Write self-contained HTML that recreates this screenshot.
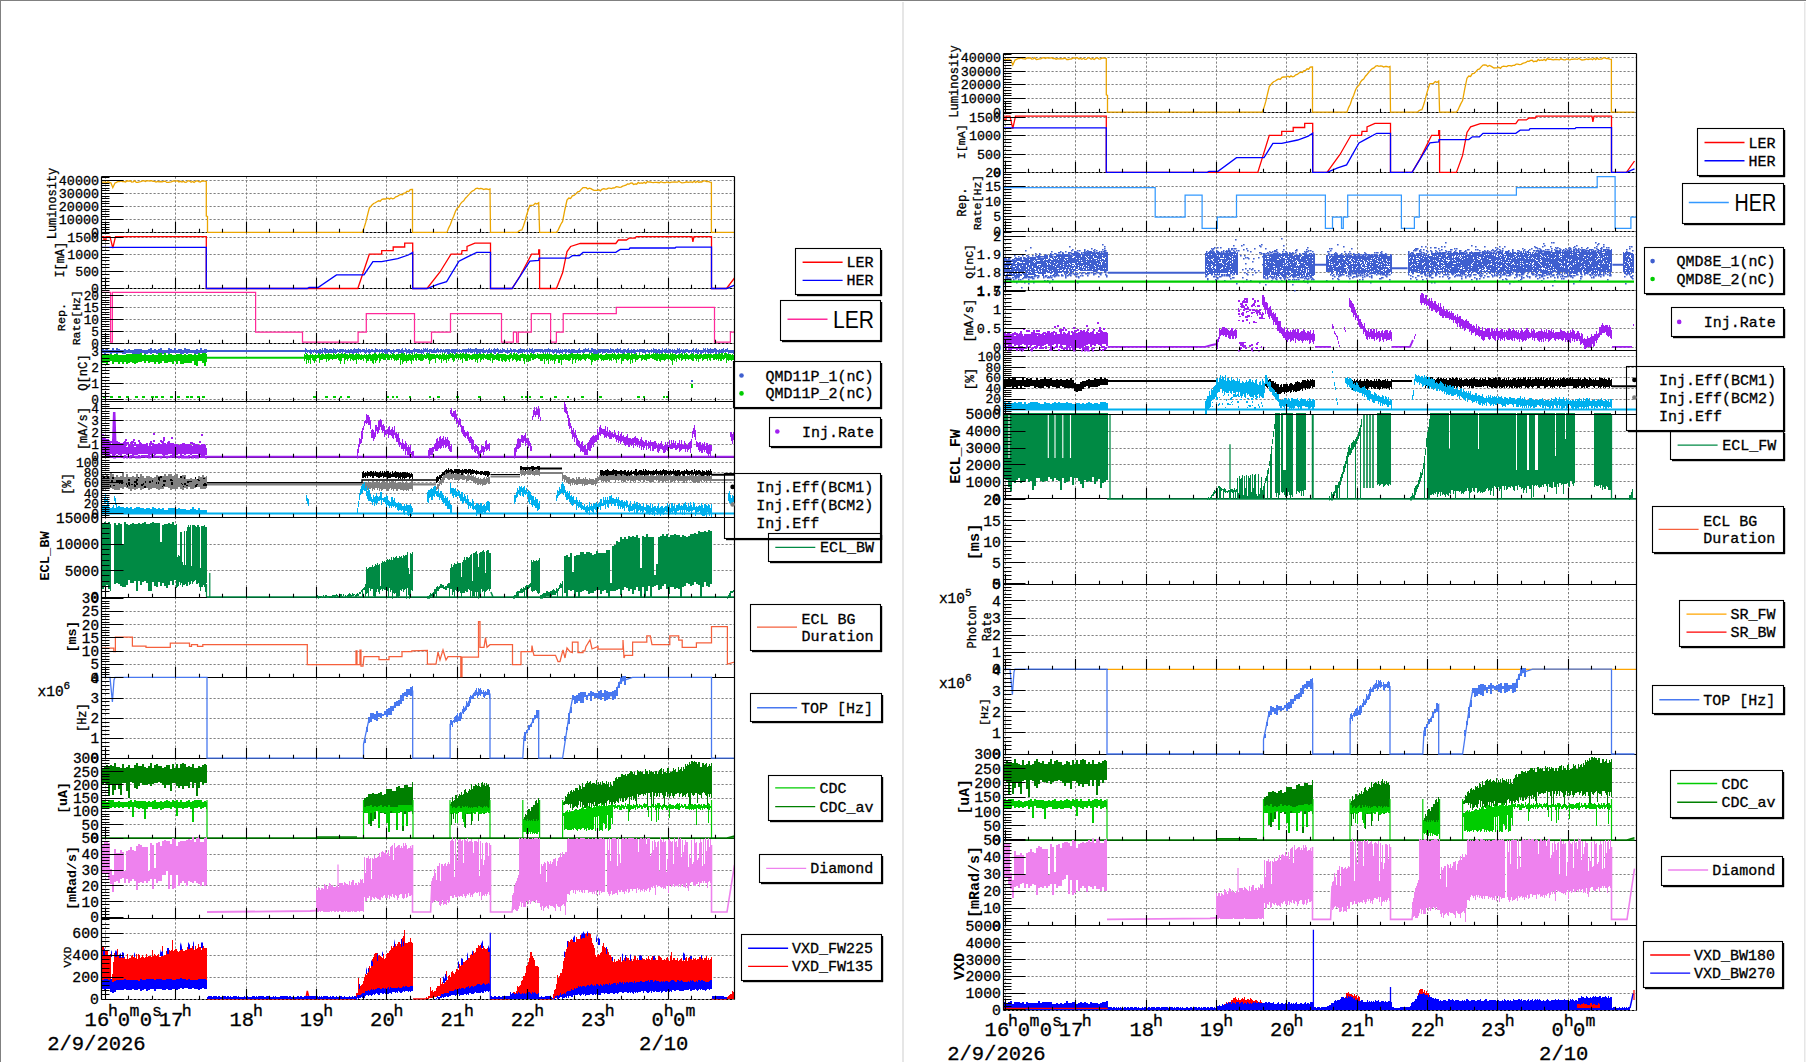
<!DOCTYPE html>
<html><head><meta charset="utf-8"><style>html,body{margin:0;padding:0;background:#fff;width:1806px;height:1062px;overflow:hidden}svg{display:block}</style></head><body>
<svg width="1806" height="1062" viewBox="0 0 1806 1062">
<rect x="0" y="0" width="1806" height="1062" fill="#fff"/>
<defs>
<clipPath id="cL_lumi"><rect x="101.5" y="175" width="633" height="58.9"/></clipPath>
<clipPath id="cL_I"><rect x="101.5" y="230.9" width="633" height="59.4"/></clipPath>
<clipPath id="cL_rep"><rect x="101.5" y="287.3" width="633" height="58.1"/></clipPath>
<clipPath id="cL_Q"><rect x="101.5" y="342.4" width="633" height="60.6"/></clipPath>
<clipPath id="cL_inj"><rect x="101.5" y="400" width="633" height="58.5"/></clipPath>
<clipPath id="cL_eff"><rect x="101.5" y="455.5" width="633" height="63"/></clipPath>
<clipPath id="cL_ecl"><rect x="101.5" y="515.5" width="633" height="83.2"/></clipPath>
<clipPath id="cL_ms"><rect x="101.5" y="595.7" width="633" height="83.3"/></clipPath>
<clipPath id="cL_top"><rect x="101.5" y="676" width="633" height="83.7"/></clipPath>
<clipPath id="cL_cdc"><rect x="101.5" y="756.7" width="633" height="82.9"/></clipPath>
<clipPath id="cL_dia"><rect x="101.5" y="836.6" width="633" height="83.2"/></clipPath>
<clipPath id="cL_vxd"><rect x="101.5" y="916.8" width="633" height="83.9"/></clipPath>
<clipPath id="cR_lumi"><rect x="1003.5" y="52" width="633" height="61.7"/></clipPath>
<clipPath id="cR_I"><rect x="1003.5" y="110.7" width="633" height="63.2"/></clipPath>
<clipPath id="cR_rep"><rect x="1003.5" y="170.9" width="633" height="61.8"/></clipPath>
<clipPath id="cR_Q"><rect x="1003.5" y="229.7" width="633" height="62.6"/></clipPath>
<clipPath id="cR_inj"><rect x="1003.5" y="289.3" width="633" height="62.2"/></clipPath>
<clipPath id="cR_eff"><rect x="1003.5" y="348.5" width="633" height="67.2"/></clipPath>
<clipPath id="cR_ecl"><rect x="1003.5" y="412.7" width="633" height="87.7"/></clipPath>
<clipPath id="cR_ms"><rect x="1003.5" y="497.4" width="633" height="88.1"/></clipPath>
<clipPath id="cR_pho"><rect x="1003.5" y="582.5" width="633" height="88.4"/></clipPath>
<clipPath id="cR_top"><rect x="1003.5" y="667.9" width="633" height="87.6"/></clipPath>
<clipPath id="cR_cdc"><rect x="1003.5" y="752.5" width="633" height="89.1"/></clipPath>
<clipPath id="cR_dia"><rect x="1003.5" y="838.6" width="633" height="88.6"/></clipPath>
<clipPath id="cR_vxd"><rect x="1003.5" y="924.2" width="633" height="87.3"/></clipPath>
</defs>
<g>
<path fill="none" stroke="#808080" stroke-width="1" stroke-dasharray="2.2 1.8" d="M105.5 176.5V232.4M175.5 176.5V232.4M246.5 176.5V232.4M316.5 176.5V232.4M386.5 176.5V232.4M457.5 176.5V232.4M527.5 176.5V232.4M597.5 176.5V232.4M668.5 176.5V232.4M101.5 219.5H734.5M101.5 206.5H734.5M101.5 193.5H734.5M101.5 180.5H734.5M105.5 232.4V288.8M175.5 232.4V288.8M246.5 232.4V288.8M316.5 232.4V288.8M386.5 232.4V288.8M457.5 232.4V288.8M527.5 232.4V288.8M597.5 232.4V288.8M668.5 232.4V288.8M101.5 271.5H734.5M101.5 254.5H734.5M101.5 237.5H734.5M105.5 288.8V343.9M175.5 288.8V343.9M246.5 288.8V343.9M316.5 288.8V343.9M386.5 288.8V343.9M457.5 288.8V343.9M527.5 288.8V343.9M597.5 288.8V343.9M668.5 288.8V343.9M101.5 331.5H734.5M101.5 319.5H734.5M101.5 307.5H734.5M101.5 295.5H734.5M105.5 343.9V401.5M175.5 343.9V401.5M246.5 343.9V401.5M316.5 343.9V401.5M386.5 343.9V401.5M457.5 343.9V401.5M527.5 343.9V401.5M597.5 343.9V401.5M668.5 343.9V401.5M101.5 399.5H734.5M101.5 383.5H734.5M101.5 367.5H734.5M101.5 351.5H734.5M105.5 401.5V457M175.5 401.5V457M246.5 401.5V457M316.5 401.5V457M386.5 401.5V457M457.5 401.5V457M527.5 401.5V457M597.5 401.5V457M668.5 401.5V457M101.5 444.5H734.5M101.5 432.5H734.5M101.5 420.5H734.5M101.5 408.5H734.5M105.5 457V517M175.5 457V517M246.5 457V517M316.5 457V517M386.5 457V517M457.5 457V517M527.5 457V517M597.5 457V517M668.5 457V517M101.5 513.5H734.5M101.5 503.5H734.5M101.5 493.5H734.5M101.5 482.5H734.5M101.5 472.5H734.5M101.5 462.5H734.5M105.5 517V597.2M175.5 517V597.2M246.5 517V597.2M316.5 517V597.2M386.5 517V597.2M457.5 517V597.2M527.5 517V597.2M597.5 517V597.2M668.5 517V597.2M101.5 570.5H734.5M101.5 544.5H734.5M105.5 597.2V677.5M175.5 597.2V677.5M246.5 597.2V677.5M316.5 597.2V677.5M386.5 597.2V677.5M457.5 597.2V677.5M527.5 597.2V677.5M597.5 597.2V677.5M668.5 597.2V677.5M101.5 664.5H734.5M101.5 651.5H734.5M101.5 637.5H734.5M101.5 624.5H734.5M101.5 611.5H734.5M105.5 677.5V758.2M175.5 677.5V758.2M246.5 677.5V758.2M316.5 677.5V758.2M386.5 677.5V758.2M457.5 677.5V758.2M527.5 677.5V758.2M597.5 677.5V758.2M668.5 677.5V758.2M101.5 738.5H734.5M101.5 718.5H734.5M101.5 698.5H734.5M105.5 758.2V838.1M175.5 758.2V838.1M246.5 758.2V838.1M316.5 758.2V838.1M386.5 758.2V838.1M457.5 758.2V838.1M527.5 758.2V838.1M597.5 758.2V838.1M668.5 758.2V838.1M101.5 824.5H734.5M101.5 811.5H734.5M101.5 798.5H734.5M101.5 784.5H734.5M101.5 771.5H734.5M105.5 838.1V918.3M175.5 838.1V918.3M246.5 838.1V918.3M316.5 838.1V918.3M386.5 838.1V918.3M457.5 838.1V918.3M527.5 838.1V918.3M597.5 838.1V918.3M668.5 838.1V918.3M101.5 901.5H734.5M101.5 885.5H734.5M101.5 870.5H734.5M101.5 854.5H734.5M105.5 918.3V999.2M175.5 918.3V999.2M246.5 918.3V999.2M316.5 918.3V999.2M386.5 918.3V999.2M457.5 918.3V999.2M527.5 918.3V999.2M597.5 918.3V999.2M668.5 918.3V999.2M101.5 977.5H734.5M101.5 955.5H734.5M101.5 933.5H734.5"/>
<path stroke="#000" stroke-width="1.1" stroke-dasharray="3 1" d="M101.5 232.5H734.5"/>
<path stroke="#000" stroke-width="1.1" stroke-dasharray="3 1" d="M101.5 288.5H734.5"/>
<path stroke="#000" stroke-width="1.1" stroke-dasharray="3 1" d="M101.5 343.5H734.5"/>
<path stroke="#000" stroke-width="1.1" d="M101.5 401.5H734.5"/>
<path stroke="#000" stroke-width="1.1" d="M101.5 457.5H734.5"/>
<path stroke="#000" stroke-width="1.1" d="M101.5 517.5H734.5"/>
<path stroke="#000" stroke-width="1.1" d="M101.5 597.5H734.5"/>
<path stroke="#000" stroke-width="1.1" d="M101.5 677.5H734.5"/>
<path stroke="#000" stroke-width="1.1" d="M101.5 758.5H734.5"/>
<path stroke="#000" stroke-width="1.1" d="M101.5 838.5H734.5"/>
<path stroke="#000" stroke-width="1.1" d="M101.5 918.5H734.5"/>
<path stroke="#000" stroke-width="1.1" stroke-dasharray="3 1" d="M101.5 999.5H734.5"/>
<g clip-path="url(#cL_lumi)">
<path fill="none" stroke="#eba500" stroke-width="1.3" d="M101.5 182.4L103.1 182.2H104.8L106.4 182.7L108 181.8L109.5 182.3L111 183L112.8 187.7L115 183L116.5 182.3L118 181.5L119.5 181.7L121 180.9L122.6 181.5L124.1 181.7L125.6 182L127.1 180.8L128.7 181.1L130.2 180.8L131.7 182.1L133.2 181.8L134.7 180.7L136.3 182.4L137.8 182.3L139.3 181.8L140.8 181.7L142.4 180.9L143.9 180.6L145.4 181.6L146.9 180.7L148.4 180.9L150 181L151.5 180.7L153 181.4H154.5L156.1 182.1L157.6 181.5L159.1 181.8L160.6 181.5L162.2 181.8L163.7 181.4L165.2 181.1L166.7 182.4H168.2L169.8 182.1L171.3 181.9L172.8 181.2L174.3 181L175.9 181.1L177.4 180.7L178.9 182L180.4 181.3L181.9 182.1L183.5 181.3L185 182.3L186.5 182.1L188 180.6L189.6 181L191.1 182.2L192.6 181.4L194.1 182.4L195.6 181.3L197.2 180.7L198.7 181.7L200.2 182L201.7 181.1L203.3 180.8L204.8 181.2L206.3 181.5V216L207.5 216.5V232.4H362.2L364 228L365.8 222.2L367.5 215.1L369.3 208L372 205L373.6 203.5L375.3 202.8L376.9 201.7L378.6 200.8L380.2 201.2L381.9 199.3L383.5 199H385L386.5 198.8L388 198.2L389.5 199.1L391 198L392.5 198.8L394 198.5L395.7 196.9L397.3 196.5L399 195.2L400.7 194.4L402.3 194.8L404 193L405.6 192.8L407.1 191.2L408.7 191.6L410.2 189.7L411.8 189.5H412.5V232.4H446.9L448.6 228.1L450.3 224.8L452 220L453.7 216.3L455.5 211.3L457.2 208.1L458.8 207.1L460.5 203.8L462.1 201.9L463.7 200.9L465.4 198.2L467 196.6L468.8 194.6L470.5 192.6L472.3 191.1L474 190.3L475.8 188.6L477.4 188.2L479 188.9L480.5 188.5L482.1 188.7L483.7 189.6L485.3 188.8L486.8 189L488.4 189.6L490 189L490.5 232.4H517.4L518.9 231L520.4 230.2L521.9 230L523.5 225.8L525.1 220.7L526.7 214.8L528.3 209.8L529.9 205.4L531.7 205.3L533.4 205.2L535.2 203.3L536.9 204.1L538.7 202.8L539.6 232.4H556.4L558 230.3L559.5 227.1L561 224L562.6 221.4L564.8 210L567 200.1L568.8 198L570.6 198.5L572.3 195.9L574.1 195.5L575.9 193.9L577.7 191.9L579.5 191.4L581.2 189.4L583 187.7L584.6 187.6L586.2 187.7L587.7 189L589.3 188.1L590.9 188.7L592.5 189.6L594 190.4L595.6 190.3L597.2 190.4L598.8 189.8L600.4 190.8L601.9 189.3L603.5 188.7L605.1 189L606.7 189.1L608.2 188.2H609.8L611.4 188.6L613 188L614.6 187.9L616.2 186.7L617.8 186.8L619.4 187.3L621.1 187.1L622.7 186.1L624.3 185.7L625.9 185.2L627.5 184L629.1 184.2L630.6 183.2L632.1 183L633.6 184.5L635.2 183.9L636.7 184.2L638.2 182.4L639.7 183.3L641.2 182.9L642.7 183.2L644.2 182.3L645.8 183.4L647.3 181.5L648.8 182.2L650.3 182L651.8 182.4L653.3 182.7L654.8 182.4H656.3L657.9 182.5L659.4 182.7L660.9 181.7L662.4 182.3L663.9 182.7H665.4L666.9 181.9L668.4 182.5L670 182.7L671.5 182.1L673 182.2L674.5 181.8L676 182.1L677.5 182.2L679 181.2L680.5 182.3L682 182.9L683.6 182.7L685.1 182.4L686.6 181.8L688.1 182.4L689.6 182.1L691.1 181.9L692.6 182.6L694.1 181.3L695.7 182.5L697.2 181.2L698.7 182.2L700.2 182H701.7L703.4 180.9L705 180.8L706.6 181.5H708.2L709.8 182.1L711.4 182.3V232.4H734.5"/>
</g>
<g clip-path="url(#cL_I)">
<path fill="none" stroke="#ff0000" stroke-width="1.3" d="M101.5 236.6H104V240H106V236.6H110L112.8 248L115.5 236.6H206.3V288.5H357.8L369.3 254.2H381.7V250.6H393.2V247H404.7V243.2H412.7V288.5H427L440 272L451 254.2H461.6L462 250.6H467V246.5L474.9 243.2H490.5V288.5H512L520 276L531.6 254.2H538.7V250H539.6V288.5H556.4L562.6 272.8L567 251.5L570.6 246.5L580.3 243.5H615.8L618.4 240H626.4L629 238.2H635.3L636.2 236.6H692L692.9 241.8L694 236.6H711.5V288.5H726.5L734.5 278"/>
<path fill="none" stroke="#0000ff" stroke-width="1.3" d="M101.5 247.4H206.3V288.5H307.3L309 287.5H318L336.5 274.9H364L372.9 261.6H381.7L397.7 258.6L408.3 255L412.7 252.4V288.5H427L437.7 284.3L446.6 281.6L459 261.2L466 257.7L476.7 252.4H490.5V288.5H512.1L529.9 261.2L538.7 260.4L539 258.2H568.8L572.4 255.6H579.5L583 252.4H615.8L620.2 249.4H629L630 248H675.1L676 247.1H711.5V288.5H726.5L734.5 285.2"/>
</g>
<g clip-path="url(#cL_rep)">
<path fill="none" stroke="#ff2a9a" stroke-width="1.25" d="M101.5 292.3H110.6V342.2H112.4V292.3H255.6V332.1H302.5V342.2H358.1V332.1H366.3V313.5H414.5V342.2H431.5V332.1H450.5V313.5H501.5V342.2H513.4V332.1H516.6V342.2H518.3V332.1H531.3V313.5H550.6V342.2H556.4V332.1H563.2V313.5H616.3V307.3H714.5V342.2H730.4V332.1H734.5"/>
</g>
<g clip-path="url(#cL_Q)">
<path fill="#3f5fcf" d="M102 349H104V350H106V349V348H108V349V350H110V349V350H112V348H114V349V350H116V349V348H118V349H120V350H122H124V349H126V348V350H128V349H130V350H132V348V350H134V349H136H138H140H142V348V350H144H146V349V350H148V349H150V350V348H152V350H154V349H156V348V350H158V349H160V348H162V350H164V349V350H166V349V350H168V348H170V349H172V350H174V348H176V350H178V349H180H182V350H184V348H186V349H188H190V350H192V349V350H194V349V350H196V349H198V348V350H200V349V348H202V350H204V349H206H207V348V353H206H204H202V354V353H200V354V353H198V354H196H194V353H192V354V353H190H188V354H186V353H184V354H182V353V354H180V353H178H176V354V353H174H172V354V353H170V354H168V353H166H164V354H162V353H160V354H158V353V354H156V353H154H152V354H150V353H148V354H146H144V353H142V354V353H140V354H138V353V354H136H134V353V354H132V353H130H128V354V353H126V354H124H122V353H120H118V354H116V353H114H112V354H110V353H108H106V354H104V353H102V354Z"/>
<path fill="none" stroke="#3f5fcf" stroke-width="2" d="M207 350.9H304"/>
<path fill="#3f5fcf" d="M304 350H305V348H306V349H307V350H308H309H310V349H311V350H312H313H314V349H315V350H316H317H318H319V349H320H321V350H322V348H323V350H324V348H325H326V349H327H328V350H329V349H330H331H332V350H333V348H334V349H335H336V350H337V349H338V350H339V349H340H341H342H343H344V350H345V349H346V350H347H348V349H349V350H350V349H351H352V350H353V349H354V348H355V349H356H357H358V348H359V349H360H361V350H362V349H363H364H365V350H366V348H367V350H368V349H369H370V350H371V349H372H373V350H374H375V348H376V349H377H378V350H379V349H380V350H381V349H382H383V350H384V349H385H386V350H387V349H388H389H390V350H391H392H393V349H394V350H395H396V349H397H398H399H400V350H401V349H402V348H403V350H404H405V348H406V349H407V350H408V349H409H410V350H411H412H413V349H414V348H415V349H416H417H418H419H420V350H421V349H422V350H423V348H424V349H425V348H426V349H427V348H428V350H429V349H430H431H432V350H433V349H434V348H435V350H436V349H437V348H438V349H439V350H440V349H441H442V350H443V349H444V350H445V349H446H447H448H449H450V350H451V349H452H453H454H455H456H457H458V350H459V349H460V350H461H462V349H463H464H465H466H467H468V348H469V349H470V348H471V349H472H473H474H475V348H476H477V349H478H479H480H481H482H483V348H484V350H485H486V349H487V350H488V349H489V348H490V350H491V349H492V350H493V349H494V348H495V349H496H497V348H498V349H499V350H500V349H501V350H502V348H503V349H504H505V350H506H507V348H508V350H509H510V348H511V349H512V350H513V349H514H515H516V350H517H518V349H519H520V348H521V349H522H523H524H525V350H526V349H527H528V350H529V348H530V349H531H532V348H533V350H534V349H535H536H537H538H539H540H541H542H543V350H544V349H545H546H547H548V348H549V349H550H551V350H552V349H553V350H554V349H555H556H557V350H558V348H559V350H560V349H561V350H562V349H563V350H564V349H565H566H567V350H568V349H569H570V350H571V349H572H573H574H575V350H576H577H578V349H579V348H580V350H581H582H583V349H584H585V348H586V349H587H588V348H589V350H590H591V348H592H593V349H594H595H596V350H597H598V349H599H600H601H602H603H604H605H606H607H608H609V350H610V348H611V349H612H613H614V350H615V349H616H617V348H618V349H619H620V348H621V350H622H623V349H624H625H626V350H627V349H628V348H629V350H630H631V349H632V350H633V349H634H635V350H636H637V349H638V350H639V349H640H641H642H643H644H645V350H646H647V349H648V350H649H650H651V349H652V350H653V348H654V349H655H656H657V350H658V349H659H660V350H661H662V348H663V350H664V349H665H666V348H667V350H668V349H669H670H671V350H672V349H673V350H674V349H675V350H676H677V348H678V349H679V348H680V350H681V349H682V350H683V349H684V350H685V349H686H687H688V350H689H690H691H692V349H693V348H694V350H695V349H696V348H697V350H698V349H699V350H700H701H702H703V348H704V349H705V348H706V350H707V348H708V349H709H710V348H711V349H712H713H714V348H715H716V349H717V350H718H719V349H720V350H721V349H722H723V348H724V350H725V349H726H727V348H728V350H729H730H731H732H733H734V349V353V354H733V353H732H731H730H729V354H728V352H727H726V353H725V352H724V353H723H722H721H720H719V354H718V352H717V354H716H715V352H714V353H713H712H711V354H710V353H709V354H708V353H707V352H706V354H705V352H704V353H703H702V354H701H700V352H699V354H698H697V353H696H695V352H694V354H693V352H692V354H691V352H690V353H689H688V352H687H686V353H685H684H683V354H682V352H681V353H680V354H679V353H678H677V354H676H675V353H674H673V354H672V352H671V354H670V353H669H668H667H666H665H664V352H663V353H662V354H661V353H660V354H659V353H658V354H657H656H655V353H654H653V352H652V353H651V352H650V353H649H648V352H647H646V354H645V353H644H643H642V352H641H640V353H639V352H638H637H636V354H635H634V353H633H632H631H630H629H628H627H626V352H625V354H624V353H623V354H622V353H621H620V352H619V353H618H617H616V352H615V353H614H613V352H612V353H611H610H609H608H607V352H606V353H605H604H603V354H602V352H601V353H600H599H598V354H597H596H595H594H593V352H592V354H591V353H590V354H589V352H588H587H586H585V353H584V354H583V353H582V352H581V353H580H579H578H577H576H575H574H573V354H572V353H571V354H570V353H569H568V352H567V353H566V354H565V352H564H563V354H562V353H561H560V354H559V353H558H557V354H556V352H555V353H554V354H553V353H552V352H551H550V354H549V352H548V354H547V352H546V354H545V352H544V353H543H542V352H541V353H540V352H539H538H537H536H535V353H534V354H533V353H532V354H531V352H530V353H529V352H528V354H527V352H526H525V353H524V352H523V353H522H521H520H519V354H518V353H517V352H516H515V353H514V352H513H512V354H511V352H510V353H509H508V354H507V353H506H505V352H504H503V353H502H501H500H499V354H498V352H497H496V354H495H494V353H493V352H492V353H491H490H489H488V354H487V352H486V353H485H484V354H483V353H482V352H481V354H480V353H479H478V354H477H476V352H475V354H474V352H473V353H472H471H470V352H469V353H468V352H467V354H466H465V352H464V353H463V352H462V353H461V352H460V353H459V352H458H457H456V354H455H454V353H453H452H451V352H450V354H449H448H447V352H446V353H445V354H444V352H443V353H442V352H441V353H440V352H439V353H438V352H437V353H436H435H434H433H432H431V352H430V354H429V352H428V354H427V352H426H425H424V354H423V353H422V354H421V353H420H419H418H417V352H416H415V354H414V352H413V353H412V354H411V353H410V354H409V353H408H407V354H406V352H405H404V354H403H402H401V353H400H399V354H398V352H397H396H395V353H394V354H393V352H392V354H391V353H390V352H389H388V354H387V353H386V354H385V353H384V352H383V354H382V352H381H380V354H379V352H378H377H376V353H375H374V352H373H372H371V353H370V354H369V353H368V352H367V353H366V354H365V353H364V352H363H362H361V353H360V352H359V354H358V353H357H356H355H354V354H353H352V353H351H350H349H348H347H346V354H345V352H344H343V354H342V352H341V353H340H339V352H338H337V353H336V354H335V353H334V354H333V353H332H331H330H329H328H327H326V354H325V353H324V352H323V354H322V353H321V354H320H319V353H318H317V354H316V353H315V352H314V353H313V352H312V354H311H310V353H309V352H308V353H307V352H306V354H305V352H304Z"/>
<path fill="#00cc00" d="M102 355V354H104V355V354H106V355H108H110V354H112V355H114V354H116V355V354H118V355H120H122V354V355H124H126V354H128H130H132V355V354H134V355V354H136H138H140V353H142V354V355H144V354H146V355H148H150V354V355H152V354H154V353V355H156V353V355H158V354V353H160V354V353H162V355H164V353H166V355H168V354H170H172V355H174V353V355H176V354H178H180H182V355H184V354H186V355H188V353V354H190H192V355H194V354H196V355H198V353H200V354H202V355V353H204H206V354H207V361V362H206V363V366H204V364V363H202V361H200V364V361H198V366H196V365H194V362V361H192V364V363H190V361V363H188V365V363H186V364V363H184V361V364H182V362V364H180V365V361H178V363V364H176V363V361H174V362V364H172V362H170H168V366V363H166H164V365V361H162V366V363H160V361V364H158V362H156V363V364H154V361V362H152V364V362H150V363H148V361H146V363H144V361H142V364V362H140H138V365V363H136V365V364H134V362V363H132V364V362H130V363H128V361V364H126V362H124V363V364H122V365V362H120V364H118V365V362H116H114V363V364H112V363V361H110V363V362H108V364V365H106V363H104V364V363H102V365Z"/>
<path fill="none" stroke="#00cc00" stroke-width="2" d="M207 357.7H304"/>
<path fill="#00cc00" d="M304 354H305V355H306V353H307V354H308V355H309H310V354H311V355H312V354H313V355H314H315V354H316V355H317H318V353H319V354H320V355H321V354H322H323H324V355H325V354H326H327H328V353H329V354H330H331H332V355H333V353H334V354H335V355H336V354H337H338V353H339V354H340H341V353H342V354H343H344V353H345V354H346H347H348V355H349V353H350V354H351H352H353H354V355H355V354H356V353H357V354H358H359H360V355H361V354H362V355H363H364V354H365V355H366V354H367V355H368V354H369H370H371V355H372V354H373H374V353H375H376V354H377V355H378V354H379V353H380V354H381V353H382V354H383V353H384V354H385H386H387H388H389V355H390V354H391V355H392V353H393V354H394H395V355H396V354H397H398H399H400H401V353H402H403V354H404V353H405V355H406V354H407V355H408V354H409H410H411V355H412V353H413V355H414V354H415H416V353H417V354H418H419H420H421H422H423V355H424V354H425V355H426V353H427V354H428V353H429V354H430H431H432H433H434H435V355H436V354H437H438V355H439V354H440H441V355H442V353H443V354H444V353H445V355H446V354H447V355H448V354H449H450V353H451V354H452V353H453V354H454V355H455V354H456V353H457V354H458H459H460V353H461V354H462V353H463H464V354H465H466V353H467V354H468H469H470V355H471H472V354H473H474H475H476H477H478H479V353H480V354H481H482H483V353H484V354H485V355H486V354H487H488H489H490V353H491H492V354H493H494V355H495H496V354H497V353H498V354H499H500H501H502H503H504H505H506V355H507H508H509V354H510V353H511V354H512V355H513V353H514H515V354H516V353H517V354H518V355H519H520V354H521H522V353H523V354H524H525H526V355H527V354H528H529V355H530V353H531H532V354H533H534H535H536V355H537V353H538V354H539H540H541H542H543V353H544V354H545H546H547V353H548V354H549H550H551H552V355H553H554V354H555H556H557V355H558H559H560V354H561H562V355H563V354H564H565H566H567V355H568V354H569H570H571V353H572H573V354H574H575H576H577V353H578V354H579H580H581V355H582V354H583V353H584V354H585H586H587H588H589V353H590V355H591V353H592H593V354H594H595H596H597H598V353H599V355H600V354H601H602V355H603H604H605V354H606V353H607V354H608H609H610H611H612V353H613V354H614V353H615V354H616V355H617V354H618V353H619V354H620H621H622H623V353H624V354H625H626H627V353H628H629H630V355H631V353H632V354H633H634H635H636V353H637V355H638H639V353H640V355H641H642V354H643V355H644H645V354H646H647H648H649V353H650V355H651V354H652H653V353H654V354H655V353H656V354H657V353H658V354H659H660H661H662V353H663V354H664H665V353H666V354H667H668H669V355H670V353H671V354H672V353H673V354H674H675H676V355H677H678V354H679H680H681V353H682V354H683V355H684V353H685V354H686V353H687V354H688V355H689H690V354H691H692V353H693V354H694V355H695V354H696H697H698V355H699V354H700H701H702V355H703V354H704H705H706H707H708H709H710H711H712V355H713V354H714H715H716H717H718H719V353H720V354H721V353H722H723V355H724V353H725H726H727V354H728H729H730H731V355H732V354H733V355H734V354V362V359V360H733H732V361H731V360H730H729V361H728V360H727V363H726V358H725V359H724V360H723V359H722V361H721H720V359H719V361H718V359H717V360H716V359H715V360H714H713V358H712H711V361H710V360H709V358H708V361H707V359H706H705H704V360H703V361H702V358H701V359H700H699V362H698V359H697V361H696V359H695V358H694V361H693H692V360H691V359H690H689V360H688V359H687H686V361H685V359H684H683V360H682V361H681V358H680V360H679V359H678V358H677V362H676V359H675V361H674V360H673V365H672V361H671V360H670V359H669V360H668V359H667H666V360H665V361H664V360H663H662H661V362H660V361H659V359H658V361H657H656V360H655H654V359H653H652V358H651H650V359H649H648H647V361H646V360H645H644V359H643V360H642V361H641V358H640H639V359H638V360H637H636V362H635V359H634H633V363H632V360H631V364H630V359H629V360H628V361H627V360H626V359H625H624V361H623H622V364H621V358H620V359H619V360H618V359H617V363H616V360H615V359H614V360H613V358H612V361H611V360H610V361H609V359H608V360H607H606H605H604V361H603V360H602V361H601V359H600V358H599V360H598H597H596V361H595H594V360H593V362H592V365H591V360H590V359H589H588V358H587V359H586V361H585V360H584V359H583H582V360H581V361H580V360H579V361H578V359H577V360H576V363H575V359H574V360H573V364H572V358H571V360H570V361H569H568V360H567H566H565V359H564V360H563H562V365H561V360H560V363H559H558V359H557H556V361H555V364H554V360H553V361H552V360H551V361H550V359H549V364H548V360H547V361H546V359H545V364H544V359H543V361H542H541H540V359H539H538V358H537H536V359H535H534V360H533H532V358H531V361H530H529V362H528V360H527V362H526V359H525V364H524V361H523V358H522H521V361H520H519V360H518V361H517V362H516V360H515V359H514V360H513V361H512V358H511V359H510V362H509V360H508V359H507V361H506V362H505V361H504V360H503V362H502V361H501V358H500V361H499H498V360H497H496V359H495V360H494H493V363H492V358H491V361H490V360H489H488H487V359H486H485V358H484V360H483V359H482V360H481V362H480V358H479V359H478V363H477V360H476V362H475V359H474H473V360H472H471V359H470V360H469V358H468V361H467H466H465V359H464V358H463V363H462V359H461V360H460V358H459V360H458V358H457V359H456V358H455V361H454V362H453V360H452V358H451H450V359H449V361H448V359H447V363H446V360H445H444V361H443V359H442V363H441V359H440V360H439V359H438V358H437H436V363H435V359H434H433H432V360H431V361H430V364H429V360H428V358H427V359H426H425V358H424V360H423V361H422H421H420V360H419H418V358H417V361H416V360H415V358H414V361H413V360H412V364H411V361H410V360H409V361H408H407V363H406V361H405H404V362H403V364H402V360H401V365H400V358H399V360H398H397V361H396V360H395V361H394V359H393V358H392V360H391V358H390V360H389H388H387V358H386V360H385H384H383V359H382H381V361H380V363H379V358H378V360H377V361H376V363H375V360H374V364H373V363H372V361H371H370V359H369V361H368H367V363H366V359H365V358H364V361H363V359H362V360H361H360V359H359V360H358V359H357V364H356V360H355H354V361H353V360H352V359H351V361H350V358H349V359H348V361H347V359H346V360H345V364H344V358H343H342V361H341V364H340V361H339V360H338V358H337V359H336H335H334H333V360H332V359H331H330V360H329V361H328V359H327V362H326V359H325H324H323V360H322H321H320V363H319V358H318H317V359H316V361H315V363H314V361H313V360H312V358H311V364H310V360H309V363H308V360H307V364H306V359H305V361H304Z"/>
<path fill="#00cc00" d="M103 396H106V398H103Z"/>
<path fill="#00cc00" d="M110 396H113V398H110Z"/>
<path fill="#00cc00" d="M118 396H121V398H118Z"/>
<path fill="#00cc00" d="M126 396H129V398H126Z"/>
<path fill="#00cc00" d="M135 396H138V398H135Z"/>
<path fill="#00cc00" d="M142 396H145V398H142Z"/>
<path fill="#00cc00" d="M151 396H154V398H151Z"/>
<path fill="#00cc00" d="M155 396H158V398H155Z"/>
<path fill="#00cc00" d="M161 396H164V398H161Z"/>
<path fill="#00cc00" d="M170 396H173V398H170Z"/>
<path fill="#00cc00" d="M177 396H180V398H177Z"/>
<path fill="#00cc00" d="M186 396H189V398H186Z"/>
<path fill="#00cc00" d="M190 396H193V398H190Z"/>
<path fill="#00cc00" d="M197 396H200V398H197Z"/>
<path fill="#00cc00" d="M202 396H205V398H202Z"/>
<path fill="#00cc00" d="M313 396H316V398H313Z"/>
<path fill="#00cc00" d="M325 396H328V398H325Z"/>
<path fill="#00cc00" d="M333 396H336V398H333Z"/>
<path fill="#00cc00" d="M340 396H342V398H340Z"/>
<path fill="#00cc00" d="M347 396H350V398H347Z"/>
<path fill="#00cc00" d="M387 396H389V398H387Z"/>
<path fill="#00cc00" d="M392 396H394V398H392Z"/>
<path fill="#00cc00" d="M396 396H398V398H396Z"/>
<path fill="#00cc00" d="M409 396H411V398H409Z"/>
<path fill="#00cc00" d="M429 396H431V398H429Z"/>
<path fill="#00cc00" d="M437 396H440V398H437Z"/>
<path fill="#00cc00" d="M456 396H459V398H456Z"/>
<path fill="#00cc00" d="M478 396H481V398H478Z"/>
<path fill="#00cc00" d="M503 396H505V398H503Z"/>
<path fill="#00cc00" d="M521 396H523V398H521Z"/>
<path fill="#00cc00" d="M525 396H528V398H525Z"/>
<path fill="#00cc00" d="M529 396H531V398H529Z"/>
<path fill="#00cc00" d="M540 396H543V398H540Z"/>
<path fill="#00cc00" d="M554 396H557V398H554Z"/>
<path fill="#00cc00" d="M567 396H569V398H567Z"/>
<path fill="#00cc00" d="M581 396H584V398H581Z"/>
<path fill="#00cc00" d="M599 396H602V398H599Z"/>
<path fill="#00cc00" d="M637 396H640V398H637Z"/>
<path fill="#00cc00" d="M643 396H645V398H643Z"/>
<path fill="#00cc00" d="M663 396H665V398H663Z"/>
<path fill="#00cc00" d="M666 396H669V398H666Z"/>
<path fill="#3f5fcf" d="M691 380H693V382H691Z"/>
<path fill="#00cc00" d="M691 384H693V388H691Z"/>
</g>
<g clip-path="url(#cL_inj)">
<path fill="#a020f0" d="M102 435V437H104V436V438H106V441H108H110V444H112V442H114V444H116V445V443H118V445V442H120V446V443H122V445H124V443V444H126V445V447H128V444H130V445H132V444V445H134V443V447H136V445H138H140V443H142V444V446H144V445V444H146V446V443H148V444V446H150H152V445H154V444H156H158V447V444H160V446V447H162V446V445H164V444H166V447V446H168V444H170V445H172V447V445H174V447V444H176V447V445H178V447H180V445H182V444H184V446H186V445V444H188V445V444H190V446V445H192V446V447H194V446H196V445H198V446V447H200V448V446H202V447V446H204V445H206V447V448H207V445V454V455H206V454V455H204H202V454V455H200V454V455H198V454H196V455V454H194V455V454H192V455H190V454H188H186V455H184V454H182V455H180V454H178V455H176V454V455H174H172V454H170H168V455H166H164V454V455H162V454H160V455V454H158H156V455H154V454H152V455H150V454V455H148V454H146V455V454H144V455V454H142V455V454H140V455V454H138V455H136V454V455H134V454V455H132V454H130V455V454H128V455H126V454H124H122V455H120H118V454H116V455H114V454V455H112V454H110V455H108V454H106V455H104V454V455H102V454Z"/>
<path fill="#a020f0" d="M133 439h2v2h-2zM138 440h2v2h-2zM107 455h2v2h-2zM122 444h2v2h-2zM167 456h2v2h-2zM121 443h2v2h-2zM116 455h2v2h-2zM149 456h2v2h-2zM128 456h2v2h-2zM191 442h2v2h-2zM201 444h2v2h-2zM186 456h2v2h-2zM159 456h2v2h-2zM108 441h2v2h-2zM114 458h2v2h-2zM139 445h2v2h-2zM120 455h2v2h-2zM139 457h2v2h-2zM150 443h2v2h-2zM119 456h2v2h-2zM153 455h2v2h-2zM157 445h2v2h-2zM122 461h2v2h-2zM139 442h2v2h-2zM124 455h2v2h-2zM102 437h2v2h-2zM182 455h2v2h-2zM136 456h2v2h-2zM170 455h2v2h-2zM185 456h2v2h-2zM152 455h2v2h-2zM172 443h2v2h-2zM196 444h2v2h-2zM122 445h2v2h-2zM172 444h2v2h-2zM150 456h2v2h-2zM153 445h2v2h-2zM202 446h2v2h-2zM138 457h2v2h-2zM198 445h2v2h-2zM145 455h2v2h-2zM110 441h2v2h-2zM140 443h2v2h-2zM181 455h2v2h-2zM146 443h2v2h-2zM120 459h2v2h-2zM198 446h2v2h-2zM144 455h2v2h-2zM153 444h2v2h-2zM146 455h2v2h-2zM173 455h2v2h-2zM130 455h2v2h-2zM190 445h2v2h-2zM160 457h2v2h-2zM142 455h2v2h-2zM137 444h2v2h-2zM143 444h2v2h-2zM184 446h2v2h-2zM139 442h2v2h-2zM131 455h2v2h-2zM105 455h2v2h-2zM136 444h2v2h-2zM184 444h2v2h-2zM151 455h2v2h-2zM138 455h2v2h-2zM154 444h2v2h-2zM171 437h2v2h-2zM189 459h2v2h-2zM122 443h2v2h-2zM184 457h2v2h-2zM162 443h2v2h-2zM201 446h2v2h-2zM134 444h2v2h-2zM203 456h2v2h-2zM152 444h2v2h-2zM163 439h2v2h-2zM165 445h2v2h-2zM188 458h2v2h-2zM163 437h2v2h-2zM159 444h2v2h-2zM203 444h2v2h-2zM160 440h2v2h-2zM124 455h2v2h-2zM185 457h2v2h-2zM123 443h2v2h-2zM107 439h2v2h-2zM105 455h2v2h-2zM183 461h2v2h-2zM116 456h2v2h-2zM138 455h2v2h-2zM185 456h2v2h-2zM125 442h2v2h-2zM132 441h2v2h-2zM181 458h2v2h-2zM131 441h2v2h-2zM112 439h2v2h-2zM141 444h2v2h-2zM131 441h2v2h-2zM188 455h2v2h-2zM108 455h2v2h-2zM169 443h2v2h-2zM197 445h2v2h-2zM178 457h2v2h-2zM192 443h2v2h-2zM137 444h2v2h-2zM198 455h2v2h-2zM184 444h2v2h-2zM150 441h2v2h-2zM173 444h2v2h-2zM167 442h2v2h-2zM145 455h2v2h-2zM148 455h2v2h-2zM109 455h2v2h-2zM123 442h2v2h-2zM109 442h2v2h-2zM149 457h2v2h-2zM138 456h2v2h-2zM123 457h2v2h-2zM166 457h2v2h-2zM162 442h2v2h-2zM126 457h2v2h-2zM145 456h2v2h-2zM123 442h2v2h-2zM188 446h2v2h-2zM170 444h2v2h-2zM178 445h2v2h-2zM158 445h2v2h-2zM162 444h2v2h-2zM194 444h2v2h-2zM199 463h2v2h-2zM176 459h2v2h-2zM166 444h2v2h-2zM123 463h2v2h-2zM136 458h2v2h-2zM191 446h2v2h-2zM199 456h2v2h-2zM127 442h2v2h-2zM195 459h2v2h-2zM153 445h2v2h-2zM131 442h2v2h-2zM149 443h2v2h-2zM188 445h2v2h-2zM129 457h2v2h-2zM130 442h2v2h-2zM116 444h2v2h-2zM153 440h2v2h-2zM200 446h2v2h-2zM177 445h2v2h-2zM109 463h2v2h-2zM195 457h2v2h-2zM153 433h2v2h-2zM104 456h2v2h-2zM165 444h2v2h-2zM170 461h2v2h-2zM153 459h2v2h-2zM141 455h2v2h-2zM106 456h2v2h-2zM109 441h2v2h-2zM164 443h2v2h-2zM203 456h2v2h-2zM186 458h2v2h-2zM194 455h2v2h-2zM109 455h2v2h-2zM146 444h2v2h-2zM205 457h2v2h-2zM124 441h2v2h-2zM176 444h2v2h-2zM181 457h2v2h-2zM190 442h2v2h-2zM201 444h2v2h-2zM168 441h2v2h-2zM151 455h2v2h-2zM105 439h2v2h-2zM102 434h2v2h-2zM172 445h2v2h-2zM131 455h2v2h-2zM183 456h2v2h-2zM201 455h2v2h-2zM169 443h2v2h-2zM180 444h2v2h-2zM149 445h2v2h-2zM201 434h2v2h-2zM158 443h2v2h-2zM113 455h2v2h-2zM170 456h2v2h-2zM174 455h2v2h-2zM139 443h2v2h-2zM148 457h2v2h-2zM199 441h2v2h-2zM163 455h2v2h-2zM182 443h2v2h-2zM138 455h2v2h-2zM155 444h2v2h-2zM136 458h2v2h-2zM180 455h2v2h-2zM176 445h2v2h-2zM122 444h2v2h-2zM184 444h2v2h-2zM120 455h2v2h-2zM201 456h2v2h-2zM159 456h2v2h-2zM178 462h2v2h-2zM132 455h2v2h-2zM200 445h2v2h-2zM179 446h2v2h-2zM156 445h2v2h-2zM116 441h2v2h-2zM125 444h2v2h-2zM113 457h2v2h-2zM150 456h2v2h-2zM192 457h2v2h-2zM161 444h2v2h-2zM196 455h2v2h-2zM187 457h2v2h-2zM196 444h2v2h-2zM161 441h2v2h-2zM158 445h2v2h-2zM156 444h2v2h-2zM160 445h2v2h-2zM145 455h2v2h-2zM134 442h2v2h-2zM193 443h2v2h-2zM185 459h2v2h-2zM139 444h2v2h-2zM182 457h2v2h-2zM171 446h2v2h-2zM148 455h2v2h-2zM135 457h2v2h-2zM185 460h2v2h-2zM143 455h2v2h-2zM199 456h2v2h-2zM197 457h2v2h-2zM171 443h2v2h-2zM137 456h2v2h-2zM183 443h2v2h-2zM152 443h2v2h-2zM162 441h2v2h-2zM200 445h2v2h-2zM114 458h2v2h-2zM125 439h2v2h-2zM203 455h2v2h-2zM152 443h2v2h-2zM162 444h2v2h-2zM142 445h2v2h-2zM131 443h2v2h-2zM130 458h2v2h-2zM166 456h2v2h-2zM163 444h2v2h-2zM162 444h2v2h-2zM118 456h2v2h-2zM133 444h2v2h-2zM186 446h2v2h-2zM117 463h2v2h-2zM191 458h2v2h-2zM112 455h2v2h-2zM157 444h2v2h-2zM193 445h2v2h-2zM171 455h2v2h-2zM203 456h2v2h-2zM172 443h2v2h-2zM105 455h2v2h-2zM182 443h2v2h-2zM192 455h2v2h-2z"/>
<path fill="none" stroke="#a020f0" stroke-width="2.5" d="M113 450L114.2 412L115.5 450"/>
<path fill="#a020f0" d="M357 449H358V444H359V445V438H360V439H361V431H362V428H363V426H364V421H365V420H366V414H367V413V415H368H369V417H370V420H371V427V430H372V429H373V430H374V432H375V427V425H376H377V427H378V421H379V419V420H380V419H381V420H382V425H383V422V424H384V426H385V430H386H387V426V429H388V427H389V426H390V430H391V428V429H392V427H393V430H394V426H395V432V433H396V432H397V434H398V433H399V438H400V442H401V443H402V439H403V444V443H404V444H405V441H406V443H407V445V447H408V445H409V447H410V445H411V446V452H412V451H413H414V461V458H413V456H412V455H411V458V453H410V456H409V455H408H407V450V451H406V455H405V449H404V451H403V448V449H402H401V445H400V447H399V443V445H398V442H397H396V438H395V437V435H394V439H393V438H392V436H391V435H390H389V438H388V434H387V439V434H386V435H385V437H384V431H383V434V433H382V430H381V427H380V430H379V429V433H378V434H377V431H376V437H375V438V439H374V441H373V438H372H371V432V429H370V425H369H368V423H367V417V424H366V423H365V426H364V430H363V435V439H362V443H361V444H360V447H359V452V453H358V460H357Z"/>
<path fill="#a020f0" d="M428 450H429V448H430V449V448H431H432V447H433H434V442V444H435V443H436V439H437V438H438V442V441H439V437H440V436H441V439H442V435V438H443V436H444V440H445V437H446V438V439H447V437H448V440H449V441H450V443V446H451V444H452V445V458V452H451H450V453V451H449V449H448V446H447V447H446V448H445V445H444V448H443V446H442V444V448H441V449H440V448H439V449H438V446V451H437H436H435V449H434V450V452H433V455H432H431H430V458V460H429V457H428Z"/>
<path fill="#a020f0" d="M450 410H451V408H452V412V413H453V411H454H455V410H456V415V414H457V418H458V420H459V418H460V423V419H461V425H462V426H463H464V430H465V432H466H467V431H468V432H469V437H470V436H471V437H472V440V439H473V440H474V446H475V444H476V447V445H477V446H478V447H479V451H480V449V450H481V445H482V446H483H484V444V447H485V441H486V440H487V444H488V439V444H489V443H490V437V449V451H489V449H488V450H487V451H486V449H485V452H484V451V455H483V452H482V453H481V455H480V456H479V459H478V454H477V451H476V455V453H475V452H474V449H473V450H472V448V449H471V443H470H469V441H468V440V439H467V436H466V438H465V437H464V435V436H463V434H462V432H461V427H460V425H459V427H458V422H457V424H456V422V419H455V420H454V417H453H452V419V416H451V414H450Z"/>
<path fill="#a020f0" d="M514 448H515V447H516V444H517V439H518V438H519V439H520V437V439H521V435H522H523V436H524V435H525V433H526V438H527V439H528V435V438H529V441H530V443H531V446H532V450V453V458V455V451H531H530V446H529V448H528V447V445H527V443H526V446H525V441H524V443H523H522V442H521V447H520V444V448H519V449H518H517V452H516V456H515V460H514Z"/>
<path fill="#a020f0" d="M532 416H533V410H534V407H535V411H536V407H537V409H538V406H539V411V409H540V417H541V419V429V421H540V417H539V416V419H538V415H537H536V417H535V415H534V417H533V420H532V425Z"/>
<path fill="#a020f0" d="M564 402H565V404H566V407H567V411H568V414V415H569V418H570V423H571V426H572V424V430H573V428H574V433H575V430H576V435H577V438H578V440H579V441H580V444H581V442H582V441H583V446H584V445H585H586V449H587V443H588V445V442H589V440H590V438H591V437H592V439V436H593V435H594V436H595V435H596V431V435H597V429H598V432H599V427H600V425H601V428H602V429H603H604V427V429H605V426H606V431H607V427H608V431V432H609V430H610V431H611V433H612V432H613V434H614V430H615V433H616V435H617H618V431H619V436H620V434H621V432H622V436H623V435H624V434V437H625H626V436H627V434H628V437V438H629H630H631V439H632V438H633H634V437H635V436H636V440V438H637H638V439H639V441H640V439H641V437H642V440H643V441H644V440V442H645V440H646H647V443H648V438V441H649V442H650V440H651V442H652V439V442H653H654V441H655H656V445V443H657V445H658V443H659V444H660V442V443H661V441H662V444H663V446H664V442V445H665V442H666V445H667V442H668V445H669V440H670V445H671V440H672V443H673V440H674V443H675V441H676V442V445H677V443H678H679V440H680V442V444H681V440H682V444H683V445H684V442V441H685V443H686V445H687H688V441V443H689V442H690V441H691V439H692V435V431H693V428H694V425H695V430H696V437V441H697V442H698V443H699V442H700V444V442H701V445H702V443H703V444H704V446V442H705V446H706V443H707H708V445H709V444H710V445H711H712V446V447V455V454V451H711V456H710V454H709V456H708V453V454H707V453H706V450H705V452H704V450H703V453H702H701V451H700V452H699V450H698V447H697H696V445V440H695V437H694V434H693V438H692V442V448H691V453H690V449H689V450H688V452H687V449H686V452H685V449H684H683H682V450H681V451H680V450V452H679V448H678V449H677V450H676V453V450H675V448H674H673V449H672V451V449H671H670V448H669V449H668V452V451H667V450H666V452H665V453H664V449V453H663V450H662V449H661H660V452V451H659V453H658V452H657V448H656V452V449H655H654V451H653H652V446H651V451H650V448H649V449H648V451V446H647V450H646V446H645V448H644V446V450H643V447H642V450H641V446H640V445V448H639V445H638V447H637V445H636V444V446H635V443H634V448H633V445H632V443V446H631V444H630V447H629H628V445H627H626V446H625V445H624V443H623V441H622V442H621V444H620V442V441H619V443H618V440H617V442H616V439H615V437H614V438H613V437H612V440V439H611H610H609V437H608V436H607V438H606V437H605V438H604V435H603V434H602H601V436H600V437V435H599V440H598H597V442H596V439V442H595V443H594V447H593V445H592V446V448H591V451H590H589V450H588V452V455H587H586H585H584V456V452H583H582V451H581V452H580V446V448H579V447H578V446H577V445H576V441V438H575V442H574V437H573V439H572V434H571V428H570V429H569V426H568V424V418H567V414H566V413H565V412H564Z"/>
<path fill="#a020f0" d="M730 432H731H732V431V434H733V432H734V434V438V442V445V440H733V444H732V440V441H731V437H730Z"/>
<path fill="none" stroke="#a020f0" stroke-width="1.9" d="M101.5 456.8H734.5"/>
</g>
<g clip-path="url(#cL_eff)">
<path fill="none" stroke="#808080" stroke-width="2.2" d="M207 484.4H436"/>
<path fill="none" stroke="#000" stroke-width="1.4" d="M207 482.6H362V480H436"/>
<path fill="#808080" d="M102 474H104V477H106V475H108V477H110V473H112V475V474H114V475V477H116V474V475H118V477H120V476H122V478V473H124V475V477H126V474H128V475V477H130V478V477H132V476H134V477H136V474H138V476V477H140V474H142V476H144V478H146V476H148V477V476H150V474V477H152V476V478H154V477H156V474V475H158V478V476H160H162V477V476H164V475V474H166V478V476H168V477V474H170V478V474H172V476H174V475H176V478V474H178V476V478H180V477V478H182V477V475H184V477V475H186V476V479H188V476V479H190V477V478H192V477V479H194V476V479H196V475V479H198V478V476H200V478V477H202V475H204V476V477H206V476H207V478V486V488H206V487V489H204V487V489H202V486V489H200V487H198H196V488H194V489H192V488V489H190V488V487H188V489H186V487V488H184V489V490H182V489H180V487H178V489H176H174H172V488V490H170V489V488H168V487H166H164V489H162H160V488V490H158V489H156V488H154V489V488H152V489H150V490H148V487V488H146V487V488H144V489H142V488V490H140V489V488H138V489H136V488V490H134V489H132V491H130V490V489H128V487V488H126V489V487H124V488V489H122V488H120V490H118H116H114V489H112V490V488H110V490V489H108V488V489H106V490V489H104V490H102V489Z"/>
<path fill="#000" d="M113 485H115V486H113Z"/>
<path fill="#000" d="M129 484H130V486H129Z"/>
<path fill="#000" d="M183 486H184V487H183Z"/>
<path fill="#000" d="M186 485H188V486H186Z"/>
<path fill="#000" d="M203 484H205V486H203Z"/>
<path fill="#000" d="M136 479H138V481H136Z"/>
<path fill="#000" d="M116 480H118V482H116Z"/>
<path fill="#000" d="M121 483H123V484H121Z"/>
<path fill="#000" d="M111 480H113V482H111Z"/>
<path fill="#000" d="M184 483H186V485H184Z"/>
<path fill="#000" d="M103 477H105V478H103Z"/>
<path fill="#000" d="M138 477H139V478H138Z"/>
<path fill="#000" d="M160 476H162V478H160Z"/>
<path fill="#000" d="M163 484H165V486H163Z"/>
<path fill="#000" d="M189 481H191V482H189Z"/>
<path fill="#000" d="M182 484H183V485H182Z"/>
<path fill="#000" d="M158 477H160V478H158Z"/>
<path fill="#000" d="M156 482H157V484H156Z"/>
<path fill="#000" d="M181 483H182V484H181Z"/>
<path fill="#000" d="M203 478H205V479H203Z"/>
<path fill="#000" d="M107 477H109V478H107Z"/>
<path fill="#000" d="M120 482H122V483H120Z"/>
<path fill="#000" d="M198 480H200V481H198Z"/>
<path fill="#000" d="M143 483H144V485H143Z"/>
<path fill="#000" d="M195 477H196V479H195Z"/>
<path fill="#000" d="M197 479H199V480H197Z"/>
<path fill="#000" d="M158 482H159V484H158Z"/>
<path fill="#000" d="M171 482H173V483H171Z"/>
<path fill="#000" d="M134 485H136V487H134Z"/>
<path fill="#000" d="M171 483H173V485H171Z"/>
<path fill="#000" d="M119 483H120V484H119Z"/>
<path fill="#000" d="M134 481H136V483H134Z"/>
<path fill="#000" d="M128 479H130V481H128Z"/>
<path fill="#000" d="M145 481H146V483H145Z"/>
<path fill="#000" d="M187 481H189V483H187Z"/>
<path fill="#000" d="M144 486H146V488H144Z"/>
<path fill="#000" d="M165 480H166V482H165Z"/>
<path fill="#000" d="M195 485H197V487H195Z"/>
<path fill="#000" d="M159 480H160V481H159Z"/>
<path fill="#000" d="M135 481H137V483H135Z"/>
<path fill="#000" d="M158 478H160V480H158Z"/>
<path fill="#000" d="M163 480H165V482H163Z"/>
<path fill="#000" d="M152 480H153V482H152Z"/>
<path fill="#000" d="M172 480H173V481H172Z"/>
<path fill="#000" d="M134 486H136V487H134Z"/>
<path fill="#000" d="M121 480H123V482H121Z"/>
<path fill="#000" d="M118 480H120V482H118Z"/>
<path fill="#000" d="M196 484H198V485H196Z"/>
<path fill="#000" d="M141 484H143V486H141Z"/>
<path fill="#000" d="M162 486H163V487H162Z"/>
<path fill="#000" d="M120 480H122V482H120Z"/>
<path fill="#000" d="M180 476H182V478H180Z"/>
<path fill="#000" d="M136 483H138V485H136Z"/>
<path fill="#000" d="M204 483H206V485H204Z"/>
<path fill="#000" d="M128 483H130V485H128Z"/>
<path fill="#000" d="M134 484H135V485H134Z"/>
<path fill="#000" d="M190 481H192V482H190Z"/>
<path fill="#000" d="M128 482H130V483H128Z"/>
<path fill="#000" d="M126 483H127V485H126Z"/>
<path fill="#000" d="M203 484H204V485H203Z"/>
<path fill="#000" d="M110 485H111V487H110Z"/>
<path fill="#000" d="M144 486H145V487H144Z"/>
<path fill="#000" d="M127 485H128V487H127Z"/>
<path fill="#000" d="M205 484H207V486H205Z"/>
<path fill="#000" d="M186 485H187V486H186Z"/>
<path fill="#000" d="M184 477H185V479H184Z"/>
<path fill="#000" d="M131 484H133V485H131Z"/>
<path fill="#000" d="M112 477H114V479H112Z"/>
<path fill="#000" d="M170 479H172V481H170Z"/>
<path fill="#000" d="M149 481H151V483H149Z"/>
<path fill="#000" d="M362 472H363V471H364V473H365V472H366V473H367V471H368V472H369H370V471H371H372V472H373V471H374V473H375V471H376V472H377H378V473H379V472H380V471H381V473H382V471H383V473H384V471H385V472H386V471H387H388H389V473H390V472H391V474H392V471H393V473H394V472H395V471H396V472H397H398H399V473H400V472H401V473H402V472H403H404H405H406V473H407V472H408V473H409H410V474H411V473H412V474H413V473V477V479H412V477H411V478H410V479H409V477H408H407V478H406H405V479H404V478H403V479H402V477H401V479H400V478H399V479H398V477H397V478H396H395V477H394H393H392H391V478H390H389H388V479H387V477H386H385H384V478H383V476H382V477H381H380V478H379H378V477H377H376V476H375H374V478H373H372V476H371V477H370V476H369H368V478H367V476H366V478H365V477H364V478H363H362Z"/>
<path fill="#808080" d="M362 483H363V482H364V483H365V482H366H367V483H368V481H369V482H370H371V483H372V481H373H374V482H375H376V481H377H378V483H379V481H380V483H381V482H382V481H383H384H385V482H386V483H387V481H388V483H389V481H390V483H391V481H392H393H394V482H395V481H396V483H397H398V482H399H400H401V483H402V481H403V482H404V483H405V482H406V481H407V483H408H409H410H411V481H412H413V482V489V491H412V489H411H410H409V491H408V490H407V491H406V490H405H404V491H403V490H402H401H400V489H399H398V491H397H396V489H395H394V491H393V489H392V490H391V488H390V489H389V491H388H387V489H386H385H384H383V490H382V491H381V489H380V491H379V488H378V490H377V488H376H375V490H374V489H373V491H372V488H371V489H370H369V491H368V490H367H366V489H365H364H363V488H362Z"/>
<path fill="#000" d="M436 477H437V476H438V477H439V475H440H441V474H442V472H443H444V471H445V470H446V469H447V470H448V468H449V470H450V469H451H452V470H453V471H454V469H455H456H457H458H459H460V470H461H462V469H463V470H464V469H465H466H467V470H468V469H469H470H471V470H472V469H473V470H474H475V471H476V470H477V471H478H479V472H480V471H481H482H483V472H484V471H485H486H487H488H489V472H490V473V475V476V475H489V476H488V477H487V475H486V476H485V475H484H483V474H482V475H481H480V474H479H478H477V475H476V474H475V473H474V474H473H472V475H471H470V473H469V474H468V473H467V474H466H465V473H464V474H463V475H462H461V473H460V474H459H458H457H456V475H455V473H454V474H453V473H452V474H451V475H450H449V473H448V475H447V474H446V473H445V475H444V476H443H442V478H441V480H440V479H439V481H438V482H437V483H436Z"/>
<path fill="#808080" d="M436 487H437V484H438H439V481H440V480H441V479H442V477H443V475H444H445V472H446V474H447V473H448H449V472H450H451V474H452V473H453V474H454H455V473H456H457V474H458H459V473H460V474H461V475H462H463V473H464V475H465V476H466H467V474H468H469V475H470V476H471V474H472V476H473V475H474V477H475V476H476V478H477H478V477H479V479H480V478H481V479H482H483V478H484V477H485V479H486V477H487V478H488V476H489V477H490V476V477V481V483V484H489H488V482H487V484H486V485H485H484H483V486H482V484H481V485H480V484H479V485H478H477V483H476V484H475V482H474V483H473V481H472H471V480H470H469V481H468H467V482H466V479H465V480H464H463H462V479H461H460V480H459V481H458V480H457H456H455H454V478H453V480H452V479H451H450V480H449H448V479H447V478H446H445V480H444V483H443H442V485H441V484H440V486H439V489H438H437V490H436Z"/>
<path fill="none" stroke="#808080" stroke-width="2" d="M490.5 476.4H520"/>
<path fill="none" stroke="#000" stroke-width="1.2" d="M490.5 474.5H520"/>
<path fill="#000" d="M520 466H521H522V467H523H524H525H526H527H528H529H530H531V466H532H533H534V467H535H536H537V466H538H539H540V470V471H539H538V470H537V471H536V470H535H534V471H533H532H531H530H529H528H527V470H526V471H525V470H524V471H523V470H522V471H521H520Z"/>
<path fill="#808080" d="M520 470H521H522V469H523V470H524V471H525H526H527V470H528V469H529V470H530V469H531H532V471H533V470H534V471H535V469H536H537H538V470H539H540V475V476H539V475H538H537H536H535V476H534V475H533H532V474H531V475H530H529H528H527V474H526V475H525V476H524V475H523H522V476H521V474H520Z"/>
<path fill="none" stroke="#000" stroke-width="2" d="M540 468.5H562"/>
<path fill="none" stroke="#808080" stroke-width="2" d="M540 473H562"/>
<path fill="#808080" d="M562 472H563V475H564H565H566V476H567V477H568H569H570V479H571H572V478H573H574V479H575V480H576V477H577V479H578V477H579H580V479H581H582H583V478H584V479H585V477H586V479H587H588V480H589V478H590V479H591H592H593H594V480H595V478H596H597V476H598V477H599V475H600V474H601V475H602V474H603V475H604V473H605V475H606V473H607H608V475H609V474H610H611V475H612H613H614V474H615H616V475H617V473H618H619H620H621H622V474H623H624V473H625V475H626V474H627V475H628V473H629H630V474H631V473H632V475H633V476H634V475H635H636H637H638V473H639V474H640V473H641V474H642V475H643V476H644V474H645H646H647H648V475H649V476H650V473H651V474H652H653H654V476H655H656V474H657V475H658H659V473H660V475H661V474H662H663V476H664V475H665V473H666V475H667H668H669H670V473H671V476H672H673V473H674V474H675V475H676V476H677V474H678V475H679H680V474H681V476H682V475H683V476H684V474H685V476H686H687V473H688V476H689V474H690V475H691V474H692H693V475H694V476H695V475H696H697V476H698V474H699H700H701H702H703V475H704V474H705V476H706V474H707H708H709V475H710V476H711V475H712V481H711V482H710V481H709H708H707V482H706V481H705V482H704V481H703V480H702V482H701V481H700V483H699V482H698V483H697V482H696V483H695V482H694V483H693V482H692V481H691V480H690V481H689V480H688V481H687V483H686V481H685V483H684H683V481H682H681H680H679V483H678V481H677V480H676V481H675V482H674V481H673V482H672H671V483H670V480H669V482H668V481H667H666V482H665V481H664V482H663H662V481H661H660V482H659H658V480H657V481H656V480H655H654V482H653H652H651H650H649V481H648H647H646V480H645V482H644H643V480H642H641V482H640V481H639H638V480H637H636V482H635V481H634V482H633V481H632H631V482H630V480H629V481H628H627V480H626V482H625H624H623V481H622V482H621V480H620H619V481H618V480H617H616V482H615V480H614H613H612H611H610V482H609H608V481H607V482H606H605V481H604V482H603V481H602V482H601V480H600H599V481H598V483H597V484H596V486H595V484H594V485H593H592H591V484H590H589H588V485H587H586H585V486H584V484H583V486H582V484H581H580H579H578V485H577H576V484H575V485H574V483H573V485H572V483H571V486H570V484H569H568V483H567V482H566V480H565V482H564V479H563V481H562Z"/>
<path fill="#000" d="M600 470H601H602H603V471H604H605V470H606H607V469H608V470H609V471H610H611H612V470H613V469H614V470H615H616H617V471H618H619H620V470H621H622V471H623H624V470H625H626V472H627V471H628V470H629V472H630V471H631V470H632V472H633V471H634H635V469H636H637V472H638V471H639V470H640H641H642V471H643V469H644V471H645V469H646V470H647V471H648V470H649V471H650H651H652H653V470H654V471H655V470H656V469H657V471H658H659H660V470H661V471H662V470H663V469H664V470H665H666H667V471H668H669H670V470H671V471H672H673V469H674V471H675V470H676V471H677V470H678H679H680V472H681V471H682H683H684V470H685V471H686V469H687V470H688V471H689H690H691V470H692H693V472H694V469H695V471H696V470H697V471H698V470H699H700V471H701V472H702V470H703V471H704H705V472H706V470H707V471H708V470H709V471H710V469H711V471H712V472V475H711H710V476H709V475H708V476H707V475H706H705H704V476H703H702H701V475H700V474H699H698V475H697H696V476H695V474H694V475H693V474H692V475H691V474H690V475H689H688H687V474H686H685V476H684H683V475H682V474H681V475H680V476H679V475H678V476H677H676H675V475H674V474H673H672V475H671V474H670V475H669H668V474H667V475H666H665V476H664V474H663V475H662H661H660V474H659V475H658V474H657V475H656V474H655V475H654H653H652V474H651V475H650V474H649V475H648H647H646H645V476H644V475H643H642H641H640V474H639V475H638H637V476H636V475H635H634V474H633H632V475H631H630V476H629V475H628V476H627H626V475H625H624V474H623H622V476H621V475H620V474H619H618H617V476H616H615V474H614V475H613H612H611H610H609H608V476H607H606V475H605H604V476H603V475H602V476H601V475H600Z"/>
<path fill="none" stroke="#000" stroke-width="2" d="M712 474.7H734.5"/>
<path fill="none" stroke="#808080" stroke-width="2" d="M712 480H734.5"/>
<path fill="#00b0ee" d="M102 503V505H104V504V505H106H108V508V507H110V508H112V507H114V508H116V507H118V506H120V508V507H122H124V508H126V507H128V508H130V509V507H132V509H134V508H136V509V507H138V509V507H140V508H142V507V508H144V509H146V508H148H150V509H152V507H154V508H156V509H158V507V508H160V509H162V508H164V509V510H166V508V510H168V508H170V510V508H172V507V508H174V509V508H176V509H178V508H180V507V509H182H184V508V509H186V510H188V509V510H190V509H192V510V507H194V508V509H196V510H198V509V508H200V509V510H202V508V510H204V509V510H206V509V510H207V509V514V513H206V514H204V513H202V514H200H198H196V513V514H194V513H192H190V514H188V513H186V514V513H184V514V513H182V514H180H178H176V513V514H174V513V514H172H170H168V513H166V514H164H162V513V514H160H158H156V513V514H154V513H152V514H150V513H148H146H144V514V513H142H140V514H138V513V514H136H134H132V513V514H130H128V513H126V514H124V513V514H122V513H120V514H118V513H116H114V514H112V513H110V514H108H106V513V514H104V513H102V514Z"/>
<path fill="#00b0ee" d="M102 509H103V506H104V501V497H105V494H106V499H107V498H108V501V502H109V503V509H108V508V505H107V502H106V503H105V504H104V508V510H103V513H102Z"/>
<path fill="#00b0ee" d="M112 508H113V505H114V497V496H115V498H116V503H117V504V507V510V511V508H116V505H115V501H114V504V508H113V513H112Z"/>
<path fill="#00b0ee" d="M306 495H307V498H308V499H309V503V507V508V506H308V504H307V501H306Z"/>
<path fill="#00b0ee" d="M357 508H358V501H359V499V493H360V489H361V486H362V484H363H364V482H365V488H366V486H367V491H368V488H369V490H370V494H371V495V497H372V499H373V495H374V497H375V496H376V493H377V496H378V497H379V492V496H380V492H381H382V498H383V496V498H384V497H385H386V495H387V497V496H388V500H389V501H390V502H391V499V497H392H393V500H394V498H395V502H396V503H397H398V502H399V500V503H400H401V504H402V506H403V505V506H404V504H405V506H406V504H407V505H408H409H410V504H411V505V506H412V508H413V509V515V512H412V516H411V515H410H409V516H408V515H407V513V511H406H405V515H404V514H403V512V510H402V511H401V510H400H399V511H398V510H397V507H396V508H395V511V506H394V507H393V506H392V508H391V510V506H390V508H389V506H388V505H387V507H386V504H385V502H384H383V500H382V505H381V500H380V501H379H378V503H377V505H376V503H375V504V506H374V502H373V505H372V502H371V503V501H370H369H368V499H367V498V496H366V491H365H364V490H363V495V493H362V494H361V495H360V500H359V502V507H358V513H357Z"/>
<path fill="#00b0ee" d="M427 492H428V490H429V494V490H430V489H431V488H432V489H433V491V487H434V486H435H436V491H437V492V491H438V489H439V493H440V491H441V492V491H442V493H443V495H444V498H445V494V496H446V498H447V497H448V501H449V503V500H450V504H451V505H452V508V517V512V513H451H450V509H449V512V509H448H447V506H446H445V504V503H444V504H443V502H442V500H441V498H440V500H439V497H438H437V500V496H436V494H435V497H434V496H433V497V500H432H431V497H430V498H429V503H428V502H427Z"/>
<path fill="#00b0ee" d="M450 483H451V488H452V486V488H453H454V489H455V488H456V490V491H457V492H458V490H459V491H460V494H461V492H462H463V497H464V493V494H465V496H466V499H467V495H468V496V499H469V502H470H471V503H472V501V499H473V501H474V506H475V505H476V506V503H477H478V504H479V505H480V506V503H481H482V506H483V505H484V502V504H485V506H486V502H487V501H488V505V501H489V502H490V504V509V512H489V511H488V512V510H487V511H486V513H485H484V514V512H483V514H482V513H481V515H480V514H479H478H477V516H476V510H475V509H474V510H473V509H472V512V506H471V508H470V506H469V509H468V507V505H467V503H466H465V501H464V505V503H463V504H462V501H461H460V498H459V496H458H457V497H456V495V497H455V495H454V498H453V496H452V493H451V494H450Z"/>
<path fill="#00b0ee" d="M514 495H515H516V494V492H517V488H518V490H519V486H520V487H521V486H522V488H523V487H524V490V486H525V490H526V488H527V492H528V489V490H529V491H530V492H531V495H532V496H533H534V500H535V497H536V499H537H538V503H539V501H540V503V512V510V509H539V510H538V511H537V508H536V507V508H535V506H534V505H533V507H532V506V505H531V500H530V504H529V502H528V500V497H527V494H526V495H525V494H524V498V497H523V496H522V492H521V496H520V493V495H519V494H518V497H517V498H516V501V502H515V504H514Z"/>
<path fill="#00b0ee" d="M556 495H557V490H558V489V491H559V487H560V489H561V484H562V481V482H563V484H564V486H565V490H566V486V492H567V491H568V493H569V491H570V497V496H571V495H572V497H573V496H574V498V500H575H576V497H577V500H578V501V502H579V500H580V502H581H582V504V505H583V506H584V504H585V507H586V503V506H587V505H588V507H589V502H590V505V506H591V504H592V506H593V503H594V504H595V503H596V502H597V504H598V503H599V502H600V499H601H602V503H603V497H604V500H605V497H606V500H607V497H608V500H609V496H610V498V496H611V495H612V498H613H614V499H615H616V497H617V499H618V498V497H619V500H620V501H621V500H622V501V500H623V502H624V501H625V502H626V501V500H627V501H628V505H629V504H630V505V501H631V506H632V504H633H634V501H635V504H636V502H637H638V503V505H639V503H640V504H641V506H642V504V506H643V503H644V507H645H646V504H647V505H648H649V506H650V503H651V508H652V504H653V507H654V504V506H655H656V508H657V506H658V507V503H659V508H660V507H661V506H662V508V506H663V508H664V507H665V506H666V505V506H667V503H668V508H669V504H670V506V508H671V503H672H673V506H674V504H675V508H676V505H677H678V503V504H679V503H680V506H681V505H682V503V506H683V504H684V503H685V502H686V503V505H687V507H688V503H689V506H690V507V502H691V505H692V507H693V502H694V507V503H695V507H696V506H697V507H698V505V506H699V505H700V506H701V503H702V507V505H703V508H704V504H705H706V506V505H707V506H708V504H709V505H710V504V508H711V504H712V509V517V514V517H711V513H710V515V516H709V513H708V512H707V517H706V515H705V516H704H703H702V511V515H701V513H700V511H699V512H698V515V512H697V513H696V516H695V510H694V514V510H693V511H692V513H691V511H690V510V512H689H688V511H687V512H686V514V510H685V515H684V510H683V515H682V513V510H681V513H680V510H679V511H678V510V511H677V514H676V515H675V514H674V515V511H673V514H672V512H671V514H670V512V515H669H668V512H667H666V513V511H665V512H664V515H663V513H662V515V514H661V516H660V513H659H658V515H657V512H656V511H655V516H654V514H653V515H652V512H651V513H650V511V515H649V514H648V513H647V514H646V512V511H645V510H644V512H643V514H642V512V511H641V512H640V510H639V511H638V512V514H637V513H636V509H635V513H634V514V510H633V511H632H631H630V509V512H629V511H628V507H627V508H626V506H625V511H624V508H623V509H622V505V507H621V509H620V506H619V509H618V506H617V503H616V506H615H614V504H613H612V506H611V503H610V504H609V508H608V507H607V504H606V509H605V505H604V506H603H602V510V506H601V510H600V507H599V509H598V512H597H596V510H595V509H594V511V513H593V512H592V511H591V510H590V513V515H589V511H588V513H587H586V514V512H585V510H584H583V509H582V510H581V508H580V507H579V508H578V507V506H577V510H576V504H575V503H574V504V505H573V506H572V505H571V503H570V500V502H569V499H568V500H567H566V499V497H565V493H564V495H563V493H562V492V493H561V494H560V495H559V496H558V500V498H557V501H556Z"/>
<path fill="#00b0ee" d="M728 493H729V491H730V495H731V498H732V495H733V496H734V500V499V505V502H733V506H732V505H731V504H730V503H729V501H728Z"/>
<path fill="none" stroke="#00b0ee" stroke-width="2.0" d="M101.5 513.6H734.5"/>
</g>
<g clip-path="url(#cL_ecl)">
<path fill="#008a44" d="M102 523H104V524V522H106V524H108V522H110V523V524H111V523V586V591H110V585V589H108V581V585H106V589V587H104V583V589H102V582Z"/>
<path fill="#008a44" d="M114 523H116V525H118V523H120V522V524H122V548V544H124V522H126V523V524H128V522V525H130V523V524H132V523H134V524H136V522V524H138V525V523H140V522V524H142V523H144V522H146V525V524H148V522V524H150V523H152V524V522H154V523H156V525V523H158V545V523H160V542H162V525H164V524H166V525V524H168V523H170V525V524H172V523V522H174V523V525H176V524H177V525V584V588H176V590V580H174V579V585H172V580V581H170V585H168V582V588H166V583V586H164V579V583H162V586H160V588V582H158V592V587H156V581V586H154V581V582H152V583V591H150V584V591H148V587V583H146V587V581H144V587V582H142V585H140V587V581H138V586V591H136V585V581H134V587V583H132V580V583H130V585V580H128V583V585H126V587H124V588V587H122V586H120V583V584H118V587V583H116V586V584H114Z"/>
<path fill="#008a44" d="M177 557H178V555H179V556H180V532H181H182V562H183V565H184V531H185V565H186V531H187V532V583V586H186V584H185V585H184H183V587H182V583H181V585H180V582H179V586H178V587H177Z"/>
<path fill="#008a44" d="M187 527H188V525H189V527H190V525H191V566H192V525H193H194H195V526H196V527H197V525H198H199V527H200V568H201V526H202H203H204V525H205V527H206H207V525V589V583H206V592H205V587H204V585H203V587H202H201V591H200V587H199V583H198V584H197H196V580H195V581H194V582H193V584H192V581H191V584H190V585H189V582H188V586H187Z"/>
<path fill="none" stroke="#008a44" stroke-width="1.2" d="M206.5 584V597"/>
<path fill="none" stroke="#008a44" stroke-width="1.2" d="M209.8 573V597"/>
<path fill="none" stroke="#008a44" stroke-width="1.5" d="M207 597H734.5"/>
<path fill="#008a44" d="M316 595H317H318V596H319H320H321H322V597H323V595H324V597H325V595H326H327V596H328H329H330H331H332V595H333H334H335H336V594H337V595H338V596H339V595H340V594H341H342V596H343V594H344V596H345V595H346V596H347V595H348V594H349V593H350V594H351V595H352V593H353V594H354H355V595H356V594H357V593H358V594H359V592H360H361V590H362V589H363V588H364V587H365V584H366V583V587V597H365V590H364H363V597H362V592H361V594H360H359V596H358H357V597H356H355V595H354V596H353H352V597H351H350H349H348H347V598H346V597H345V596H344H343V597H342H341H340H339H338H337V596H336V597H335H334V598H333V597H332H331H330H329V598H328H327H326V597H325H324V598H323V597H322V598H321V597H320H319V599H318V597H317V598H316Z"/>
<path fill="#008a44" d="M366 567H367V569H368V568H369V567H370H371H372V565H373V567H374V566H375V564H376V565H377V563H378V565H379V564H380V586H381V563H382V561H383V562H384V561H385V562H386V560H387V559H388V560H389V559H390V560H391V557H392V560H393V557H394V558H395V557H396V556H397V558H398H399V556H400V557H401V556H402V558H403V555H404V556H405V555H406H407V552H408V568H409V574H410V553H411V554H412V552H413V554V589V591H412V590H411V597H410V600H409V595H408V588H407V600H406V589H405V590H404V592H403V589H402V591H401V590H400V596H399V597H398V598H397V597H396V593H395V594H394V593H393V599H392V590H391V592H390V588H389V597H388V591H387H386V590H385H384V589H383V591H382V589H381V590H380V594H379V592H378V589H377V592H376V597H375H374V596H373V589H372H371V591H370V588H369V597H368V593H367V594H366Z"/>
<path fill="#008a44" d="M427 596H428H429V595H430V593H431V594H432V593H433V592H434V589H435H436V587H437V586H438V587H439V586H440V584H441H442V585H443H444V587H445V586H446H447V584H448V583H449H450V584V588V597H449V588H448H447V590H446H445V589H444H443V588H442H441H440V589H439V591H438H437V597H436V594H435V597H434V594H433V597H432V596H431V597H430V600H429H428H427Z"/>
<path fill="#008a44" d="M450 568H451V564H452V567H453V565H454V563H455V564H456H457V562H458V563H459H460H461V577H462V562H463V560H464V557H465V560H466V557H467H468V558H469V557H470V555H471V554H472V581H473V553H474H475V552H476V551H477V554H478V567H479V553H480V552H481H482V551H483V550H484V552H485V573H486V551H487V550H488H489V553H490H491V551V592V589H490V591H489V589H488V590H487V591H486V592H485V597H484V591H483V592H482V589H481V597H480H479V599H478V592H477V597H476V592H475V597H474V596H473V597H472V591H471V597H470V590H469V589H468V592H467H466V591H465V593H464H463H462V597H461V593H460V591H459V592H458V593H457V591H456V590H455V597H454V592H453V595H452V589H451H450Z"/>
<path fill="none" stroke="#008a44" stroke-width="1.5" d="M490.9 592L493 597"/>
<path fill="#008a44" d="M513 596H514V595H515H516V592H517V591H518H519H520V589H521V588H522V589H523V587H524V588H525V586H526V585H527H528H529V584H530V583H531V582V587H530V588H529V589H528V590H527V597H526V590H525V597H524V592H523V593H522H521H520H519V597H518H517H516V598H515V600H514H513Z"/>
<path fill="#008a44" d="M531 560H532V562H533V560H534V561H535H536V560H537V561H538V560H539V558H540V559V591V593H539V594H538V593H537V591H536V590H535V591H534H533V592H532V591H531Z"/>
<path fill="#008a44" d="M540 595H541H542V594H543V593H544H545H546V591H547H548V592H549H550V591H551H552V590H553V589H554V590H555V591H556V588H557V589H558V588H559V585H560V583H561V584H562V581H563V579V581V584V585V597H562V588H561H560V589H559V591H558V597H557V593H556V595H555H554H553H552V597H551V594H550V597H549V596H548H547H546V597H545H544V598H543V599H542H541H540Z"/>
<path fill="#008a44" d="M564 556H566V554V555H568V557H570V553H572V555V572H574V554V556H576V553V555H578V554V555H580V554V552H582V554V552H584V554H586V555V552H588V553V552H590V555V553H592V552V555H594V552V554H596V555V551H598V553H600V582V553H602H604V551V553H606V550H608H610V583H612V546H614V544V545H616V571V541H618V542H620V538V537H622V538V539H624V537H626V540V539H628V540V536H630V538V537H632V536H634V538V537H636V535H638V538H640V535V568H642V535V536H644V537H646V534H648V537H650H652H654V534V575H656V536V564H658V536V537H660V535V536H662V535V534H664V535V536H666V534H668V537H670V535H672V537V535H674V537V534H676V535H678V537V535H680V537H682V535H684V536H686V534V537H688V534V536H690V537V534H692H694V535V533H696V534H698V533V531H700V532H702V531V532H704V531H706V529V532H708V530H710V533V531H712V533V585V584H710V586V587H708V582V586H706V583V582H704V596V587H702V586V597H700V584V585H698V597V584H696V588V582H694V584V585H692V587V586H690V594V584H688V583H686V597V586H684V587H682V597H680V589H678V598V588H676V589H674V588V587H672V589V587H670V594H668V590V589H666V584H664V587V586H662V589H660V587V590H658V585H656V597V586H654V587H652V589V598H650V590V586H648V591H646V585V597H644V589V587H642V597H640V595V591H638V587H636V590H634V595V594H632V592V589H630V588V591H628V588H626V587H624V591V590H622V598V595H620V590V589H618V588V590H616V588V591H614V590V591H612V588V591H610V588V597H608V590V593H606V590H604V597V591H602V593V594H600V591V590H598V593V590H596V592V591H594V597V593H592V597V593H590V591V594H588V591H586V590H584V597V591H582V593V592H580V593V597H578V592H576V597H574V589V590H572V591H570V592V590H568V589V597H566V593H564V590Z"/>
<path fill="#008a44" d="M727 598H728V595H729V593H730V591H731H732H733V590H734V588V587V591V590V592H733V593H732H731V597H730H729H728V599H727Z"/>
</g>
<g clip-path="url(#cL_ms)">
<path fill="none" stroke="#f5603c" stroke-width="1.25" d="M101.5 648.2H113.8V651.7H115.4V637.2H132.4V646.1H146V647.3H170.3V643.2H189.5V646.4H191.5V644.5H197.5V646.4H202.8V644.7H307.3V664.5H356V650.9H357V664.5H360V650H361V666H363L364 656.7H379V659.7H389V656.7H402V651.7H411.8V650.9L427.4 650.5V664.1H436L438 652L440 660L443 650L446 660L448 656.7H460.8V676.5H462V657H478.5V621.6H480V647.3H484L485.5 637.6L487 647.3L490 644.7H512.5V664.5H521V651.7H531.6L532 645.5L533 651.7L534 655.3H555.5L558 661.5H560L563 650L565 658L567 648L570 651.7L572.4 652.6V642H578V652.6H583V650.9H584.8L586 646.4L590 640L592 649L598 646.4V649.1H622.9L623 640L624 658L625 655.3H632.6V642H646.8V635.8H650.3L652 644.7H669.8V635.8H678.7V640.2H682.2V647.3H696.4V642.9H711.5V626.6H727.4V664.1L734.5 662"/>
</g>
<g clip-path="url(#cL_top)">
<path fill="none" stroke="#4878f0" stroke-width="1.3" d="M101.5 677.4H110L112.4 701.9L114 680L115 677.4H207V758.2H363.5V744.4L369.3 717.8L383.5 715L397.7 702.9L408.3 690.5L412.7 691V758.2H450.1V724.2L460 716L471.4 697.6L474.9 692.3L490 694V758.2H522.8L524 736.6L535.2 717.1L538.7 711.8V758.2H562.6L568.8 717.1L572.4 699.3L590 695L614 695.8L620.2 681.6L632.6 677.4H711.5V758.2H734.5"/>
<path fill="#4878f0" d="M364 743V739H366V734V727H368V720V717H370V715V713H372H374V712V714H376V711H378V714V713H380V712V713H382V712V714H384V710V711H386V709H388V708H390V707V706H392V705V706H394V702H396V700V701H398V702V700H400V699V695H402V696V693H404V692H406V689H408V690V689H410V687H412V685V686H413V692V696H412V693V696H410V695H408V697H406V696H404V701H402V703V704H400V703V706H398V705V706H396V708H394V712V711H392V715H390V713V715H388V713V717H386V716V715H384V720V716H382V718H380V719V717H378V721H376V720H374V723V719H372V722H370V721V723H368V727V732H366V736V743H364V748Z"/>
<path fill="#4878f0" d="M450 720H451H452V721H453V720H454V717H455V716H456V715H457V713H458V717H459V713H460V712H461V713H462V709H463V706H464V708H465V707H466V701H467V704H468V701H469V697H470V695H471V696H472V695H473V693H474H475V690H476V688H477V692H478V688H479V689H480V688H481V690H482V692H483V690H484V692H485V691H486V692H487V689H488H489V690H490V692V695V699H489V695H488H487H486V696H485V698H484V697H483V694H482H481V696H480V695H479V696H478V698H477V695H476V696H475H474V699H473H472H471V703H470V706H469V707H468H467V710H466V711H465V712H464V714H463V713H462V719H461V721H460H459H458V722H457H456H455V723H454V722H453V727H452V725H451V730H450Z"/>
<path fill="#4878f0" d="M524 733V732H526V733V730H528V725H530V724H532V719V718H534V719V715H536V710H538V713V710H539V711V714V715H538V717V718H536V719H534V722V723H532V726V727H530V731V730H528V736V733H526V738V741H524V743Z"/>
<path fill="#4878f0" d="M564 741V736H566V731V727H568V721V713H570V712V707H572V698V695H574V697V696H576V695H578V694V693H580V695V692H582V695V692H584V693V692H586V695H588V693H590V690V691H592V693V692H594V694V693H596V690V693H598V691H600V694V690H602V695V693H604V690H606V691H608V693V692H610V693V692H612V695V691H614V690H616V688V687H618V684V682H620V677H622V678V675H624V676H626V677V675V680V685H624V681H622V684H620V688H618V693V696H616V699H614V702V700H612V696H610V701V699H608V698V700H606V698V701H604V700V697H602V700H600V699H598V700V698H596V700V698H594V699V696H592V701H590V698V696H588V698V700H586V702V697H584V698V703H582V702V703H580V700V701H578V703H576V701V704H574V700H572V706V713H570V716V724H568V726V730H566V739V741H564V750Z"/>
</g>
<g clip-path="url(#cL_cdc)">
<path fill="#008000" d="M102 766V769H104V764V767H106V763V765H108V767V766H110V767V765H112V766H114V763H116V767H118V768V767H120V763V768H122V764H124V767V768H126V767H128V768V765H130V768H132H134V767V765H136V767V763H138V764V766H140V767V766H142V765V764H144V765V767H146V765V768H148V769V766H150V764V763H152V767V768H154V764V765H156V768V764H158V767V766H160H162V769V768H164V764V767H166V769V765H168H170V768V769H172V768V764H174V769V768H176V764H178V767V768H180V769V764H182V768V763H184V769V764H186V767H188V765V766H190V768V767H192V765V764H194V768H196H198V766H200V768V767H202V765H204V769V764H206V768V765H207V766V787V783H206V793V783H204V785H202V782H200V795V788H198V787V796H196V785V783H194V789V788H192V786V782H190V788H188V787V786H186V784V786H184V787V789H182V782V786H180V795V788H178V786H176V797V783H174V787V783H172V785V791H170V788V785H168V783V785H166V789V788H164V794V785H162V784V783H160V786V782H158V786V783H156H154V786V784H152V786H150V784H148V782V785H146V786V785H144V798V785H142V786V783H140V784V786H138V784V789H136V787V788H134V785V783H132V785V782H130V795V798H128V783V791H126V793V783H124V787V783H122V787V795H120V784V789H118V784V785H116V786V790H114V785V795H112V793V784H110V786V796H108V784V785H106V796V783H104V785H102V783Z"/>
<path fill="#008000" d="M364 795V798H366V797H368V798V794H370V796V794H372V796V793H374V795V794H376V795V794H378V796V793H380V794V792H382V795H384V794H386V790V789H388H390V788V789H392V788V791H394H396V786V787H398V790V786H400V790V788H402V785V788H404V784V785H406V784V785H408V787H410V782V787H412V784V782H413V785V814H412V812V809H410V813V812H408V811V815H406V810V814H404V811V831H402V813V812H400V813V812H398V820V813H396V810V812H394V813V810H392V813H390V822V810H388V823V811H386V813V814H384V816V812H382V813H380V814H378V813V811H376V812V819H374V813V811H372V813V826H370V811V813H368V811V812H366V809V811H364V827Z"/>
<path fill="#008000" d="M450 804H451V802H452V797H453V801H454V800H455V795H456H457V798H458V796H459V794H460V795H461V792H462V795H463V794H464V790H465V789H466V792H467V793H468V791H469V789H470V790H471V784H472V789H473V786H474H475V784H476V785H477V786H478V783H479V786H480V787H481V783H482V782H483V785H484V783H485V786H486V783H487V785H488V784H489V787H490V823V813H489V810H488V811H487V812H486V813H485V814H484V810H483V809H482V811H481V814H480V809H479V821H478V812H477V811H476H475V812H474V810H473V812H472V825H471V811H470V812H469V813H468V814H467V810H466V828H465V811H464H463V814H462V810H461V812H460H459V813H458V811H457H456V810H455V809H454V819H453V811H452V825H451V811H450Z"/>
<path fill="#008000" d="M523 820H524V817H525V814H526V815H527V810H528V809H529H530V811H531V807H532H533V805H534H535V801H536V800H537V803H538V798H539V801H540V824V825H539V826H538V828H537V826H536H535V825H534V826H533V827H532V825H531V826H530V827H529H528V828H527V824H526V827H525V825H524V828H523Z"/>
<path fill="#008000" d="M563 802H564V801H565V796H566V797H567V794H568V792H569V794H570V791H571V790H572V792H573V790H574V791H575V788H576H577H578V790H579V785H580V786H581V789H582V783H583V787H584H585V784H586V783H587V781H588V783H589V782H590V781H591V784H592V783H593H594H595V784H596V780H597V785H598V782H599V784H600V782H601V785H602V781H603V783H604H605V784H606V781H607V784H608V782H609V787H610V782H611V785H612V786H613V781H614H615V778H616V777H617V779H618V777H619H620H621V774H622H623V775H624H625V774H626V776H627V774H628H629V773H630V771H631H632V772H633V774H634V772H635V775H636H637V770H638V771H639V772H640V771H641V772H642H643V774H644H645V769H646V771H647H648V774H649V770H650V772H651V771H652V772H653H654V774H655V771H656H657V774H658V772H659V770H660V769H661V768H662V774H663V769H664V772H665H666V773H667V768H668H669V773H670V772H671H672V771H673V768H674V770H675V769H676V772H677H678V767H679V770H680V769H681V767H682V771H683V767H684V769H685V764H686V766H687V764H688V765H689V762H690V764H691V761H692H693V762H694V761H695V762H696H697V764H698V762H699H700V767H701H702V763H703H704V765H705V764H706V763H707V767H708V766H709V764H710V766H711V763H712V764V796V798H711V794H710V797H709V794H708V809H707V796H706V795H705V793H704V792H703V793H702V798H701V795H700H699V794H698V803H697V793H696H695V795H694V796H693V795H692V793H691V809H690V808H689V797H688V793H687V794H686V797H685V795H684V796H683V797H682V793H681V794H680V797H679V793H678H677V794H676H675V796H674V798H673V796H672V793H671V796H670V798H669V794H668V797H667V792H666V796H665V806H664V798H663V795H662V793H661H660V797H659V793H658V796H657V797H656V793H655V796H654V807H653V792H652V807H651V797H650V793H649H648V810H647V793H646V795H645V794H644V796H643V794H642H641V795H640H639V797H638V794H637V806H636V801H635V798H634V800H633V796H632V800H631V797H630V812H629V797H628V798H627V800H626V801H625V798H624V802H623H622V798H621V801H620V798H619V803H618V802H617V801H616V803H615V804H614V802H613V804H612V805H611V802H610V804H609V800H608V801H607V805H606V803H605V806H604V807H603V805H602V807H601V803H600V804H599H598V806H597H596H595V802H594V806H593V804H592V808H591V803H590V811H589V803H588V807H587V808H586H585H584V805H583V808H582V802H581V807H580V801H579V805H578V808H577V807H576V806H575V807H574V808H573V810H572V804H571V808H570V804H569V805H568V804H567H566H565V805H564H563Z"/>
<path fill="#00cc00" d="M102 802V801H104V800H106V801V802H108V800H110V802V800H112H114V802H116H118V800V801H120V802H122V801V802H124H126V800V802H128V801H130V803V800H132V802H134V800H136V801H138H140H142V800V801H144V802V801H146V800V802H148V801H150V800V802H152V800V801H154V802V800H156V802H158V801V802H160V801H162V802H164V800V801H166V802V800H168V801H170V802H172V800H174V801H176V802V800H178V802H180V800H182V802H184V801V802H186V801H188V800H190V802H192V800V801H194V802V800H196H198V802V800H200V801V800H202V802H204V801H206V802H207V801V808V809H206V807H204V809V808H202V810V809H200V807H198V808H196V810V808H194V822H192V807V809H190V807H188V808H186V810V808H184V810V809H182V808H180V809V808H178V809V816H176V807V808H174V807H172V809H170V815V808H168H166V809V808H164V809H162V807V810H160V808H158V809H156V808V809H154V807V809H152V807H150H148V808V809H146V807V819H144V808V809H142V817V808H140V824V809H138V808H136V807H134V808V817H132V807H130V808V809H128V808V807H126V819V807H124V808H122V809V807H120V808H118V810V807H116V808H114V809V807H112V810V808H110V809V808H108V809H106V808V809H104V807V808H102V807Z"/>
<path fill="#00cc00" d="M364 806V807H366V805V806H368H370V805H372V806V807H374V806H376V805V807H378V806H380V805H382V806V807H384V806H386V805V807H388V806V805H390V806V807H392H394V805V807H396H398V806V805H400H402V806V805H404V807V805H406V806V805H408V806V805H410V807V805H412V807H413V805V813V811H412V813V811H410V832V811H408V812V826H406V812V811H404V813V826H402V812V811H400V812V813H398V812V830H396V812V813H394H392V812V811H390V812V832H388V813V823H386V812V813H384V812V813H382V825V812H380V828H378V823V811H376V827V812H374V830V821H372V813H370V812V824H368V812V813H366V811V813H364V812Z"/>
<path fill="#00cc00" d="M450 806H451H452V808H453V807H454H455V808H456H457V807H458V806H459H460V808H461H462V806H463V807H464H465V806H466V807H467V806H468V808H469V807H470V808H471V807H472V808H473V807H474H475H476H477V808H478V806H479H480V807H481H482V808H483V807H484V806H485V807H486V806H487V807H488V808H489V807H490V808V827V812H489V813H488V812H487V813H486H485H484V814H483V813H482V814H481H480H479H478V812H477H476V814H475H474V813H473V821H472V812H471V814H470H469H468V813H467V814H466H465V827H464V822H463V819H462V812H461H460H459H458V823H457V814H456V823H455V813H454H453V814H452V813H451V814H450Z"/>
<path fill="#00cc00" d="M523 819H524V820H525H526V821H527V819H528V821H529V820H530V821H531V820H532V821H533V819H534V821H535H536V819H537V821H538V820H539V821H540V819V832V834H539V832H538V834H537H536V833H535V834H534V833H533V834H532V832H531V834H530V832H529V834H528V832H527V834H526V832H525H524H523Z"/>
<path fill="#00cc00" d="M563 813H564H565V812H566V811H567V810H568V812H569V810H570V812H571V811H572H573H574V810H575V809H576H577V810H578H579V809H580H581V808H582V807H583H584V809H585H586V807H587V806H588H589V808H590V807H591H592V808H593V807H594V805H595V807H596V806H597H598H599V805H600V806H601V803H602V806H603V804H604V806H605H606V805H607V806H608V805H609H610H611H612V804H613V805H614H615V804H616V806H617V805H618H619H620V806H621V804H622V805H623H624V806H625V803H626V806H627V804H628H629H630V805H631H632V806H633V804H634V805H635H636H637V804H638V806H639V804H640V805H641H642V806H643V804H644V803H645V804H646H647V805H648V806H649H650H651V804H652H653V806H654H655V804H656V805H657V803H658H659H660V805H661V806H662V805H663V804H664V806H665V805H666H667V806H668V805H669V804H670H671V805H672H673H674V806H675V805H676V804H677V803H678V804H679V803H680V806H681V804H682V805H683V806H684V804H685H686V806H687H688V804H689H690V805H691V804H692H693V805H694V804H695H696V805H697H698V804H699H700V805H701V804H702V806H703V804H704H705V805H706H707H708V803H709V804H710V806H711V805H712V809H711V808H710V810H709V823H708V807H707V808H706H705V809H704V808H703V810H702V808H701V810H700V809H699H698V808H697V825H696V809H695H694V810H693V809H692V810H691V809H690V810H689V809H688H687H686H685V807H684V808H683H682V807H681V808H680V810H679H678V809H677H676H675V808H674V809H673H672H671H670V818H669V808H668V810H667H666V808H665V807H664V808H663V810H662V809H661V807H660V809H659V820H658V808H657V822H656V810H655V807H654V808H653V807H652V821H651V808H650V807H649V817H648V807H647H646V808H645H644V807H643V809H642H641V807H640V808H639H638V809H637V807H636V810H635V808H634V809H633H632H631V810H630H629V821H628V809H627H626V807H625V809H624H623V808H622V810H621H620H619V807H618V809H617V808H616H615V809H614V807H613V824H612V818H611V829H610V830H609V831H608V815H607V828H606V829H605V824H604V823H603V831H602V830H601H600V831H599V816H598V830H597V817H596V831H595V817H594V829H593V830H592H591V829H590V830H589H588V828H587V831H586V829H585V830H584V828H583H582V829H581V830H580V829H579H578V831H577V830H576V829H575V828H574V830H573V829H572V830H571H570H569H568H567V829H566H565V830H564V816H563Z"/>
<path fill="none" stroke="#00cc00" stroke-width="1.2" d="M207 838V800"/>
<path fill="none" stroke="#00cc00" stroke-width="1.2" d="M363.5 838V800"/>
<path fill="none" stroke="#00cc00" stroke-width="1.2" d="M413 838V800"/>
<path fill="none" stroke="#00cc00" stroke-width="1.2" d="M450 838V800"/>
<path fill="none" stroke="#00cc00" stroke-width="1.2" d="M490 838V800"/>
<path fill="none" stroke="#00cc00" stroke-width="1.2" d="M522.8 838V800"/>
<path fill="none" stroke="#00cc00" stroke-width="1.2" d="M539.6 838V800"/>
<path fill="none" stroke="#00cc00" stroke-width="1.2" d="M562.6 838V800"/>
<path fill="none" stroke="#00cc00" stroke-width="1.2" d="M711.5 838V800"/>
<path fill="none" stroke="#008000" stroke-width="1.6" d="M101.5 838H734.5"/>
<path fill="none" stroke="#008000" stroke-width="1.6" d="M316 837H357"/>
<path fill="none" stroke="#008000" stroke-width="1.6" d="M727 838L734.5 836"/>
</g>
<g clip-path="url(#cL_dia)">
<path fill="#ee82ee" d="M102 842V844H104V841V842H106V846V842H108V844V843H110V842V844V880V879H108V876V874H106V876V873H104V875V873H102V870Z"/>
<path fill="#ee82ee" d="M110 869H112V874V875H114V870V866V885V887V892H112V889V884H110Z"/>
<path fill="#ee82ee" d="M114 849H116V852V853H118V868V853H120V849V850H122V848V852H124V847V871H126V849V851H128V847V850H130V849V847H132V845V850H134V846V851H136V847V846H138V849V844H140V847V845H142V870V847H144V844V847H146V844V847H148V844V871H150V852V843H152V848V845H154V868H156V844V843H158V847V842H160V845V846H162V844V841H164V840H166V841H168V839V841H170V847V844H172V843V838H174V843V839H176V842V846H178V842H180V837V841H182H184V848V841H186V836V840H188V839H190V840H192V866V837H194V836V842H196V841V838H198V836H200V838V842H202V836V842H204V837V838H206V840V837H207V881V885H206V881V886H204V883V882H202V883V886H200V881V884H198V889V883H196V884V881H194V882V883H192V882H190V886V881H188V889V886H186V883H184V881H182V883H180V887V886H178V883V875H176V884V888H174V872V889H172V874V875H170V872V889H168V872V871H166V872V875H164V876V875H162V881H160V882V881H158V883H156V884V879H154V884V889H152V882V879H150V881H148V879V883H146V884V881H144V883H142V882H140V883H138V890H136V880V881H134V887V879H132V881H130V883H128V879H126V881V883H124V880V878H122V880V879H120V889V883H118V882V881H116V882H114Z"/>
<path fill="none" stroke="#ee82ee" stroke-width="1.8" d="M207 912L310 911L316.2 910.6"/>
<path fill="#ee82ee" d="M316 888H317V890H318V887H319V888H320V890H321V888H322H323V889H324V884H325V885H326V886H327V889H328V886H329V883H330V884H331V886H332V885H333V887H334H335H336V886H337V885H338V887H339V883H340H341H342H343V885H344V882H345V883H346V884H347H348V885H349V881H350V885H351V882H352V880H353H354V885H355V883H356H357V885H358V882H359V883H360V879H361V880H362V879H363V883H364V884V912H363V911H362H361H360V912H359V911H358H357V912H356H355H354V911H353V912H352V911H351V912H350H349H348H347V911H346V912H345V911H344V912H343H342H341V911H340H339V912H338H337V911H336V912H335H334V911H333H332V912H331V911H330V912H329H328H327H326H325H324H323V911H322H321V912H320V911H319V912H318H317H316Z"/>
<path fill="none" stroke="#ee82ee" stroke-width="1.2" d="M338 864.5V885"/>
<path fill="#ee82ee" d="M364 857H365V873H366V858H367H368V856H369V859H370V858H371V879H372V858H373V859H374V855H375V858H376H377V857H378V856H379V853H380V857H381V852H382V851H383V852H384V853H385V850H386V854H387V853H388V850H389V856H390V847H391V846H392V845H393V860H394V843H395V848H396V847H397V846H398V845H399H400V848H401V846H402V848H403V843H404V846H405V843H406V845H407V849H408V848H409H410V846H411V848H412V846V845V898V894V895H411V896H410H409V893H408V897H407V898H406V894H405V898H404V899H403V898H402V894H401H400V895H399V898H398V900H397V896H396V895H395V898H394V897H393V894H392V897H391V896H390V899H389V895H388V898H387H386H385V895H384V896H383V898H382V897H381V900H380H379V899H378H377V898H376V897H375V899H374V898H373V897H372V900H371V901H370V896H369V898H368H367V901H366H365V897H364Z"/>
<path fill="none" stroke="#ee82ee" stroke-width="1.6" d="M412.5 845V912H430.6L432 881"/>
<path fill="#ee82ee" d="M432 878H433V876H434V869H435V873H436V880H437V866H438H439V863H440V881H441V864H442H443V866H444V864H445V863H446V866H447V864H448V862H449V864H450V903V902H449V903H448V900H447V905H446V904H445H444V905H443V900H442V904H441V906H440V905H439V901H438H437H436V900H435V901H434V902H433V903H432Z"/>
<path fill="#ee82ee" d="M450 841H451V840H452V837H453V841H454V877H455V838H456V854H457V861H458V840H459V839H460H461V841H462V840H463V863H464V839H465V840H466V841H467V838H468V842H469V841H470H471V839H472V842H473V853H474V841H475H476H477V842H478V839H479V876H480V841H481V859H482V843H483V865H484V860H485V843H486V842H487V843H488V856H489V843H490V842V843V890V889V895H489V892H488V894H487V896H486V894H485V896H484V895H483V896H482V900H481V892H480V896H479V892H478V893H477H476V892H475V893H474V894H473V897H472V895H471V897H470V893H469V895H468V894H467V896H466V898H465V896H464V894H463V897H462V896H461H460V897H459V896H458V898H457V897H456H455V895H454V898H453H452V896H451H450Z"/>
<path fill="none" stroke="#ee82ee" stroke-width="1.6" d="M490.5 845V912H512L514 895"/>
<path fill="#ee82ee" d="M512 895H513V893H514V886H515V883H516V881H517V878H518V875H519V871V909H518V911H517H516V910H515V909H514V910H513H512Z"/>
<path fill="#ee82ee" d="M519 838H520V839H521V838H522H523V839H524V838H525H526V839H527H528V838H529V839H530H531H532V838H533V839H534V838H535H536H537H538V839H539V838H540V839V901V903H539H538H537V900H536V903H535V901H534H533H532V902H531V904H530V900H529V904H528V901H527H526V907H525H524H523V903H522V907H521V902H520V906H519Z"/>
<path fill="#ee82ee" d="M540 874H541V864H542V866H543V864H544V862H545V863H546V882H547V861H548V862H549V864H550V861H551V864H552V862H553V859H554H555V858H556V866H557V861H558V858H559V857H560V853H561V857H562V852H563V855H564V854H565V852H566H567V848V901V902H566V915H565V906H564V904H563V905H562V906H561V911H560V907H559H558V906H557V904H556V911H555V908H554V907H553V906H552H551H550V905H549V909H548V908H547V906H546V907H545V908H544V911H543V906H542V910H541V907H540Z"/>
<path fill="#ee82ee" d="M567 839H568V838H569V839H570H571H572H573H574H575H576V838H577H578V839H579H580V838H581H582H583H584H585V839H586H587H588V838H589V839H590H591H592V838H593V839H594H595V838H596H597V839H598H599V838H600H601H602V839H603V838H604V839H605V838V891V892H604H603H602V893H601V891H600V895H599V891H598V890H597V895H596V891H595V894H594V892H593V894H592V892H591H590H589V893H588V890H587H586H585V893H584V890H583V893H582V892H581V890H580V892H579V890H578V891H577V890H576V894H575V890H574V893H573V890H572H571V891H570V895H569V894H568H567Z"/>
<path fill="#ee82ee" d="M607 839H608V850H609V838H610V861H611V839H612V838H613H614H615H616V839H617V866H618V838H619V854H620V863H621V839H622V838H623H624V839H625V838H626H627V839H628V838H629H630H631H632H633H634V839H635H636V838H637V839H638V852H639V839H640V838H641H642V839H643V838H644H645H646V844H647V838H648H649H650V888V892H649V888H648V889H647V891H646V890H645V892H644V889H643V891H642V890H641V892H640V889H639V890H638V888H637V893H636V889H635H634H633V891H632V889H631H630V892H629V893H628V889H627V892H626V891H625V894H624V892H623H622V890H621V892H620H619V890H618V895H617V893H616H615V894H614H613V895H612V891H611V894H610V896H609V894H608V892H607Z"/>
<path fill="#ee82ee" d="M650 856H651V853H652V841H653V850H654V840H655V842H656V847H657V842H658V841H659V871H660V837H661V840H662V842H663V839H664V842H665V841H666V872H667V859H668V840H669V838H670V841H671V842H672V841H673V864H674V838H675V842H676V841H677V847H678V837H679V839H680V838H681V857H682V840H683V852H684V845H685V840H686V842H687H688V867H689V854H690V858H691V840H692V864H693V862H694V839H695V843H696V842H697V860H698V858H699V843H700V839H701V842H702V866H703V839H704V864H705V838H706V851H707V840H708V838H709V847H710V839H711V855H712V838V885H711V883H710V881H709V882H708V888H707V883H706H705V881H704V883H703V881H702V883H701H700V887H699V882H698V884H697H696V886H695H694V885H693V882H692H691V883H690V886H689V891H688V888H687V883H686V888H685V887H684H683V884H682V885H681V887H680V884H679V887H678V885H677V886H676H675V887H674V884H673V886H672V887H671V885H670V886H669V893H668V885H667V886H666V889H665V888H664V889H663V887H662V888H661V887H660V886H659H658V887H657V885H656V895H655V888H654V886H653V888H652V887H651V890H650Z"/>
<path fill="none" stroke="#ee82ee" stroke-width="1.6" d="M711.5 845V912H727L734.5 865"/>
</g>
<g clip-path="url(#cL_vxd)">
<path fill="#ff0000" d="M102 950V946H104V950V951H106V953V951H108V952V955H110V956V954H111V956V984H110H108H106H104H102Z"/>
<path fill="#ff0000" d="M112 974H113V962H114V953H115H116V956H117V949H118V956H119V957H120V955H121V957H122V955H123V956H124V957H125V959H126H127V954H128V959H129V958H130H131V956H132V955H133V957H134H135V958H136V954H137V959H138V954H139V955H140V958H141V957H142V955H143V957H144V958H145V957H146V954H147V957H148V956H149H150H151V957H152V950H153V956H154V954H155V955H156V956H157V955H158V954H159V957H160H161V953H162V946H163V956H164V955H165H166V951H167H168V953H169V950H170V951H171V950H172V940H173V951H174V950H175V949H176H177V951H178V952H179V951H180V948H181V949H182H183V951H184H185V950H186H187V947H188V948H189V947H190V948H191H192V946H193V947H194V950H195V946H196V949H197V948H198V944H199V947H200H201V950H202V947H203V946H204V948H205H206H207V947V984H206H205H204H203H202H201H200H199H198H197H196H195H194H193H192H191H190H189H188H187H186H185H184H183H182H181H180H179H178H177H176H175H174H173H172H171H170H169H168H167H166H165H164H163H162H161H160H159H158H157H156H155H154H153H152H151H150H149H148H147H146H145H144H143H142H141H140H139H138H137H136H135H134H133H132H131H130H129H128H127H126H125H124H123H122H121H120H119H118H117H116H115H114H113H112Z"/>
<path fill="#ff0000" d="M356 993H357H358V978H359V986H360H361V985H362V984H363V981H364V977H365V974H366V975H367V973H368V968H369V966H370V968H371V965H372V959H373V957H374V954H375V953H376H377H378V956H379V955H380V956H381V957H382V958H383V954H384V959H385V958H386V954H387V953H388H389V951H390V950H391V946H392V948H393V946H394V943H395V944H396V946H397V944H398V942H399H400V944H401V945H402V938H403V936H404V930H405V943H406H407H408V942H409H410V938H411V942H412V943H413V989H412H411H410H409H408V990H407V989H406H405H404V990H403H402H401H400H399H398H397H396H395H394H393H392V991H391H390H389H388H387H386H385H384H383H382H381H380H379V992H378H377H376H375H374H373H372H371H370H369V993H368H367V994H366H365H364V995H363H362H361V996H360H359H358V997H357H356Z"/>
<path fill="#ff0000" d="M426 997H427V998H428V996H429H430V987H431V991H432V990H433V992H434V991H435H436V988H437V986H438H439H440V978H441V984H442V982H443V984H444V983H445V982H446V971H447V980H448V976H449V975H450V977H451V972H452V971H453V973H454V974H455V972H456V969H457H458V970H459V964H460V966H461V963H462V962H463H464H465V961H466V960H467V957H468V958H469H470V955H471V954H472V955H473V951H474V953H475V952H476V948H477H478V945H479V946H480V945H481V947H482V949H483V946H484V948H485V949H486H487V948H488V949H489V950H490V953V950V987H489H488H487H486H485H484H483H482H481H480H479H478V988H477H476H475H474H473V989H472H471H470H469H468H467V990H466H465H464V991H463V990H462V991H461H460H459V992H458H457H456H455H454V993H453H452H451H450H449V994H448H447H446H445V995H444H443H442H441V996H440H439H438H437V997H436H435H434H433V998H432H431H430H429V999H428H427H426Z"/>
<path fill="#ff0000" d="M510 997H511V999H512V997H513V992H514H515V993H516V991H517V986H518V987H519V986H520V985H521V981H522V980H523V976H524H525V973H526V966H527V965H528V962H529V958H530V952H531H532V956H533V958H534V960H535V966H536H537H538V967H539V963V996H538H537H536H535H534H533H532H531H530H529H528H527H526H525H524H523H522H521H520H519H518H517H516H515H514H513V997H512V999H511V997H510Z"/>
<path fill="#ff0000" d="M552 998H553V994H554V990H555V989H556V984H557V975H558V978H559V976H560V973H561H562V969H563V961H564V958H565V952H566V949H567V943H568V941H569V942H570V940H571V939H572V940H573V942H574H575H576V937H577V939H578H579H580V935H581V937H582V938H583V935H584H585V934H586V933H587V936H588V933H589H590V934H591V938H592V943H593V945H594V948H595V955H596V957H597V955H598V954H599V955H600V953H601V952H602V946H603V943H604V947H605V948H606H607V949H608V952H609V955H610H611V957H612V961H613V962H614V959H615V962H616V961H617H618V959H619V960H620V957H621V962H622V959H623V960H624V958H625V959H626V957H627V958H628H629V960H630V957H631V959H632V961H633V959H634V956H635H636V960H637V958H638V960H639V959H640V955H641V956H642V958H643V959H644H645V960H646V958H647V959H648V956H649V959H650V960H651V958H652V956H653H654H655V958H656V960H657H658V956H659H660V957H661V958H662V960H663H664V959H665V960H666V958H667V957H668V960H669V961H670V956H671V952H672V960H673V958H674H675V960H676H677V958H678V961H679V960H680V959H681V958H682V961H683V958H684V961H685V958H686V957H687V961H688V958H689V957H690V958H691V959H692V960H693V958H694V959H695V958H696V960H697V959H698H699V957H700H701H702V958H703V960H704V958H705H706V956H707V960H708V958H709V960H710V959H711V957H712V960V983H711H710H709H708H707H706H705H704H703H702H701H700H699H698H697H696H695H694H693H692H691H690H689H688H687H686H685H684H683H682H681H680H679H678H677H676H675H674H673H672H671H670H669H668H667H666H665H664H663H662H661H660H659H658H657H656H655H654H653H652H651H650H649H648H647V984H646V983H645H644H643V984H642H641H640H639H638H637H636H635H634H633H632H631H630H629V985H628H627H626H625H624H623H622H621H620H619H618H617H616H615V986H614H613H612H611H610H609H608H607H606H605H604H603H602H601H600V987H599H598H597H596H595H594H593H592H591H590H589H588V988H587H586H585H584H583H582H581H580H579V989H578H577V990H576H575H574V991H573H572V992H571H570H569V993H568H567V994H566H565H564V995H563H562H561V996H560H559V997H558H557V998H556H555H554V999H553H552Z"/>
<path fill="#ff0000" d="M727 997H728V996H729V995H730V994H731H732V991H733V992H734V990V999H733H732H731H730H729H728H727Z"/>
<path fill="none" stroke="#ff0000" stroke-width="1.2" d="M207 998.8H356"/>
<path fill="none" stroke="#ff0000" stroke-width="1.2" d="M413 998.8H426"/>
<path fill="none" stroke="#ff0000" stroke-width="1.2" d="M490.5 998.8H510"/>
<path fill="none" stroke="#ff0000" stroke-width="1.2" d="M539 998.8H552"/>
<path fill="none" stroke="#ff0000" stroke-width="1.2" d="M711.5 998.8H727"/>
<path fill="none" stroke="#ff0000" stroke-width="1.5" d="M306 998L307.3 991L309 998"/>
<path fill="#0000ff" d="M102 979V980H104V979H106H108V980H110V979H112V982H114V981H116V980H118H120H122H124V979H126V980H128H130V979V980H132H134H136H138V979V981H140V979H142V980H144V979V980H146V981V979H148V981V979H150H152H154V980H156V979H158V980V979H160V980V979H162V980H164V979V980H166V979H168V980V979H170V980V979H172V980H174V979V980H176V979H178V980V979H180V978H182V980V979H184V978V979H186V980H188V979H190V980H192V979V980H194V978V980H196V979V980H198V979H200V980V979H202V980V979H204H206V978V980H207V978V988V989H206V990V989H204V988H202V989H200V990H198V988V989H196H194V990V988H192V990V989H190V990V989H188V988H186V989V988H184V989H182V988H180V989H178V990H176V989H174V990V989H172V990H170H168V989H166V990H164H162V991V989H160H158H156V990V991H154V990V989H152H150V990H148V989V991H146V989H144V990H142V989V991H140V990V989H138V990H136V991V990H134V991V989H132V990H130H128V989V990H126V989H124V991V990H122H120V991V990H118V989V990H116V991V992H114V993H112V992H110V990V989H108V990V989H106V991V990H104V988V989H102V988Z"/>
<path fill="#0000ff" d="M207 997H208V996H209H210H211H212V997H213V996H214H215H216H217V997H218V996H219H220V997H221H222H223V996H224H225H226V997H227V996H228H229V997H230V996H231V997H232H233V996H234H235H236H237V997H238V996H239V997H240H241H242H243H244V996H245V997H246H247V996H248V997H249H250H251H252V996H253H254H255V997H256V996H257V997H258V996H259H260H261H262H263H264V997H265H266V996H267H268H269H270V997H271H272H273V996H274V997H275V996H276V997H277H278H279H280V996H281H282H283H284H285H286H287H288V997H289V996H290H291V997H292H293H294H295H296H297V996H298H299V997H300V996H301H302V997H303H304V996H305H306H307H308H309H310H311H312H313H314H315H316V997H317V996H318V997H319V996H320V997H321V996H322V997H323V996H324H325H326H327H328V997H329H330V996H331V997H332V996H333H334V997H335H336V996H337V997H338H339V996H340H341H342V997H343H344V996H345V997H346H347H348H349V996H350V997H351H352V996H353V997H354V996H355H356V997V999H355H354H353H352H351H350H349H348H347H346H345H344H343H342H341H340H339H338H337H336H335H334H333H332H331H330H329H328H327H326H325H324H323H322H321H320H319H318H317H316H315H314H313H312H311H310H309H308H307H306H305H304H303H302H301H300H299H298H297H296H295H294H293H292H291H290H289H288H287H286H285H284H283H282H281H280H279H278H277H276H275H274H273H272H271H270H269H268H267H266H265H264H263H262H261H260H259H258H257H256H255H254H253H252H251H250H249H248H247H246H245H244H243H242H241H240H239H238H237H236H235H234H233H232H231H230H229H228H227H226H225H224H223H222H221H220H219H218H217H216H215H214H213H212H211H210H209H208H207Z"/>
<path fill="#0000ff" d="M356 997H357V995H358H359H360H361V994H362V993H363H364H365V991H366H367H368V990H369V991H370V990H371V989H372V990H373V989H374V990H375V989H376H377V988H378H379H380V989H381H382V988H383H384V989H385V988H386V989H387V988H388V987H389V989H390V987H391V988H392H393H394H395H396H397H398V987H399V988H400H401H402V987H403V986H404V987H405V986H406H407V987H408H409H410V986H411H412H413V985V990V991H412H411V992H410V991H409V992H408V991H407H406H405V992H404V991H403V992H402V993H401H400V992H399V991H398V993H397V992H396V993H395V992H394H393H392V994H391V993H390H389V994H388H387V993H386V994H385V993H384V994H383H382V993H381H380V995H379H378V994H377V993H376V994H375V995H374V994H373V995H372V996H371V995H370H369V996H368V995H367H366V996H365V998H364V996H363V998H362V997H361V998H360H359V999H358V998H357V1000H356Z"/>
<path fill="#0000ff" d="M490 996H492V997H494V996H496V997H498V996H500V997H502V996H504H506H508H510V997V996V999H508H506H504H502H500H498H496H494H492H490Z"/>
<path fill="#0000ff" d="M435 999H436V998H437V996H438V997H439H440V996H441V994H442H443H444V993H445H446H447H448H449V991H450H451H452H453H454V990H455V989H456V990H457V989H458H459V988H460V989H461V988H462H463H464V989H465V988H466V987H467H468V986H469V988H470V987H471V986H472H473V987H474V986H475H476V985H477V984H478H479H480V985H481H482V984H483V983H484V984H485V985H486V984H487H488V983H489V984H490V985V984V990V991H489V992H488V991H487H486V992H485V991H484V993H483H482V992H481V993H480H479H478H477H476V992H475V993H474V994H473H472H471V993H470H469V995H468V994H467V995H466V994H465H464V995H463H462H461H460V996H459V994H458V996H457V995H456V996H455V995H454H453H452H451V996H450H449V997H448H447V996H446V997H445H444V998H443V997H442V998H441H440V999H439H438V998H437V999H436V1000H435Z"/>
<path fill="#0000ff" d="M510 992H511V994H512V993H513H514V994H515H516V993H517V994H518V992H519V993H520V994H521H522V993H523V994H524V993H525V994H526V993H527H528V992H529H530V993H531V994H532V992H533V993H534V992H535V993H536V994H537H538V993H539V999H538H537H536H535H534H533H532H531H530H529H528H527H526H525H524H523H522H521H520H519H518H517H516H515H514H513H512H511H510Z"/>
<path fill="#0000ff" d="M539 997H540H541V996H542V997H543H544H545V996H546H547H548H549H550V997H551H552V996V999H551H550H549H548H547H546H545H544H543H542H541H540H539Z"/>
<path fill="#0000ff" d="M552 998H553V999H554V998H555V996H556H557V995H558V996H559V995H560V993H561V995H562V994H563H564V993H565V994H566V992H567V991H568H569H570H571V989H572V990H573H574V988H575V989H576V988H577H578V986H579V987H580V986H581V987H582V986H583H584H585V987H586V986H587V985H588H589V986H590V985H591V984H592V985H593V986H594V985H595V986H596V984H597H598V985H599V986H600V984H601V985H602V986H603V984H604V985H605V984H606H607H608V985H609V983H610V985H611V984H612H613V983H614H615H616V985H617V983H618V984H619V982H620H621V983H622V982H623V984H624V982H625V983H626V982H627H628V983H629V982H630H631H632H633V983H634V981H635V983H636V982H637H638H639H640V981H641H642V982H643H644H645V981H646H647H648V980H649V982H650V980H651H652H653V982H654V981H655V980H656V981H657H658H659V982H660H661V981H662V982H663V981H664V982H665V981H666H667H668V982H669H670V981H671V980H672H673H674V981H675V982H676H677V980H678H679V981H680H681V980H682V981H683V982H684H685H686H687H688V981H689V982H690V980H691V981H692V980H693V981H694V982H695H696V981H697V982H698V980H699H700V981H701V980H702H703V981H704H705V982H706H707H708H709V981H710V980H711H712V981V990V989H711H710V990H709V989H708H707V990H706V991H705V990H704H703H702V989H701V990H700V989H699V990H698V991H697V990H696V989H695V990H694H693H692V991H691H690V989H689V990H688H687H686H685H684V991H683H682H681H680H679V990H678H677H676V991H675H674V990H673H672V992H671V991H670V992H669H668V991H667V992H666H665V991H664H663V992H662V993H661V991H660V992H659H658H657H656V991H655V992H654H653V991H652V993H651V991H650V992H649V993H648H647V992H646V991H645H644V993H643V991H642H641V992H640H639H638V993H637V992H636V993H635V992H634V994H633V993H632V992H631V993H630V992H629V993H628H627V992H626H625H624V993H623H622V992H621H620H619V993H618V994H617V993H616H615V994H614H613V993H612H611H610V994H609H608H607V993H606H605V994H604V993H603H602H601V995H600H599H598V993H597V994H596V995H595V994H594V995H593H592V994H591H590V995H589H588H587H586V996H585V994H584V995H583V994H582V995H581V996H580V995H579V994H578V995H577H576H575V997H574V995H573V997H572H571V996H570H569V998H568V996H567V998H566V997H565V998H564H563V999H562V997H561H560V998H559V999H558H557V997H556V998H555V1000H554V999H553H552Z"/>
<path fill="#0000ff" d="M712 996H714V997V996H716V997V996H718H720H722H724V997H726H727V996V999H726H724H722H720H718H716H714H712Z"/>
<path fill="none" stroke="#0000ff" stroke-width="1.2" d="M490.3 999V932.8"/>
<path fill="#0000ff" d="M188 942L190 945V949H188Z"/>
<path fill="#0000ff" d="M134 952L135 954V957H134Z"/>
<path fill="#0000ff" d="M111 950L112 952V957H111Z"/>
<path fill="#0000ff" d="M180 942L181 945V950H180Z"/>
<path fill="#0000ff" d="M181 947L182 943V950H181Z"/>
<path fill="#0000ff" d="M116 950L117 952V957H116Z"/>
<path fill="#0000ff" d="M202 942L203 943V948H202Z"/>
<path fill="#0000ff" d="M115 954L116 950V957H115Z"/>
<path fill="#0000ff" d="M161 952L163 951V956H161Z"/>
<path fill="#0000ff" d="M167 948H169V954H167Z"/>
<path fill="#0000ff" d="M160 949L161 953V956H160Z"/>
<path fill="#0000ff" d="M193 943L194 941V949H193Z"/>
<path fill="#0000ff" d="M119 955L121 953V958H119Z"/>
<path fill="#0000ff" d="M122 952L124 953V958H122Z"/>
<path fill="#0000ff" d="M103 951L105 948V955H103Z"/>
<path fill="#0000ff" d="M201 942L203 944V948H201Z"/>
<path fill="#0000ff" d="M115 950L117 954V957H115Z"/>
<path fill="#0000ff" d="M371 960L373 962V966H371Z"/>
<path fill="#0000ff" d="M382 953L383 951V956H382Z"/>
<path fill="#0000ff" d="M401 939H402V947H401Z"/>
<path fill="#0000ff" d="M394 939L395 943V947H394Z"/>
<path fill="#0000ff" d="M366 970L367 967V974H366Z"/>
<path fill="#0000ff" d="M403 941L404 942V946H403Z"/>
<path fill="#0000ff" d="M377 953L378 955V961H377Z"/>
<path fill="#0000ff" d="M368 969L369 968V972H368Z"/>
<path fill="#0000ff" d="M359 984H360V989H359Z"/>
<path fill="#0000ff" d="M472 952L473 950V955H472Z"/>
<path fill="#0000ff" d="M445 974H446V981H445Z"/>
<path fill="#0000ff" d="M467 952L468 955V960H467Z"/>
<path fill="#0000ff" d="M481 944L483 940V948H481Z"/>
<path fill="#0000ff" d="M461 958L463 959V965H461Z"/>
<path fill="#0000ff" d="M443 976L445 979V983H443Z"/>
<path fill="#0000ff" d="M458 962L459 961V968H458Z"/>
<path fill="#0000ff" d="M446 976L447 977V980H446Z"/>
<path fill="#0000ff" d="M488 945L490 949V952H488Z"/>
<path fill="#0000ff" d="M596 934L597 939V942H596Z"/>
<path fill="#0000ff" d="M640 955L642 956V960H640Z"/>
<path fill="#0000ff" d="M690 956H692V959H690Z"/>
<path fill="#0000ff" d="M581 933L582 935V939H581Z"/>
<path fill="#0000ff" d="M598 938L600 939V945H598Z"/>
<path fill="#0000ff" d="M684 956H685V960H684Z"/>
<path fill="#0000ff" d="M564 951L565 952V957H564Z"/>
<path fill="#0000ff" d="M630 955L631 954V961H630Z"/>
<path fill="#0000ff" d="M612 957H613V961H612Z"/>
<path fill="#0000ff" d="M683 952L685 955V960H683Z"/>
<path fill="#0000ff" d="M567 941H568V947H567Z"/>
<path fill="#0000ff" d="M653 957L655 956V960H653Z"/>
<path fill="#0000ff" d="M587 931L588 932V936H587Z"/>
<path fill="#0000ff" d="M622 955L623 953V961H622Z"/>
<path fill="#0000ff" d="M573 938L575 935V942H573Z"/>
<path fill="#0000ff" d="M625 955H626V961H625Z"/>
<path fill="#0000ff" d="M584 934L585 933V938H584Z"/>
<path fill="#0000ff" d="M701 955H702V959H701Z"/>
<path fill="#0000ff" d="M582 934L584 931V938H582Z"/>
<path fill="#0000ff" d="M684 953L685 955V960H684Z"/>
<path fill="#0000ff" d="M584 933L585 934V938H584Z"/>
<path fill="#0000ff" d="M639 955L640 956V960H639Z"/>
<path fill="#0000ff" d="M598 939L599 937V944H598Z"/>
<path fill="#0000ff" d="M622 954H623V961H622Z"/>
<path fill="#0000ff" d="M606 947H607V954H606Z"/>
<path fill="#0000ff" d="M653 956H654V960H653Z"/>
</g>
<text x="99" y="237" font-family='"Liberation Mono", monospace' font-size="13.4" text-anchor="end" font-weight="normal" fill="#000" stroke="#000" stroke-width="0.3">0</text>
<text x="99" y="224" font-family='"Liberation Mono", monospace' font-size="13.4" text-anchor="end" font-weight="normal" fill="#000" stroke="#000" stroke-width="0.3">10000</text>
<text x="99" y="211" font-family='"Liberation Mono", monospace' font-size="13.4" text-anchor="end" font-weight="normal" fill="#000" stroke="#000" stroke-width="0.3">20000</text>
<text x="99" y="198.1" font-family='"Liberation Mono", monospace' font-size="13.4" text-anchor="end" font-weight="normal" fill="#000" stroke="#000" stroke-width="0.3">30000</text>
<text x="99" y="185" font-family='"Liberation Mono", monospace' font-size="13.4" text-anchor="end" font-weight="normal" fill="#000" stroke="#000" stroke-width="0.3">40000</text>
<text x="99" y="293" font-family='"Liberation Mono", monospace' font-size="13.2" text-anchor="end" font-weight="normal" fill="#000" stroke="#000" stroke-width="0.3">0</text>
<text x="99" y="275.8" font-family='"Liberation Mono", monospace' font-size="13.2" text-anchor="end" font-weight="normal" fill="#000" stroke="#000" stroke-width="0.3">500</text>
<text x="99" y="258.9" font-family='"Liberation Mono", monospace' font-size="13.2" text-anchor="end" font-weight="normal" fill="#000" stroke="#000" stroke-width="0.3">1000</text>
<text x="99" y="242" font-family='"Liberation Mono", monospace' font-size="13.2" text-anchor="end" font-weight="normal" fill="#000" stroke="#000" stroke-width="0.3">1500</text>
<text x="99" y="348.1" font-family='"Liberation Mono", monospace' font-size="12.8" text-anchor="end" font-weight="normal" fill="#000" stroke="#000" stroke-width="0.3">0</text>
<text x="99" y="336" font-family='"Liberation Mono", monospace' font-size="12.8" text-anchor="end" font-weight="normal" fill="#000" stroke="#000" stroke-width="0.3">5</text>
<text x="99" y="323.9" font-family='"Liberation Mono", monospace' font-size="12.8" text-anchor="end" font-weight="normal" fill="#000" stroke="#000" stroke-width="0.3">10</text>
<text x="99" y="311.8" font-family='"Liberation Mono", monospace' font-size="12.8" text-anchor="end" font-weight="normal" fill="#000" stroke="#000" stroke-width="0.3">15</text>
<text x="99" y="299.7" font-family='"Liberation Mono", monospace' font-size="12.8" text-anchor="end" font-weight="normal" fill="#000" stroke="#000" stroke-width="0.3">20</text>
<text x="99" y="403.8" font-family='"Liberation Mono", monospace' font-size="12.8" text-anchor="end" font-weight="normal" fill="#000" stroke="#000" stroke-width="0.3">0</text>
<text x="99" y="387.9" font-family='"Liberation Mono", monospace' font-size="12.8" text-anchor="end" font-weight="normal" fill="#000" stroke="#000" stroke-width="0.3">1</text>
<text x="99" y="371.9" font-family='"Liberation Mono", monospace' font-size="12.8" text-anchor="end" font-weight="normal" fill="#000" stroke="#000" stroke-width="0.3">2</text>
<text x="99" y="356" font-family='"Liberation Mono", monospace' font-size="12.8" text-anchor="end" font-weight="normal" fill="#000" stroke="#000" stroke-width="0.3">3</text>
<text x="99" y="461.2" font-family='"Liberation Mono", monospace' font-size="12.8" text-anchor="end" font-weight="normal" fill="#000" stroke="#000" stroke-width="0.3">0</text>
<text x="99" y="449.2" font-family='"Liberation Mono", monospace' font-size="12.8" text-anchor="end" font-weight="normal" fill="#000" stroke="#000" stroke-width="0.3">1</text>
<text x="99" y="437.2" font-family='"Liberation Mono", monospace' font-size="12.8" text-anchor="end" font-weight="normal" fill="#000" stroke="#000" stroke-width="0.3">2</text>
<text x="99" y="425.2" font-family='"Liberation Mono", monospace' font-size="12.8" text-anchor="end" font-weight="normal" fill="#000" stroke="#000" stroke-width="0.3">3</text>
<text x="99" y="413.2" font-family='"Liberation Mono", monospace' font-size="12.8" text-anchor="end" font-weight="normal" fill="#000" stroke="#000" stroke-width="0.3">4</text>
<text x="99" y="518" font-family='"Liberation Mono", monospace' font-size="12.8" text-anchor="end" font-weight="normal" fill="#000" stroke="#000" stroke-width="0.3">0</text>
<text x="99" y="507.7" font-family='"Liberation Mono", monospace' font-size="12.8" text-anchor="end" font-weight="normal" fill="#000" stroke="#000" stroke-width="0.3">20</text>
<text x="99" y="497.5" font-family='"Liberation Mono", monospace' font-size="12.8" text-anchor="end" font-weight="normal" fill="#000" stroke="#000" stroke-width="0.3">40</text>
<text x="99" y="487.2" font-family='"Liberation Mono", monospace' font-size="12.8" text-anchor="end" font-weight="normal" fill="#000" stroke="#000" stroke-width="0.3">60</text>
<text x="99" y="476.9" font-family='"Liberation Mono", monospace' font-size="12.8" text-anchor="end" font-weight="normal" fill="#000" stroke="#000" stroke-width="0.3">80</text>
<text x="99" y="466.7" font-family='"Liberation Mono", monospace' font-size="12.8" text-anchor="end" font-weight="normal" fill="#000" stroke="#000" stroke-width="0.3">100</text>
<text x="99" y="601.9" font-family='"Liberation Mono", monospace' font-size="14.3" text-anchor="end" font-weight="normal" fill="#000" stroke="#000" stroke-width="0.3">0</text>
<text x="99" y="575.5" font-family='"Liberation Mono", monospace' font-size="14.3" text-anchor="end" font-weight="normal" fill="#000" stroke="#000" stroke-width="0.3">5000</text>
<text x="99" y="549.1" font-family='"Liberation Mono", monospace' font-size="14.3" text-anchor="end" font-weight="normal" fill="#000" stroke="#000" stroke-width="0.3">10000</text>
<text x="99" y="522.7" font-family='"Liberation Mono", monospace' font-size="14.3" text-anchor="end" font-weight="normal" fill="#000" stroke="#000" stroke-width="0.3">15000</text>
<text x="99" y="682.5" font-family='"Liberation Mono", monospace' font-size="14.3" text-anchor="end" font-weight="normal" fill="#000" stroke="#000" stroke-width="0.3">0</text>
<text x="99" y="669.3" font-family='"Liberation Mono", monospace' font-size="14.3" text-anchor="end" font-weight="normal" fill="#000" stroke="#000" stroke-width="0.3">5</text>
<text x="99" y="656" font-family='"Liberation Mono", monospace' font-size="14.3" text-anchor="end" font-weight="normal" fill="#000" stroke="#000" stroke-width="0.3">10</text>
<text x="99" y="642.7" font-family='"Liberation Mono", monospace' font-size="14.3" text-anchor="end" font-weight="normal" fill="#000" stroke="#000" stroke-width="0.3">15</text>
<text x="99" y="629.5" font-family='"Liberation Mono", monospace' font-size="14.3" text-anchor="end" font-weight="normal" fill="#000" stroke="#000" stroke-width="0.3">20</text>
<text x="99" y="616.2" font-family='"Liberation Mono", monospace' font-size="14.3" text-anchor="end" font-weight="normal" fill="#000" stroke="#000" stroke-width="0.3">25</text>
<text x="99" y="602.9" font-family='"Liberation Mono", monospace' font-size="14.3" text-anchor="end" font-weight="normal" fill="#000" stroke="#000" stroke-width="0.3">30</text>
<text x="99" y="763.1" font-family='"Liberation Mono", monospace' font-size="14.3" text-anchor="end" font-weight="normal" fill="#000" stroke="#000" stroke-width="0.3">0</text>
<text x="99" y="743" font-family='"Liberation Mono", monospace' font-size="14.3" text-anchor="end" font-weight="normal" fill="#000" stroke="#000" stroke-width="0.3">1</text>
<text x="99" y="723" font-family='"Liberation Mono", monospace' font-size="14.3" text-anchor="end" font-weight="normal" fill="#000" stroke="#000" stroke-width="0.3">2</text>
<text x="99" y="702.9" font-family='"Liberation Mono", monospace' font-size="14.3" text-anchor="end" font-weight="normal" fill="#000" stroke="#000" stroke-width="0.3">3</text>
<text x="99" y="682.8" font-family='"Liberation Mono", monospace' font-size="14.3" text-anchor="end" font-weight="normal" fill="#000" stroke="#000" stroke-width="0.3">4</text>
<text x="99" y="843" font-family='"Liberation Mono", monospace' font-size="14.5" text-anchor="end" font-weight="normal" fill="#000" stroke="#000" stroke-width="0.3">0</text>
<text x="99" y="829.7" font-family='"Liberation Mono", monospace' font-size="14.5" text-anchor="end" font-weight="normal" fill="#000" stroke="#000" stroke-width="0.3">50</text>
<text x="99" y="816.4" font-family='"Liberation Mono", monospace' font-size="14.5" text-anchor="end" font-weight="normal" fill="#000" stroke="#000" stroke-width="0.3">100</text>
<text x="99" y="803.1" font-family='"Liberation Mono", monospace' font-size="14.5" text-anchor="end" font-weight="normal" fill="#000" stroke="#000" stroke-width="0.3">150</text>
<text x="99" y="789.8" font-family='"Liberation Mono", monospace' font-size="14.5" text-anchor="end" font-weight="normal" fill="#000" stroke="#000" stroke-width="0.3">200</text>
<text x="99" y="776.5" font-family='"Liberation Mono", monospace' font-size="14.5" text-anchor="end" font-weight="normal" fill="#000" stroke="#000" stroke-width="0.3">250</text>
<text x="99" y="763.2" font-family='"Liberation Mono", monospace' font-size="14.5" text-anchor="end" font-weight="normal" fill="#000" stroke="#000" stroke-width="0.3">300</text>
<text x="99" y="922.4" font-family='"Liberation Mono", monospace' font-size="14.5" text-anchor="end" font-weight="normal" fill="#000" stroke="#000" stroke-width="0.3">0</text>
<text x="99" y="906.6" font-family='"Liberation Mono", monospace' font-size="14.5" text-anchor="end" font-weight="normal" fill="#000" stroke="#000" stroke-width="0.3">10</text>
<text x="99" y="890.8" font-family='"Liberation Mono", monospace' font-size="14.5" text-anchor="end" font-weight="normal" fill="#000" stroke="#000" stroke-width="0.3">20</text>
<text x="99" y="875" font-family='"Liberation Mono", monospace' font-size="14.5" text-anchor="end" font-weight="normal" fill="#000" stroke="#000" stroke-width="0.3">30</text>
<text x="99" y="859.2" font-family='"Liberation Mono", monospace' font-size="14.5" text-anchor="end" font-weight="normal" fill="#000" stroke="#000" stroke-width="0.3">40</text>
<text x="99" y="843.4" font-family='"Liberation Mono", monospace' font-size="14.5" text-anchor="end" font-weight="normal" fill="#000" stroke="#000" stroke-width="0.3">50</text>
<text x="99" y="1004.2" font-family='"Liberation Mono", monospace' font-size="14.8" text-anchor="end" font-weight="normal" fill="#000" stroke="#000" stroke-width="0.3">0</text>
<text x="99" y="982.1" font-family='"Liberation Mono", monospace' font-size="14.8" text-anchor="end" font-weight="normal" fill="#000" stroke="#000" stroke-width="0.3">200</text>
<text x="99" y="960.1" font-family='"Liberation Mono", monospace' font-size="14.8" text-anchor="end" font-weight="normal" fill="#000" stroke="#000" stroke-width="0.3">400</text>
<text x="99" y="938" font-family='"Liberation Mono", monospace' font-size="14.8" text-anchor="end" font-weight="normal" fill="#000" stroke="#000" stroke-width="0.3">600</text>
<path fill="none" stroke="#000" stroke-width="1.1" d="M105.5 232.5v-10.5M128.5 232.5v-3.8M152.5 232.5v-3.8M175.5 232.5v-10.5M199.5 232.5v-3.8M222.5 232.5v-3.8M246.5 232.5v-10.5M269.5 232.5v-3.8M293.5 232.5v-3.8M316.5 232.5v-10.5M339.5 232.5v-3.8M363.5 232.5v-3.8M386.5 232.5v-10.5M410.5 232.5v-3.8M433.5 232.5v-3.8M457.5 232.5v-10.5M480.5 232.5v-3.8M504.5 232.5v-3.8M527.5 232.5v-10.5M550.5 232.5v-3.8M574.5 232.5v-3.8M597.5 232.5v-10.5M621.5 232.5v-3.8M644.5 232.5v-3.8M668.5 232.5v-10.5M691.5 232.5v-3.8M715.5 232.5v-3.8M101.5 232.5h22M101.5 219.5h22M101.5 206.5h22M101.5 193.5h22M101.5 180.5h22M105.5 288.5v-10.5M128.5 288.5v-3.8M152.5 288.5v-3.8M175.5 288.5v-10.5M199.5 288.5v-3.8M222.5 288.5v-3.8M246.5 288.5v-10.5M269.5 288.5v-3.8M293.5 288.5v-3.8M316.5 288.5v-10.5M339.5 288.5v-3.8M363.5 288.5v-3.8M386.5 288.5v-10.5M410.5 288.5v-3.8M433.5 288.5v-3.8M457.5 288.5v-10.5M480.5 288.5v-3.8M504.5 288.5v-3.8M527.5 288.5v-10.5M550.5 288.5v-3.8M574.5 288.5v-3.8M597.5 288.5v-10.5M621.5 288.5v-3.8M644.5 288.5v-3.8M668.5 288.5v-10.5M691.5 288.5v-3.8M715.5 288.5v-3.8M101.5 288.5h22M101.5 271.5h22M101.5 254.5h22M101.5 237.5h22M105.5 343.5v-10.5M128.5 343.5v-3.8M152.5 343.5v-3.8M175.5 343.5v-10.5M199.5 343.5v-3.8M222.5 343.5v-3.8M246.5 343.5v-10.5M269.5 343.5v-3.8M293.5 343.5v-3.8M316.5 343.5v-10.5M339.5 343.5v-3.8M363.5 343.5v-3.8M386.5 343.5v-10.5M410.5 343.5v-3.8M433.5 343.5v-3.8M457.5 343.5v-10.5M480.5 343.5v-3.8M504.5 343.5v-3.8M527.5 343.5v-10.5M550.5 343.5v-3.8M574.5 343.5v-3.8M597.5 343.5v-10.5M621.5 343.5v-3.8M644.5 343.5v-3.8M668.5 343.5v-10.5M691.5 343.5v-3.8M715.5 343.5v-3.8M101.5 343.5h22M101.5 331.5h22M101.5 319.5h22M101.5 307.5h22M101.5 295.5h22M105.5 401.5v-10.5M128.5 401.5v-3.8M152.5 401.5v-3.8M175.5 401.5v-10.5M199.5 401.5v-3.8M222.5 401.5v-3.8M246.5 401.5v-10.5M269.5 401.5v-3.8M293.5 401.5v-3.8M316.5 401.5v-10.5M339.5 401.5v-3.8M363.5 401.5v-3.8M386.5 401.5v-10.5M410.5 401.5v-3.8M433.5 401.5v-3.8M457.5 401.5v-10.5M480.5 401.5v-3.8M504.5 401.5v-3.8M527.5 401.5v-10.5M550.5 401.5v-3.8M574.5 401.5v-3.8M597.5 401.5v-10.5M621.5 401.5v-3.8M644.5 401.5v-3.8M668.5 401.5v-10.5M691.5 401.5v-3.8M715.5 401.5v-3.8M101.5 399.5h22M101.5 383.5h22M101.5 367.5h22M101.5 351.5h22M105.5 457.5v-10.5M128.5 457.5v-3.8M152.5 457.5v-3.8M175.5 457.5v-10.5M199.5 457.5v-3.8M222.5 457.5v-3.8M246.5 457.5v-10.5M269.5 457.5v-3.8M293.5 457.5v-3.8M316.5 457.5v-10.5M339.5 457.5v-3.8M363.5 457.5v-3.8M386.5 457.5v-10.5M410.5 457.5v-3.8M433.5 457.5v-3.8M457.5 457.5v-10.5M480.5 457.5v-3.8M504.5 457.5v-3.8M527.5 457.5v-10.5M550.5 457.5v-3.8M574.5 457.5v-3.8M597.5 457.5v-10.5M621.5 457.5v-3.8M644.5 457.5v-3.8M668.5 457.5v-10.5M691.5 457.5v-3.8M715.5 457.5v-3.8M101.5 456.5h22M101.5 444.5h22M101.5 432.5h22M101.5 420.5h22M101.5 408.5h22M105.5 517.5v-10.5M128.5 517.5v-3.8M152.5 517.5v-3.8M175.5 517.5v-10.5M199.5 517.5v-3.8M222.5 517.5v-3.8M246.5 517.5v-10.5M269.5 517.5v-3.8M293.5 517.5v-3.8M316.5 517.5v-10.5M339.5 517.5v-3.8M363.5 517.5v-3.8M386.5 517.5v-10.5M410.5 517.5v-3.8M433.5 517.5v-3.8M457.5 517.5v-10.5M480.5 517.5v-3.8M504.5 517.5v-3.8M527.5 517.5v-10.5M550.5 517.5v-3.8M574.5 517.5v-3.8M597.5 517.5v-10.5M621.5 517.5v-3.8M644.5 517.5v-3.8M668.5 517.5v-10.5M691.5 517.5v-3.8M715.5 517.5v-3.8M101.5 513.5h22M101.5 503.5h22M101.5 493.5h22M101.5 482.5h22M101.5 472.5h22M101.5 462.5h22M105.5 597.5v-10.5M128.5 597.5v-3.8M152.5 597.5v-3.8M175.5 597.5v-10.5M199.5 597.5v-3.8M222.5 597.5v-3.8M246.5 597.5v-10.5M269.5 597.5v-3.8M293.5 597.5v-3.8M316.5 597.5v-10.5M339.5 597.5v-3.8M363.5 597.5v-3.8M386.5 597.5v-10.5M410.5 597.5v-3.8M433.5 597.5v-3.8M457.5 597.5v-10.5M480.5 597.5v-3.8M504.5 597.5v-3.8M527.5 597.5v-10.5M550.5 597.5v-3.8M574.5 597.5v-3.8M597.5 597.5v-10.5M621.5 597.5v-3.8M644.5 597.5v-3.8M668.5 597.5v-10.5M691.5 597.5v-3.8M715.5 597.5v-3.8M101.5 597.5h22M101.5 570.5h22M101.5 544.5h22M101.5 517.5h22M105.5 677.5v-10.5M128.5 677.5v-3.8M152.5 677.5v-3.8M175.5 677.5v-10.5M199.5 677.5v-3.8M222.5 677.5v-3.8M246.5 677.5v-10.5M269.5 677.5v-3.8M293.5 677.5v-3.8M316.5 677.5v-10.5M339.5 677.5v-3.8M363.5 677.5v-3.8M386.5 677.5v-10.5M410.5 677.5v-3.8M433.5 677.5v-3.8M457.5 677.5v-10.5M480.5 677.5v-3.8M504.5 677.5v-3.8M527.5 677.5v-10.5M550.5 677.5v-3.8M574.5 677.5v-3.8M597.5 677.5v-10.5M621.5 677.5v-3.8M644.5 677.5v-3.8M668.5 677.5v-10.5M691.5 677.5v-3.8M715.5 677.5v-3.8M101.5 677.5h22M101.5 664.5h22M101.5 651.5h22M101.5 637.5h22M101.5 624.5h22M101.5 611.5h22M101.5 598.5h22M105.5 758.5v-10.5M128.5 758.5v-3.8M152.5 758.5v-3.8M175.5 758.5v-10.5M199.5 758.5v-3.8M222.5 758.5v-3.8M246.5 758.5v-10.5M269.5 758.5v-3.8M293.5 758.5v-3.8M316.5 758.5v-10.5M339.5 758.5v-3.8M363.5 758.5v-3.8M386.5 758.5v-10.5M410.5 758.5v-3.8M433.5 758.5v-3.8M457.5 758.5v-10.5M480.5 758.5v-3.8M504.5 758.5v-3.8M527.5 758.5v-10.5M550.5 758.5v-3.8M574.5 758.5v-3.8M597.5 758.5v-10.5M621.5 758.5v-3.8M644.5 758.5v-3.8M668.5 758.5v-10.5M691.5 758.5v-3.8M715.5 758.5v-3.8M101.5 758.5h22M101.5 738.5h22M101.5 718.5h22M101.5 698.5h22M101.5 677.5h22M105.5 838.5v-10.5M128.5 838.5v-3.8M152.5 838.5v-3.8M175.5 838.5v-10.5M199.5 838.5v-3.8M222.5 838.5v-3.8M246.5 838.5v-10.5M269.5 838.5v-3.8M293.5 838.5v-3.8M316.5 838.5v-10.5M339.5 838.5v-3.8M363.5 838.5v-3.8M386.5 838.5v-10.5M410.5 838.5v-3.8M433.5 838.5v-3.8M457.5 838.5v-10.5M480.5 838.5v-3.8M504.5 838.5v-3.8M527.5 838.5v-10.5M550.5 838.5v-3.8M574.5 838.5v-3.8M597.5 838.5v-10.5M621.5 838.5v-3.8M644.5 838.5v-3.8M668.5 838.5v-10.5M691.5 838.5v-3.8M715.5 838.5v-3.8M101.5 838.5h22M101.5 824.5h22M101.5 811.5h22M101.5 798.5h22M101.5 784.5h22M101.5 771.5h22M101.5 758.5h22M105.5 918.5v-10.5M128.5 918.5v-3.8M152.5 918.5v-3.8M175.5 918.5v-10.5M199.5 918.5v-3.8M222.5 918.5v-3.8M246.5 918.5v-10.5M269.5 918.5v-3.8M293.5 918.5v-3.8M316.5 918.5v-10.5M339.5 918.5v-3.8M363.5 918.5v-3.8M386.5 918.5v-10.5M410.5 918.5v-3.8M433.5 918.5v-3.8M457.5 918.5v-10.5M480.5 918.5v-3.8M504.5 918.5v-3.8M527.5 918.5v-10.5M550.5 918.5v-3.8M574.5 918.5v-3.8M597.5 918.5v-10.5M621.5 918.5v-3.8M644.5 918.5v-3.8M668.5 918.5v-10.5M691.5 918.5v-3.8M715.5 918.5v-3.8M101.5 917.5h22M101.5 901.5h22M101.5 885.5h22M101.5 870.5h22M101.5 854.5h22M101.5 838.5h22M105.5 999.5v-10.5M128.5 999.5v-3.8M152.5 999.5v-3.8M175.5 999.5v-10.5M199.5 999.5v-3.8M222.5 999.5v-3.8M246.5 999.5v-10.5M269.5 999.5v-3.8M293.5 999.5v-3.8M316.5 999.5v-10.5M339.5 999.5v-3.8M363.5 999.5v-3.8M386.5 999.5v-10.5M410.5 999.5v-3.8M433.5 999.5v-3.8M457.5 999.5v-10.5M480.5 999.5v-3.8M504.5 999.5v-3.8M527.5 999.5v-10.5M550.5 999.5v-3.8M574.5 999.5v-3.8M597.5 999.5v-10.5M621.5 999.5v-3.8M644.5 999.5v-3.8M668.5 999.5v-10.5M691.5 999.5v-3.8M715.5 999.5v-3.8M101.5 999.5h22M101.5 977.5h22M101.5 955.5h22M101.5 933.5h22"/>
<path fill="none" stroke="#000" stroke-width="1" d="M101.5 229.5h8M101.5 227.5h8M101.5 224.5h8M101.5 222.5h8M101.5 216.5h8M101.5 214.5h8M101.5 211.5h8M101.5 209.5h8M101.5 203.5h8M101.5 201.5h8M101.5 198.5h8M101.5 196.5h8M101.5 190.5h8M101.5 188.5h8M101.5 185.5h8M101.5 183.5h8M101.5 177.5h8M101.5 285.5h8M101.5 281.5h8M101.5 278.5h8M101.5 274.5h8M101.5 267.5h8M101.5 264.5h8M101.5 260.5h8M101.5 257.5h8M101.5 250.5h8M101.5 247.5h8M101.5 243.5h8M101.5 240.5h8M101.5 233.5h8M101.5 341.5h8M101.5 338.5h8M101.5 336.5h8M101.5 334.5h8M101.5 329.5h8M101.5 326.5h8M101.5 324.5h8M101.5 321.5h8M101.5 317.5h8M101.5 314.5h8M101.5 312.5h8M101.5 309.5h8M101.5 304.5h8M101.5 302.5h8M101.5 300.5h8M101.5 297.5h8M101.5 292.5h8M101.5 290.5h8M101.5 396.5h8M101.5 393.5h8M101.5 389.5h8M101.5 386.5h8M101.5 380.5h8M101.5 377.5h8M101.5 373.5h8M101.5 370.5h8M101.5 364.5h8M101.5 361.5h8M101.5 358.5h8M101.5 354.5h8M101.5 348.5h8M101.5 345.5h8M101.5 454.5h8M101.5 452.5h8M101.5 449.5h8M101.5 447.5h8M101.5 442.5h8M101.5 440.5h8M101.5 437.5h8M101.5 435.5h8M101.5 430.5h8M101.5 428.5h8M101.5 425.5h8M101.5 423.5h8M101.5 418.5h8M101.5 416.5h8M101.5 413.5h8M101.5 411.5h8M101.5 406.5h8M101.5 404.5h8M101.5 401.5h8M101.5 511.5h8M101.5 509.5h8M101.5 507.5h8M101.5 505.5h8M101.5 501.5h8M101.5 499.5h8M101.5 497.5h8M101.5 495.5h8M101.5 490.5h8M101.5 488.5h8M101.5 486.5h8M101.5 484.5h8M101.5 480.5h8M101.5 478.5h8M101.5 476.5h8M101.5 474.5h8M101.5 470.5h8M101.5 468.5h8M101.5 466.5h8M101.5 464.5h8M101.5 460.5h8M101.5 457.5h8M101.5 515.5h8M101.5 591.5h8M101.5 586.5h8M101.5 581.5h8M101.5 575.5h8M101.5 565.5h8M101.5 560.5h8M101.5 554.5h8M101.5 549.5h8M101.5 538.5h8M101.5 533.5h8M101.5 528.5h8M101.5 523.5h8M101.5 674.5h8M101.5 672.5h8M101.5 669.5h8M101.5 667.5h8M101.5 661.5h8M101.5 659.5h8M101.5 656.5h8M101.5 653.5h8M101.5 648.5h8M101.5 645.5h8M101.5 643.5h8M101.5 640.5h8M101.5 635.5h8M101.5 632.5h8M101.5 630.5h8M101.5 627.5h8M101.5 622.5h8M101.5 619.5h8M101.5 616.5h8M101.5 614.5h8M101.5 608.5h8M101.5 606.5h8M101.5 603.5h8M101.5 601.5h8M101.5 754.5h8M101.5 750.5h8M101.5 746.5h8M101.5 742.5h8M101.5 734.5h8M101.5 730.5h8M101.5 726.5h8M101.5 722.5h8M101.5 713.5h8M101.5 709.5h8M101.5 705.5h8M101.5 701.5h8M101.5 693.5h8M101.5 689.5h8M101.5 685.5h8M101.5 681.5h8M101.5 835.5h8M101.5 832.5h8M101.5 830.5h8M101.5 827.5h8M101.5 822.5h8M101.5 819.5h8M101.5 816.5h8M101.5 814.5h8M101.5 808.5h8M101.5 806.5h8M101.5 803.5h8M101.5 800.5h8M101.5 795.5h8M101.5 792.5h8M101.5 790.5h8M101.5 787.5h8M101.5 782.5h8M101.5 779.5h8M101.5 776.5h8M101.5 774.5h8M101.5 768.5h8M101.5 766.5h8M101.5 763.5h8M101.5 760.5h8M101.5 914.5h8M101.5 911.5h8M101.5 908.5h8M101.5 904.5h8M101.5 898.5h8M101.5 895.5h8M101.5 892.5h8M101.5 889.5h8M101.5 882.5h8M101.5 879.5h8M101.5 876.5h8M101.5 873.5h8M101.5 866.5h8M101.5 863.5h8M101.5 860.5h8M101.5 857.5h8M101.5 851.5h8M101.5 847.5h8M101.5 844.5h8M101.5 841.5h8M101.5 994.5h8M101.5 990.5h8M101.5 985.5h8M101.5 981.5h8M101.5 972.5h8M101.5 968.5h8M101.5 963.5h8M101.5 959.5h8M101.5 950.5h8M101.5 946.5h8M101.5 941.5h8M101.5 937.5h8M101.5 928.5h8M101.5 924.5h8M101.5 919.5h8"/>
<path fill="none" stroke="#000" stroke-width="1.2" d="M101.5 176.5V999.5M734.5 176.5V999.5M101.5 176.5H734.5M101.5 517.5H734.5"/>
<path fill="none" stroke="#808080" stroke-width="1" stroke-dasharray="2.2 1.8" d="M1005.5 53.5V112.2M1075.5 53.5V112.2M1146.5 53.5V112.2M1216.5 53.5V112.2M1286.5 53.5V112.2M1357.5 53.5V112.2M1427.5 53.5V112.2M1497.5 53.5V112.2M1568.5 53.5V112.2M1003.5 98.5H1636.5M1003.5 84.5H1636.5M1003.5 71.5H1636.5M1003.5 57.5H1636.5M1005.5 112.2V172.4M1075.5 112.2V172.4M1146.5 112.2V172.4M1216.5 112.2V172.4M1286.5 112.2V172.4M1357.5 112.2V172.4M1427.5 112.2V172.4M1497.5 112.2V172.4M1568.5 112.2V172.4M1003.5 154.5H1636.5M1003.5 135.5H1636.5M1003.5 117.5H1636.5M1005.5 172.4V231.2M1075.5 172.4V231.2M1146.5 172.4V231.2M1216.5 172.4V231.2M1286.5 172.4V231.2M1357.5 172.4V231.2M1427.5 172.4V231.2M1497.5 172.4V231.2M1568.5 172.4V231.2M1003.5 216.5H1636.5M1003.5 201.5H1636.5M1003.5 186.5H1636.5M1005.5 231.2V290.8M1075.5 231.2V290.8M1146.5 231.2V290.8M1216.5 231.2V290.8M1286.5 231.2V290.8M1357.5 231.2V290.8M1427.5 231.2V290.8M1497.5 231.2V290.8M1568.5 231.2V290.8M1003.5 272.5H1636.5M1003.5 254.5H1636.5M1003.5 236.5H1636.5M1005.5 290.8V350M1075.5 290.8V350M1146.5 290.8V350M1216.5 290.8V350M1286.5 290.8V350M1357.5 290.8V350M1427.5 290.8V350M1497.5 290.8V350M1568.5 290.8V350M1003.5 347.5H1636.5M1003.5 328.5H1636.5M1003.5 309.5H1636.5M1005.5 350V414.2M1075.5 350V414.2M1146.5 350V414.2M1216.5 350V414.2M1286.5 350V414.2M1357.5 350V414.2M1427.5 350V414.2M1497.5 350V414.2M1568.5 350V414.2M1003.5 409.5H1636.5M1003.5 399.5H1636.5M1003.5 388.5H1636.5M1003.5 377.5H1636.5M1003.5 367.5H1636.5M1003.5 356.5H1636.5M1005.5 414.2V498.9M1075.5 414.2V498.9M1146.5 414.2V498.9M1216.5 414.2V498.9M1286.5 414.2V498.9M1357.5 414.2V498.9M1427.5 414.2V498.9M1497.5 414.2V498.9M1568.5 414.2V498.9M1003.5 481.5H1636.5M1003.5 464.5H1636.5M1003.5 448.5H1636.5M1003.5 431.5H1636.5M1005.5 498.9V584M1075.5 498.9V584M1146.5 498.9V584M1216.5 498.9V584M1286.5 498.9V584M1357.5 498.9V584M1427.5 498.9V584M1497.5 498.9V584M1568.5 498.9V584M1003.5 562.5H1636.5M1003.5 541.5H1636.5M1003.5 520.5H1636.5M1005.5 584V669.4M1075.5 584V669.4M1146.5 584V669.4M1216.5 584V669.4M1286.5 584V669.4M1357.5 584V669.4M1427.5 584V669.4M1497.5 584V669.4M1568.5 584V669.4M1003.5 652.5H1636.5M1003.5 635.5H1636.5M1003.5 618.5H1636.5M1003.5 600.5H1636.5M1005.5 669.4V754M1075.5 669.4V754M1146.5 669.4V754M1216.5 669.4V754M1286.5 669.4V754M1357.5 669.4V754M1427.5 669.4V754M1497.5 669.4V754M1568.5 669.4V754M1003.5 732.5H1636.5M1003.5 711.5H1636.5M1003.5 690.5H1636.5M1005.5 754V840.1M1075.5 754V840.1M1146.5 754V840.1M1216.5 754V840.1M1286.5 754V840.1M1357.5 754V840.1M1427.5 754V840.1M1497.5 754V840.1M1568.5 754V840.1M1003.5 825.5H1636.5M1003.5 811.5H1636.5M1003.5 797.5H1636.5M1003.5 782.5H1636.5M1003.5 768.5H1636.5M1005.5 840.1V925.7M1075.5 840.1V925.7M1146.5 840.1V925.7M1216.5 840.1V925.7M1286.5 840.1V925.7M1357.5 840.1V925.7M1427.5 840.1V925.7M1497.5 840.1V925.7M1568.5 840.1V925.7M1003.5 908.5H1636.5M1003.5 891.5H1636.5M1003.5 874.5H1636.5M1003.5 857.5H1636.5M1005.5 925.7V1010M1075.5 925.7V1010M1146.5 925.7V1010M1216.5 925.7V1010M1286.5 925.7V1010M1357.5 925.7V1010M1427.5 925.7V1010M1497.5 925.7V1010M1568.5 925.7V1010M1003.5 993.5H1636.5M1003.5 976.5H1636.5M1003.5 959.5H1636.5M1003.5 942.5H1636.5"/>
<path stroke="#000" stroke-width="1.1" stroke-dasharray="3 1" d="M1003.5 112.5H1636.5"/>
<path stroke="#000" stroke-width="1.1" stroke-dasharray="3 1" d="M1003.5 172.5H1636.5"/>
<path stroke="#000" stroke-width="1.1" stroke-dasharray="3 1" d="M1003.5 231.5H1636.5"/>
<path stroke="#000" stroke-width="1.1" stroke-dasharray="3 1" d="M1003.5 290.5H1636.5"/>
<path stroke="#000" stroke-width="1.1" d="M1003.5 350.5H1636.5"/>
<path stroke="#000" stroke-width="1.1" d="M1003.5 414.5H1636.5"/>
<path stroke="#000" stroke-width="1.1" d="M1003.5 498.5H1636.5"/>
<path stroke="#000" stroke-width="1.1" d="M1003.5 584.5H1636.5"/>
<path stroke="#000" stroke-width="1.1" d="M1003.5 669.5H1636.5"/>
<path stroke="#000" stroke-width="1.1" d="M1003.5 754.5H1636.5"/>
<path stroke="#000" stroke-width="1.1" d="M1003.5 840.5H1636.5"/>
<path stroke="#000" stroke-width="1.1" d="M1003.5 925.5H1636.5"/>
<path stroke="#000" stroke-width="1.1" stroke-dasharray="3 1" d="M1003.5 1010.5H1636.5"/>
<g clip-path="url(#cR_lumi)">
<path fill="none" stroke="#eba500" stroke-width="1.3" d="M1001.5 59.5L1003.1 59.3H1004.8L1006.4 59.8L1008 58.9L1009.5 59.4L1011 60.1L1012.8 65.1L1015 60.1L1016.5 59.4L1018 58.6L1019.5 58.7L1021 58L1022.6 58.6L1024.1 58.8L1025.6 59.1L1027.1 57.8L1028.7 58.2L1030.2 57.8L1031.7 59.1L1033.2 58.9L1034.7 57.7L1036.3 59.5L1037.8 59.4L1039.3 58.9L1040.8 58.8L1042.4 57.9L1043.9 57.6L1045.4 58.6L1046.9 57.7L1048.4 58L1050 58.1L1051.5 57.7L1053 58.5L1054.5 58.4L1056.1 59.2L1057.6 58.6L1059.1 58.8L1060.6 58.6L1062.2 58.9L1063.7 58.5L1065.2 58.1L1066.7 59.5H1068.2L1069.8 59.2L1071.3 59L1072.8 58.2L1074.3 58L1075.9 58.2L1077.4 57.7L1078.9 59.1L1080.4 58.4L1081.9 59.2L1083.5 58.3L1085 59.4L1086.5 59.2L1088 57.6L1089.6 58L1091.1 59.3L1092.6 58.5L1094.1 59.5L1095.6 58.4L1097.2 57.7L1098.7 58.8L1100.2 59.1L1101.7 58.1L1103.3 57.8L1104.8 58.2L1106.3 58.6V94.9L1107.5 95.4V112.2H1262.2L1264 107.6L1265.8 101.4L1267.5 94L1269.3 86.5L1272 83.3L1273.6 81.7L1275.3 81L1276.9 79.9L1278.6 78.9L1280.2 79.4L1281.9 77.3L1283.5 77H1285L1286.5 76.8L1288 76.2L1289.5 77.1L1291 75.9L1292.5 76.8L1294 76.5L1295.7 74.8L1297.3 74.4L1299 73L1300.7 72.2L1302.3 72.5L1304 70.7L1305.6 70.5L1307.1 68.8L1308.7 69.2L1310.2 67.2L1311.8 67H1312.5V112.2H1346.9L1348.6 107.6L1350.3 104.2L1352 99.1L1353.7 95.2L1355.5 90L1357.2 86.6L1358.8 85.5L1360.5 82L1362.1 80.1L1363.7 79L1365.4 76.2L1367 74.5L1368.8 72.4L1370.5 70.3L1372.3 68.6L1374 67.9L1375.8 66L1377.4 65.6L1379 66.3L1380.5 65.9L1382.1 66.1L1383.7 67.1L1385.3 66.3L1386.8 66.5L1388.4 67.1L1390 66.5L1390.5 112.2H1417.4L1418.9 110.8L1420.4 109.9L1421.9 109.7L1423.5 105.3L1425.1 99.9L1426.7 93.6L1428.3 88.3L1429.9 83.7H1431.7L1433.4 83.5L1435.2 81.5L1436.9 82.4L1438.7 81L1439.6 112.2H1456.4L1458 110L1459.5 106.6L1461 103.4L1462.6 100.6L1464.8 88.6L1467 78.2L1468.8 76L1470.6 76.4L1472.3 73.7L1474.1 73.3L1475.9 71.6L1477.7 69.5L1479.5 69L1481.2 66.9L1483 65.1L1484.6 65L1486.2 65.1L1487.7 66.5L1489.3 65.5L1490.9 66.2L1492.5 67.1L1494 68L1495.6 67.8L1497.2 67.9L1498.8 67.3L1500.4 68.3L1501.9 66.7L1503.5 66.2L1505.1 66.4L1506.7 66.6L1508.2 65.6H1509.8L1511.4 66L1513 65.4L1514.6 65.3L1516.2 64.1H1517.8L1519.4 64.7L1521.1 64.4L1522.7 63.4L1524.3 63L1525.9 62.4L1527.5 61.1L1529.1 61.4L1530.6 60.4L1532.1 60.2L1533.6 61.7L1535.2 61.1L1536.7 61.5L1538.2 59.5L1539.7 60.5L1541.2 60L1542.7 60.4L1544.2 59.4L1545.8 60.5L1547.3 58.6L1548.8 59.3L1550.3 59.1L1551.8 59.5L1553.3 59.8L1554.8 59.5H1556.3L1557.9 59.6L1559.4 59.9L1560.9 58.8L1562.4 59.4L1563.9 59.8H1565.4L1566.9 58.9L1568.4 59.6L1570 59.8L1571.5 59.2L1573 59.3L1574.5 58.9L1576 59.2L1577.5 59.3L1579 58.3L1580.5 59.4L1582 60L1583.6 59.8L1585.1 59.5L1586.6 58.9L1588.1 59.5L1589.6 59.2L1591.1 59L1592.6 59.7L1594.1 58.3L1595.7 59.6L1597.2 58.2L1598.7 59.3L1600.2 59.1H1601.7L1603.3 57.9L1605 57.8L1606.6 58.6H1608.2L1609.8 59.2L1611.4 59.4V112.2H1634.5"/>
</g>
<g clip-path="url(#cR_I)">
<path fill="none" stroke="#ff0000" stroke-width="1.3" d="M1001.5 116.2H1004V119.9H1006V116.2H1010L1012.8 128.6L1015.5 116.2H1106.3V172.4H1257.8L1269.3 135.3H1281.7V131.4H1293.2V127.5H1304.7V123.4H1312.7V172.4H1327L1340 154.5L1351 135.3H1361.6L1362 131.4H1367V126.9L1374.9 123.4H1390.5V172.4H1412L1420 158.9L1431.6 135.3H1438.7V130.7H1439.6V172.4H1456.4L1462.6 155.4L1467 132.4L1470.6 126.9L1480.3 123.7H1515.8L1518.4 119.9H1526.4L1529 118H1535.3L1536.2 116.2H1592L1592.9 121.9L1594 116.2H1611.5V172.4H1626.5L1634.5 161"/>
<path fill="none" stroke="#0000ff" stroke-width="1.3" d="M1001.5 127.9H1106.3V172.4H1207.3L1209 171.3H1218L1236.5 157.7H1264L1272.9 143.3H1281.7L1297.7 140L1308.3 136.1L1312.7 133.3V172.4H1327L1337.7 167.9L1346.6 164.9L1359 142.9L1366 139.1L1376.7 133.3H1390.5V172.4H1412.1L1429.9 142.9L1438.7 142L1439 139.6H1468.8L1472.4 136.8H1479.5L1483 133.3H1515.8L1520.2 130.1H1529L1530 128.6H1575.1L1576 127.6H1611.5V172.4H1626.5L1634.5 168.8"/>
</g>
<g clip-path="url(#cR_rep)">
<path fill="none" stroke="#3399ff" stroke-width="1.25" d="M1003.5 187.6H1155.2V217.2H1185.1V195.2H1202.1V228.3H1217.3V217.2H1236.5V195.2H1325.4V228.3H1332.5V217.2H1341.5V228.3H1343.3V217.2H1347.7V195.2H1401.4V228.3H1414.4V217.2H1419.3V195.2H1516.4V187.6H1597.2V176.5H1615.1V228.3H1630.9V217.2H1636.5"/>
</g>
<g clip-path="url(#cR_Q)">
<path fill="#3f5fcf" d="M1004 259V258H1006V261V260H1008H1010H1012V259H1014V258V260H1016V258H1018V259H1020V257H1022V259V260H1024V258H1026V257V259H1028V258H1030V257H1032V258H1034V257H1036V259H1038V258V255H1040V257V258H1042H1044V256V255H1046V258V255H1048V258H1050V255H1052V257H1054V256H1056V255V254H1058V255H1060V254V255H1062V256V253H1064V256V254H1066V255V254H1068V253V255H1070V253V255H1072V254V253H1074V252H1076V254V252H1078V253H1080V254H1082H1084V253H1086H1088V251H1090V253V251H1092V253V252H1094V251V253H1096V252H1098V251V252H1100V253H1102V251V253H1104V251V252H1106H1108V251V252V271H1106V269V271H1104V269V271H1102H1100V270H1098V271H1096V269V272H1094V271H1092V270V271H1090V273V271H1088H1086V270V271H1084V272V271H1082V273V271H1080V270H1078V271H1076V273V271H1074V272H1072V271V273H1070V272H1068V274H1066V273H1064V272H1062V274V273H1060H1058V274V275H1056V274H1054V273H1052V274H1050V273H1048V275V273H1046V274H1044V275V276H1042V274H1040H1038V275V273H1036V276H1034V274V275H1032H1030H1028V277H1026V275V277H1024V276V275H1022V277V276H1020V275V277H1018V276V277H1016V276V277H1014V275V276H1012H1010V277V276H1008V278H1006V277V276H1004Z"/>
<path fill="#fff" d="M1054 258h1v1h-1zM1038 260h1v1h-1zM1069 263h1v1h-1zM1024 262h1v1h-1zM1077 269h1v1h-1zM1037 258h1v1h-1zM1039 266h1v1h-1zM1086 259h1v1h-1zM1078 267h1v1h-1zM1078 268h1v1h-1zM1065 270h1v1h-1zM1024 262h1v1h-1zM1095 268h1v1h-1zM1016 263h1v1h-1zM1097 263h1v1h-1zM1035 261h1v1h-1zM1050 261h1v1h-1zM1041 271h1v1h-1zM1042 267h1v1h-1zM1070 264h1v1h-1zM1051 259h1v1h-1zM1011 272h1v1h-1zM1073 256h1v1h-1zM1039 264h1v1h-1zM1028 268h1v1h-1zM1065 260h1v1h-1zM1072 263h1v1h-1zM1023 272h1v1h-1zM1063 262h1v1h-1zM1012 272h1v1h-1zM1027 273h1v1h-1zM1066 267h1v1h-1zM1020 262h1v1h-1zM1056 264h1v1h-1zM1086 268h1v1h-1zM1005 273h1v1h-1zM1009 267h1v1h-1zM1029 263h1v1h-1zM1005 262h1v1h-1zM1079 258h1v1h-1zM1075 265h1v1h-1zM1104 259h1v1h-1zM1010 265h1v1h-1zM1005 274h1v1h-1zM1040 264h1v1h-1zM1014 271h1v1h-1zM1104 258h1v1h-1zM1082 267h1v1h-1zM1068 269h1v1h-1zM1091 254h1v1h-1zM1100 259h1v1h-1zM1074 268h1v1h-1zM1047 259h1v1h-1zM1090 263h1v1h-1zM1020 273h1v1h-1zM1010 261h1v1h-1zM1008 273h1v1h-1zM1073 263h1v1h-1zM1029 259h1v1h-1zM1054 262h1v1h-1zM1076 258h1v1h-1zM1010 265h1v1h-1zM1096 254h1v1h-1zM1021 273h1v1h-1zM1088 268h1v1h-1zM1081 260h1v1h-1zM1013 266h1v1h-1zM1099 264h1v1h-1zM1038 264h1v1h-1zM1088 266h1v1h-1zM1060 257h1v1h-1zM1012 262h1v1h-1zM1074 264h1v1h-1zM1020 268h1v1h-1zM1078 265h1v1h-1zM1055 266h1v1h-1zM1096 260h1v1h-1zM1092 269h1v1h-1zM1100 261h1v1h-1zM1056 258h1v1h-1zM1034 262h1v1h-1zM1019 261h1v1h-1zM1047 263h1v1h-1zM1095 266h1v1h-1zM1087 258h1v1h-1zM1074 267h1v1h-1zM1016 265h1v1h-1zM1006 267h1v1h-1zM1058 259h1v1h-1zM1015 268h1v1h-1zM1071 268h1v1h-1zM1037 264h1v1h-1zM1096 258h1v1h-1zM1084 267h1v1h-1zM1017 271h1v1h-1zM1102 257h1v1h-1zM1086 261h1v1h-1zM1039 260h1v1h-1zM1026 265h1v1h-1zM1022 274h1v1h-1zM1093 257h1v1h-1zM1037 260h1v1h-1zM1088 256h1v1h-1zM1028 267h1v1h-1zM1086 257h1v1h-1zM1047 269h1v1h-1zM1105 268h1v1h-1zM1044 259h1v1h-1zM1081 255h1v1h-1zM1043 260h1v1h-1zM1098 267h1v1h-1zM1083 265h1v1h-1zM1067 257h1v1h-1zM1010 269h1v1h-1zM1072 255h1v1h-1zM1050 258h1v1h-1zM1037 265h1v1h-1zM1046 259h1v1h-1zM1033 261h1v1h-1zM1032 266h1v1h-1zM1085 256h1v1h-1zM1036 271h1v1h-1zM1053 272h1v1h-1zM1020 273h1v1h-1zM1047 264h1v1h-1zM1005 273h1v1h-1zM1023 262h1v1h-1zM1035 271h1v1h-1zM1073 265h1v1h-1zM1102 255h1v1h-1zM1026 266h1v1h-1zM1102 258h1v1h-1zM1044 268h1v1h-1zM1101 264h1v1h-1zM1064 270h1v1h-1zM1077 262h1v1h-1zM1032 267h1v1h-1zM1047 267h1v1h-1zM1030 269h1v1h-1zM1029 264h1v1h-1zM1024 271h1v1h-1zM1053 257h1v1h-1zM1081 256h1v1h-1zM1012 262h1v1h-1zM1060 270h1v1h-1zM1103 258h1v1h-1zM1086 265h1v1h-1zM1058 268h1v1h-1zM1029 263h1v1h-1zM1101 262h1v1h-1zM1046 262h1v1h-1zM1046 272h1v1h-1zM1038 270h1v1h-1zM1098 259h1v1h-1zM1005 273h1v1h-1zM1048 258h1v1h-1zM1067 259h1v1h-1zM1021 262h1v1h-1zM1073 268h1v1h-1zM1091 259h1v1h-1zM1072 265h1v1h-1zM1034 268h1v1h-1zM1028 271h1v1h-1zM1015 263h1v1h-1zM1030 271h1v1h-1zM1019 262h1v1h-1zM1063 264h1v1h-1zM1038 269h1v1h-1zM1072 270h1v1h-1zM1018 261h1v1h-1zM1057 263h1v1h-1zM1069 271h1v1h-1zM1076 269h1v1h-1zM1016 262h1v1h-1zM1017 273h1v1h-1zM1093 256h1v1h-1zM1034 260h1v1h-1zM1041 268h1v1h-1zM1073 257h1v1h-1zM1047 267h1v1h-1zM1052 259h1v1h-1zM1048 270h1v1h-1zM1094 265h1v1h-1zM1082 266h1v1h-1zM1034 268h1v1h-1zM1039 271h1v1h-1zM1063 266h1v1h-1zM1019 266h1v1h-1zM1103 268h1v1h-1zM1065 270h1v1h-1zM1068 270h1v1h-1zM1069 267h1v1h-1zM1050 271h1v1h-1zM1026 269h1v1h-1zM1083 269h1v1h-1zM1061 270h1v1h-1zM1082 262h1v1h-1zM1005 268h1v1h-1zM1102 261h1v1h-1zM1072 257h1v1h-1zM1086 265h1v1h-1zM1031 272h1v1h-1zM1014 271h1v1h-1zM1094 258h1v1h-1zM1053 265h1v1h-1zM1009 264h1v1h-1zM1041 270h1v1h-1zM1062 269h1v1h-1zM1052 270h1v1h-1zM1012 272h1v1h-1zM1079 260h1v1h-1zM1058 270h1v1h-1zM1050 264h1v1h-1zM1015 272h1v1h-1zM1053 265h1v1h-1zM1095 258h1v1h-1zM1101 263h1v1h-1zM1065 257h1v1h-1zM1022 265h1v1h-1zM1035 269h1v1h-1zM1105 262h1v1h-1zM1081 262h1v1h-1zM1017 261h1v1h-1zM1011 272h1v1h-1zM1008 268h1v1h-1zM1080 266h1v1h-1zM1064 259h1v1h-1zM1057 257h1v1h-1zM1030 269h1v1h-1zM1072 265h1v1h-1zM1019 267h1v1h-1zM1065 269h1v1h-1zM1074 263h1v1h-1zM1066 257h1v1h-1zM1097 255h1v1h-1zM1011 262h1v1h-1zM1035 273h1v1h-1zM1074 256h1v1h-1zM1074 268h1v1h-1zM1025 272h1v1h-1zM1102 255h1v1h-1zM1035 268h1v1h-1zM1057 268h1v1h-1zM1016 265h1v1h-1zM1021 262h1v1h-1zM1086 259h1v1h-1zM1008 268h1v1h-1zM1015 274h1v1h-1zM1086 269h1v1h-1zM1012 273h1v1h-1zM1060 265h1v1h-1zM1051 258h1v1h-1zM1009 266h1v1h-1zM1067 264h1v1h-1zM1014 266h1v1h-1zM1006 273h1v1h-1zM1074 263h1v1h-1zM1088 259h1v1h-1zM1049 263h1v1h-1zM1105 257h1v1h-1z"/>
<path fill="#3f5fcf" d="M1062 275h1.6v1.6h-1.6zM1024 282h1.6v1.6h-1.6zM1010 280h1.6v1.6h-1.6zM1049 256h1.6v1.6h-1.6zM1062 275h1.6v1.6h-1.6zM1091 272h1.6v1.6h-1.6zM1043 277h1.6v1.6h-1.6zM1087 252h1.6v1.6h-1.6zM1093 273h1.6v1.6h-1.6zM1087 273h1.6v1.6h-1.6zM1082 275h1.6v1.6h-1.6zM1018 256h1.6v1.6h-1.6zM1083 252h1.6v1.6h-1.6zM1071 253h1.6v1.6h-1.6zM1077 252h1.6v1.6h-1.6zM1005 279h1.6v1.6h-1.6zM1029 276h1.6v1.6h-1.6zM1068 252h1.6v1.6h-1.6zM1039 257h1.6v1.6h-1.6zM1035 275h1.6v1.6h-1.6zM1012 259h1.6v1.6h-1.6zM1049 277h1.6v1.6h-1.6zM1026 258h1.6v1.6h-1.6zM1033 282h1.6v1.6h-1.6zM1074 251h1.6v1.6h-1.6zM1094 251h1.6v1.6h-1.6zM1014 258h1.6v1.6h-1.6zM1042 256h1.6v1.6h-1.6zM1030 247h1.6v1.6h-1.6zM1028 277h1.6v1.6h-1.6zM1039 254h1.6v1.6h-1.6zM1016 276h1.6v1.6h-1.6zM1066 254h1.6v1.6h-1.6zM1053 274h1.6v1.6h-1.6zM1064 273h1.6v1.6h-1.6zM1050 276h1.6v1.6h-1.6zM1088 252h1.6v1.6h-1.6zM1010 278h1.6v1.6h-1.6zM1070 273h1.6v1.6h-1.6zM1033 278h1.6v1.6h-1.6zM1096 250h1.6v1.6h-1.6zM1101 252h1.6v1.6h-1.6zM1036 275h1.6v1.6h-1.6zM1083 252h1.6v1.6h-1.6zM1017 276h1.6v1.6h-1.6zM1091 272h1.6v1.6h-1.6zM1026 258h1.6v1.6h-1.6zM1106 275h1.6v1.6h-1.6zM1073 273h1.6v1.6h-1.6zM1085 252h1.6v1.6h-1.6zM1082 272h1.6v1.6h-1.6zM1017 276h1.6v1.6h-1.6zM1104 250h1.6v1.6h-1.6zM1018 258h1.6v1.6h-1.6zM1095 273h1.6v1.6h-1.6zM1006 277h1.6v1.6h-1.6zM1041 256h1.6v1.6h-1.6zM1016 282h1.6v1.6h-1.6zM1057 274h1.6v1.6h-1.6zM1016 277h1.6v1.6h-1.6zM1091 248h1.6v1.6h-1.6zM1079 272h1.6v1.6h-1.6zM1105 250h1.6v1.6h-1.6zM1005 260h1.6v1.6h-1.6zM1068 274h1.6v1.6h-1.6zM1100 273h1.6v1.6h-1.6zM1069 274h1.6v1.6h-1.6zM1055 253h1.6v1.6h-1.6zM1100 273h1.6v1.6h-1.6zM1026 255h1.6v1.6h-1.6zM1104 271h1.6v1.6h-1.6zM1067 275h1.6v1.6h-1.6zM1102 249h1.6v1.6h-1.6zM1045 256h1.6v1.6h-1.6zM1081 252h1.6v1.6h-1.6zM1076 252h1.6v1.6h-1.6zM1060 255h1.6v1.6h-1.6zM1093 271h1.6v1.6h-1.6zM1060 254h1.6v1.6h-1.6zM1028 283h1.6v1.6h-1.6zM1014 255h1.6v1.6h-1.6zM1065 276h1.6v1.6h-1.6zM1089 251h1.6v1.6h-1.6zM1087 250h1.6v1.6h-1.6zM1045 276h1.6v1.6h-1.6zM1052 256h1.6v1.6h-1.6zM1007 260h1.6v1.6h-1.6zM1070 275h1.6v1.6h-1.6zM1021 287h1.6v1.6h-1.6zM1088 252h1.6v1.6h-1.6zM1045 254h1.6v1.6h-1.6zM1103 251h1.6v1.6h-1.6zM1015 277h1.6v1.6h-1.6zM1031 277h1.6v1.6h-1.6zM1025 250h1.6v1.6h-1.6zM1049 255h1.6v1.6h-1.6zM1031 276h1.6v1.6h-1.6zM1026 276h1.6v1.6h-1.6zM1072 249h1.6v1.6h-1.6zM1004 283h1.6v1.6h-1.6zM1032 255h1.6v1.6h-1.6zM1078 277h1.6v1.6h-1.6zM1014 281h1.6v1.6h-1.6zM1065 275h1.6v1.6h-1.6zM1044 255h1.6v1.6h-1.6zM1087 252h1.6v1.6h-1.6zM1008 259h1.6v1.6h-1.6zM1088 252h1.6v1.6h-1.6zM1051 277h1.6v1.6h-1.6zM1080 275h1.6v1.6h-1.6zM1046 275h1.6v1.6h-1.6zM1075 272h1.6v1.6h-1.6zM1037 256h1.6v1.6h-1.6zM1031 277h1.6v1.6h-1.6zM1028 277h1.6v1.6h-1.6zM1009 279h1.6v1.6h-1.6zM1078 276h1.6v1.6h-1.6zM1038 276h1.6v1.6h-1.6zM1050 253h1.6v1.6h-1.6zM1079 250h1.6v1.6h-1.6zM1005 277h1.6v1.6h-1.6zM1005 277h1.6v1.6h-1.6zM1025 250h1.6v1.6h-1.6zM1065 277h1.6v1.6h-1.6zM1035 253h1.6v1.6h-1.6zM1015 278h1.6v1.6h-1.6zM1035 275h1.6v1.6h-1.6zM1071 250h1.6v1.6h-1.6zM1105 272h1.6v1.6h-1.6zM1056 275h1.6v1.6h-1.6zM1069 246h1.6v1.6h-1.6zM1050 254h1.6v1.6h-1.6zM1052 275h1.6v1.6h-1.6zM1062 254h1.6v1.6h-1.6zM1054 276h1.6v1.6h-1.6zM1084 251h1.6v1.6h-1.6zM1026 277h1.6v1.6h-1.6zM1100 274h1.6v1.6h-1.6zM1038 275h1.6v1.6h-1.6zM1068 253h1.6v1.6h-1.6zM1007 279h1.6v1.6h-1.6zM1093 274h1.6v1.6h-1.6zM1058 275h1.6v1.6h-1.6zM1044 256h1.6v1.6h-1.6zM1097 272h1.6v1.6h-1.6zM1064 254h1.6v1.6h-1.6zM1093 273h1.6v1.6h-1.6zM1065 251h1.6v1.6h-1.6zM1066 254h1.6v1.6h-1.6zM1032 278h1.6v1.6h-1.6zM1093 250h1.6v1.6h-1.6zM1105 274h1.6v1.6h-1.6zM1060 254h1.6v1.6h-1.6zM1021 281h1.6v1.6h-1.6zM1028 276h1.6v1.6h-1.6zM1034 276h1.6v1.6h-1.6zM1102 244h1.6v1.6h-1.6zM1018 277h1.6v1.6h-1.6zM1013 277h1.6v1.6h-1.6zM1029 277h1.6v1.6h-1.6zM1057 274h1.6v1.6h-1.6zM1026 277h1.6v1.6h-1.6zM1060 254h1.6v1.6h-1.6zM1098 272h1.6v1.6h-1.6zM1098 276h1.6v1.6h-1.6zM1069 252h1.6v1.6h-1.6zM1027 257h1.6v1.6h-1.6zM1041 256h1.6v1.6h-1.6zM1024 277h1.6v1.6h-1.6zM1050 275h1.6v1.6h-1.6zM1013 279h1.6v1.6h-1.6zM1094 252h1.6v1.6h-1.6zM1045 275h1.6v1.6h-1.6zM1037 275h1.6v1.6h-1.6zM1028 257h1.6v1.6h-1.6zM1026 277h1.6v1.6h-1.6zM1087 253h1.6v1.6h-1.6zM1056 274h1.6v1.6h-1.6zM1050 254h1.6v1.6h-1.6zM1028 257h1.6v1.6h-1.6zM1059 252h1.6v1.6h-1.6zM1032 257h1.6v1.6h-1.6zM1030 277h1.6v1.6h-1.6zM1028 279h1.6v1.6h-1.6zM1005 278h1.6v1.6h-1.6zM1026 276h1.6v1.6h-1.6zM1075 274h1.6v1.6h-1.6zM1105 271h1.6v1.6h-1.6zM1073 253h1.6v1.6h-1.6zM1077 273h1.6v1.6h-1.6zM1040 256h1.6v1.6h-1.6zM1065 274h1.6v1.6h-1.6zM1084 252h1.6v1.6h-1.6zM1075 273h1.6v1.6h-1.6zM1035 255h1.6v1.6h-1.6zM1096 271h1.6v1.6h-1.6zM1028 256h1.6v1.6h-1.6zM1016 281h1.6v1.6h-1.6zM1076 276h1.6v1.6h-1.6zM1047 280h1.6v1.6h-1.6zM1024 257h1.6v1.6h-1.6zM1069 273h1.6v1.6h-1.6zM1074 274h1.6v1.6h-1.6zM1023 258h1.6v1.6h-1.6zM1069 254h1.6v1.6h-1.6zM1022 278h1.6v1.6h-1.6zM1106 276h1.6v1.6h-1.6zM1037 277h1.6v1.6h-1.6zM1052 279h1.6v1.6h-1.6zM1086 251h1.6v1.6h-1.6zM1024 277h1.6v1.6h-1.6zM1009 258h1.6v1.6h-1.6zM1047 277h1.6v1.6h-1.6zM1020 279h1.6v1.6h-1.6zM1012 277h1.6v1.6h-1.6zM1059 254h1.6v1.6h-1.6zM1089 251h1.6v1.6h-1.6zM1086 273h1.6v1.6h-1.6zM1104 246h1.6v1.6h-1.6zM1071 273h1.6v1.6h-1.6zM1005 258h1.6v1.6h-1.6zM1058 252h1.6v1.6h-1.6zM1008 278h1.6v1.6h-1.6zM1069 273h1.6v1.6h-1.6zM1104 248h1.6v1.6h-1.6zM1084 250h1.6v1.6h-1.6zM1008 278h1.6v1.6h-1.6zM1060 251h1.6v1.6h-1.6zM1007 278h1.6v1.6h-1.6zM1008 258h1.6v1.6h-1.6zM1077 282h1.6v1.6h-1.6zM1104 251h1.6v1.6h-1.6zM1020 259h1.6v1.6h-1.6zM1012 259h1.6v1.6h-1.6zM1069 274h1.6v1.6h-1.6zM1085 252h1.6v1.6h-1.6zM1051 254h1.6v1.6h-1.6zM1040 256h1.6v1.6h-1.6zM1094 273h1.6v1.6h-1.6zM1088 273h1.6v1.6h-1.6zM1061 274h1.6v1.6h-1.6zM1076 274h1.6v1.6h-1.6zM1077 250h1.6v1.6h-1.6zM1094 249h1.6v1.6h-1.6zM1062 252h1.6v1.6h-1.6zM1061 275h1.6v1.6h-1.6zM1049 282h1.6v1.6h-1.6zM1072 254h1.6v1.6h-1.6zM1044 280h1.6v1.6h-1.6zM1009 257h1.6v1.6h-1.6zM1027 255h1.6v1.6h-1.6zM1055 275h1.6v1.6h-1.6zM1032 277h1.6v1.6h-1.6zM1037 257h1.6v1.6h-1.6zM1062 255h1.6v1.6h-1.6zM1105 250h1.6v1.6h-1.6zM1033 257h1.6v1.6h-1.6zM1043 256h1.6v1.6h-1.6zM1043 276h1.6v1.6h-1.6zM1081 253h1.6v1.6h-1.6zM1057 274h1.6v1.6h-1.6zM1006 259h1.6v1.6h-1.6zM1087 275h1.6v1.6h-1.6zM1023 277h1.6v1.6h-1.6zM1101 251h1.6v1.6h-1.6zM1015 258h1.6v1.6h-1.6zM1053 275h1.6v1.6h-1.6zM1089 272h1.6v1.6h-1.6zM1013 259h1.6v1.6h-1.6zM1027 257h1.6v1.6h-1.6zM1022 255h1.6v1.6h-1.6zM1023 277h1.6v1.6h-1.6zM1072 253h1.6v1.6h-1.6zM1083 272h1.6v1.6h-1.6zM1054 274h1.6v1.6h-1.6zM1019 258h1.6v1.6h-1.6zM1006 260h1.6v1.6h-1.6zM1099 273h1.6v1.6h-1.6zM1032 276h1.6v1.6h-1.6zM1039 253h1.6v1.6h-1.6zM1007 277h1.6v1.6h-1.6zM1063 254h1.6v1.6h-1.6zM1038 256h1.6v1.6h-1.6zM1087 272h1.6v1.6h-1.6zM1009 277h1.6v1.6h-1.6zM1046 256h1.6v1.6h-1.6zM1084 249h1.6v1.6h-1.6zM1086 251h1.6v1.6h-1.6zM1081 273h1.6v1.6h-1.6zM1015 257h1.6v1.6h-1.6zM1064 255h1.6v1.6h-1.6zM1051 251h1.6v1.6h-1.6zM1008 259h1.6v1.6h-1.6zM1070 252h1.6v1.6h-1.6zM1050 256h1.6v1.6h-1.6zM1052 254h1.6v1.6h-1.6zM1050 255h1.6v1.6h-1.6zM1054 253h1.6v1.6h-1.6zM1018 279h1.6v1.6h-1.6zM1036 256h1.6v1.6h-1.6zM1023 257h1.6v1.6h-1.6zM1085 273h1.6v1.6h-1.6zM1075 251h1.6v1.6h-1.6zM1048 277h1.6v1.6h-1.6zM1004 281h1.6v1.6h-1.6zM1048 276h1.6v1.6h-1.6zM1058 254h1.6v1.6h-1.6zM1099 251h1.6v1.6h-1.6zM1101 272h1.6v1.6h-1.6zM1039 256h1.6v1.6h-1.6zM1050 276h1.6v1.6h-1.6zM1025 277h1.6v1.6h-1.6z"/>
<path fill="none" stroke="#3f5fcf" stroke-width="2" d="M1107.7 272.7H1204.8"/>
<path fill="#3f5fcf" d="M1205 253H1206V252H1207V253H1208V252H1209V251H1210H1211V252H1212H1213V251H1214V252H1215V253H1216V251H1217V252H1218V251H1219V253H1220H1221V251H1222V253H1223V251H1224V253H1225H1226V252H1227V251H1228V253H1229V252H1230V251H1231V252H1232H1233H1234H1235H1236V253H1237V252H1238V251V275H1237H1236V273H1235V275H1234V274H1233V273H1232V274H1231H1230V273H1229H1228V275H1227V273H1226H1225H1224H1223H1222H1221H1220V275H1219V273H1218V275H1217V273H1216H1215V275H1214V273H1213V275H1212H1211V274H1210H1209V275H1208H1207V273H1206V274H1205Z"/>
<path fill="#fff" d="M1231 269h1v1h-1zM1226 265h1v1h-1zM1215 266h1v1h-1zM1230 257h1v1h-1zM1233 271h1v1h-1zM1212 260h1v1h-1zM1225 258h1v1h-1zM1213 261h1v1h-1zM1223 264h1v1h-1zM1211 266h1v1h-1zM1229 270h1v1h-1zM1220 269h1v1h-1zM1232 259h1v1h-1zM1230 263h1v1h-1zM1230 266h1v1h-1zM1211 254h1v1h-1zM1206 256h1v1h-1zM1209 260h1v1h-1zM1221 262h1v1h-1zM1208 259h1v1h-1zM1223 255h1v1h-1zM1217 255h1v1h-1zM1212 266h1v1h-1zM1222 263h1v1h-1zM1229 272h1v1h-1zM1206 269h1v1h-1zM1232 256h1v1h-1zM1211 259h1v1h-1zM1226 265h1v1h-1zM1219 255h1v1h-1zM1232 262h1v1h-1zM1232 261h1v1h-1zM1223 258h1v1h-1zM1220 269h1v1h-1zM1206 266h1v1h-1zM1222 268h1v1h-1zM1228 272h1v1h-1zM1208 272h1v1h-1zM1227 261h1v1h-1zM1213 258h1v1h-1zM1218 260h1v1h-1zM1220 258h1v1h-1zM1207 264h1v1h-1zM1216 253h1v1h-1zM1222 267h1v1h-1zM1230 260h1v1h-1zM1222 258h1v1h-1zM1221 261h1v1h-1zM1212 268h1v1h-1zM1215 263h1v1h-1zM1230 266h1v1h-1zM1225 267h1v1h-1zM1215 267h1v1h-1zM1208 267h1v1h-1zM1232 258h1v1h-1zM1221 260h1v1h-1zM1213 270h1v1h-1zM1221 258h1v1h-1zM1219 262h1v1h-1zM1212 265h1v1h-1zM1221 262h1v1h-1zM1221 268h1v1h-1zM1234 258h1v1h-1zM1215 268h1v1h-1zM1214 267h1v1h-1zM1220 262h1v1h-1zM1219 256h1v1h-1zM1208 254h1v1h-1zM1212 259h1v1h-1zM1235 254h1v1h-1zM1211 264h1v1h-1zM1233 254h1v1h-1zM1220 262h1v1h-1zM1208 259h1v1h-1zM1220 258h1v1h-1zM1226 262h1v1h-1zM1207 270h1v1h-1zM1228 260h1v1h-1zM1211 267h1v1h-1zM1229 256h1v1h-1zM1222 267h1v1h-1zM1223 256h1v1h-1z"/>
<path fill="#3f5fcf" d="M1234 251h1.6v1.6h-1.6zM1227 275h1.6v1.6h-1.6zM1212 249h1.6v1.6h-1.6zM1218 274h1.6v1.6h-1.6zM1211 251h1.6v1.6h-1.6zM1214 274h1.6v1.6h-1.6zM1228 251h1.6v1.6h-1.6zM1231 248h1.6v1.6h-1.6zM1229 251h1.6v1.6h-1.6zM1213 248h1.6v1.6h-1.6zM1229 276h1.6v1.6h-1.6zM1217 251h1.6v1.6h-1.6zM1212 281h1.6v1.6h-1.6zM1221 251h1.6v1.6h-1.6zM1206 251h1.6v1.6h-1.6zM1221 252h1.6v1.6h-1.6zM1210 252h1.6v1.6h-1.6zM1232 274h1.6v1.6h-1.6zM1211 252h1.6v1.6h-1.6zM1232 248h1.6v1.6h-1.6zM1214 276h1.6v1.6h-1.6zM1228 250h1.6v1.6h-1.6zM1210 251h1.6v1.6h-1.6zM1228 248h1.6v1.6h-1.6zM1217 251h1.6v1.6h-1.6zM1233 252h1.6v1.6h-1.6zM1207 278h1.6v1.6h-1.6zM1236 283h1.6v1.6h-1.6zM1209 251h1.6v1.6h-1.6zM1231 252h1.6v1.6h-1.6zM1229 275h1.6v1.6h-1.6zM1232 277h1.6v1.6h-1.6zM1219 252h1.6v1.6h-1.6zM1227 251h1.6v1.6h-1.6zM1228 274h1.6v1.6h-1.6zM1216 250h1.6v1.6h-1.6zM1226 274h1.6v1.6h-1.6zM1221 275h1.6v1.6h-1.6zM1228 275h1.6v1.6h-1.6zM1235 239h1.6v1.6h-1.6zM1222 275h1.6v1.6h-1.6zM1223 250h1.6v1.6h-1.6zM1205 274h1.6v1.6h-1.6zM1216 274h1.6v1.6h-1.6zM1229 274h1.6v1.6h-1.6zM1213 251h1.6v1.6h-1.6zM1229 275h1.6v1.6h-1.6zM1229 275h1.6v1.6h-1.6zM1233 277h1.6v1.6h-1.6zM1217 277h1.6v1.6h-1.6zM1226 251h1.6v1.6h-1.6zM1216 277h1.6v1.6h-1.6zM1230 278h1.6v1.6h-1.6zM1214 247h1.6v1.6h-1.6zM1233 245h1.6v1.6h-1.6zM1217 278h1.6v1.6h-1.6zM1210 250h1.6v1.6h-1.6zM1222 274h1.6v1.6h-1.6zM1233 250h1.6v1.6h-1.6zM1220 276h1.6v1.6h-1.6zM1215 274h1.6v1.6h-1.6zM1223 252h1.6v1.6h-1.6zM1211 274h1.6v1.6h-1.6zM1226 275h1.6v1.6h-1.6zM1235 248h1.6v1.6h-1.6zM1208 252h1.6v1.6h-1.6zM1236 250h1.6v1.6h-1.6zM1206 274h1.6v1.6h-1.6zM1231 249h1.6v1.6h-1.6zM1221 252h1.6v1.6h-1.6zM1224 280h1.6v1.6h-1.6zM1218 252h1.6v1.6h-1.6zM1225 251h1.6v1.6h-1.6zM1207 279h1.6v1.6h-1.6zM1234 248h1.6v1.6h-1.6zM1213 252h1.6v1.6h-1.6zM1206 275h1.6v1.6h-1.6zM1221 274h1.6v1.6h-1.6zM1220 247h1.6v1.6h-1.6zM1205 276h1.6v1.6h-1.6zM1227 275h1.6v1.6h-1.6zM1213 252h1.6v1.6h-1.6zM1216 252h1.6v1.6h-1.6zM1219 276h1.6v1.6h-1.6zM1213 251h1.6v1.6h-1.6zM1221 252h1.6v1.6h-1.6zM1216 250h1.6v1.6h-1.6zM1217 247h1.6v1.6h-1.6zM1215 274h1.6v1.6h-1.6zM1229 250h1.6v1.6h-1.6zM1215 279h1.6v1.6h-1.6zM1228 249h1.6v1.6h-1.6zM1224 274h1.6v1.6h-1.6zM1224 275h1.6v1.6h-1.6zM1226 250h1.6v1.6h-1.6zM1211 248h1.6v1.6h-1.6zM1213 276h1.6v1.6h-1.6zM1228 275h1.6v1.6h-1.6zM1212 250h1.6v1.6h-1.6z"/>
<path fill="#3f5fcf" d="M1263 253H1264V254H1265V255H1266H1267H1268V254H1269V255H1270V254H1271H1272H1273V255H1274V253H1275H1276H1277V254H1278H1279V253H1280V255H1281V254H1282V253H1283H1284H1285H1286H1287H1288V255H1289V253H1290V254H1291H1292V255H1293H1294H1295H1296V254H1297V255H1298H1299V253H1300V254H1301V255H1302H1303V253H1304V254H1305H1306V253H1307V255H1308V254H1309V253H1310V255H1311V253H1312V254H1313V255H1314V254H1315V253V277V275H1314V276H1313H1312V277H1311H1310V276H1309V275H1308V277H1307H1306V275H1305V277H1304V275H1303V276H1302V277H1301V275H1300V277H1299V276H1298H1297H1296V277H1295H1294H1293H1292V276H1291V277H1290V275H1289V276H1288V275H1287H1286V277H1285H1284H1283H1282V276H1281V275H1280V276H1279V277H1278V276H1277V277H1276V275H1275V276H1274V275H1273H1272H1271V277H1270V275H1269H1268V277H1267V276H1266H1265V275H1264V277H1263Z"/>
<path fill="#fff" d="M1274 263h1v1h-1zM1303 255h1v1h-1zM1283 273h1v1h-1zM1265 262h1v1h-1zM1278 259h1v1h-1zM1283 263h1v1h-1zM1281 271h1v1h-1zM1300 258h1v1h-1zM1268 261h1v1h-1zM1306 266h1v1h-1zM1294 268h1v1h-1zM1265 261h1v1h-1zM1270 257h1v1h-1zM1312 260h1v1h-1zM1277 259h1v1h-1zM1306 266h1v1h-1zM1308 268h1v1h-1zM1305 273h1v1h-1zM1298 264h1v1h-1zM1300 257h1v1h-1zM1306 266h1v1h-1zM1283 265h1v1h-1zM1267 258h1v1h-1zM1296 265h1v1h-1zM1308 270h1v1h-1zM1274 266h1v1h-1zM1301 268h1v1h-1zM1267 256h1v1h-1zM1297 262h1v1h-1zM1303 270h1v1h-1zM1270 273h1v1h-1zM1305 274h1v1h-1zM1293 255h1v1h-1zM1306 266h1v1h-1zM1297 268h1v1h-1zM1283 257h1v1h-1zM1290 264h1v1h-1zM1306 272h1v1h-1zM1302 273h1v1h-1zM1285 258h1v1h-1zM1285 262h1v1h-1zM1298 265h1v1h-1zM1282 268h1v1h-1zM1282 270h1v1h-1zM1308 271h1v1h-1zM1287 260h1v1h-1zM1279 274h1v1h-1zM1265 264h1v1h-1zM1284 256h1v1h-1zM1296 273h1v1h-1zM1287 265h1v1h-1zM1268 267h1v1h-1zM1295 257h1v1h-1zM1306 271h1v1h-1zM1298 262h1v1h-1zM1270 262h1v1h-1zM1302 262h1v1h-1zM1303 268h1v1h-1zM1290 258h1v1h-1zM1295 268h1v1h-1zM1301 269h1v1h-1zM1266 265h1v1h-1zM1280 267h1v1h-1zM1297 264h1v1h-1zM1297 261h1v1h-1zM1294 268h1v1h-1zM1276 269h1v1h-1zM1312 257h1v1h-1zM1268 256h1v1h-1zM1302 255h1v1h-1zM1309 257h1v1h-1zM1276 271h1v1h-1zM1304 263h1v1h-1zM1265 258h1v1h-1zM1306 259h1v1h-1zM1286 264h1v1h-1zM1286 271h1v1h-1zM1280 258h1v1h-1zM1285 261h1v1h-1zM1280 271h1v1h-1zM1308 268h1v1h-1zM1265 266h1v1h-1zM1281 270h1v1h-1zM1288 256h1v1h-1zM1293 262h1v1h-1zM1307 261h1v1h-1zM1312 260h1v1h-1zM1270 272h1v1h-1zM1274 270h1v1h-1zM1273 262h1v1h-1zM1279 257h1v1h-1zM1306 269h1v1h-1zM1268 258h1v1h-1zM1297 270h1v1h-1zM1284 257h1v1h-1zM1281 256h1v1h-1zM1300 271h1v1h-1zM1290 271h1v1h-1zM1291 267h1v1h-1zM1285 265h1v1h-1zM1285 260h1v1h-1zM1287 263h1v1h-1zM1305 265h1v1h-1zM1307 266h1v1h-1zM1297 263h1v1h-1zM1292 273h1v1h-1zM1285 262h1v1h-1zM1290 272h1v1h-1zM1289 262h1v1h-1zM1300 258h1v1h-1zM1274 271h1v1h-1zM1295 261h1v1h-1zM1274 268h1v1h-1zM1301 256h1v1h-1zM1301 262h1v1h-1zM1291 273h1v1h-1zM1306 270h1v1h-1zM1296 260h1v1h-1zM1292 259h1v1h-1zM1270 274h1v1h-1zM1290 274h1v1h-1zM1289 271h1v1h-1zM1312 263h1v1h-1zM1286 258h1v1h-1zM1273 266h1v1h-1zM1276 268h1v1h-1zM1310 274h1v1h-1zM1299 264h1v1h-1zM1272 270h1v1h-1z"/>
<path fill="#3f5fcf" d="M1312 251h1.6v1.6h-1.6zM1293 277h1.6v1.6h-1.6zM1311 277h1.6v1.6h-1.6zM1289 252h1.6v1.6h-1.6zM1268 281h1.6v1.6h-1.6zM1273 254h1.6v1.6h-1.6zM1296 250h1.6v1.6h-1.6zM1289 276h1.6v1.6h-1.6zM1264 254h1.6v1.6h-1.6zM1267 278h1.6v1.6h-1.6zM1294 279h1.6v1.6h-1.6zM1287 277h1.6v1.6h-1.6zM1272 251h1.6v1.6h-1.6zM1266 253h1.6v1.6h-1.6zM1283 245h1.6v1.6h-1.6zM1298 279h1.6v1.6h-1.6zM1297 277h1.6v1.6h-1.6zM1305 277h1.6v1.6h-1.6zM1293 281h1.6v1.6h-1.6zM1302 253h1.6v1.6h-1.6zM1306 278h1.6v1.6h-1.6zM1277 253h1.6v1.6h-1.6zM1275 253h1.6v1.6h-1.6zM1264 276h1.6v1.6h-1.6zM1275 251h1.6v1.6h-1.6zM1304 251h1.6v1.6h-1.6zM1271 280h1.6v1.6h-1.6zM1275 251h1.6v1.6h-1.6zM1307 282h1.6v1.6h-1.6zM1279 253h1.6v1.6h-1.6zM1286 252h1.6v1.6h-1.6zM1283 277h1.6v1.6h-1.6zM1293 253h1.6v1.6h-1.6zM1285 254h1.6v1.6h-1.6zM1289 254h1.6v1.6h-1.6zM1284 276h1.6v1.6h-1.6zM1280 254h1.6v1.6h-1.6zM1301 276h1.6v1.6h-1.6zM1273 277h1.6v1.6h-1.6zM1304 278h1.6v1.6h-1.6zM1293 253h1.6v1.6h-1.6zM1283 277h1.6v1.6h-1.6zM1263 277h1.6v1.6h-1.6zM1286 253h1.6v1.6h-1.6zM1280 278h1.6v1.6h-1.6zM1308 250h1.6v1.6h-1.6zM1310 253h1.6v1.6h-1.6zM1294 290h1.6v1.6h-1.6zM1292 252h1.6v1.6h-1.6zM1303 280h1.6v1.6h-1.6zM1305 276h1.6v1.6h-1.6zM1295 276h1.6v1.6h-1.6zM1264 276h1.6v1.6h-1.6zM1296 249h1.6v1.6h-1.6zM1307 279h1.6v1.6h-1.6zM1265 278h1.6v1.6h-1.6zM1310 250h1.6v1.6h-1.6zM1267 277h1.6v1.6h-1.6zM1284 278h1.6v1.6h-1.6zM1271 277h1.6v1.6h-1.6zM1284 253h1.6v1.6h-1.6zM1283 249h1.6v1.6h-1.6zM1292 253h1.6v1.6h-1.6zM1274 253h1.6v1.6h-1.6zM1276 251h1.6v1.6h-1.6zM1299 253h1.6v1.6h-1.6zM1268 253h1.6v1.6h-1.6zM1304 281h1.6v1.6h-1.6zM1274 276h1.6v1.6h-1.6zM1276 279h1.6v1.6h-1.6zM1292 276h1.6v1.6h-1.6zM1263 281h1.6v1.6h-1.6zM1306 251h1.6v1.6h-1.6zM1269 276h1.6v1.6h-1.6zM1271 277h1.6v1.6h-1.6zM1310 277h1.6v1.6h-1.6zM1295 252h1.6v1.6h-1.6zM1288 279h1.6v1.6h-1.6zM1269 251h1.6v1.6h-1.6zM1274 253h1.6v1.6h-1.6zM1275 278h1.6v1.6h-1.6zM1307 279h1.6v1.6h-1.6zM1303 276h1.6v1.6h-1.6zM1306 254h1.6v1.6h-1.6zM1296 279h1.6v1.6h-1.6zM1279 277h1.6v1.6h-1.6zM1272 276h1.6v1.6h-1.6zM1286 253h1.6v1.6h-1.6zM1273 253h1.6v1.6h-1.6zM1274 253h1.6v1.6h-1.6zM1276 277h1.6v1.6h-1.6zM1283 276h1.6v1.6h-1.6zM1307 247h1.6v1.6h-1.6zM1275 250h1.6v1.6h-1.6zM1311 279h1.6v1.6h-1.6zM1270 252h1.6v1.6h-1.6zM1308 276h1.6v1.6h-1.6zM1276 279h1.6v1.6h-1.6zM1307 251h1.6v1.6h-1.6zM1312 278h1.6v1.6h-1.6zM1313 253h1.6v1.6h-1.6zM1280 277h1.6v1.6h-1.6zM1289 253h1.6v1.6h-1.6zM1299 253h1.6v1.6h-1.6zM1274 250h1.6v1.6h-1.6zM1305 277h1.6v1.6h-1.6zM1284 279h1.6v1.6h-1.6zM1298 277h1.6v1.6h-1.6zM1264 253h1.6v1.6h-1.6zM1304 253h1.6v1.6h-1.6zM1313 279h1.6v1.6h-1.6zM1276 249h1.6v1.6h-1.6zM1271 252h1.6v1.6h-1.6zM1302 277h1.6v1.6h-1.6zM1275 254h1.6v1.6h-1.6zM1281 238h1.6v1.6h-1.6zM1282 251h1.6v1.6h-1.6zM1295 250h1.6v1.6h-1.6zM1285 251h1.6v1.6h-1.6zM1291 253h1.6v1.6h-1.6zM1271 276h1.6v1.6h-1.6zM1311 254h1.6v1.6h-1.6zM1289 279h1.6v1.6h-1.6zM1300 277h1.6v1.6h-1.6zM1289 276h1.6v1.6h-1.6zM1292 284h1.6v1.6h-1.6zM1305 281h1.6v1.6h-1.6zM1265 248h1.6v1.6h-1.6zM1290 254h1.6v1.6h-1.6zM1280 254h1.6v1.6h-1.6zM1282 251h1.6v1.6h-1.6zM1289 253h1.6v1.6h-1.6zM1305 276h1.6v1.6h-1.6zM1267 252h1.6v1.6h-1.6zM1281 280h1.6v1.6h-1.6zM1275 253h1.6v1.6h-1.6zM1292 279h1.6v1.6h-1.6zM1264 277h1.6v1.6h-1.6zM1290 253h1.6v1.6h-1.6zM1305 252h1.6v1.6h-1.6zM1312 254h1.6v1.6h-1.6zM1278 281h1.6v1.6h-1.6zM1265 278h1.6v1.6h-1.6zM1285 277h1.6v1.6h-1.6zM1301 277h1.6v1.6h-1.6zM1294 279h1.6v1.6h-1.6zM1289 253h1.6v1.6h-1.6zM1306 249h1.6v1.6h-1.6zM1277 252h1.6v1.6h-1.6zM1272 278h1.6v1.6h-1.6zM1285 251h1.6v1.6h-1.6zM1274 251h1.6v1.6h-1.6zM1265 284h1.6v1.6h-1.6zM1308 278h1.6v1.6h-1.6zM1289 253h1.6v1.6h-1.6z"/>
<path fill="none" stroke="#3f5fcf" stroke-width="2" d="M1314.8 264.7H1326.3"/>
<path fill="#3f5fcf" d="M1326 255H1327H1328H1329V256H1330H1331V254H1332V256H1333H1334V254H1335H1336H1337H1338V256H1339V255H1340V254H1341V255H1342H1343H1344V256H1345V255H1346V256H1347H1348H1349H1350V255H1351H1352V256H1353H1354V254H1355V255H1356V256H1357H1358V255H1359V256H1360H1361H1362H1363V255H1364V256H1365V254H1366V256H1367H1368V254H1369V256H1370V255H1371V254H1372V255H1373V256H1374V254H1375V255H1376H1377H1378V256H1379H1380V254H1381V255H1382H1383V254H1384H1385V255H1386H1387V256H1388H1389H1390H1391V255H1392V254V274H1391V272H1390V273H1389H1388H1387V274H1386V273H1385V274H1384H1383H1382H1381H1380V272H1379V274H1378H1377V273H1376V274H1375H1374H1373H1372H1371H1370V272H1369V273H1368H1367V272H1366V273H1365V274H1364V273H1363H1362V274H1361V273H1360H1359V274H1358V273H1357V274H1356V273H1355V274H1354V272H1353V274H1352V273H1351V274H1350H1349V273H1348V272H1347V274H1346H1345V272H1344V273H1343V274H1342V273H1341V274H1340H1339V272H1338V274H1337V273H1336V272H1335H1334H1333V274H1332H1331V272H1330H1329H1328H1327H1326Z"/>
<path fill="#fff" d="M1334 271h1v1h-1zM1343 258h1v1h-1zM1360 262h1v1h-1zM1366 262h1v1h-1zM1348 269h1v1h-1zM1373 258h1v1h-1zM1328 267h1v1h-1zM1363 267h1v1h-1zM1361 259h1v1h-1zM1360 269h1v1h-1zM1385 269h1v1h-1zM1360 263h1v1h-1zM1385 270h1v1h-1zM1386 266h1v1h-1zM1329 263h1v1h-1zM1371 260h1v1h-1zM1389 261h1v1h-1zM1386 259h1v1h-1zM1365 267h1v1h-1zM1333 270h1v1h-1zM1362 264h1v1h-1zM1389 264h1v1h-1zM1355 269h1v1h-1zM1375 259h1v1h-1zM1378 265h1v1h-1zM1348 270h1v1h-1zM1347 262h1v1h-1zM1351 261h1v1h-1zM1386 263h1v1h-1zM1334 263h1v1h-1zM1366 256h1v1h-1zM1380 261h1v1h-1zM1377 268h1v1h-1zM1370 271h1v1h-1zM1340 265h1v1h-1zM1351 258h1v1h-1zM1366 265h1v1h-1zM1382 270h1v1h-1zM1361 266h1v1h-1zM1364 262h1v1h-1zM1387 261h1v1h-1zM1328 257h1v1h-1zM1356 263h1v1h-1zM1338 265h1v1h-1zM1337 260h1v1h-1zM1387 266h1v1h-1zM1361 262h1v1h-1zM1384 266h1v1h-1zM1338 258h1v1h-1zM1359 261h1v1h-1zM1366 267h1v1h-1zM1331 264h1v1h-1zM1370 262h1v1h-1zM1335 271h1v1h-1zM1346 265h1v1h-1zM1371 258h1v1h-1zM1336 266h1v1h-1zM1383 271h1v1h-1zM1378 269h1v1h-1zM1386 260h1v1h-1zM1352 262h1v1h-1zM1378 261h1v1h-1zM1370 260h1v1h-1zM1333 270h1v1h-1zM1331 262h1v1h-1zM1380 257h1v1h-1zM1376 263h1v1h-1zM1372 266h1v1h-1zM1350 260h1v1h-1zM1384 263h1v1h-1zM1332 264h1v1h-1zM1364 263h1v1h-1zM1373 258h1v1h-1zM1346 270h1v1h-1zM1368 269h1v1h-1zM1332 266h1v1h-1zM1372 262h1v1h-1zM1353 259h1v1h-1zM1333 268h1v1h-1zM1329 264h1v1h-1zM1374 270h1v1h-1zM1382 259h1v1h-1zM1383 262h1v1h-1zM1369 266h1v1h-1zM1377 263h1v1h-1zM1345 267h1v1h-1zM1346 261h1v1h-1zM1329 259h1v1h-1zM1377 260h1v1h-1zM1339 263h1v1h-1zM1328 256h1v1h-1zM1358 259h1v1h-1zM1388 267h1v1h-1zM1389 266h1v1h-1zM1372 271h1v1h-1zM1381 266h1v1h-1zM1349 260h1v1h-1zM1346 266h1v1h-1zM1330 258h1v1h-1zM1379 264h1v1h-1zM1371 260h1v1h-1zM1337 266h1v1h-1zM1350 259h1v1h-1zM1366 263h1v1h-1zM1352 269h1v1h-1zM1357 266h1v1h-1zM1346 267h1v1h-1zM1362 267h1v1h-1zM1352 268h1v1h-1zM1366 269h1v1h-1zM1370 268h1v1h-1zM1348 258h1v1h-1zM1384 263h1v1h-1zM1382 260h1v1h-1zM1364 261h1v1h-1zM1344 258h1v1h-1zM1347 266h1v1h-1zM1386 269h1v1h-1zM1387 264h1v1h-1zM1389 268h1v1h-1zM1352 266h1v1h-1zM1370 264h1v1h-1zM1360 263h1v1h-1zM1365 265h1v1h-1zM1381 270h1v1h-1zM1378 256h1v1h-1zM1374 257h1v1h-1zM1347 268h1v1h-1zM1367 260h1v1h-1zM1381 264h1v1h-1zM1329 261h1v1h-1zM1342 262h1v1h-1zM1383 269h1v1h-1zM1352 263h1v1h-1zM1354 260h1v1h-1zM1351 263h1v1h-1zM1388 266h1v1h-1zM1348 258h1v1h-1zM1363 260h1v1h-1zM1388 266h1v1h-1zM1331 257h1v1h-1zM1345 257h1v1h-1zM1377 258h1v1h-1zM1337 266h1v1h-1zM1373 258h1v1h-1zM1345 264h1v1h-1zM1344 259h1v1h-1zM1346 269h1v1h-1zM1345 267h1v1h-1zM1339 258h1v1h-1zM1349 264h1v1h-1zM1356 267h1v1h-1zM1328 258h1v1h-1zM1361 265h1v1h-1zM1354 263h1v1h-1zM1368 261h1v1h-1zM1340 270h1v1h-1zM1347 271h1v1h-1zM1344 267h1v1h-1zM1365 264h1v1h-1zM1364 268h1v1h-1zM1339 264h1v1h-1zM1357 261h1v1h-1z"/>
<path fill="#3f5fcf" d="M1336 274h1.6v1.6h-1.6zM1333 274h1.6v1.6h-1.6zM1358 275h1.6v1.6h-1.6zM1356 275h1.6v1.6h-1.6zM1383 254h1.6v1.6h-1.6zM1346 254h1.6v1.6h-1.6zM1336 274h1.6v1.6h-1.6zM1337 278h1.6v1.6h-1.6zM1334 253h1.6v1.6h-1.6zM1379 273h1.6v1.6h-1.6zM1380 274h1.6v1.6h-1.6zM1355 254h1.6v1.6h-1.6zM1348 281h1.6v1.6h-1.6zM1330 250h1.6v1.6h-1.6zM1381 253h1.6v1.6h-1.6zM1379 278h1.6v1.6h-1.6zM1341 253h1.6v1.6h-1.6zM1342 274h1.6v1.6h-1.6zM1349 273h1.6v1.6h-1.6zM1367 274h1.6v1.6h-1.6zM1387 273h1.6v1.6h-1.6zM1332 275h1.6v1.6h-1.6zM1348 274h1.6v1.6h-1.6zM1364 252h1.6v1.6h-1.6zM1353 254h1.6v1.6h-1.6zM1360 275h1.6v1.6h-1.6zM1355 254h1.6v1.6h-1.6zM1330 274h1.6v1.6h-1.6zM1371 275h1.6v1.6h-1.6zM1345 253h1.6v1.6h-1.6zM1370 282h1.6v1.6h-1.6zM1381 251h1.6v1.6h-1.6zM1379 255h1.6v1.6h-1.6zM1338 276h1.6v1.6h-1.6zM1366 254h1.6v1.6h-1.6zM1380 254h1.6v1.6h-1.6zM1376 254h1.6v1.6h-1.6zM1329 248h1.6v1.6h-1.6zM1369 254h1.6v1.6h-1.6zM1348 276h1.6v1.6h-1.6zM1366 254h1.6v1.6h-1.6zM1374 273h1.6v1.6h-1.6zM1374 252h1.6v1.6h-1.6zM1340 254h1.6v1.6h-1.6zM1375 254h1.6v1.6h-1.6zM1377 252h1.6v1.6h-1.6zM1369 273h1.6v1.6h-1.6zM1335 255h1.6v1.6h-1.6zM1357 254h1.6v1.6h-1.6zM1356 276h1.6v1.6h-1.6zM1382 254h1.6v1.6h-1.6zM1341 274h1.6v1.6h-1.6zM1327 251h1.6v1.6h-1.6zM1390 255h1.6v1.6h-1.6zM1377 252h1.6v1.6h-1.6zM1358 253h1.6v1.6h-1.6zM1380 278h1.6v1.6h-1.6zM1366 273h1.6v1.6h-1.6zM1348 253h1.6v1.6h-1.6zM1348 274h1.6v1.6h-1.6zM1386 274h1.6v1.6h-1.6zM1364 274h1.6v1.6h-1.6zM1341 274h1.6v1.6h-1.6zM1359 254h1.6v1.6h-1.6zM1335 254h1.6v1.6h-1.6zM1387 274h1.6v1.6h-1.6zM1355 273h1.6v1.6h-1.6zM1359 255h1.6v1.6h-1.6zM1382 277h1.6v1.6h-1.6zM1349 274h1.6v1.6h-1.6zM1362 279h1.6v1.6h-1.6zM1344 251h1.6v1.6h-1.6zM1349 278h1.6v1.6h-1.6zM1352 273h1.6v1.6h-1.6zM1365 253h1.6v1.6h-1.6zM1353 273h1.6v1.6h-1.6zM1383 274h1.6v1.6h-1.6zM1356 254h1.6v1.6h-1.6zM1332 278h1.6v1.6h-1.6zM1358 273h1.6v1.6h-1.6zM1386 274h1.6v1.6h-1.6zM1328 253h1.6v1.6h-1.6zM1336 273h1.6v1.6h-1.6zM1341 255h1.6v1.6h-1.6zM1362 255h1.6v1.6h-1.6zM1359 254h1.6v1.6h-1.6zM1342 274h1.6v1.6h-1.6zM1366 275h1.6v1.6h-1.6zM1331 248h1.6v1.6h-1.6zM1389 279h1.6v1.6h-1.6zM1336 253h1.6v1.6h-1.6zM1382 274h1.6v1.6h-1.6zM1384 274h1.6v1.6h-1.6zM1384 274h1.6v1.6h-1.6zM1386 254h1.6v1.6h-1.6zM1359 273h1.6v1.6h-1.6zM1371 276h1.6v1.6h-1.6zM1371 277h1.6v1.6h-1.6zM1341 255h1.6v1.6h-1.6zM1385 275h1.6v1.6h-1.6zM1359 279h1.6v1.6h-1.6zM1350 253h1.6v1.6h-1.6zM1342 274h1.6v1.6h-1.6zM1370 273h1.6v1.6h-1.6zM1364 254h1.6v1.6h-1.6zM1340 275h1.6v1.6h-1.6zM1345 255h1.6v1.6h-1.6zM1343 274h1.6v1.6h-1.6zM1338 279h1.6v1.6h-1.6zM1350 275h1.6v1.6h-1.6zM1390 254h1.6v1.6h-1.6zM1349 255h1.6v1.6h-1.6zM1385 254h1.6v1.6h-1.6zM1360 274h1.6v1.6h-1.6zM1386 276h1.6v1.6h-1.6zM1379 254h1.6v1.6h-1.6zM1334 253h1.6v1.6h-1.6zM1348 273h1.6v1.6h-1.6zM1332 254h1.6v1.6h-1.6zM1356 274h1.6v1.6h-1.6zM1365 254h1.6v1.6h-1.6zM1352 277h1.6v1.6h-1.6zM1372 254h1.6v1.6h-1.6zM1348 273h1.6v1.6h-1.6zM1376 252h1.6v1.6h-1.6zM1343 246h1.6v1.6h-1.6zM1376 274h1.6v1.6h-1.6zM1351 248h1.6v1.6h-1.6zM1367 275h1.6v1.6h-1.6zM1362 277h1.6v1.6h-1.6zM1330 274h1.6v1.6h-1.6zM1328 251h1.6v1.6h-1.6zM1348 254h1.6v1.6h-1.6zM1332 254h1.6v1.6h-1.6zM1347 255h1.6v1.6h-1.6zM1338 255h1.6v1.6h-1.6zM1337 244h1.6v1.6h-1.6zM1353 273h1.6v1.6h-1.6zM1353 253h1.6v1.6h-1.6zM1353 276h1.6v1.6h-1.6zM1379 255h1.6v1.6h-1.6zM1372 254h1.6v1.6h-1.6zM1332 275h1.6v1.6h-1.6zM1349 251h1.6v1.6h-1.6zM1362 273h1.6v1.6h-1.6zM1381 254h1.6v1.6h-1.6zM1372 254h1.6v1.6h-1.6zM1387 274h1.6v1.6h-1.6zM1353 254h1.6v1.6h-1.6zM1354 276h1.6v1.6h-1.6zM1367 254h1.6v1.6h-1.6zM1364 276h1.6v1.6h-1.6zM1340 274h1.6v1.6h-1.6zM1369 276h1.6v1.6h-1.6zM1338 274h1.6v1.6h-1.6zM1350 274h1.6v1.6h-1.6zM1358 253h1.6v1.6h-1.6zM1353 253h1.6v1.6h-1.6zM1358 273h1.6v1.6h-1.6zM1350 273h1.6v1.6h-1.6zM1380 252h1.6v1.6h-1.6zM1335 252h1.6v1.6h-1.6zM1346 275h1.6v1.6h-1.6zM1337 255h1.6v1.6h-1.6zM1377 255h1.6v1.6h-1.6zM1369 255h1.6v1.6h-1.6zM1335 252h1.6v1.6h-1.6zM1384 254h1.6v1.6h-1.6zM1381 277h1.6v1.6h-1.6zM1372 255h1.6v1.6h-1.6zM1381 254h1.6v1.6h-1.6zM1383 254h1.6v1.6h-1.6zM1329 254h1.6v1.6h-1.6zM1350 255h1.6v1.6h-1.6zM1334 276h1.6v1.6h-1.6zM1330 274h1.6v1.6h-1.6zM1378 273h1.6v1.6h-1.6zM1348 276h1.6v1.6h-1.6zM1349 255h1.6v1.6h-1.6zM1362 275h1.6v1.6h-1.6zM1339 275h1.6v1.6h-1.6zM1361 254h1.6v1.6h-1.6zM1326 280h1.6v1.6h-1.6zM1386 273h1.6v1.6h-1.6zM1377 255h1.6v1.6h-1.6zM1362 275h1.6v1.6h-1.6zM1374 255h1.6v1.6h-1.6zM1389 274h1.6v1.6h-1.6zM1363 254h1.6v1.6h-1.6zM1385 253h1.6v1.6h-1.6zM1382 255h1.6v1.6h-1.6zM1365 255h1.6v1.6h-1.6zM1371 255h1.6v1.6h-1.6zM1369 255h1.6v1.6h-1.6zM1341 254h1.6v1.6h-1.6z"/>
<path fill="none" stroke="#3f5fcf" stroke-width="2" d="M1391.5 268.2H1407.6"/>
<path fill="#3f5fcf" d="M1408 254H1409H1410V255H1411H1412V253H1413H1414V254H1415V255H1416H1417V253H1418H1419H1420V255H1421V254H1422H1423H1424H1425V255H1426V253H1427V255H1428V254H1429H1430V255H1431V253H1432V254H1433V253H1434V254H1435V252H1436V254H1437H1438V253H1439H1440H1441H1442H1443V252H1444H1445V255H1446V254H1447H1448V252H1449V253H1450H1451V254H1452H1453V252H1454H1455V253H1456H1457V252H1458V253H1459V254H1460V252H1461H1462V253H1463V252H1464V253H1465H1466H1467V254H1468H1469V252H1470H1471V251H1472V253H1473H1474V252H1475H1476H1477H1478V253H1479H1480V254H1481H1482V251H1483V252H1484V253H1485H1486V252H1487V253H1488V252H1489V253H1490V252H1491V253H1492H1493H1494H1495H1496V252H1497V254H1498V251H1499H1500H1501V253H1502V251H1503V254H1504V253H1505V251H1506H1507H1508H1509V253H1510V252H1511V253H1512V252H1513V253H1514V252H1515H1516V253H1517V252H1518H1519V253H1520V252H1521V251H1522V253H1523V251H1524V253H1525H1526H1527V252H1528V250H1529V252H1530H1531V253H1532V252H1533H1534V253H1535V252H1536V253H1537H1538V250H1539V251H1540V250H1541H1542V251H1543V253H1544V251H1545H1546H1547V252H1548H1549H1550H1551V250H1552V252H1553H1554H1555V251H1556H1557V250H1558V251H1559V250H1560H1561V252H1562V250H1563V252H1564H1565V250H1566V251H1567V250H1568V252H1569V249H1570V251H1571V250H1572V251H1573V250H1574H1575V252H1576V250H1577V252H1578V249H1579V251H1580V252H1581H1582V250H1583H1584V251H1585H1586V250H1587V252H1588V250H1589V249H1590V252H1591V250H1592V251H1593V250H1594V251H1595V250H1596V252H1597V251H1598V249H1599V252H1600V251H1601V249H1602V251H1603V249H1604V250H1605V249H1606V251H1607V249H1608V251H1609H1610H1611V249H1612V250V251V273V274V272H1611V274H1610V272H1609H1608V273H1607V272H1606V273H1605V272H1604V274H1603V272H1602H1601V274H1600V273H1599V272H1598V274H1597V273H1596V274H1595V273H1594V274H1593H1592H1591V272H1590H1589V273H1588V274H1587H1586H1585H1584V272H1583H1582V274H1581V273H1580V272H1579H1578V273H1577V274H1576H1575H1574H1573V273H1572V274H1571H1570H1569V272H1568V274H1567H1566V273H1565V272H1564H1563V274H1562V272H1561H1560V274H1559H1558H1557V272H1556H1555H1554H1553V273H1552V274H1551H1550V272H1549V274H1548V273H1547H1546V274H1545H1544H1543H1542V273H1541V272H1540H1539H1538V274H1537H1536V273H1535V272H1534H1533H1532V273H1531V272H1530H1529V273H1528V272H1527H1526H1525V273H1524V274H1523H1522H1521V273H1520V272H1519V273H1518H1517H1516V272H1515H1514H1513V273H1512H1511V274H1510H1509H1508H1507V273H1506V272H1505V274H1504H1503V272H1502V274H1501V272H1500V273H1499V274H1498V273H1497V272H1496H1495V274H1494V273H1493H1492V272H1491V274H1490H1489V272H1488H1487H1486V273H1485V272H1484H1483H1482V274H1481V272H1480V273H1479V274H1478H1477V273H1476V272H1475H1474H1473V273H1472V274H1471V272H1470V273H1469V274H1468V273H1467V272H1466H1465V274H1464H1463H1462H1461H1460V273H1459V272H1458V273H1457H1456V274H1455V273H1454H1453V274H1452H1451V273H1450H1449V272H1448V274H1447V272H1446V274H1445V272H1444H1443V274H1442V272H1441V273H1440V272H1439V274H1438V273H1437V274H1436V273H1435H1434V272H1433H1432V274H1431V273H1430V274H1429V272H1428H1427H1426V274H1425H1424V273H1423V274H1422V273H1421V272H1420V273H1419H1418H1417V272H1416H1415H1414V274H1413H1412V273H1411V272H1410V273H1409V274H1408Z"/>
<path fill="#fff" d="M1568 263h1v1h-1zM1536 260h1v1h-1zM1546 262h1v1h-1zM1522 261h1v1h-1zM1598 271h1v1h-1zM1428 258h1v1h-1zM1548 268h1v1h-1zM1441 262h1v1h-1zM1591 261h1v1h-1zM1497 254h1v1h-1zM1570 265h1v1h-1zM1499 268h1v1h-1zM1605 256h1v1h-1zM1411 265h1v1h-1zM1421 257h1v1h-1zM1597 253h1v1h-1zM1598 255h1v1h-1zM1590 256h1v1h-1zM1501 255h1v1h-1zM1489 259h1v1h-1zM1468 269h1v1h-1zM1480 258h1v1h-1zM1417 262h1v1h-1zM1501 259h1v1h-1zM1437 255h1v1h-1zM1423 258h1v1h-1zM1423 263h1v1h-1zM1506 257h1v1h-1zM1455 263h1v1h-1zM1413 258h1v1h-1zM1512 271h1v1h-1zM1606 270h1v1h-1zM1599 266h1v1h-1zM1598 265h1v1h-1zM1491 264h1v1h-1zM1541 265h1v1h-1zM1539 263h1v1h-1zM1468 266h1v1h-1zM1547 255h1v1h-1zM1486 254h1v1h-1zM1424 267h1v1h-1zM1461 267h1v1h-1zM1533 268h1v1h-1zM1520 263h1v1h-1zM1561 265h1v1h-1zM1598 258h1v1h-1zM1435 256h1v1h-1zM1527 253h1v1h-1zM1490 264h1v1h-1zM1417 264h1v1h-1zM1560 256h1v1h-1zM1447 260h1v1h-1zM1498 269h1v1h-1zM1493 265h1v1h-1zM1587 258h1v1h-1zM1501 261h1v1h-1zM1553 269h1v1h-1zM1446 255h1v1h-1zM1538 262h1v1h-1zM1530 262h1v1h-1zM1492 254h1v1h-1zM1458 255h1v1h-1zM1520 261h1v1h-1zM1481 260h1v1h-1zM1416 256h1v1h-1zM1599 263h1v1h-1zM1410 271h1v1h-1zM1472 265h1v1h-1zM1506 262h1v1h-1zM1496 270h1v1h-1zM1601 259h1v1h-1zM1441 255h1v1h-1zM1438 263h1v1h-1zM1455 256h1v1h-1zM1567 264h1v1h-1zM1422 255h1v1h-1zM1518 257h1v1h-1zM1412 261h1v1h-1zM1439 257h1v1h-1zM1597 259h1v1h-1zM1533 262h1v1h-1zM1482 270h1v1h-1zM1500 257h1v1h-1zM1591 255h1v1h-1zM1588 255h1v1h-1zM1438 262h1v1h-1zM1499 255h1v1h-1zM1603 261h1v1h-1zM1508 260h1v1h-1zM1533 253h1v1h-1zM1564 267h1v1h-1zM1455 255h1v1h-1zM1539 268h1v1h-1zM1443 265h1v1h-1zM1553 267h1v1h-1zM1542 268h1v1h-1zM1487 265h1v1h-1zM1441 265h1v1h-1zM1520 257h1v1h-1zM1436 266h1v1h-1zM1484 255h1v1h-1zM1494 255h1v1h-1zM1442 262h1v1h-1zM1555 257h1v1h-1zM1543 268h1v1h-1zM1506 256h1v1h-1zM1582 270h1v1h-1zM1417 260h1v1h-1zM1590 262h1v1h-1zM1409 261h1v1h-1zM1498 268h1v1h-1zM1472 263h1v1h-1zM1471 271h1v1h-1zM1479 270h1v1h-1zM1590 263h1v1h-1zM1496 266h1v1h-1zM1448 260h1v1h-1zM1603 252h1v1h-1zM1513 268h1v1h-1zM1429 268h1v1h-1zM1592 267h1v1h-1zM1602 263h1v1h-1zM1479 259h1v1h-1zM1473 258h1v1h-1zM1440 257h1v1h-1zM1464 269h1v1h-1zM1455 263h1v1h-1zM1471 265h1v1h-1zM1448 261h1v1h-1zM1415 268h1v1h-1zM1561 258h1v1h-1zM1561 256h1v1h-1zM1440 270h1v1h-1zM1551 258h1v1h-1zM1516 255h1v1h-1zM1558 261h1v1h-1zM1507 266h1v1h-1zM1603 262h1v1h-1zM1418 271h1v1h-1zM1460 256h1v1h-1zM1432 265h1v1h-1zM1494 254h1v1h-1zM1459 270h1v1h-1zM1466 254h1v1h-1zM1430 265h1v1h-1zM1441 270h1v1h-1zM1424 256h1v1h-1zM1418 269h1v1h-1zM1540 257h1v1h-1zM1602 252h1v1h-1zM1418 258h1v1h-1zM1599 256h1v1h-1zM1516 258h1v1h-1zM1594 270h1v1h-1zM1441 262h1v1h-1zM1501 265h1v1h-1zM1471 264h1v1h-1zM1498 265h1v1h-1zM1507 262h1v1h-1zM1487 258h1v1h-1zM1510 260h1v1h-1zM1501 266h1v1h-1zM1517 264h1v1h-1zM1578 260h1v1h-1zM1532 264h1v1h-1zM1559 255h1v1h-1zM1515 268h1v1h-1zM1572 254h1v1h-1zM1584 266h1v1h-1zM1447 255h1v1h-1zM1561 254h1v1h-1zM1556 270h1v1h-1zM1526 268h1v1h-1zM1549 264h1v1h-1zM1414 264h1v1h-1zM1515 256h1v1h-1zM1551 265h1v1h-1zM1542 269h1v1h-1zM1592 267h1v1h-1zM1429 264h1v1h-1zM1409 258h1v1h-1zM1462 259h1v1h-1zM1596 270h1v1h-1zM1536 257h1v1h-1zM1569 266h1v1h-1zM1578 256h1v1h-1zM1537 260h1v1h-1zM1582 261h1v1h-1zM1485 268h1v1h-1zM1568 259h1v1h-1zM1497 256h1v1h-1zM1458 267h1v1h-1zM1479 257h1v1h-1zM1429 259h1v1h-1zM1503 262h1v1h-1zM1531 253h1v1h-1zM1567 263h1v1h-1zM1490 259h1v1h-1zM1419 256h1v1h-1zM1545 266h1v1h-1zM1609 264h1v1h-1zM1453 266h1v1h-1zM1495 261h1v1h-1zM1568 260h1v1h-1zM1500 266h1v1h-1zM1496 264h1v1h-1zM1559 257h1v1h-1zM1599 258h1v1h-1zM1490 268h1v1h-1zM1410 271h1v1h-1zM1423 270h1v1h-1zM1431 255h1v1h-1zM1446 256h1v1h-1zM1489 270h1v1h-1zM1454 256h1v1h-1zM1532 263h1v1h-1zM1604 251h1v1h-1zM1596 260h1v1h-1zM1424 267h1v1h-1zM1434 270h1v1h-1zM1433 256h1v1h-1zM1542 256h1v1h-1zM1562 266h1v1h-1zM1564 266h1v1h-1zM1585 255h1v1h-1zM1603 257h1v1h-1zM1568 267h1v1h-1zM1438 267h1v1h-1zM1483 257h1v1h-1zM1457 262h1v1h-1zM1512 263h1v1h-1zM1499 268h1v1h-1zM1413 257h1v1h-1zM1477 258h1v1h-1zM1430 255h1v1h-1zM1424 262h1v1h-1zM1570 260h1v1h-1zM1446 260h1v1h-1zM1595 258h1v1h-1zM1542 267h1v1h-1zM1542 252h1v1h-1zM1564 261h1v1h-1zM1601 258h1v1h-1zM1584 264h1v1h-1zM1540 259h1v1h-1zM1561 263h1v1h-1zM1417 258h1v1h-1zM1610 262h1v1h-1zM1429 263h1v1h-1zM1529 253h1v1h-1zM1442 259h1v1h-1zM1443 260h1v1h-1zM1540 264h1v1h-1zM1535 266h1v1h-1zM1435 270h1v1h-1zM1570 254h1v1h-1zM1580 267h1v1h-1zM1573 263h1v1h-1zM1455 255h1v1h-1zM1539 271h1v1h-1zM1609 265h1v1h-1zM1460 258h1v1h-1zM1477 263h1v1h-1zM1481 261h1v1h-1zM1452 256h1v1h-1zM1473 257h1v1h-1zM1509 257h1v1h-1zM1485 268h1v1h-1zM1575 261h1v1h-1zM1598 266h1v1h-1zM1488 254h1v1h-1zM1488 264h1v1h-1zM1478 267h1v1h-1zM1474 260h1v1h-1zM1533 258h1v1h-1zM1441 267h1v1h-1zM1505 264h1v1h-1zM1572 252h1v1h-1zM1533 263h1v1h-1zM1573 264h1v1h-1zM1443 263h1v1h-1zM1554 258h1v1h-1zM1583 257h1v1h-1zM1604 263h1v1h-1zM1555 254h1v1h-1zM1584 266h1v1h-1zM1603 254h1v1h-1zM1578 260h1v1h-1zM1489 270h1v1h-1zM1498 261h1v1h-1zM1495 261h1v1h-1zM1426 256h1v1h-1zM1410 266h1v1h-1zM1450 268h1v1h-1zM1529 255h1v1h-1zM1559 262h1v1h-1zM1444 265h1v1h-1zM1464 255h1v1h-1zM1459 257h1v1h-1zM1424 268h1v1h-1zM1520 265h1v1h-1zM1430 268h1v1h-1zM1591 255h1v1h-1zM1582 271h1v1h-1zM1577 253h1v1h-1zM1583 257h1v1h-1zM1448 258h1v1h-1zM1509 267h1v1h-1zM1505 258h1v1h-1zM1484 255h1v1h-1zM1522 263h1v1h-1zM1422 264h1v1h-1zM1570 270h1v1h-1zM1513 263h1v1h-1zM1508 260h1v1h-1zM1467 271h1v1h-1zM1581 262h1v1h-1zM1524 257h1v1h-1zM1444 267h1v1h-1zM1443 270h1v1h-1zM1415 265h1v1h-1zM1566 258h1v1h-1zM1437 263h1v1h-1zM1462 255h1v1h-1zM1550 267h1v1h-1zM1429 270h1v1h-1zM1533 265h1v1h-1zM1607 256h1v1h-1zM1609 268h1v1h-1zM1419 259h1v1h-1zM1484 266h1v1h-1zM1485 270h1v1h-1zM1523 267h1v1h-1zM1532 257h1v1h-1zM1482 264h1v1h-1zM1429 255h1v1h-1zM1523 264h1v1h-1zM1548 270h1v1h-1zM1544 269h1v1h-1zM1429 270h1v1h-1zM1480 269h1v1h-1zM1412 268h1v1h-1zM1544 256h1v1h-1zM1449 260h1v1h-1zM1568 268h1v1h-1zM1491 263h1v1h-1zM1439 259h1v1h-1zM1541 261h1v1h-1zM1575 263h1v1h-1zM1483 270h1v1h-1zM1442 266h1v1h-1zM1434 269h1v1h-1zM1585 271h1v1h-1zM1585 259h1v1h-1zM1588 265h1v1h-1zM1416 258h1v1h-1zM1573 270h1v1h-1zM1488 270h1v1h-1zM1540 261h1v1h-1zM1443 269h1v1h-1zM1584 255h1v1h-1zM1467 257h1v1h-1zM1436 261h1v1h-1zM1506 269h1v1h-1zM1446 268h1v1h-1zM1559 254h1v1h-1zM1464 258h1v1h-1zM1604 252h1v1h-1zM1514 264h1v1h-1zM1491 261h1v1h-1zM1551 264h1v1h-1zM1455 260h1v1h-1zM1448 269h1v1h-1zM1430 262h1v1h-1zM1452 266h1v1h-1zM1473 262h1v1h-1zM1471 254h1v1h-1zM1504 254h1v1h-1zM1601 268h1v1h-1zM1560 266h1v1h-1zM1438 264h1v1h-1zM1433 260h1v1h-1zM1438 270h1v1h-1zM1509 262h1v1h-1zM1434 267h1v1h-1zM1460 255h1v1h-1zM1441 255h1v1h-1zM1484 269h1v1h-1zM1513 262h1v1h-1zM1532 266h1v1h-1zM1454 263h1v1h-1zM1535 259h1v1h-1zM1545 257h1v1h-1zM1485 269h1v1h-1zM1514 254h1v1h-1zM1480 257h1v1h-1zM1425 266h1v1h-1zM1485 267h1v1h-1zM1523 254h1v1h-1zM1555 269h1v1h-1zM1477 256h1v1h-1zM1519 254h1v1h-1zM1496 260h1v1h-1zM1449 270h1v1h-1zM1452 257h1v1h-1zM1540 254h1v1h-1zM1526 263h1v1h-1zM1454 257h1v1h-1zM1551 270h1v1h-1zM1582 261h1v1h-1zM1532 270h1v1h-1zM1541 260h1v1h-1zM1597 256h1v1h-1zM1463 269h1v1h-1zM1422 263h1v1h-1zM1528 256h1v1h-1zM1460 268h1v1h-1zM1504 271h1v1h-1zM1452 260h1v1h-1zM1567 263h1v1h-1zM1571 259h1v1h-1zM1500 254h1v1h-1zM1578 253h1v1h-1zM1443 260h1v1h-1zM1482 268h1v1h-1zM1511 264h1v1h-1zM1551 253h1v1h-1zM1486 269h1v1h-1zM1577 255h1v1h-1zM1540 257h1v1h-1zM1425 270h1v1h-1zM1563 254h1v1h-1zM1430 269h1v1h-1zM1548 257h1v1h-1zM1564 266h1v1h-1zM1527 263h1v1h-1zM1581 266h1v1h-1zM1606 260h1v1h-1zM1447 262h1v1h-1zM1479 269h1v1h-1zM1412 264h1v1h-1zM1598 254h1v1h-1zM1459 262h1v1h-1zM1528 258h1v1h-1zM1511 258h1v1h-1zM1466 254h1v1h-1zM1423 270h1v1h-1zM1505 268h1v1h-1zM1463 267h1v1h-1zM1439 268h1v1h-1zM1442 262h1v1h-1zM1496 256h1v1h-1zM1541 255h1v1h-1zM1583 269h1v1h-1zM1435 271h1v1h-1zM1485 267h1v1h-1zM1515 254h1v1h-1zM1542 268h1v1h-1zM1439 270h1v1h-1zM1537 270h1v1h-1zM1585 267h1v1h-1zM1541 268h1v1h-1zM1491 263h1v1h-1zM1578 261h1v1h-1zM1529 264h1v1h-1zM1560 262h1v1h-1zM1499 260h1v1h-1zM1531 258h1v1h-1zM1505 254h1v1h-1zM1509 269h1v1h-1zM1561 253h1v1h-1zM1533 268h1v1h-1zM1544 268h1v1h-1zM1461 257h1v1h-1zM1605 256h1v1h-1zM1444 258h1v1h-1zM1571 266h1v1h-1zM1609 267h1v1h-1zM1457 256h1v1h-1zM1435 260h1v1h-1zM1454 259h1v1h-1zM1591 271h1v1h-1zM1461 265h1v1h-1zM1599 263h1v1h-1zM1504 256h1v1h-1zM1478 259h1v1h-1zM1513 257h1v1h-1zM1548 262h1v1h-1zM1562 266h1v1h-1zM1416 260h1v1h-1zM1461 268h1v1h-1zM1420 270h1v1h-1zM1478 271h1v1h-1zM1564 262h1v1h-1zM1589 261h1v1h-1zM1410 257h1v1h-1zM1496 255h1v1h-1zM1418 262h1v1h-1zM1446 259h1v1h-1zM1412 260h1v1h-1zM1546 269h1v1h-1zM1439 268h1v1h-1zM1607 263h1v1h-1zM1506 265h1v1h-1zM1505 259h1v1h-1zM1437 255h1v1h-1zM1453 263h1v1h-1zM1525 258h1v1h-1zM1429 270h1v1h-1zM1595 267h1v1h-1zM1471 267h1v1h-1zM1549 270h1v1h-1z"/>
<path fill="#3f5fcf" d="M1499 246h1.6v1.6h-1.6zM1463 252h1.6v1.6h-1.6zM1527 276h1.6v1.6h-1.6zM1601 274h1.6v1.6h-1.6zM1448 274h1.6v1.6h-1.6zM1549 251h1.6v1.6h-1.6zM1535 276h1.6v1.6h-1.6zM1474 277h1.6v1.6h-1.6zM1465 250h1.6v1.6h-1.6zM1560 276h1.6v1.6h-1.6zM1577 250h1.6v1.6h-1.6zM1417 253h1.6v1.6h-1.6zM1457 275h1.6v1.6h-1.6zM1557 247h1.6v1.6h-1.6zM1430 247h1.6v1.6h-1.6zM1543 243h1.6v1.6h-1.6zM1601 247h1.6v1.6h-1.6zM1592 249h1.6v1.6h-1.6zM1516 276h1.6v1.6h-1.6zM1549 273h1.6v1.6h-1.6zM1412 252h1.6v1.6h-1.6zM1495 247h1.6v1.6h-1.6zM1594 274h1.6v1.6h-1.6zM1561 278h1.6v1.6h-1.6zM1525 252h1.6v1.6h-1.6zM1479 278h1.6v1.6h-1.6zM1435 247h1.6v1.6h-1.6zM1573 275h1.6v1.6h-1.6zM1463 252h1.6v1.6h-1.6zM1538 250h1.6v1.6h-1.6zM1592 273h1.6v1.6h-1.6zM1438 248h1.6v1.6h-1.6zM1600 276h1.6v1.6h-1.6zM1465 276h1.6v1.6h-1.6zM1418 253h1.6v1.6h-1.6zM1601 248h1.6v1.6h-1.6zM1516 275h1.6v1.6h-1.6zM1420 253h1.6v1.6h-1.6zM1481 275h1.6v1.6h-1.6zM1518 250h1.6v1.6h-1.6zM1508 251h1.6v1.6h-1.6zM1518 280h1.6v1.6h-1.6zM1452 253h1.6v1.6h-1.6zM1504 274h1.6v1.6h-1.6zM1424 253h1.6v1.6h-1.6zM1492 275h1.6v1.6h-1.6zM1499 274h1.6v1.6h-1.6zM1556 248h1.6v1.6h-1.6zM1408 274h1.6v1.6h-1.6zM1502 279h1.6v1.6h-1.6zM1515 274h1.6v1.6h-1.6zM1479 273h1.6v1.6h-1.6zM1491 252h1.6v1.6h-1.6zM1588 250h1.6v1.6h-1.6zM1608 249h1.6v1.6h-1.6zM1454 276h1.6v1.6h-1.6zM1471 252h1.6v1.6h-1.6zM1603 275h1.6v1.6h-1.6zM1599 250h1.6v1.6h-1.6zM1418 254h1.6v1.6h-1.6zM1478 252h1.6v1.6h-1.6zM1432 253h1.6v1.6h-1.6zM1584 274h1.6v1.6h-1.6zM1567 275h1.6v1.6h-1.6zM1460 250h1.6v1.6h-1.6zM1449 277h1.6v1.6h-1.6zM1599 250h1.6v1.6h-1.6zM1420 249h1.6v1.6h-1.6zM1574 246h1.6v1.6h-1.6zM1523 277h1.6v1.6h-1.6zM1542 251h1.6v1.6h-1.6zM1595 250h1.6v1.6h-1.6zM1600 274h1.6v1.6h-1.6zM1427 273h1.6v1.6h-1.6zM1471 245h1.6v1.6h-1.6zM1447 253h1.6v1.6h-1.6zM1529 276h1.6v1.6h-1.6zM1529 249h1.6v1.6h-1.6zM1564 273h1.6v1.6h-1.6zM1431 273h1.6v1.6h-1.6zM1548 273h1.6v1.6h-1.6zM1608 250h1.6v1.6h-1.6zM1484 252h1.6v1.6h-1.6zM1430 275h1.6v1.6h-1.6zM1482 273h1.6v1.6h-1.6zM1521 277h1.6v1.6h-1.6zM1488 276h1.6v1.6h-1.6zM1500 251h1.6v1.6h-1.6zM1527 273h1.6v1.6h-1.6zM1571 275h1.6v1.6h-1.6zM1434 282h1.6v1.6h-1.6zM1541 280h1.6v1.6h-1.6zM1454 248h1.6v1.6h-1.6zM1521 274h1.6v1.6h-1.6zM1421 273h1.6v1.6h-1.6zM1415 277h1.6v1.6h-1.6zM1580 249h1.6v1.6h-1.6zM1574 249h1.6v1.6h-1.6zM1608 247h1.6v1.6h-1.6zM1594 247h1.6v1.6h-1.6zM1523 273h1.6v1.6h-1.6zM1462 252h1.6v1.6h-1.6zM1533 274h1.6v1.6h-1.6zM1603 246h1.6v1.6h-1.6zM1432 273h1.6v1.6h-1.6zM1454 251h1.6v1.6h-1.6zM1550 276h1.6v1.6h-1.6zM1431 273h1.6v1.6h-1.6zM1417 248h1.6v1.6h-1.6zM1415 248h1.6v1.6h-1.6zM1516 273h1.6v1.6h-1.6zM1494 274h1.6v1.6h-1.6zM1538 251h1.6v1.6h-1.6zM1429 276h1.6v1.6h-1.6zM1551 274h1.6v1.6h-1.6zM1531 248h1.6v1.6h-1.6zM1509 283h1.6v1.6h-1.6zM1427 251h1.6v1.6h-1.6zM1512 273h1.6v1.6h-1.6zM1465 276h1.6v1.6h-1.6zM1450 252h1.6v1.6h-1.6zM1536 251h1.6v1.6h-1.6zM1484 246h1.6v1.6h-1.6zM1497 273h1.6v1.6h-1.6zM1547 249h1.6v1.6h-1.6zM1496 275h1.6v1.6h-1.6zM1560 249h1.6v1.6h-1.6zM1597 244h1.6v1.6h-1.6zM1535 247h1.6v1.6h-1.6zM1419 251h1.6v1.6h-1.6zM1499 249h1.6v1.6h-1.6zM1581 247h1.6v1.6h-1.6zM1606 247h1.6v1.6h-1.6zM1570 275h1.6v1.6h-1.6zM1500 250h1.6v1.6h-1.6zM1504 246h1.6v1.6h-1.6zM1512 250h1.6v1.6h-1.6zM1467 249h1.6v1.6h-1.6zM1476 278h1.6v1.6h-1.6zM1603 274h1.6v1.6h-1.6zM1496 273h1.6v1.6h-1.6zM1540 274h1.6v1.6h-1.6zM1536 250h1.6v1.6h-1.6zM1555 250h1.6v1.6h-1.6zM1584 249h1.6v1.6h-1.6zM1559 273h1.6v1.6h-1.6zM1539 251h1.6v1.6h-1.6zM1416 253h1.6v1.6h-1.6zM1590 275h1.6v1.6h-1.6zM1554 277h1.6v1.6h-1.6zM1506 275h1.6v1.6h-1.6zM1574 250h1.6v1.6h-1.6zM1435 253h1.6v1.6h-1.6zM1444 253h1.6v1.6h-1.6zM1548 249h1.6v1.6h-1.6zM1566 276h1.6v1.6h-1.6zM1445 250h1.6v1.6h-1.6zM1610 274h1.6v1.6h-1.6zM1539 275h1.6v1.6h-1.6zM1522 274h1.6v1.6h-1.6zM1573 247h1.6v1.6h-1.6zM1536 247h1.6v1.6h-1.6zM1533 250h1.6v1.6h-1.6zM1552 275h1.6v1.6h-1.6zM1430 250h1.6v1.6h-1.6zM1507 252h1.6v1.6h-1.6zM1473 274h1.6v1.6h-1.6zM1567 274h1.6v1.6h-1.6zM1472 252h1.6v1.6h-1.6zM1479 250h1.6v1.6h-1.6zM1500 273h1.6v1.6h-1.6zM1408 251h1.6v1.6h-1.6zM1569 275h1.6v1.6h-1.6zM1563 249h1.6v1.6h-1.6zM1459 252h1.6v1.6h-1.6zM1446 251h1.6v1.6h-1.6zM1512 249h1.6v1.6h-1.6zM1408 252h1.6v1.6h-1.6zM1416 248h1.6v1.6h-1.6zM1543 278h1.6v1.6h-1.6zM1480 274h1.6v1.6h-1.6zM1441 246h1.6v1.6h-1.6zM1449 281h1.6v1.6h-1.6zM1483 251h1.6v1.6h-1.6zM1561 274h1.6v1.6h-1.6zM1474 274h1.6v1.6h-1.6zM1556 274h1.6v1.6h-1.6zM1592 274h1.6v1.6h-1.6zM1468 274h1.6v1.6h-1.6zM1494 275h1.6v1.6h-1.6zM1609 273h1.6v1.6h-1.6zM1542 274h1.6v1.6h-1.6zM1574 275h1.6v1.6h-1.6zM1569 274h1.6v1.6h-1.6zM1461 278h1.6v1.6h-1.6zM1460 275h1.6v1.6h-1.6zM1486 273h1.6v1.6h-1.6zM1451 249h1.6v1.6h-1.6zM1556 250h1.6v1.6h-1.6zM1460 253h1.6v1.6h-1.6zM1416 254h1.6v1.6h-1.6zM1470 252h1.6v1.6h-1.6zM1456 274h1.6v1.6h-1.6zM1421 276h1.6v1.6h-1.6zM1610 275h1.6v1.6h-1.6zM1565 276h1.6v1.6h-1.6zM1470 274h1.6v1.6h-1.6zM1576 274h1.6v1.6h-1.6zM1489 251h1.6v1.6h-1.6zM1496 249h1.6v1.6h-1.6zM1557 250h1.6v1.6h-1.6zM1420 253h1.6v1.6h-1.6zM1478 273h1.6v1.6h-1.6zM1527 251h1.6v1.6h-1.6zM1499 251h1.6v1.6h-1.6zM1425 274h1.6v1.6h-1.6zM1516 275h1.6v1.6h-1.6zM1455 252h1.6v1.6h-1.6zM1540 274h1.6v1.6h-1.6zM1593 276h1.6v1.6h-1.6zM1541 276h1.6v1.6h-1.6zM1554 280h1.6v1.6h-1.6zM1443 274h1.6v1.6h-1.6zM1537 248h1.6v1.6h-1.6zM1500 251h1.6v1.6h-1.6zM1489 251h1.6v1.6h-1.6zM1475 274h1.6v1.6h-1.6zM1554 249h1.6v1.6h-1.6zM1500 276h1.6v1.6h-1.6zM1477 249h1.6v1.6h-1.6zM1439 276h1.6v1.6h-1.6zM1557 250h1.6v1.6h-1.6zM1529 277h1.6v1.6h-1.6zM1567 274h1.6v1.6h-1.6zM1456 248h1.6v1.6h-1.6zM1603 275h1.6v1.6h-1.6zM1591 249h1.6v1.6h-1.6zM1584 249h1.6v1.6h-1.6zM1609 250h1.6v1.6h-1.6zM1574 275h1.6v1.6h-1.6zM1508 250h1.6v1.6h-1.6zM1595 275h1.6v1.6h-1.6zM1475 274h1.6v1.6h-1.6zM1432 277h1.6v1.6h-1.6zM1465 251h1.6v1.6h-1.6zM1425 275h1.6v1.6h-1.6zM1489 251h1.6v1.6h-1.6zM1593 250h1.6v1.6h-1.6zM1599 274h1.6v1.6h-1.6zM1597 249h1.6v1.6h-1.6zM1431 277h1.6v1.6h-1.6zM1552 285h1.6v1.6h-1.6zM1416 254h1.6v1.6h-1.6zM1587 273h1.6v1.6h-1.6zM1533 273h1.6v1.6h-1.6zM1526 275h1.6v1.6h-1.6zM1562 276h1.6v1.6h-1.6zM1486 252h1.6v1.6h-1.6zM1435 274h1.6v1.6h-1.6zM1462 274h1.6v1.6h-1.6zM1429 275h1.6v1.6h-1.6zM1551 250h1.6v1.6h-1.6zM1557 276h1.6v1.6h-1.6zM1527 251h1.6v1.6h-1.6zM1596 246h1.6v1.6h-1.6zM1470 252h1.6v1.6h-1.6zM1416 279h1.6v1.6h-1.6zM1610 274h1.6v1.6h-1.6zM1446 274h1.6v1.6h-1.6zM1487 251h1.6v1.6h-1.6zM1522 248h1.6v1.6h-1.6zM1555 247h1.6v1.6h-1.6zM1442 252h1.6v1.6h-1.6zM1410 278h1.6v1.6h-1.6zM1410 253h1.6v1.6h-1.6zM1437 252h1.6v1.6h-1.6zM1445 252h1.6v1.6h-1.6zM1464 251h1.6v1.6h-1.6zM1461 276h1.6v1.6h-1.6zM1478 273h1.6v1.6h-1.6zM1445 250h1.6v1.6h-1.6zM1598 274h1.6v1.6h-1.6zM1551 248h1.6v1.6h-1.6zM1502 274h1.6v1.6h-1.6zM1445 250h1.6v1.6h-1.6zM1609 275h1.6v1.6h-1.6zM1548 273h1.6v1.6h-1.6zM1442 276h1.6v1.6h-1.6zM1570 249h1.6v1.6h-1.6zM1532 273h1.6v1.6h-1.6zM1439 273h1.6v1.6h-1.6zM1413 250h1.6v1.6h-1.6zM1460 253h1.6v1.6h-1.6zM1470 275h1.6v1.6h-1.6zM1581 274h1.6v1.6h-1.6zM1491 252h1.6v1.6h-1.6zM1568 248h1.6v1.6h-1.6zM1430 250h1.6v1.6h-1.6zM1430 274h1.6v1.6h-1.6zM1596 248h1.6v1.6h-1.6zM1435 253h1.6v1.6h-1.6zM1517 274h1.6v1.6h-1.6zM1447 253h1.6v1.6h-1.6zM1420 249h1.6v1.6h-1.6zM1567 275h1.6v1.6h-1.6zM1537 278h1.6v1.6h-1.6zM1440 252h1.6v1.6h-1.6zM1524 249h1.6v1.6h-1.6zM1422 279h1.6v1.6h-1.6zM1469 276h1.6v1.6h-1.6zM1556 274h1.6v1.6h-1.6zM1606 249h1.6v1.6h-1.6zM1604 249h1.6v1.6h-1.6zM1572 277h1.6v1.6h-1.6zM1519 274h1.6v1.6h-1.6zM1492 275h1.6v1.6h-1.6zM1431 253h1.6v1.6h-1.6zM1546 273h1.6v1.6h-1.6zM1431 252h1.6v1.6h-1.6zM1574 250h1.6v1.6h-1.6zM1585 250h1.6v1.6h-1.6zM1459 250h1.6v1.6h-1.6zM1454 251h1.6v1.6h-1.6zM1536 275h1.6v1.6h-1.6zM1488 252h1.6v1.6h-1.6zM1510 274h1.6v1.6h-1.6zM1436 251h1.6v1.6h-1.6zM1521 276h1.6v1.6h-1.6zM1599 273h1.6v1.6h-1.6zM1487 250h1.6v1.6h-1.6zM1553 242h1.6v1.6h-1.6zM1581 276h1.6v1.6h-1.6zM1509 274h1.6v1.6h-1.6zM1410 275h1.6v1.6h-1.6zM1534 250h1.6v1.6h-1.6zM1448 278h1.6v1.6h-1.6zM1435 275h1.6v1.6h-1.6zM1423 249h1.6v1.6h-1.6zM1453 273h1.6v1.6h-1.6zM1499 251h1.6v1.6h-1.6zM1535 274h1.6v1.6h-1.6zM1447 273h1.6v1.6h-1.6zM1468 274h1.6v1.6h-1.6zM1509 275h1.6v1.6h-1.6zM1587 247h1.6v1.6h-1.6zM1532 274h1.6v1.6h-1.6zM1456 252h1.6v1.6h-1.6zM1459 275h1.6v1.6h-1.6zM1493 250h1.6v1.6h-1.6zM1603 250h1.6v1.6h-1.6zM1576 249h1.6v1.6h-1.6zM1604 250h1.6v1.6h-1.6zM1455 250h1.6v1.6h-1.6zM1570 248h1.6v1.6h-1.6zM1439 250h1.6v1.6h-1.6zM1523 250h1.6v1.6h-1.6zM1563 278h1.6v1.6h-1.6zM1605 273h1.6v1.6h-1.6zM1573 249h1.6v1.6h-1.6zM1492 249h1.6v1.6h-1.6zM1539 274h1.6v1.6h-1.6zM1484 250h1.6v1.6h-1.6zM1419 250h1.6v1.6h-1.6zM1544 275h1.6v1.6h-1.6zM1499 277h1.6v1.6h-1.6zM1493 252h1.6v1.6h-1.6zM1519 275h1.6v1.6h-1.6zM1579 280h1.6v1.6h-1.6zM1505 278h1.6v1.6h-1.6zM1410 254h1.6v1.6h-1.6zM1607 279h1.6v1.6h-1.6zM1431 253h1.6v1.6h-1.6zM1467 275h1.6v1.6h-1.6zM1581 250h1.6v1.6h-1.6zM1487 276h1.6v1.6h-1.6zM1497 274h1.6v1.6h-1.6zM1464 274h1.6v1.6h-1.6zM1577 274h1.6v1.6h-1.6zM1485 251h1.6v1.6h-1.6zM1598 274h1.6v1.6h-1.6zM1494 251h1.6v1.6h-1.6zM1542 275h1.6v1.6h-1.6zM1500 252h1.6v1.6h-1.6zM1450 251h1.6v1.6h-1.6zM1460 273h1.6v1.6h-1.6zM1419 253h1.6v1.6h-1.6zM1508 275h1.6v1.6h-1.6zM1598 243h1.6v1.6h-1.6zM1426 250h1.6v1.6h-1.6zM1547 277h1.6v1.6h-1.6zM1496 273h1.6v1.6h-1.6zM1533 274h1.6v1.6h-1.6zM1542 276h1.6v1.6h-1.6zM1445 252h1.6v1.6h-1.6zM1427 275h1.6v1.6h-1.6zM1415 250h1.6v1.6h-1.6zM1500 275h1.6v1.6h-1.6zM1472 281h1.6v1.6h-1.6zM1450 253h1.6v1.6h-1.6zM1542 246h1.6v1.6h-1.6zM1534 246h1.6v1.6h-1.6zM1436 274h1.6v1.6h-1.6zM1465 274h1.6v1.6h-1.6zM1447 273h1.6v1.6h-1.6zM1565 248h1.6v1.6h-1.6zM1491 274h1.6v1.6h-1.6zM1543 273h1.6v1.6h-1.6zM1475 249h1.6v1.6h-1.6zM1437 253h1.6v1.6h-1.6zM1439 252h1.6v1.6h-1.6zM1610 250h1.6v1.6h-1.6zM1550 246h1.6v1.6h-1.6zM1429 274h1.6v1.6h-1.6zM1480 252h1.6v1.6h-1.6zM1576 249h1.6v1.6h-1.6zM1491 250h1.6v1.6h-1.6zM1600 248h1.6v1.6h-1.6zM1449 251h1.6v1.6h-1.6zM1519 251h1.6v1.6h-1.6zM1531 273h1.6v1.6h-1.6zM1413 250h1.6v1.6h-1.6zM1538 251h1.6v1.6h-1.6zM1603 274h1.6v1.6h-1.6zM1434 253h1.6v1.6h-1.6zM1568 250h1.6v1.6h-1.6zM1591 277h1.6v1.6h-1.6zM1484 275h1.6v1.6h-1.6zM1444 274h1.6v1.6h-1.6zM1444 246h1.6v1.6h-1.6zM1576 273h1.6v1.6h-1.6zM1541 275h1.6v1.6h-1.6zM1590 274h1.6v1.6h-1.6zM1424 274h1.6v1.6h-1.6zM1452 274h1.6v1.6h-1.6zM1450 252h1.6v1.6h-1.6zM1557 274h1.6v1.6h-1.6zM1471 279h1.6v1.6h-1.6zM1420 251h1.6v1.6h-1.6zM1431 282h1.6v1.6h-1.6zM1483 277h1.6v1.6h-1.6zM1421 252h1.6v1.6h-1.6zM1479 275h1.6v1.6h-1.6zM1539 277h1.6v1.6h-1.6zM1587 273h1.6v1.6h-1.6zM1596 248h1.6v1.6h-1.6zM1592 249h1.6v1.6h-1.6zM1514 277h1.6v1.6h-1.6zM1584 273h1.6v1.6h-1.6zM1468 249h1.6v1.6h-1.6zM1513 281h1.6v1.6h-1.6zM1458 274h1.6v1.6h-1.6zM1505 252h1.6v1.6h-1.6zM1578 249h1.6v1.6h-1.6zM1578 248h1.6v1.6h-1.6zM1485 251h1.6v1.6h-1.6zM1420 273h1.6v1.6h-1.6zM1600 250h1.6v1.6h-1.6zM1603 244h1.6v1.6h-1.6zM1536 273h1.6v1.6h-1.6zM1416 249h1.6v1.6h-1.6zM1519 275h1.6v1.6h-1.6zM1505 273h1.6v1.6h-1.6zM1597 249h1.6v1.6h-1.6zM1595 242h1.6v1.6h-1.6zM1562 275h1.6v1.6h-1.6zM1555 251h1.6v1.6h-1.6zM1412 276h1.6v1.6h-1.6zM1449 277h1.6v1.6h-1.6zM1559 248h1.6v1.6h-1.6zM1468 274h1.6v1.6h-1.6zM1435 274h1.6v1.6h-1.6zM1426 278h1.6v1.6h-1.6zM1463 253h1.6v1.6h-1.6zM1569 247h1.6v1.6h-1.6zM1525 251h1.6v1.6h-1.6zM1479 252h1.6v1.6h-1.6zM1590 249h1.6v1.6h-1.6zM1517 250h1.6v1.6h-1.6zM1408 253h1.6v1.6h-1.6zM1411 252h1.6v1.6h-1.6zM1580 276h1.6v1.6h-1.6zM1527 273h1.6v1.6h-1.6zM1523 250h1.6v1.6h-1.6zM1414 249h1.6v1.6h-1.6zM1535 276h1.6v1.6h-1.6zM1421 246h1.6v1.6h-1.6zM1545 249h1.6v1.6h-1.6zM1564 251h1.6v1.6h-1.6zM1435 273h1.6v1.6h-1.6zM1551 242h1.6v1.6h-1.6zM1583 249h1.6v1.6h-1.6zM1499 274h1.6v1.6h-1.6zM1527 251h1.6v1.6h-1.6zM1503 273h1.6v1.6h-1.6zM1544 245h1.6v1.6h-1.6zM1452 273h1.6v1.6h-1.6zM1439 253h1.6v1.6h-1.6zM1445 242h1.6v1.6h-1.6zM1580 278h1.6v1.6h-1.6zM1552 275h1.6v1.6h-1.6zM1431 251h1.6v1.6h-1.6zM1418 254h1.6v1.6h-1.6zM1445 274h1.6v1.6h-1.6zM1464 274h1.6v1.6h-1.6zM1543 250h1.6v1.6h-1.6zM1541 250h1.6v1.6h-1.6zM1441 249h1.6v1.6h-1.6zM1589 274h1.6v1.6h-1.6zM1506 279h1.6v1.6h-1.6zM1553 274h1.6v1.6h-1.6zM1605 249h1.6v1.6h-1.6zM1494 274h1.6v1.6h-1.6zM1516 274h1.6v1.6h-1.6zM1581 251h1.6v1.6h-1.6zM1598 275h1.6v1.6h-1.6zM1582 249h1.6v1.6h-1.6zM1555 247h1.6v1.6h-1.6zM1461 276h1.6v1.6h-1.6zM1408 252h1.6v1.6h-1.6zM1423 252h1.6v1.6h-1.6zM1547 274h1.6v1.6h-1.6zM1559 274h1.6v1.6h-1.6zM1460 250h1.6v1.6h-1.6zM1434 247h1.6v1.6h-1.6zM1600 248h1.6v1.6h-1.6zM1451 253h1.6v1.6h-1.6zM1538 274h1.6v1.6h-1.6zM1546 274h1.6v1.6h-1.6zM1492 276h1.6v1.6h-1.6zM1504 274h1.6v1.6h-1.6zM1586 248h1.6v1.6h-1.6zM1416 253h1.6v1.6h-1.6zM1589 249h1.6v1.6h-1.6zM1568 250h1.6v1.6h-1.6zM1476 279h1.6v1.6h-1.6zM1448 251h1.6v1.6h-1.6zM1573 283h1.6v1.6h-1.6zM1546 273h1.6v1.6h-1.6zM1487 252h1.6v1.6h-1.6zM1507 251h1.6v1.6h-1.6zM1465 277h1.6v1.6h-1.6zM1512 251h1.6v1.6h-1.6zM1603 273h1.6v1.6h-1.6zM1495 250h1.6v1.6h-1.6zM1553 275h1.6v1.6h-1.6zM1470 252h1.6v1.6h-1.6zM1450 249h1.6v1.6h-1.6zM1466 252h1.6v1.6h-1.6zM1564 276h1.6v1.6h-1.6zM1502 250h1.6v1.6h-1.6zM1533 250h1.6v1.6h-1.6zM1475 253h1.6v1.6h-1.6zM1408 253h1.6v1.6h-1.6zM1596 274h1.6v1.6h-1.6zM1460 274h1.6v1.6h-1.6zM1521 278h1.6v1.6h-1.6zM1520 279h1.6v1.6h-1.6zM1457 275h1.6v1.6h-1.6zM1607 274h1.6v1.6h-1.6zM1497 251h1.6v1.6h-1.6zM1500 252h1.6v1.6h-1.6zM1578 250h1.6v1.6h-1.6zM1513 252h1.6v1.6h-1.6zM1548 251h1.6v1.6h-1.6zM1549 274h1.6v1.6h-1.6zM1475 246h1.6v1.6h-1.6zM1583 250h1.6v1.6h-1.6zM1557 277h1.6v1.6h-1.6zM1566 249h1.6v1.6h-1.6zM1576 245h1.6v1.6h-1.6zM1503 274h1.6v1.6h-1.6zM1580 273h1.6v1.6h-1.6zM1497 248h1.6v1.6h-1.6zM1537 250h1.6v1.6h-1.6zM1531 273h1.6v1.6h-1.6zM1435 250h1.6v1.6h-1.6zM1454 253h1.6v1.6h-1.6zM1571 276h1.6v1.6h-1.6zM1521 274h1.6v1.6h-1.6zM1451 273h1.6v1.6h-1.6zM1417 275h1.6v1.6h-1.6zM1459 253h1.6v1.6h-1.6zM1436 253h1.6v1.6h-1.6zM1607 250h1.6v1.6h-1.6zM1563 249h1.6v1.6h-1.6zM1600 250h1.6v1.6h-1.6zM1469 274h1.6v1.6h-1.6zM1408 251h1.6v1.6h-1.6zM1587 250h1.6v1.6h-1.6zM1540 249h1.6v1.6h-1.6zM1425 246h1.6v1.6h-1.6zM1575 248h1.6v1.6h-1.6zM1540 251h1.6v1.6h-1.6zM1539 248h1.6v1.6h-1.6zM1447 276h1.6v1.6h-1.6zM1480 276h1.6v1.6h-1.6zM1593 277h1.6v1.6h-1.6zM1466 253h1.6v1.6h-1.6zM1570 276h1.6v1.6h-1.6zM1547 251h1.6v1.6h-1.6zM1494 251h1.6v1.6h-1.6zM1594 247h1.6v1.6h-1.6zM1500 275h1.6v1.6h-1.6zM1459 251h1.6v1.6h-1.6zM1412 273h1.6v1.6h-1.6zM1482 273h1.6v1.6h-1.6zM1451 281h1.6v1.6h-1.6zM1455 275h1.6v1.6h-1.6zM1501 252h1.6v1.6h-1.6zM1563 250h1.6v1.6h-1.6zM1502 248h1.6v1.6h-1.6zM1435 253h1.6v1.6h-1.6zM1418 275h1.6v1.6h-1.6zM1547 251h1.6v1.6h-1.6z"/>
<path fill="none" stroke="#3f5fcf" stroke-width="2" d="M1612.4 264.7H1623.2"/>
<path fill="#3f5fcf" d="M1623 252H1624V254H1625H1626V252H1627V253H1628V252H1629H1630V253H1631H1632H1633V254H1634V252V272V273H1633V272H1632V274H1631V272H1630V274H1629H1628V273H1627V272H1626V274H1625H1624V272H1623Z"/>
<path fill="#fff" d="M1626 266h1v1h-1zM1625 270h1v1h-1zM1628 260h1v1h-1zM1629 262h1v1h-1zM1630 256h1v1h-1zM1625 268h1v1h-1zM1630 255h1v1h-1zM1624 264h1v1h-1zM1626 268h1v1h-1zM1629 270h1v1h-1zM1628 259h1v1h-1zM1632 267h1v1h-1zM1628 263h1v1h-1zM1629 264h1v1h-1zM1625 261h1v1h-1zM1626 268h1v1h-1zM1626 256h1v1h-1zM1626 268h1v1h-1zM1627 262h1v1h-1zM1630 267h1v1h-1zM1629 265h1v1h-1zM1630 257h1v1h-1zM1631 261h1v1h-1zM1629 256h1v1h-1zM1631 258h1v1h-1zM1627 255h1v1h-1z"/>
<path fill="#3f5fcf" d="M1629 246h1.6v1.6h-1.6zM1629 274h1.6v1.6h-1.6zM1632 278h1.6v1.6h-1.6zM1624 253h1.6v1.6h-1.6zM1627 273h1.6v1.6h-1.6zM1626 274h1.6v1.6h-1.6zM1629 252h1.6v1.6h-1.6zM1626 249h1.6v1.6h-1.6zM1629 248h1.6v1.6h-1.6zM1628 252h1.6v1.6h-1.6zM1627 273h1.6v1.6h-1.6zM1629 274h1.6v1.6h-1.6zM1632 275h1.6v1.6h-1.6zM1629 273h1.6v1.6h-1.6zM1631 246h1.6v1.6h-1.6zM1630 276h1.6v1.6h-1.6zM1631 276h1.6v1.6h-1.6zM1631 253h1.6v1.6h-1.6zM1629 274h1.6v1.6h-1.6zM1629 252h1.6v1.6h-1.6zM1625 273h1.6v1.6h-1.6zM1629 274h1.6v1.6h-1.6zM1627 252h1.6v1.6h-1.6zM1625 252h1.6v1.6h-1.6zM1632 250h1.6v1.6h-1.6zM1629 252h1.6v1.6h-1.6zM1631 277h1.6v1.6h-1.6zM1625 283h1.6v1.6h-1.6zM1625 253h1.6v1.6h-1.6zM1626 251h1.6v1.6h-1.6zM1624 276h1.6v1.6h-1.6zM1625 273h1.6v1.6h-1.6z"/>
<path fill="#3f5fcf" d="M1251 269h1.6v1.6h-1.6zM1259 252h1.6v1.6h-1.6zM1242 269h1.6v1.6h-1.6zM1247 270h1.6v1.6h-1.6zM1259 245h1.6v1.6h-1.6zM1247 250h1.6v1.6h-1.6zM1246 279h1.6v1.6h-1.6zM1243 258h1.6v1.6h-1.6zM1243 249h1.6v1.6h-1.6zM1241 245h1.6v1.6h-1.6zM1258 270h1.6v1.6h-1.6zM1246 273h1.6v1.6h-1.6zM1261 253h1.6v1.6h-1.6zM1254 248h1.6v1.6h-1.6zM1245 257h1.6v1.6h-1.6zM1249 268h1.6v1.6h-1.6zM1247 257h1.6v1.6h-1.6zM1258 257h1.6v1.6h-1.6zM1255 272h1.6v1.6h-1.6zM1260 252h1.6v1.6h-1.6zM1244 272h1.6v1.6h-1.6zM1245 263h1.6v1.6h-1.6zM1246 279h1.6v1.6h-1.6zM1250 251h1.6v1.6h-1.6zM1261 244h1.6v1.6h-1.6zM1245 268h1.6v1.6h-1.6zM1247 274h1.6v1.6h-1.6zM1262 264h1.6v1.6h-1.6zM1250 280h1.6v1.6h-1.6zM1254 270h1.6v1.6h-1.6zM1252 274h1.6v1.6h-1.6zM1260 246h1.6v1.6h-1.6zM1243 244h1.6v1.6h-1.6zM1244 255h1.6v1.6h-1.6zM1248 258h1.6v1.6h-1.6zM1252 268h1.6v1.6h-1.6zM1238 250h1.6v1.6h-1.6zM1259 282h1.6v1.6h-1.6zM1240 255h1.6v1.6h-1.6zM1252 261h1.6v1.6h-1.6zM1242 277h1.6v1.6h-1.6zM1253 258h1.6v1.6h-1.6zM1246 248h1.6v1.6h-1.6zM1243 281h1.6v1.6h-1.6zM1262 256h1.6v1.6h-1.6z"/>
<path fill="none" stroke="#00cc00" stroke-width="2.2" d="M1003.5 281.7H1634"/>
</g>
<g clip-path="url(#cR_inj)">
<path fill="#a020f0" d="M1004 335V333H1006V335V336H1008V333H1010V335V336H1012V335V333H1014V335V336H1016V335V333H1018V336V335H1020V333H1022V334V336H1024V333V334H1026V335V336H1028V334H1030H1032V336V333H1034V336V335H1036V333V336H1038V335V334H1040V333V335H1042V333H1044V336V335H1046V334V336H1048V333H1050V334V333H1052V335V334H1054V335H1056V336V334H1058V336V334H1060V335V333H1062V336V334H1064V332V335H1066V332V336H1068V332H1070V334V335H1072V334V335H1074V334H1076V333V334H1078V332H1080V333V331H1082V332V333H1084V332V334H1086V333V334H1088V333H1090V332H1092V333V331H1094V332V334H1096V332H1098V334H1100V333H1102V331V335H1104V332H1106V331V333H1108V331V332V345V346H1106V344H1104V346V344H1102V347V346H1100V347V345H1098V344H1096V347V346H1094V345H1092V347H1090V345V344H1088V346V345H1086V346H1084H1082V347H1080V344V347H1078V346H1076V344V347H1074V344V346H1072V345V346H1070V345V347H1068V346V347H1066V344V345H1064H1062V346H1060V344H1058V347H1056V346V344H1054V346V345H1052V346H1050V347V346H1048V347V344H1046V345H1044V346H1042V344V346H1040H1038H1036V344V345H1034V347V345H1032V347V346H1030V345H1028V346V347H1026V346V345H1024V346V344H1022V345H1020V346H1018V345H1016V347V346H1014V344H1012V347V346H1010H1008V345H1006V346V347H1004V346Z"/>
<path fill="#a020f0" d="M1063 332h2v2h-2zM1007 332h2v2h-2zM1061 346h2v2h-2zM1041 347h2v2h-2zM1087 351h2v2h-2zM1018 346h2v2h-2zM1019 349h2v2h-2zM1068 346h2v2h-2zM1004 346h2v2h-2zM1036 346h2v2h-2zM1087 348h2v2h-2zM1072 347h2v2h-2zM1034 346h2v2h-2zM1021 346h2v2h-2zM1051 332h2v2h-2zM1045 333h2v2h-2zM1035 334h2v2h-2zM1067 333h2v2h-2zM1031 348h2v2h-2zM1104 348h2v2h-2zM1012 347h2v2h-2zM1025 347h2v2h-2zM1055 332h2v2h-2zM1103 332h2v2h-2zM1083 331h2v2h-2zM1073 327h2v2h-2zM1045 346h2v2h-2zM1059 330h2v2h-2zM1014 347h2v2h-2zM1060 331h2v2h-2zM1035 333h2v2h-2zM1010 346h2v2h-2zM1054 326h2v2h-2zM1080 346h2v2h-2zM1040 346h2v2h-2zM1038 333h2v2h-2zM1061 329h2v2h-2zM1022 347h2v2h-2zM1009 350h2v2h-2zM1089 333h2v2h-2zM1074 330h2v2h-2zM1069 347h2v2h-2zM1078 355h2v2h-2zM1084 348h2v2h-2zM1089 353h2v2h-2zM1059 329h2v2h-2zM1008 346h2v2h-2zM1083 330h2v2h-2zM1082 331h2v2h-2zM1076 346h2v2h-2zM1036 330h2v2h-2zM1029 334h2v2h-2zM1049 349h2v2h-2zM1081 350h2v2h-2zM1080 330h2v2h-2zM1039 347h2v2h-2zM1063 332h2v2h-2zM1084 350h2v2h-2zM1051 346h2v2h-2zM1021 346h2v2h-2zM1099 327h2v2h-2zM1009 346h2v2h-2zM1023 347h2v2h-2zM1047 331h2v2h-2zM1072 348h2v2h-2zM1082 348h2v2h-2zM1072 333h2v2h-2zM1018 346h2v2h-2zM1102 349h2v2h-2zM1033 332h2v2h-2zM1093 347h2v2h-2zM1078 346h2v2h-2zM1085 332h2v2h-2zM1032 347h2v2h-2zM1076 333h2v2h-2zM1077 329h2v2h-2zM1050 348h2v2h-2zM1008 334h2v2h-2zM1077 334h2v2h-2zM1071 346h2v2h-2zM1068 346h2v2h-2zM1005 346h2v2h-2zM1055 346h2v2h-2zM1102 333h2v2h-2zM1093 329h2v2h-2zM1009 346h2v2h-2zM1005 334h2v2h-2zM1063 333h2v2h-2zM1065 329h2v2h-2zM1008 346h2v2h-2zM1046 333h2v2h-2zM1076 333h2v2h-2zM1084 348h2v2h-2zM1052 347h2v2h-2zM1010 334h2v2h-2zM1063 327h2v2h-2zM1047 352h2v2h-2zM1066 347h2v2h-2zM1014 333h2v2h-2zM1088 350h2v2h-2zM1044 332h2v2h-2zM1006 346h2v2h-2zM1066 346h2v2h-2zM1103 328h2v2h-2zM1068 331h2v2h-2zM1036 333h2v2h-2zM1029 346h2v2h-2zM1075 330h2v2h-2zM1028 330h2v2h-2zM1085 346h2v2h-2zM1033 330h2v2h-2zM1058 334h2v2h-2zM1073 346h2v2h-2zM1010 348h2v2h-2zM1056 346h2v2h-2zM1007 346h2v2h-2zM1102 332h2v2h-2zM1084 333h2v2h-2zM1095 353h2v2h-2zM1061 334h2v2h-2zM1026 334h2v2h-2zM1087 329h2v2h-2zM1035 347h2v2h-2zM1020 334h2v2h-2zM1053 347h2v2h-2zM1074 349h2v2h-2zM1059 346h2v2h-2zM1020 331h2v2h-2zM1097 322h2v2h-2zM1069 348h2v2h-2zM1072 332h2v2h-2zM1086 325h2v2h-2zM1064 333h2v2h-2zM1101 331h2v2h-2zM1105 332h2v2h-2zM1026 330h2v2h-2zM1085 346h2v2h-2zM1037 330h2v2h-2zM1027 334h2v2h-2zM1053 331h2v2h-2zM1051 334h2v2h-2zM1008 348h2v2h-2zM1087 332h2v2h-2zM1102 346h2v2h-2zM1023 328h2v2h-2zM1033 334h2v2h-2zM1073 347h2v2h-2zM1031 334h2v2h-2zM1058 349h2v2h-2zM1066 346h2v2h-2zM1008 333h2v2h-2zM1068 331h2v2h-2zM1086 349h2v2h-2zM1018 347h2v2h-2zM1100 330h2v2h-2zM1066 346h2v2h-2zM1078 332h2v2h-2zM1073 350h2v2h-2zM1079 347h2v2h-2zM1048 334h2v2h-2zM1068 353h2v2h-2zM1049 334h2v2h-2zM1032 334h2v2h-2zM1022 353h2v2h-2zM1007 350h2v2h-2zM1092 350h2v2h-2zM1045 347h2v2h-2zM1086 331h2v2h-2zM1032 347h2v2h-2zM1062 329h2v2h-2zM1082 346h2v2h-2zM1101 346h2v2h-2zM1103 346h2v2h-2zM1031 332h2v2h-2zM1086 347h2v2h-2zM1099 349h2v2h-2zM1085 332h2v2h-2zM1083 333h2v2h-2zM1042 347h2v2h-2zM1020 348h2v2h-2zM1035 346h2v2h-2zM1091 348h2v2h-2zM1073 332h2v2h-2zM1016 348h2v2h-2zM1007 334h2v2h-2zM1047 334h2v2h-2zM1068 333h2v2h-2zM1087 346h2v2h-2zM1052 333h2v2h-2zM1007 332h2v2h-2zM1100 332h2v2h-2zM1065 347h2v2h-2zM1069 347h2v2h-2zM1076 353h2v2h-2zM1063 348h2v2h-2zM1019 333h2v2h-2zM1018 334h2v2h-2zM1005 349h2v2h-2zM1016 349h2v2h-2zM1051 333h2v2h-2zM1011 352h2v2h-2zM1072 334h2v2h-2zM1045 334h2v2h-2zM1043 332h2v2h-2zM1067 346h2v2h-2zM1021 334h2v2h-2zM1030 349h2v2h-2zM1011 355h2v2h-2zM1014 332h2v2h-2zM1087 350h2v2h-2zM1098 333h2v2h-2zM1067 333h2v2h-2zM1065 352h2v2h-2zM1050 346h2v2h-2zM1105 347h2v2h-2zM1019 333h2v2h-2zM1040 334h2v2h-2zM1021 351h2v2h-2zM1031 350h2v2h-2zM1104 348h2v2h-2zM1057 325h2v2h-2zM1004 334h2v2h-2zM1021 334h2v2h-2zM1087 332h2v2h-2zM1060 333h2v2h-2zM1051 332h2v2h-2zM1066 334h2v2h-2zM1016 334h2v2h-2zM1079 352h2v2h-2zM1049 333h2v2h-2zM1038 334h2v2h-2zM1063 334h2v2h-2zM1099 329h2v2h-2zM1026 346h2v2h-2zM1018 334h2v2h-2zM1048 331h2v2h-2zM1043 332h2v2h-2zM1103 332h2v2h-2zM1018 334h2v2h-2zM1051 333h2v2h-2zM1071 331h2v2h-2zM1061 347h2v2h-2zM1032 333h2v2h-2zM1005 348h2v2h-2zM1019 346h2v2h-2zM1103 346h2v2h-2zM1012 346h2v2h-2zM1032 333h2v2h-2zM1083 352h2v2h-2zM1066 348h2v2h-2zM1020 348h2v2h-2zM1074 333h2v2h-2zM1018 346h2v2h-2zM1085 332h2v2h-2zM1014 354h2v2h-2zM1055 334h2v2h-2zM1022 349h2v2h-2zM1051 349h2v2h-2zM1038 330h2v2h-2zM1098 330h2v2h-2z"/>
<path fill="none" stroke="#a020f0" stroke-width="1.9" d="M1107.7 346.9H1205L1212 345L1217 344"/>
<path fill="#a020f0" d="M1217 339H1218V337H1219V333V328H1220V330H1221V329H1222V327H1223H1224H1225V328H1226H1227V329H1228V330H1229V331H1230V330H1231V328H1232H1233V331H1234V330H1235V329H1236V330H1237V329V339V337V338H1236V339H1235V336H1234V339H1233H1232V336H1231V338V339H1230H1229V338H1228V335H1227V337H1226H1225V335H1224V336H1223V337V335H1222H1221V336H1220V339H1219V340V342H1218V349H1217Z"/>
<path fill="#a020f0" d="M1241 303H1243V305H1241Z"/>
<path fill="#a020f0" d="M1238 308H1239V310H1238Z"/>
<path fill="#a020f0" d="M1251 305H1253V307H1251Z"/>
<path fill="#a020f0" d="M1247 311H1249V312H1247Z"/>
<path fill="#a020f0" d="M1243 306H1245V308H1243Z"/>
<path fill="#a020f0" d="M1252 309H1254V311H1252Z"/>
<path fill="#a020f0" d="M1259 317H1261V319H1259Z"/>
<path fill="#a020f0" d="M1256 312H1258V314H1256Z"/>
<path fill="#a020f0" d="M1245 316H1247V318H1245Z"/>
<path fill="#a020f0" d="M1258 306H1259V307H1258Z"/>
<path fill="#a020f0" d="M1243 309H1245V311H1243Z"/>
<path fill="#a020f0" d="M1247 306H1248V308H1247Z"/>
<path fill="#a020f0" d="M1247 307H1249V309H1247Z"/>
<path fill="#a020f0" d="M1238 310H1240V312H1238Z"/>
<path fill="#a020f0" d="M1263 300H1265V302H1263Z"/>
<path fill="#a020f0" d="M1257 314H1258V316H1257Z"/>
<path fill="#a020f0" d="M1264 304H1266V306H1264Z"/>
<path fill="#a020f0" d="M1254 300H1256V302H1254Z"/>
<path fill="#a020f0" d="M1241 313H1243V315H1241Z"/>
<path fill="#a020f0" d="M1242 301H1244V303H1242Z"/>
<path fill="#a020f0" d="M1260 312H1261V314H1260Z"/>
<path fill="#a020f0" d="M1255 310H1257V312H1255Z"/>
<path fill="#a020f0" d="M1262 313H1263V315H1262Z"/>
<path fill="#a020f0" d="M1249 322H1250V324H1249Z"/>
<path fill="#a020f0" d="M1252 304H1254V306H1252Z"/>
<path fill="#a020f0" d="M1246 319H1248V321H1246Z"/>
<path fill="#a020f0" d="M1258 310H1260V312H1258Z"/>
<path fill="#a020f0" d="M1255 306H1256V307H1255Z"/>
<path fill="#a020f0" d="M1243 300H1245V301H1243Z"/>
<path fill="#a020f0" d="M1256 310H1258V312H1256Z"/>
<path fill="#a020f0" d="M1261 314H1263V316H1261Z"/>
<path fill="#a020f0" d="M1248 315H1250V317H1248Z"/>
<path fill="#a020f0" d="M1245 308H1247V310H1245Z"/>
<path fill="#a020f0" d="M1258 311H1260V313H1258Z"/>
<path fill="#a020f0" d="M1238 300H1240V302H1238Z"/>
<path fill="#a020f0" d="M1259 313H1261V315H1259Z"/>
<path fill="#a020f0" d="M1238 320H1240V321H1238Z"/>
<path fill="#a020f0" d="M1246 308H1248V310H1246Z"/>
<path fill="#a020f0" d="M1239 316H1241V317H1239Z"/>
<path fill="#a020f0" d="M1246 301H1248V303H1246Z"/>
<path fill="#a020f0" d="M1265 304H1267V306H1265Z"/>
<path fill="#a020f0" d="M1244 308H1245V309H1244Z"/>
<path fill="#a020f0" d="M1252 298H1254V300H1252Z"/>
<path fill="#a020f0" d="M1247 315H1249V317H1247Z"/>
<path fill="#a020f0" d="M1259 305H1260V307H1259Z"/>
<path fill="#a020f0" d="M1247 311H1249V312H1247Z"/>
<path fill="#a020f0" d="M1261 315H1263V317H1261Z"/>
<path fill="#a020f0" d="M1239 316H1240V317H1239Z"/>
<path fill="#a020f0" d="M1243 301H1245V302H1243Z"/>
<path fill="#a020f0" d="M1245 304H1247V306H1245Z"/>
<path fill="#a020f0" d="M1246 298H1248V300H1246Z"/>
<path fill="#a020f0" d="M1261 317H1263V319H1261Z"/>
<path fill="#a020f0" d="M1240 306H1242V307H1240Z"/>
<path fill="#a020f0" d="M1253 304H1254V306H1253Z"/>
<path fill="#a020f0" d="M1265 312H1266V314H1265Z"/>
<path fill="#a020f0" d="M1244 301H1246V303H1244Z"/>
<path fill="#a020f0" d="M1253 312H1255V313H1253Z"/>
<path fill="#a020f0" d="M1259 309H1261V311H1259Z"/>
<path fill="#a020f0" d="M1253 321H1255V323H1253Z"/>
<path fill="#a020f0" d="M1240 303H1242V305H1240Z"/>
<path fill="#a020f0" d="M1254 301H1256V303H1254Z"/>
<path fill="#a020f0" d="M1257 300H1259V302H1257Z"/>
<path fill="#a020f0" d="M1246 317H1248V318H1246Z"/>
<path fill="#a020f0" d="M1255 322H1257V323H1255Z"/>
<path fill="#a020f0" d="M1253 304H1255V306H1253Z"/>
<path fill="#a020f0" d="M1241 304H1243V306H1241Z"/>
<path fill="#a020f0" d="M1251 316H1252V317H1251Z"/>
<path fill="#a020f0" d="M1246 300H1248V301H1246Z"/>
<path fill="#a020f0" d="M1238 313H1240V315H1238Z"/>
<path fill="#a020f0" d="M1263 318H1265V319H1263Z"/>
<path fill="#a020f0" d="M1263 305H1265V307H1263Z"/>
<path fill="#a020f0" d="M1253 303H1255V305H1253Z"/>
<path fill="#a020f0" d="M1262 303H1263V305H1262Z"/>
<path fill="#a020f0" d="M1242 320H1244V322H1242Z"/>
<path fill="#a020f0" d="M1264 307H1265V309H1264Z"/>
<path fill="#a020f0" d="M1263 313H1264V315H1263Z"/>
<path fill="#a020f0" d="M1241 306H1243V308H1241Z"/>
<path fill="#a020f0" d="M1249 309H1251V311H1249Z"/>
<path fill="#a020f0" d="M1257 305H1259V307H1257Z"/>
<path fill="#a020f0" d="M1244 298H1246V300H1244Z"/>
<path fill="#a020f0" d="M1247 298H1248V300H1247Z"/>
<path fill="#a020f0" d="M1265 309H1266V310H1265Z"/>
<path fill="#a020f0" d="M1251 312H1253V314H1251Z"/>
<path fill="#a020f0" d="M1262 312H1263V314H1262Z"/>
<path fill="#a020f0" d="M1245 309H1247V310H1245Z"/>
<path fill="#a020f0" d="M1242 312H1244V314H1242Z"/>
<path fill="#a020f0" d="M1246 311H1247V313H1246Z"/>
<path fill="#a020f0" d="M1242 305H1244V307H1242Z"/>
<path fill="#a020f0" d="M1253 309H1255V311H1253Z"/>
<path fill="#a020f0" d="M1242 314H1244V316H1242Z"/>
<path fill="#a020f0" d="M1263 347H1265V348H1263Z"/>
<path fill="#a020f0" d="M1245 347H1247V349H1245Z"/>
<path fill="#a020f0" d="M1244 345H1246V347H1244Z"/>
<path fill="#a020f0" d="M1252 351H1254V352H1252Z"/>
<path fill="#a020f0" d="M1249 345H1251V347H1249Z"/>
<path fill="#a020f0" d="M1240 342H1242V344H1240Z"/>
<path fill="#a020f0" d="M1256 347H1258V349H1256Z"/>
<path fill="#a020f0" d="M1244 345H1246V347H1244Z"/>
<path fill="#a020f0" d="M1257 342H1259V343H1257Z"/>
<path fill="#a020f0" d="M1240 347H1242V349H1240Z"/>
<path fill="#a020f0" d="M1251 344H1253V346H1251Z"/>
<path fill="#a020f0" d="M1239 350H1240V351H1239Z"/>
<path fill="#a020f0" d="M1239 349H1241V350H1239Z"/>
<path fill="#a020f0" d="M1242 342H1244V344H1242Z"/>
<path fill="#a020f0" d="M1238 350H1240V352H1238Z"/>
<path fill="#a020f0" d="M1261 346H1262V348H1261Z"/>
<path fill="#a020f0" d="M1245 345H1246V346H1245Z"/>
<path fill="#a020f0" d="M1242 344H1244V346H1242Z"/>
<path fill="#a020f0" d="M1244 342H1246V343H1244Z"/>
<path fill="#a020f0" d="M1255 347H1256V348H1255Z"/>
<path fill="#a020f0" d="M1242 345H1244V347H1242Z"/>
<path fill="#a020f0" d="M1251 349H1253V351H1251Z"/>
<path fill="#a020f0" d="M1258 351H1260V353H1258Z"/>
<path fill="#a020f0" d="M1239 342H1241V344H1239Z"/>
<path fill="#a020f0" d="M1251 348H1253V349H1251Z"/>
<path fill="#a020f0" d="M1263 347H1265V348H1263Z"/>
<path fill="#a020f0" d="M1240 344H1242V346H1240Z"/>
<path fill="#a020f0" d="M1256 343H1258V345H1256Z"/>
<path fill="#a020f0" d="M1243 347H1244V348H1243Z"/>
<path fill="#a020f0" d="M1239 347H1241V348H1239Z"/>
<path fill="#a020f0" d="M1262 295H1263H1264V297H1265V302H1266H1267V303H1268V306V308H1269V307H1270V306H1271V310H1272V311V313H1273V312H1274V314H1275V313H1276V315V317H1277H1278V321H1279H1280V323V321H1281V327H1282V328H1283V329H1284V327H1285V332H1286V330H1287V328H1288V331H1289V332H1290V330H1291V332H1292V330H1293V329H1294V330H1295V329H1296V333V332H1297V329H1298H1299V333H1300V331V332H1301V331H1302H1303V329H1304V332V330H1305V332H1306V333H1307V331H1308H1309V332H1310V330H1311V334H1312V331V333H1313V330H1314V334H1315V333V334V342V343V341H1314V344H1313V342H1312V341V340H1311V343H1310V344H1309V340H1308V342V341H1307V340H1306V341H1305V340H1304V341H1303V343H1302V341H1301V340H1300V341H1299H1298V340H1297V339H1296V343H1295V338H1294V341H1293V340H1292V339V341H1291V342H1290V339H1289V340H1288V341V342H1287H1286V340H1285V338H1284V336V338H1283V336H1282V334H1281V333H1280V334V333H1279V331H1278H1277V325H1276V326V325H1275V322H1274V325H1273V320H1272V321V318H1271V316H1270V319H1269V317H1268V312V314H1267V310H1266V312H1265V307H1264V306H1263V304H1262Z"/>
<path fill="none" stroke="#a020f0" stroke-width="1.9" d="M1315 346.9H1331"/>
<path fill="#a020f0" d="M1332 324H1333V326H1334V328V331H1335V333H1336V335H1337V336H1338V340V341H1339V345H1340V347V349V347H1339V344H1338V342V340H1337V337H1336V335H1335V334H1334V330V329H1333V328H1332Z"/>
<path fill="#a020f0" d="M1344 327H1345V330H1346V332V333V337V335V332H1345V330H1344Z"/>
<path fill="#a020f0" d="M1349 300V298H1350V300H1351V301H1352V303H1353V306V304H1354V307H1355V310H1356V313H1357V311V316H1358V315H1359V319H1360H1361V322H1362V324H1363V326H1364V323H1365V325V328H1366V330H1367V331H1368V329H1369V331V332H1370V329H1371H1372V331H1373V329H1374H1375V333H1376V329H1377V330V332H1378V331H1379H1380V333H1381V329V331H1382V330H1383V333H1384V331H1385V330H1386H1387H1388V333H1389V331H1390V330H1391V332H1392V330V340V341H1391V339H1390V340H1389V342V340H1388H1387V341H1386V339H1385H1384V342H1383V340H1382V337H1381V340V341H1380V342H1379V338H1378V339H1377V340H1376V337H1375V341H1374V339H1373H1372H1371V337H1370V339H1369V340V337H1368V340H1367V339H1366V336H1365V335V332H1364V334H1363V329H1362H1361V328H1360V327H1359V325H1358V321H1357V320V318H1356V320H1355V315H1354V317H1353V313H1352V312H1351V308H1350V307H1349V305Z"/>
<path fill="none" stroke="#a020f0" stroke-width="1.9" d="M1391.5 346.9H1410L1413 340"/>
<path fill="#a020f0" d="M1414 336H1415V334H1416V330V328V332V334V336H1415V339H1414Z"/>
<path fill="#a020f0" d="M1420 295H1421V293H1422H1423V295V294H1424V298H1425V295H1426H1427V300V301H1428V299H1429V298H1430V301H1431V299V298H1432V301H1433V303H1434V301H1435V300V301H1436V304H1437V305H1438V303H1439V306V307H1440V303H1441V307H1442V309H1443V306H1444V310H1445V311H1446V309H1447V310H1448V312H1449V311H1450V313H1451V311H1452V313H1453H1454V316H1455V312V315H1456V317H1457V314H1458V317H1459V319V316H1460H1461V319H1462H1463V320H1464V321H1465V320H1466V319H1467V323V321H1468H1469V323H1470V324H1471V323V324H1472V326H1473V325H1474V326H1475V323V328H1476V324H1477V329H1478V326H1479V328V327H1480V330H1481H1482V327H1483V328V331H1484H1485V328H1486V329H1487V327V328H1488H1489H1490V332H1491V327V328H1492V329H1493V331H1494V329H1495V331H1496V328H1497H1498V331H1499V332V331H1500V330H1501V329H1502H1503V327V332H1504V330H1505V332H1506V330H1507V332V331H1508V329H1509V328H1510V329H1511V328V331H1512V330H1513V328H1514V330H1515V331H1516V330H1517V332H1518V330H1519V332V333H1520V331H1521V328H1522V330H1523V328V332H1524V331H1525V330H1526V328H1527V329V328H1528V330H1529V332H1530V333H1531V329H1532V331H1533V329H1534V330H1535V333H1536V332H1537H1538V331H1539V329V331H1540H1541V329H1542V331H1543V333V332H1544V330H1545V332H1546V329H1547V330V333H1548V330H1549H1550V331H1551V329H1552V332H1553V330H1554V333H1555V332H1556H1557H1558H1559V333V332H1560V329H1561V330H1562V331H1563H1564H1565V332H1566V333H1567V332V331H1568V333H1569H1570V330H1571V333V332H1572V329H1573V330H1574V331H1575V334H1576V333H1577V331H1578H1579V332V333H1580V336H1581V333H1582V334H1583V338V339H1584V338H1585V339H1586H1587V338V336H1588V338H1589H1590V337H1591V334H1592V336H1593H1594V334H1595V336V334H1596V331H1597V334H1598V333H1599V328V327H1600H1601V325H1602V323H1603V321V325H1604V326H1605V325H1606H1607V328V325H1608V327H1609V325H1610V327H1611V330H1612V336V339H1611V337V338H1610V336H1609V337H1608V336H1607V335H1606V332H1605V333H1604H1603V334V333H1602V335H1601H1600V337H1599V338H1598V340H1597V343H1596V341H1595V345V346H1594V347H1593V344H1592V348H1591V345V348H1590V347H1589H1588H1587V345V348H1586V349H1585H1584V345H1583V343H1582V344H1581V345H1580V341H1579V344V339H1578V341H1577H1576V339H1575V338V342H1574V339H1573V341H1572V338H1571V341V343H1570V342H1569H1568H1567V339V340H1566V342H1565V338H1564V340H1563V339V341H1562V340H1561V339H1560H1559V342V340H1558V339H1557H1556V341H1555V338V340H1554V338H1553H1552V339H1551V338V340H1550V341H1549V342H1548V339H1547V342V339H1546V341H1545V338H1544V342H1543V339H1542V342H1541V340H1540V342H1539V340V341H1538V340H1537V338H1536H1535V337V341H1534V338H1533V340H1532V337H1531V340V338H1530H1529V339H1528V338H1527V342V340H1526V341H1525V340H1524V341H1523V337V342H1522V340H1521V339H1520V342H1519V338V339H1518V340H1517V339H1516V338H1515V339V341H1514V338H1513V341H1512V340H1511V339H1510V340H1509H1508H1507V339H1506V337H1505V341H1504V338H1503V340H1502V339H1501V341H1500V338H1499V340H1498H1497V336H1496V341H1495V336V340H1494V339H1493V338H1492V336H1491V338V339H1490V340H1489V339H1488V337H1487V336V337H1486H1485V340H1484V341H1483V340H1482V339H1481V336H1480V337H1479V336H1478V335H1477H1476V336H1475V333V332H1474V333H1473H1472V335H1471V333V331H1470V332H1469V329H1468H1467V332V328H1466V330H1465V331H1464V328H1463V327V329H1462V326H1461V328H1460V327H1459V326V323H1458V327H1457V324H1456V323H1455V320H1454V323H1453V320H1452H1451V318V319H1450V320H1449V318H1448H1447V319V318H1446H1445V316H1444V318H1443V316V318H1442V316H1441H1440V315H1439V316V311H1438V312H1437V313H1436V312H1435V314V310H1434V309H1433V311H1432H1431V308H1430V309H1429V306H1428V305H1427V309V306H1426V304H1425V305H1424V303H1423V307V303H1422V305H1421V303H1420Z"/>
<path fill="none" stroke="#a020f0" stroke-width="1.9" d="M1612 346.9H1632"/>
<path fill="#a020f0" d="M1633 324H1634V341V346V348V343V326H1633Z"/>
</g>
<g clip-path="url(#cR_eff)">
<path fill="#000" d="M1004 380V379H1006V380H1008V379V378H1010V379H1012V377H1014V380V378H1016V377V380H1018V377V380H1020V379V380H1022V378H1024V380H1026V377V378H1028V377V379H1030V380V378H1032V380H1034V377V380H1036V377V378H1038V380H1040V379H1042V377V379H1044V378V377H1046V379H1048V380V379H1050V378H1052V380H1054H1056V379H1058V380H1060V379H1062V380H1064V379V380H1066V378V379H1068V380H1070V378H1072V379V380H1074V381V383H1076V382V384H1078V383V384H1080V381V382H1082V381H1084H1086V380H1088V381V379H1090V380H1092V381V380H1094V379V378H1096V380V379H1098V378V379H1100V378V377H1102V379H1104V380V378H1106V380V379H1108V387V386V385H1106V387V385H1104V388V385H1102V386V385H1100V386H1098V385V387H1096H1094V388V387H1092V388V387H1090V388H1088V386H1086V387H1084V386V389H1082V388V391H1080H1078V390V392H1076V391H1074V390V388H1072V387V388H1070H1068V387V388H1066V386V388H1064V387H1062V386H1060V388H1058V386V388H1056V387H1054H1052V386H1050V388H1048V387H1046V388V386H1044V388H1042V386V388H1040V386V388H1038V386V387H1036V388H1034V386H1032V387V386H1030V388V387H1028V388V387H1026H1024V386H1022V387V388H1020V387V386H1018V387V388H1016V387H1014V388H1012V386H1010V388V387H1008V386H1006V388H1004Z"/>
<path fill="none" stroke="#000" stroke-width="2" d="M1107.7 380.9H1217"/>
<path fill="none" stroke="#000" stroke-width="2" d="M1392 380.9H1412"/>
<path fill="#00b0ee" d="M1004 402H1006V404H1008V403V402H1010V403H1012H1014V404V402H1016V403H1018V402H1020V404V402H1022V404H1024V403V402H1026V403V404H1028V403H1030V402H1032H1034V404V402H1036V404V402H1038V403H1040V402V404H1042V403V404H1044V403V402H1046V403H1048H1050V402V404H1052V402V403H1054V402H1056V404V403H1058V402H1060V403H1062V404V403H1064H1066V402H1068V403H1070V402V403H1072V402V404H1074V403V404H1076V402V403H1078H1080V404H1082V402V403H1084V404H1086V403H1088V404V402H1090V403H1092V404H1094V402V403H1096H1098V404H1100V403V402H1102V404V402H1104V403V402H1106V403H1108V409V410H1106H1104H1102V409H1100V410H1098H1096H1094V409V410H1092V409V410H1090V409V410H1088V409H1086V410V409H1084V410H1082V409V410H1080H1078H1076V409V410H1074V409H1072H1070V410H1068V409H1066V410H1064V409H1062V410H1060V409H1058V410H1056H1054V409H1052V410H1050H1048V409V410H1046V409V410H1044H1042V409H1040V410V409H1038H1036V410V409H1034H1032V410H1030V409V410H1028V409H1026H1024V410V409H1022H1020V410V409H1018V410H1016V409H1014V410H1012V409V410H1010V409H1008H1006V410H1004V409Z"/>
<path fill="#00b0ee" d="M1205 401H1206V399H1207V397V398H1208V396H1209V391H1210V395H1211V389H1212V390H1213V387H1214V386H1215V387V385H1216V379H1217V378H1218V382H1219V378H1220V375H1221V379H1222V376H1223V375V377H1224V380H1225V375H1226V381H1227V376V378H1228H1229V380H1230V381H1231V377H1232V380H1233V379H1234V380H1235V381H1236H1237V378H1238V381H1239V382V379H1240V383H1241H1242V381H1243V384V382H1244V383H1245V382H1246V380H1247V382H1248V381H1249V379H1250H1251V384V382H1252V380H1253V382H1254V383H1255V379V380H1256V379H1257V384H1258V385H1259V381V382H1260V381H1261V385H1262V379H1263V380V381H1264V383H1265V382V381V393V397V393H1264V398H1263V397V398H1262V397H1261V394H1260V398H1259V397V394H1258V395H1257V399H1256V397H1255V394V393H1254V398H1253V395H1252H1251V397H1250V396H1249V394H1248V395H1247V398V393H1246V398H1245V397H1244V394H1243V398V396H1242V398H1241V395H1240V392H1239V393V397H1238V392H1237H1236V396H1235V392V393H1234H1233V391H1232V394H1231V393H1230V391H1229V393H1228H1227V391V393H1226V392H1225V395H1224V391H1223V389V393H1222V389H1221V388H1220V392H1219H1218V393H1217V398H1216V397H1215V398V399H1214H1213V400H1212V401H1211V403V407H1210V408H1209V410H1208V408H1207V409V414H1206V415H1205Z"/>
<path fill="#00b0ee" d="M1222 403H1223V405H1222Z"/>
<path fill="#00b0ee" d="M1207 407H1208V409H1207Z"/>
<path fill="#00b0ee" d="M1252 401H1253V403H1252Z"/>
<path fill="#00b0ee" d="M1258 404H1259V406H1258Z"/>
<path fill="#00b0ee" d="M1240 395H1242V396H1240Z"/>
<path fill="#00b0ee" d="M1231 397H1233V398H1231Z"/>
<path fill="#00b0ee" d="M1246 401H1248V403H1246Z"/>
<path fill="#00b0ee" d="M1239 396H1240V397H1239Z"/>
<path fill="#00b0ee" d="M1260 393H1262V395H1260Z"/>
<path fill="#00b0ee" d="M1258 392H1260V394H1258Z"/>
<path fill="#00b0ee" d="M1207 397H1209V399H1207Z"/>
<path fill="#00b0ee" d="M1216 398H1218V400H1216Z"/>
<path fill="#00b0ee" d="M1207 396H1208V398H1207Z"/>
<path fill="#00b0ee" d="M1207 400H1209V402H1207Z"/>
<path fill="#00b0ee" d="M1218 404H1219V406H1218Z"/>
<path fill="#00b0ee" d="M1233 396H1235V397H1233Z"/>
<path fill="#00b0ee" d="M1226 399H1227V401H1226Z"/>
<path fill="#00b0ee" d="M1233 395H1234V396H1233Z"/>
<path fill="#00b0ee" d="M1244 395H1246V397H1244Z"/>
<path fill="#00b0ee" d="M1233 394H1235V395H1233Z"/>
<path fill="#00b0ee" d="M1234 395H1235V396H1234Z"/>
<path fill="#00b0ee" d="M1261 402H1262V404H1261Z"/>
<path fill="#00b0ee" d="M1231 402H1232V403H1231Z"/>
<path fill="#00b0ee" d="M1251 398H1253V400H1251Z"/>
<path fill="#00b0ee" d="M1214 394H1215V396H1214Z"/>
<path fill="#00b0ee" d="M1237 394H1239V396H1237Z"/>
<path fill="#00b0ee" d="M1219 397H1220V398H1219Z"/>
<path fill="#00b0ee" d="M1232 404H1233V405H1232Z"/>
<path fill="#00b0ee" d="M1229 404H1231V405H1229Z"/>
<path fill="#00b0ee" d="M1223 395H1224V396H1223Z"/>
<path fill="#00b0ee" d="M1230 398H1232V400H1230Z"/>
<path fill="#00b0ee" d="M1228 394H1229V396H1228Z"/>
<path fill="#00b0ee" d="M1212 406H1213V407H1212Z"/>
<path fill="#00b0ee" d="M1240 399H1242V400H1240Z"/>
<path fill="#00b0ee" d="M1244 395H1246V397H1244Z"/>
<path fill="#00b0ee" d="M1251 395H1253V397H1251Z"/>
<path fill="#00b0ee" d="M1248 405H1250V406H1248Z"/>
<path fill="#00b0ee" d="M1238 406H1239V408H1238Z"/>
<path fill="#00b0ee" d="M1237 401H1239V403H1237Z"/>
<path fill="#00b0ee" d="M1227 403H1229V405H1227Z"/>
<path fill="#00b0ee" d="M1219 403H1220V405H1219Z"/>
<path fill="#00b0ee" d="M1225 407H1226V408H1225Z"/>
<path fill="#00b0ee" d="M1232 401H1233V402H1232Z"/>
<path fill="#00b0ee" d="M1247 398H1248V399H1247Z"/>
<path fill="#00b0ee" d="M1210 395H1212V397H1210Z"/>
<path fill="#00b0ee" d="M1254 393H1256V395H1254Z"/>
<path fill="#00b0ee" d="M1257 396H1258V398H1257Z"/>
<path fill="#00b0ee" d="M1216 397H1218V398H1216Z"/>
<path fill="#00b0ee" d="M1212 402H1213V403H1212Z"/>
<path fill="#00b0ee" d="M1235 395H1237V397H1235Z"/>
<path fill="#00b0ee" d="M1252 405H1253V406H1252Z"/>
<path fill="#00b0ee" d="M1255 398H1257V399H1255Z"/>
<path fill="#00b0ee" d="M1259 406H1260V408H1259Z"/>
<path fill="#00b0ee" d="M1260 395H1261V396H1260Z"/>
<path fill="#00b0ee" d="M1254 407H1256V409H1254Z"/>
<path fill="#00b0ee" d="M1247 407H1248V408H1247Z"/>
<path fill="#00b0ee" d="M1248 398H1249V399H1248Z"/>
<path fill="#00b0ee" d="M1262 405H1263V407H1262Z"/>
<path fill="#00b0ee" d="M1249 405H1251V407H1249Z"/>
<path fill="#00b0ee" d="M1209 402H1211V403H1209Z"/>
<path fill="#000" d="M1265 377H1266V379H1267V378V380H1268H1269V379H1270H1271V381H1272H1273H1274V383H1275V384V382H1276V384H1277H1278H1279V385V387H1280V385H1281V384H1282V387H1283V386V384H1284H1285H1286H1287V385V384H1288V386H1289V384H1290V383H1291V385V383H1292V384H1293V385H1294V384H1295V382H1296H1297V381H1298V382H1299V383V382H1300V383H1301V382H1302V380H1303V381V380H1304H1305H1306V381H1307V379H1308V380H1309V381H1310V379H1311V381V380H1312V379H1313V380H1314H1315V378V379V388V386V387H1314H1313V388H1312V386H1311V387V388H1310V389H1309V388H1308V389H1307V390V388H1306V390H1305V388H1304H1303V390V391H1302V389H1301V390H1300V391H1299V392V391H1298H1297V392H1296H1295V391H1294V392H1293V390H1292V392H1291V393H1290V391H1289V392H1288H1287V391V393H1286V392H1285V394H1284V392H1283V394V392H1282V393H1281V394H1280H1279H1278H1277V393H1276V392H1275V390V391H1274V389H1273V388H1272H1271H1270V389H1269V386H1268V388H1267V386V387H1266V386H1265Z"/>
<path fill="#00b0ee" d="M1265 375H1266H1267V376V378H1268V382H1269V381H1270V382H1271V385V387H1272V388H1273V389H1274V390H1275V389V393H1276V392H1277V394H1278H1279V398V399H1280V400H1281H1282V399H1283V400H1284V398H1285H1286V399H1287V397V400H1288V398H1289V399H1290V401H1291V399V398H1292H1293V399H1294H1295V400V399H1296H1297V398H1298V400H1299V401H1300V399H1301V398H1302V399H1303H1304H1305H1306V401H1307V400H1308V401H1309V398H1310V399H1311V400V401H1312V399H1313H1314V400H1315V399V401V409V410V407H1314V409H1313H1312V407H1311V408H1310V409H1309H1308V407H1307V409V407H1306H1305V406H1304H1303H1302V409H1301H1300V407H1299V406V409H1298V407H1297V406H1296H1295V407V408H1294V409H1293V408H1292V409H1291V407V408H1290V409H1289V407H1288H1287H1286V406H1285V409H1284V407H1283V408V406H1282V408H1281H1280V406H1279V402H1278V401H1277V400H1276V399H1275V397H1274V396H1273V395H1272V392H1271V393V392H1270V391H1269V387H1268V386H1267V388V384H1266H1265Z"/>
<path fill="#00b0ee" d="M1332 371H1333V377H1334V382H1335V387H1336V393V398H1337V402H1338V406V409V405H1337V401H1336V396V390H1335V386H1334V378H1333V373H1332Z"/>
<path fill="#000" d="M1352 380H1353V381H1354V379H1355V381H1356V380H1357V379H1358V381H1359V380H1360V379H1361V381H1362H1363H1364V379H1365V381H1366V379H1367H1368V380H1369V381H1370V380H1371H1372V381H1373H1374V379H1375V381H1376V379H1377V381H1378V379H1379H1380V380H1381V381H1382V380H1383H1384H1385V379H1386V381H1387V379H1388V381H1389H1390H1391V379H1392V380V389H1391V387H1390V390H1389V388H1388H1387V389H1386V388H1385H1384H1383V389H1382V387H1381V389H1380V390H1379V389H1378H1377V387H1376V389H1375H1374V388H1373V387H1372V389H1371V387H1370H1369V388H1368V390H1367V389H1366V388H1365H1364H1363V390H1362V388H1361V389H1360H1359H1358H1357H1356V390H1355V388H1354V390H1353H1352Z"/>
<path fill="#00b0ee" d="M1345 378H1346H1347V377H1348V379H1349V378H1350H1351V382V379H1352V381H1353V384H1354V383H1355V384V385H1356V382H1357V383H1358V385H1359V386V387H1360V388H1361H1362V387H1363V386V387H1364V386H1365V388H1366V390H1367V389V390H1368H1369H1370V391H1371V390V394H1372H1373V395H1374V392H1375V395V393H1376V394H1377V396H1378V395H1379V396H1380V397H1381H1382V395H1383V398V396H1384V399H1385V396H1386V397H1387V399H1388V397H1389V401H1390V399H1391V400H1392V402V408V409H1391V408V405H1390H1389V407H1388H1387V405H1386V404H1385V405H1384V404H1383V406H1382V403H1381V406H1380V402H1379V401V404H1378V401H1377H1376H1375V403H1374H1373V402H1372V399H1371V398V399H1370V401H1369V400H1368H1367V398V397H1366V395H1365V397H1364V394H1363V397V396H1362V393H1361H1360H1359V394V392H1358H1357V391H1356V392H1355V393V391H1354H1353V388H1352V390H1351V387V388H1350V387H1349V385H1348V387H1347V384H1346V383H1345Z"/>
<path fill="#000" d="M1425 377H1426H1427H1428H1429V378H1430V377H1431H1432H1433V380H1434V379H1435V380H1436V379H1437V378H1438V377H1439V379H1440V378H1441H1442V379H1443V378H1444V379H1445H1446V378H1447V380H1448H1449V378H1450H1451V379H1452V377H1453V378H1454V379H1455V378H1456V377H1457V378H1458V380H1459V378H1460V379H1461V378H1462V380H1463H1464V379H1465H1466V378H1467V379H1468V380H1469V379H1470H1471V378H1472V379H1473V378H1474V377H1475V379H1476H1477H1478V380H1479V379H1480V378H1481V380H1482V378H1483V379H1484H1485V377H1486V380H1487H1488V377H1489V378H1490H1491V379H1492H1493V378H1494H1495V377H1496V378H1497V380H1498V377H1499H1500V378H1501V380H1502V379H1503H1504V378H1505V380H1506V378H1507V380H1508V377H1509V380H1510V379H1511V380H1512V379H1513V378H1514H1515H1516V380H1517V379H1518V377H1519V379H1520V378H1521V379H1522H1523V377H1524V378H1525V377H1526V380H1527V379H1528V377H1529V379H1530V377H1531V380H1532V379H1533H1534H1535V377H1536V378H1537V379H1538V377H1539V379H1540V378H1541V377H1542V380H1543V377H1544V380H1545V379H1546V378H1547H1548V380H1549V378H1550V377H1551V380H1552V379H1553V377H1554V380H1555V379H1556V380H1557V379H1558V378H1559V380H1560V378H1561V379H1562V378H1563V377H1564V378H1565V379H1566V378H1567H1568V379H1569V378H1570V377H1571V379H1572V377H1573V379H1574H1575H1576H1577H1578V377H1579V379H1580V378H1581V380H1582V379H1583H1584V377H1585V378H1586V379H1587H1588V380H1589V377H1590V378H1591V379H1592V380H1593V379H1594V380H1595V378H1596V380H1597H1598H1599V377H1600V378H1601H1602H1603V379H1604V378H1605V379H1606H1607V380H1608V378H1609H1610V380H1611V379H1612V388V387H1611V386H1610V388H1609V387H1608H1607H1606V388H1605V387H1604V388H1603V386H1602V387H1601V388H1600V387H1599V388H1598V386H1597H1596H1595V388H1594V387H1593V386H1592H1591H1590V387H1589H1588V388H1587H1586V386H1585V388H1584V387H1583V388H1582H1581V386H1580H1579V388H1578V387H1577V388H1576H1575H1574H1573V386H1572H1571H1570H1569H1568H1567H1566V387H1565H1564H1563H1562V386H1561V387H1560V388H1559V386H1558V387H1557V386H1556H1555V388H1554V387H1553V388H1552V387H1551V388H1550V386H1549H1548V387H1547H1546V388H1545H1544V386H1543H1542H1541H1540V388H1539H1538H1537V386H1536H1535H1534V387H1533V388H1532V387H1531V386H1530V387H1529V388H1528H1527V387H1526V388H1525V386H1524H1523H1522V388H1521V387H1520V388H1519V387H1518V388H1517H1516V387H1515V388H1514V386H1513V388H1512H1511V387H1510V388H1509V386H1508V387H1507V388H1506V386H1505V388H1504V387H1503V388H1502H1501V387H1500V388H1499V386H1498V387H1497V388H1496H1495H1494V387H1493V388H1492H1491V387H1490H1489V386H1488V388H1487V386H1486H1485H1484V387H1483V386H1482V387H1481H1480H1479H1478H1477H1476H1475V386H1474V388H1473H1472H1471V386H1470V388H1469V386H1468V387H1467V386H1466H1465H1464V387H1463V386H1462V388H1461H1460V387H1459V386H1458V388H1457H1456V386H1455V388H1454V386H1453H1452V387H1451H1450H1449V388H1448V386H1447V387H1446H1445V388H1444H1443V387H1442V386H1441H1440V387H1439V388H1438H1437H1436H1435H1434V387H1433V386H1432V388H1431V387H1430V388H1429H1428V387H1427V386H1426V388H1425Z"/>
<path fill="#00b0ee" d="M1412 395H1413V390H1414V384V379H1415V374H1416V375H1417V376H1418V375H1419V376H1420V377H1421V376H1422V378V376H1423V378H1424V375H1425V377H1426V376H1427V379H1428V377H1429H1430V378V379H1431V378H1432V379H1433H1434V381V380H1435V383H1436V382H1437V383H1438V384H1439V383H1440V381H1441V382H1442V384V383H1443V384H1444V386H1445V384H1446V387H1447V385H1448V386H1449V385H1450V384V385H1451V387H1452V386H1453H1454V389H1455H1456H1457V387H1458V389V390H1459H1460V389H1461V388H1462V392H1463V389H1464V391H1465V392H1466V390V391H1467V393H1468V391H1469V393H1470V391H1471V395H1472V394H1473V395H1474H1475V393H1476H1477V396H1478V397V395H1479H1480V396H1481H1482V394H1483V397H1484V398H1485H1486V396H1487V398H1488V395H1489V397H1490V395H1491V398H1492V396H1493V397H1494V396H1495V397H1496V396H1497V398H1498V397V396H1499V397H1500H1501V396H1502V397V398H1503V399H1504V397H1505H1506V398H1507H1508V399H1509V397H1510H1511V398H1512H1513H1514V399V398H1515V400H1516V399H1517V398H1518V399V398H1519H1520V396H1521V399H1522V397V398H1523V399H1524V397H1525V400H1526V397V400H1527H1528H1529V398H1530V400V398H1531H1532V399H1533V400H1534V398V400H1535V399H1536V400H1537H1538V398V400H1539V399H1540H1541H1542V398H1543V400H1544V401H1545V400H1546V401V400H1547H1548H1549V401H1550V400H1551V398H1552V401H1553V399H1554V400V399H1555V397H1556V398H1557V401H1558V399H1559V397H1560V399H1561H1562V400V399H1563V397H1564V400H1565V401H1566V400V398H1567V400H1568V399H1569V401H1570V399V400H1571V401H1572V400H1573H1574V398V401H1575V399H1576V401H1577V399H1578V401V399H1579V398H1580V401H1581V399H1582V401H1583V398H1584V401H1585V399H1586V400V398H1587H1588V400H1589V398H1590V400V401H1591H1592V400H1593H1594V398V399H1595V401H1596H1597V400H1598V399H1599V400H1600H1601V398H1602V399V400H1603V401H1604H1605V399H1606V398V400H1607V401H1608V399H1609V402H1610V400V399H1611H1612V402V408H1611V407H1610V408V407H1609V408H1608V407H1607V410H1606V407V409H1605V407H1604V409H1603V406H1602H1601V408H1600V407H1599V406H1598V409V408H1597H1596V407H1595V410H1594V409V406H1593V408H1592H1591V406H1590V409V406H1589V409H1588V407H1587V409H1586V406V407H1585V408H1584V409H1583V407H1582V409H1581V407H1580H1579V409H1578V408H1577V409H1576H1575V407H1574V406V409H1573H1572V408H1571V406H1570V405H1569V406H1568V408H1567V409H1566V406H1565V408H1564H1563V409H1562V406V409H1561V406H1560V408H1559V405H1558V408H1557H1556V406H1555V405H1554V406V408H1553V409H1552V406H1551V408H1550V406V409H1549V407H1548H1547V406H1546V407V409H1545V406H1544V408H1543H1542V407V405H1541V407H1540V406H1539V405H1538V408V405H1537V407H1536H1535V408H1534V407V408H1533V406H1532V407H1531V408H1530V406H1529V408H1528V405H1527V408H1526V405V406H1525V408H1524V406H1523V408H1522V406H1521V407H1520V405H1519V407H1518V408V407H1517H1516V404H1515H1514V406V407H1513V405H1512V404H1511H1510V406V404H1509V405H1508H1507V404H1506V407H1505V406H1504H1503V407H1502V405H1501V404H1500H1499H1498V406V403H1497V405H1496H1495V404H1494V403V406H1493V404H1492V405H1491V406H1490V404H1489V403H1488V402H1487V406H1486V403H1485V405H1484V404H1483V406H1482V403H1481V405H1480H1479V404H1478V401H1477V403H1476V401H1475V402H1474H1473V403H1472V401H1471V400H1470V402V400H1469V399H1468V402H1467V398H1466V400V401H1465V400H1464V399H1463V398H1462V400V397H1461V396H1460V399H1459V396H1458V395V397H1457V394H1456V395H1455H1454V394V396H1453H1452H1451V394H1450V395H1449H1448V394H1447V395H1446V392H1445V394H1444V391H1443V392H1442V393V391H1441V390H1440V391H1439V389H1438V391H1437H1436V388H1435V389H1434V390H1433V388H1432V389H1431V387H1430V389H1429V386H1428V388H1427V385H1426V384V386H1425V385H1424V386H1423V387H1422V385V384H1421V383H1420V385H1419V382H1418V383H1417V382H1416V381H1415V385H1414V391V396H1413V400H1412Z"/>
<path fill="none" stroke="#000" stroke-width="2" d="M1612 386.3H1636.5"/>
<path fill="none" stroke="#00b0ee" stroke-width="2.0" d="M1003.5 409.6H1636.5"/>
</g>
<g clip-path="url(#cR_ecl)">
<path fill="#008a44" d="M1004 413H1006H1008H1010H1012H1014H1016H1018H1020H1022H1024H1026H1028H1030H1032H1034H1036H1038H1040H1042H1044H1046H1048H1050H1052H1054H1056H1058H1060H1062H1064H1066H1068H1070H1072H1074H1076H1078H1080H1082H1084H1086H1088H1090H1092H1094H1096H1098H1100H1102H1104H1106H1108V482V488V480H1106V482H1104V483H1102V491V488H1100V479H1098V481H1096V478V484H1094V477H1092V478V482H1090V481H1088V482H1086V480H1084V482V488H1082V481V484H1080V489V481H1078V478H1076V481V478H1074V487V485H1072V478V477H1070V480V481H1068V489V482H1066V478V483H1064V481V478H1062V481V490H1060V485V481H1058V480H1056V483V478H1054V481H1052V479H1050V482V477H1048V490V481H1046V486V481H1044V483V482H1042V484V481H1040V482V478H1038V490V478H1036V480V486H1034V482V490H1032V481H1030V482H1028V481V479H1026V481H1024V480V481H1022V477V483H1020V490V478H1018V480H1016V483H1014V481H1012V485V491H1010V482V487H1008V481V480H1006V482V479H1004Z"/>
<path fill="none" stroke="#008a44" stroke-width="1.3" d="M1110 414V498.9"/>
<path fill="none" stroke="#008a44" stroke-width="1.5" d="M1107 498.9H1636.5"/>
<path fill="#008a44" d="M1207 498H1208V497H1209V498H1210V497H1211V495H1212V494H1213V492H1214V490H1215V491H1216V490H1217V488H1218V486H1219H1220V487H1221V488H1222V489H1223H1224V488H1225V489H1226V491H1227H1228V490H1229H1230V489H1231H1232H1233V490H1234V488H1235V490H1236V489H1237V493V492H1236V499H1235V492H1234V499H1233V493H1232V492H1231V499H1230H1229V492H1228V493H1227V492H1226V493H1225V492H1224V499H1223V490H1222V491H1221V499H1220H1219V488H1218V499H1217H1216V493H1215V494H1214V496H1213H1212V499H1211H1210V500H1209V499H1208V500H1207Z"/>
<path fill="none" stroke="#008a44" stroke-width="1.3" d="M1230 489V444.3"/>
<path fill="#008a44" d="M1237 478H1238V493H1239V476H1240V479H1241V478H1242V475H1243V495H1244V476H1245V488H1246V475H1247V496H1248V476H1249V478H1250V475H1251V492H1252V474H1253V488H1254V475H1255V474H1256V494H1257V496H1258V474H1259V494H1260V488H1261V477H1262V491H1263V489H1264V485H1265V473V499H1264H1263H1262H1261H1260H1259H1258H1257H1256H1255H1254H1253H1252H1251H1250H1249H1248H1247H1246H1245H1244H1243H1242H1241H1240H1239H1238H1237Z"/>
<path fill="#008a44" d="M1262 490H1263V486H1264V483H1265V478H1266V476H1267V470H1268V468H1269V461H1270V454H1271V446H1272V439H1273V431H1274V424H1275V415V499V429H1274V437H1273V444H1272V499H1271H1270V466H1269V474H1268V499H1267V481H1266V483H1265V499H1264H1263V494H1262Z"/>
<path fill="#008a44" d="M1275 413H1276H1277H1278H1279H1280V500V495H1279V498H1278V493H1277V497H1276V493H1275Z"/>
<path fill="#008a44" d="M1281 413H1282H1283H1284H1285H1286H1287H1288H1289H1290H1291H1292H1293V492V497H1292V495H1291V499H1290V495H1289V492H1288V496H1287V495H1286V497H1285V495H1284V492H1283V493H1282V492H1281Z"/>
<path fill="#008a44" d="M1296 413H1297H1298H1299H1300H1301H1302H1303H1304H1305H1306V499V492V490H1305H1304V496H1303V491H1302V496H1301V491H1300V493H1299V492H1298V491H1297V494H1296Z"/>
<path fill="none" stroke="#008a44" stroke-width="1.5" d="M1312.5 414V498.9"/>
<path fill="none" stroke="#008a44" stroke-width="1.3" d="M1313 414V498.9"/>
<path fill="#008a44" d="M1329 496H1330V499H1331V492H1332V494H1333V492H1334V491H1335V485H1336H1337H1338V482H1339V481H1340V477H1341V474H1342V472H1343V466H1344V464H1345V461H1346V456H1347V452H1348V447H1349V445H1350V448H1351V443H1352V442H1353V440H1354V441H1355V439H1356V437H1357V436H1358V432H1359V428H1360V425H1361V419H1362V413V499V427H1361V499H1360V436H1359V439H1358V441H1357V444H1356V499H1355V447H1354V449H1353V450H1352V453H1351V455H1350H1349V457H1348V499H1347V464H1346V468H1345V472H1344V474H1343V478H1342V481H1341V485H1340V499H1339V488H1338V499H1337H1336V493H1335V496H1334V499H1333V501H1332V503H1331V500H1330V507H1329Z"/>
<path fill="none" stroke="#008a44" stroke-width="1.6" d="M1364 414V488"/>
<path fill="none" stroke="#008a44" stroke-width="1.6" d="M1367 414V488"/>
<path fill="none" stroke="#008a44" stroke-width="1.6" d="M1370 414V488"/>
<path fill="none" stroke="#008a44" stroke-width="1.6" d="M1373 414V488"/>
<path fill="#008a44" d="M1377 413H1378H1379H1380H1381H1382H1383H1384H1385H1386H1387H1388H1389H1390H1391V487V485H1390V484H1389V486H1388V485H1387V484H1386V485H1385V486H1384V487H1383V484H1382H1381V485H1380V486H1379V484H1378V485H1377Z"/>
<path fill="#008a44" d="M1410 497H1411V496H1412V493H1413V495H1414V488H1415V486H1416V485H1417V484H1418V480H1419V477H1420V472H1421V473H1422V469H1423V463H1424V456H1425V449H1426V438H1427V432H1428V427H1429V419H1430V412V499H1429H1428H1427V447H1426V455H1425V499H1424V469H1423V475H1422V478H1421V481H1420V484H1419V487H1418V489H1417V492H1416V495H1415V498H1414V499H1413H1412V505H1411V508H1410Z"/>
<path fill="#008a44" d="M1430 413H1431H1432H1433H1434H1435H1436H1437H1438H1439H1440H1441H1442H1443H1444H1445H1446H1447H1448H1449V449H1450V413H1451H1452H1453H1454H1455H1456H1457H1458H1459H1460H1461H1462H1463H1464H1465H1466H1467H1468H1469H1470H1471H1472H1473H1474H1475H1476H1477H1478V449H1479V413H1480H1481H1482H1483H1484H1485H1486H1487H1488H1489H1490H1491H1492H1493H1494H1495H1496H1497H1498H1499H1500H1501H1502H1503H1504H1505H1506H1507H1508H1509H1510H1511H1512H1513H1514H1515H1516V455H1517V413H1518H1519H1520H1521H1522H1523H1524H1525H1526H1527H1528H1529H1530H1531H1532H1533H1534H1535H1536H1537H1538H1539H1540H1541H1542H1543H1544H1545H1546H1547H1548H1549H1550H1551H1552H1553H1554H1555V456H1556V413H1557H1558H1559H1560H1561H1562H1563H1564H1565V439H1566V413H1567H1568H1569H1570H1571H1572H1573H1574H1575V482V483H1574V486H1573V484H1572V481H1571H1570V487H1569V486H1568V483H1567V484H1566H1565H1564V494H1563V484H1562V485H1561V483H1560H1559V487H1558V484H1557V494H1556V487H1555H1554V482H1553V488H1552H1551V487H1550H1549V484H1548V492H1547V486H1546V484H1545H1544V487H1543V485H1542V487H1541H1540V488H1539V487H1538V485H1537V486H1536V485H1535V486H1534V497H1533V485H1532V499H1531V489H1530H1529V486H1528H1527V493H1526V488H1525V490H1524V493H1523V488H1522V489H1521V487H1520H1519V485H1518V490H1517V486H1516H1515V491H1514V490H1513V487H1512V486H1511V488H1510V487H1509H1508V489H1507V490H1506V486H1505V490H1504V486H1503H1502V499H1501V489H1500V491H1499V487H1498V490H1497V489H1496V487H1495V486H1494V496H1493V488H1492V491H1491V495H1490V490H1489V491H1488V488H1487V489H1486V491H1485V492H1484H1483V493H1482V492H1481V493H1480V491H1479V492H1478V493H1477V488H1476H1475V492H1474V491H1473V488H1472V492H1471V493H1470V498H1469V491H1468V488H1467V491H1466H1465V492H1464V494H1463V493H1462V494H1461V491H1460V492H1459V491H1458H1457H1456V499H1455V491H1454V494H1453V490H1452H1451V494H1450V493H1449V496H1448V495H1447V494H1446V497H1445V495H1444V494H1443V495H1442V492H1441V496H1440V492H1439V494H1438V497H1437V492H1436V494H1435V493H1434V495H1433V494H1432V495H1431H1430Z"/>
<path fill="#008a44" d="M1594 413H1595H1596H1597H1598H1599H1600H1601H1602H1603H1604H1605H1606H1607H1608H1609H1610H1611V487V486V490H1610H1609H1608V487H1607V486H1606V489H1605H1604V487H1603V490H1602V485H1601V488H1600V485H1599V486H1598H1597H1596V485H1595V487H1594Z"/>
<path fill="none" stroke="#008a44" stroke-width="1.3" d="M1611.5 414V498.9"/>
<path fill="#008a44" d="M1628 499H1629V495H1630H1631V492H1632V489H1633V487V491V499H1632H1631V498H1630V500H1629V499H1628Z"/>
<path fill="none" stroke="#fff" stroke-width="1.1" d="M1048.3 415V458"/>
<path fill="none" stroke="#fff" stroke-width="1.1" d="M1055 415V458"/>
<path fill="none" stroke="#fff" stroke-width="1.1" d="M1062.8 415V458"/>
<path fill="none" stroke="#fff" stroke-width="1.1" d="M1070.5 415V458"/>
<path fill="none" stroke="#fff" stroke-width="1.1" d="M1009 415V458"/>
<path fill="#fff" d="M1516 415H1517V470H1516Z"/>
<path fill="#fff" d="M1527 415H1529V470H1527Z"/>
<path fill="#fff" d="M1535 415H1538V470H1535Z"/>
<path fill="#fff" d="M1283 415H1286V470H1283Z"/>
</g>
<g clip-path="url(#cR_ms)">
</g>
<g clip-path="url(#cR_pho)">
<path fill="none" stroke="#ffa500" stroke-width="1.3" d="M1107.7 669.4H1636.5"/>
</g>
<g clip-path="url(#cR_top)">
<path fill="none" stroke="#4878f0" stroke-width="1.3" d="M1001.5 669.1H1010L1012.4 694.8L1014 671.8L1015 669.1H1107V754H1263.5V739.5L1269.3 711.5L1283.5 708.6L1297.7 695.9L1308.3 682.8L1312.7 683.4V754H1350.1V718.3L1360 709.6L1371.4 690.3L1374.9 684.7L1390 686.5V754H1422.8L1424 731.3L1435.2 710.8L1438.7 705.2V754H1462.6L1468.8 710.8L1472.4 692.1L1490 687.6L1514 688.4L1520.2 673.5L1532.6 669.1H1611.5V754H1634.5"/>
<path fill="#4878f0" d="M1264 738V734H1266V729V722H1268V714V711H1270V709V706H1272V707H1274V706V708H1276V707V705H1278V707V706H1280V705V706H1282V705V708H1284V703V705H1286V702V703H1288V702H1290V701V699H1292V698V699H1294V695H1296V693V694H1298V695V693H1300V692V688H1302V689V685H1304V686V684H1306V681H1308V683V681H1310V679H1312V677V678H1313V685V689H1312V685V689H1310V687H1308V689H1306V688H1304V693V694H1302V696V697H1300V696V699H1298V698V699H1296V701H1294V705V704H1292V705V708H1290V706V709H1288V707V711H1286V710V708H1284V714V710H1282V712V711H1280V713V710H1278V715H1276V714H1274V717V712H1272V716V715H1270V717H1268V721V726H1266V731V738H1264V743Z"/>
<path fill="#4878f0" d="M1350 714H1351V713H1352V715H1353V713H1354V711H1355V709H1356V708H1357V706H1358V711H1359V706H1360V705H1361V706H1362V703H1363V699H1364V701H1365V700H1366V694H1367V697H1368V694H1369V689H1370V687H1371V689H1372V688H1373V685H1374H1375V683H1376V680H1377V684H1378V680H1379V681H1380V680H1381V682H1382V685H1383V682H1384V684H1385H1386H1387V682H1388V681H1389V682H1390V684V688V691H1389V688H1388H1387V687H1386V688H1385V691H1384V690H1383V686H1382V687H1381V688H1380V687H1379V689H1378V691H1377V688H1376V689H1375H1374V692H1373H1372H1371V696H1370V699H1369V700H1368H1367V703H1366V705H1365H1364V707H1363H1362V713H1361V715H1360H1359H1358V716H1357H1356H1355V717H1354V716H1353V721H1352V719H1351V724H1350Z"/>
<path fill="#4878f0" d="M1424 728V727H1426V724H1428V719H1430V718H1432V713V712H1434V713V709H1436V708V703H1438V706V704H1439V707V709H1438V711V712H1436V713H1434V716V718H1432V720V722H1430V726V724H1428V730V728H1426V733V736H1424V738Z"/>
<path fill="#4878f0" d="M1464 736V730H1466V726V721H1468V715V707H1470V705V700H1472V691V688H1474V690V688H1476H1478V686V685H1480V688V684H1482V688V684H1484V686V685H1486V687H1488V685H1490V682V683H1492V685H1494V687V686H1496V682V685H1498V683V684H1500V687V683H1502V687V686H1504V682V683H1506H1508V686V685H1510V686V685H1512V687V683H1514H1516V681V679H1518V676V674H1520V668H1522V669V667H1524V668H1526V667V672V671V677H1524V672V673H1522V676H1520V680H1518V685V688H1516V689V692H1514V694V693H1512V689H1510V694V691H1508V690V692H1506V691V693H1504V689H1502V693H1500V692H1498V693V690H1496V692V690H1494V692V688H1492V694H1490V691V689H1488V691V693H1486V695V690H1484V691V696H1482V695H1480V693V694H1478V696H1476V694V697H1474V693H1472V699V707H1470V710V718H1468V720V725H1466V734V736H1464V745Z"/>
</g>
<g clip-path="url(#cR_cdc)">
<path fill="#008000" d="M1002 763V765H1004V760V764H1006V760V761H1008V763V762H1010V763V762H1012V763H1014V759H1016V764V763H1018V765V764H1020V759V765H1022V764V760H1024V764V765H1026V764H1028V761H1030V765H1032V764H1034V763V761H1036V763V759H1038V760V762H1040V764V763H1042V761H1044V764H1046V761V764H1048V765V762H1050V760V759H1052V763V764H1054V760V761H1056V764V760H1058V763V762H1060H1062V765H1064V760V764H1066V766V761H1068V762H1070V765H1072V760H1074V765V764H1076V761V760H1078V763V764H1080V765V760H1082V765V759H1084V765V760H1086V764H1088V762H1090V765V764H1092V761V760H1094V764H1096V765V764H1098V765V762H1100V764V763H1102V764V761H1104V765V760H1106V764V761H1107V762V785V780H1106V791V780H1104V783H1102V780H1100V794V786H1098V785V795H1096V783V780H1094V787V786H1092V784V780H1090V786H1088V784H1086V781V784H1084V785V787H1082V780V784H1080V793V786H1078V784V783H1076V796V781H1074V785V781H1072V783V789H1070V786V783H1068V781V783H1066V787V786H1064V793V783H1062V782V781H1060V784V780H1058V784V781H1056V780V781H1054V784V782H1052V784H1050V781H1048V780V783H1046V784V782H1044V797V782H1042V784V780H1040V782V784H1038V782V788H1036V785V786H1034V783V781H1032V783V780H1030V793V797H1028V780V789H1026V792V780H1024V785V781H1022V785V794H1020V782V787H1018V782V783H1016V784V788H1014V783V794H1012V791V782H1010V784V795H1008V782V783H1006V794V781H1004V783H1002V781Z"/>
<path fill="#008000" d="M1264 794V797H1266V796H1268V797V792H1270V795V792H1272V795V791H1274V793V792H1276V793H1278V794V791H1280V792V790H1282V793H1284V792H1286V788V787H1288H1290V786V787H1292V786V789H1294H1296V784V785H1298V788V784H1300V788V786H1302V783V786H1304V781V783H1306V782V783H1308V785H1310V779V785H1312V782V780H1313V782V814H1312V812V809H1310V813V812H1308V810V815H1306V810V814H1304V811V833H1302V813V811H1300V813V812H1298V820V813H1296V810V812H1294V813V810H1292V813H1290V823V809H1288V824V811H1286V813V814H1284V817V812H1282V813H1280V814H1278V813V811H1276V812V819H1274V813V811H1272V813V827H1270V811V813H1268V811V812H1266V809V811H1264V828Z"/>
<path fill="#008000" d="M1350 803H1351V801H1352V796H1353V800H1354V799H1355V794H1356H1357V796H1358V795H1359V793H1360V794H1361V791H1362V794H1363V792H1364V788H1365V787H1366V790H1367V791H1368V789H1369V787H1370V788H1371V782H1372V787H1373V784H1374V783H1375V782H1376V783H1377V784H1378V781H1379V784H1380V785H1381V781H1382V779H1383V783H1384V781H1385V784H1386V781H1387V783H1388V782H1389V785H1390V824V813H1389V810H1388V811H1387V812H1386V813H1385V814H1384V810H1383V809H1382V811H1381V814H1380V809H1379V821H1378V812H1377V811H1376H1375V812H1374V810H1373V812H1372V826H1371V811H1370V812H1369V813H1368V814H1367V809H1366V829H1365V811H1364H1363V814H1362V810H1361V811H1360V812H1359V813H1358V811H1357H1356V810H1355V809H1354V819H1353V811H1352V826H1351V811H1350Z"/>
<path fill="#008000" d="M1423 820H1424V818H1425V814H1426V816H1427V810H1428V809H1429H1430V811H1431V807H1432H1433V804H1434H1435V800H1436V799H1437V802H1438V797H1439V800H1440V825V826H1439V827H1438V829H1437V828H1436V827H1435V826H1434V827H1433V828H1432V826H1431V827H1430V828H1429H1428V829H1427V824H1426V828H1425V826H1424V829H1423Z"/>
<path fill="#008000" d="M1463 801H1464V800H1465V795H1466V796H1467V792H1468V791H1469V793H1470V789H1471V788H1472V790H1473V789H1474V790H1475V786H1476V787H1477V786H1478V788H1479V783H1480V784H1481V787H1482V781H1483V785H1484H1485V781H1486V780H1487V779H1488V781H1489V780H1490V779H1491V782H1492V781H1493V780H1494V781H1495V782H1496V778H1497V783H1498V780H1499V782H1500V779H1501V783H1502V778H1503V780H1504H1505V781H1506V779H1507V782H1508V779H1509V784H1510V779H1511V783H1512V784H1513V779H1514V778H1515V775H1516V774H1517V777H1518V774H1519H1520H1521V771H1522H1523V772H1524H1525V771H1526V773H1527V771H1528H1529V770H1530V768H1531H1532H1533V770H1534V768H1535V772H1536H1537V767H1538H1539V769H1540V768H1541V769H1542V768H1543V771H1544H1545V766H1546V768H1547V767H1548V771H1549V767H1550V769H1551V767H1552V768H1553H1554V771H1555V768H1556H1557V771H1558V768H1559V766H1560H1561V765H1562V770H1563V766H1564V768H1565H1566V770H1567V765H1568V764H1569V770H1570V769H1571H1572V768H1573V764H1574V766H1575V765H1576V769H1577H1578V764H1579V767H1580V765H1581V764H1582V767H1583V763H1584V765H1585V760H1586V762H1587V760H1588V761H1589V758H1590V760H1591V757H1592H1593V758H1594V757H1595V758H1596H1597V760H1598V758H1599H1600V763H1601H1602V759H1603H1604V762H1605V761H1606V759H1607V763H1608H1609V760H1610V762H1611V759H1612V761V795V797H1611V792H1610V796H1609V792H1608V809H1607V795H1606V793H1605V791H1604H1603H1602V796H1601V794H1600H1599V793H1598V802H1597V791H1596V792H1595V793H1594V795H1593V794H1592V792H1591V808H1590H1589V796H1588V792H1587H1586V796H1585V794H1584V795H1583V796H1582V791H1581V793H1580V795H1579V792H1578H1577V793H1576H1575V795H1574V797H1573V795H1572V791H1571V795H1570V796H1569V793H1568V796H1567V791H1566V795H1565V806H1564V797H1563V793H1562V792H1561V791H1560V796H1559V791H1558V794H1557V796H1556V791H1555V794H1554V807H1553V791H1552V807H1551V796H1550V792H1549H1548V810H1547V791H1546V793H1545H1544V794H1543V793H1542H1541V794H1540H1539V796H1538V792H1537V805H1536V801H1535V797H1534V799H1533V795H1532V799H1531V796H1530V812H1529V796H1528V797H1527V799H1526V800H1525V797H1524V801H1523H1522V797H1521V800H1520V797H1519V803H1518V801H1517V800H1516V802H1515V803H1514V801H1513V804H1512H1511V801H1510V803H1509V799H1508V800H1507V805H1506V803H1505V805H1504V806H1503V805H1502V806H1501V803H1500H1499H1498V806H1497H1496H1495V801H1494V806H1493V803H1492V808H1491V802H1490V810H1489V802H1488V806H1487V807H1486V808H1485V807H1484V804H1483V807H1482V801H1481V807H1480V800H1479V804H1478V808H1477V807H1476V805H1475V807H1474V808H1473V810H1472V804H1471V808H1470V803H1469V805H1468V803H1467H1466H1465V804H1464H1463Z"/>
<path fill="#00cc00" d="M1002 801V800H1004V799H1006V800V801H1008V799H1010V801V799H1012H1014V802V801H1016H1018V799V800H1020V801H1022V800V802H1024V801H1026V799V801H1028V800H1030V802V799H1032V802V801H1034V802V799H1036V800H1038H1040H1042V799V800H1044V801H1046V799V801H1048V800H1050V799V801H1052V799V800H1054V801V799H1056V801H1058V800V801H1060V800H1062V802V801H1064V800H1066V801V799H1068V801V800H1070V801H1072V799H1074V800H1076V802V799H1078V801H1080V799H1082V801H1084V800V801H1086H1088V799H1090V801H1092V799V800H1094V801V799H1096H1098V801V800H1100V799H1102V801H1104V800H1106V801H1107V800V808V809H1106V808V807H1104V808H1102V809H1100V808V806H1098V807V808H1096V809V807H1094V808V823H1092V806V808H1090V806H1088V808H1086V809V807H1084V809H1082V808H1080V809V807H1078V809V816H1076V807H1074V808V806H1072V809H1070V815V808H1068V807V808H1066V809V808H1064V809H1062V807V809H1060V808H1058V809H1056V808V809H1054V806V809H1052V807H1050V806V807H1048V808H1046V806V819H1044V807V809H1042V817V808H1040V825V808H1038V807V808H1036V807V806H1034V808V818H1032V807H1030V808V809H1028V807V806H1026V819V807H1024V808H1022V807H1020V808H1018V809V807H1016V808H1014V809V806H1012V809V808H1010V809V808H1008V807V809H1006V807V808H1004V807V808H1002V807Z"/>
<path fill="#00cc00" d="M1264 805V806H1266V804V805H1268V806H1270V805V804H1272V806V807H1274V806H1276V804V807H1278V806H1280V804H1282V806H1284V805H1286V804V806H1288V805H1290V806H1292V807H1294V805V807H1296V806H1298V805H1300H1302H1304V807V804H1306V805V804H1308V806V805H1310V807V804H1312V805V806H1313V804V813V811H1312V813V811H1310V833V811H1308V812V827H1306V812V811H1304V813V827H1302V812V811H1300V812V813H1298V812V831H1296V812V813H1294H1292V812V811H1290V812V833H1288V813V823H1286V812H1284H1282V826V812H1280V830H1278V824V811H1276V828V812H1274V831V822H1272V813H1270V812V825H1268V811V813H1266V811V813H1264V812Z"/>
<path fill="#00cc00" d="M1350 805H1351H1352V808H1353V807H1354V806H1355V808H1356H1357V807H1358V806H1359V805H1360V808H1361H1362V805H1363V807H1364H1365V805H1366V807H1367V806H1368V808H1369V806H1370V808H1371V807H1372H1373V806H1374H1375H1376V807H1377V808H1378V806H1379H1380V807H1381V806H1382V808H1383V807H1384V806H1385V807H1386V806H1387V807H1388H1389H1390V808V828V812H1389V813H1388V812H1387V813H1386H1385H1384V814H1383V813H1382V814H1381V815H1380H1379V814H1378V812H1377H1376V814H1375H1374V813H1373V821H1372V812H1371V814H1370H1369H1368V813H1367V814H1366H1365V828H1364V823H1363V820H1362V812H1361H1360H1359H1358V824H1357V814H1356V823H1355V813H1354H1353V814H1352V813H1351V814H1350Z"/>
<path fill="#00cc00" d="M1423 820H1424V821H1425H1426V822H1427V820H1428V822H1429V820H1430V822H1431V820H1432V821H1433V820H1434V822H1435H1436V820H1437V822H1438V820H1439V822H1440V819V833V836H1439V834H1438V836H1437H1436V835H1435H1434V834H1433V836H1432V833H1431V836H1430V833H1429V836H1428V833H1427V835H1426V833H1425V834H1424V833H1423Z"/>
<path fill="#00cc00" d="M1463 813H1464H1465V812H1466V811H1467V810H1468V812H1469V810H1470V812H1471V811H1472H1473H1474V810H1475V809H1476H1477V810H1478H1479V808H1480V809H1481V807H1482H1483V806H1484V809H1485H1486V806H1487V805H1488H1489V807H1490V806H1491H1492V807H1493H1494V804H1495V806H1496H1497V805H1498V806H1499V805H1500H1501V803H1502V805H1503V803H1504V806H1505V805H1506H1507V806H1508V805H1509H1510H1511V804H1512V803H1513V804H1514H1515V803H1516V806H1517V804H1518H1519H1520V805H1521V803H1522V804H1523H1524V806H1525V802H1526V805H1527V804H1528V803H1529H1530V805H1531V804H1532V805H1533V803H1534V805H1535V804H1536H1537V803H1538V805H1539V803H1540V804H1541H1542V806H1543V804H1544V803H1545V804H1546V803H1547V805H1548H1549H1550H1551V803H1552V804H1553V805H1554H1555V804H1556V805H1557V803H1558H1559H1560V804H1561V806H1562V805H1563V804H1564V805H1565V804H1566V805H1567V806H1568V805H1569V803H1570V804H1571H1572H1573H1574V805H1575V804H1576V803H1577H1578H1579V802H1580V806H1581V803H1582V805H1583H1584V803H1585H1586V805H1587H1588V803H1589H1590V804H1591V803H1592V804H1593H1594V803H1595V804H1596V805H1597H1598V803H1599V804H1600V805H1601V803H1602V805H1603V803H1604H1605V805H1606V804H1607V805H1608V803H1609H1610V805H1611V804H1612V805V809H1611V808H1610V810H1609V824H1608V807H1607H1606V808H1605V809H1604V807H1603V809H1602V808H1601V809H1600H1599V808H1598V807H1597V826H1596V809H1595H1594H1593H1592H1591H1590H1589V808H1588H1587V809H1586H1585V807H1584H1583V808H1582V807H1581V808H1580V810H1579H1578V808H1577V809H1576V808H1575H1574V809H1573H1572H1571V808H1570V819H1569V807H1568V809H1567V810H1566V808H1565V807H1564V808H1563V809H1562H1561V807H1560V809H1559V820H1558V807H1557V823H1556V810H1555V807H1554H1553H1552V821H1551V808H1550V807H1549V817H1548V807H1547H1546V808H1545V807H1544H1543V809H1542V808H1541V807H1540H1539V808H1538V809H1537V807H1536V809H1535V807H1534V809H1533V808H1532H1531V809H1530V810H1529V821H1528V809H1527H1526V807H1525V808H1524H1523H1522V810H1521H1520H1519V807H1518V808H1517V807H1516H1515V809H1514V807H1513V825H1512V818H1511V831H1510H1509V832H1508V815H1507V829H1506V830H1505V825H1504V824H1503V832H1502H1501V831H1500V832H1499V816H1498V832H1497V817H1496V832H1495V817H1494V830H1493V832H1492V831H1491H1490V832H1489V831H1488V830H1487V832H1486V830H1485V832H1484V829H1483H1482V831H1481V832H1480V830H1479V831H1478V832H1477V831H1476V830H1475H1474V832H1473V830H1472V831H1471H1470V832H1469V831H1468V832H1467V830H1466V831H1465H1464V817H1463Z"/>
<path fill="none" stroke="#00cc00" stroke-width="1.2" d="M1107 840V799"/>
<path fill="none" stroke="#00cc00" stroke-width="1.2" d="M1263.5 840V799"/>
<path fill="none" stroke="#00cc00" stroke-width="1.2" d="M1313 840V799"/>
<path fill="none" stroke="#00cc00" stroke-width="1.2" d="M1350 840V799"/>
<path fill="none" stroke="#00cc00" stroke-width="1.2" d="M1390 840V799"/>
<path fill="none" stroke="#00cc00" stroke-width="1.2" d="M1422.8 840V799"/>
<path fill="none" stroke="#00cc00" stroke-width="1.2" d="M1439.6 840V799"/>
<path fill="none" stroke="#00cc00" stroke-width="1.2" d="M1462.6 840V799"/>
<path fill="none" stroke="#00cc00" stroke-width="1.2" d="M1611.5 840V799"/>
<path fill="none" stroke="#008000" stroke-width="1.6" d="M1001.5 840H1634.5"/>
<path fill="none" stroke="#008000" stroke-width="1.6" d="M1216 838.9H1257"/>
<path fill="none" stroke="#008000" stroke-width="1.6" d="M1627 840L1634.5 837.8"/>
</g>
<g clip-path="url(#cR_dia)">
<path fill="#ee82ee" d="M1002 844V845H1004V842V843H1006V848V843H1008V846V844H1010V846V885V884H1008V881V878H1006V880V877H1004V880V877H1002V874Z"/>
<path fill="#ee82ee" d="M1010 873H1012V879V880H1014V874V869V891V892V898H1012V894V889H1010Z"/>
<path fill="#ee82ee" d="M1014 851H1016V854V855H1018V872V855H1020V852V853H1022V850V855H1024V849V875H1026V851V853H1028V849V852H1030V849H1032V847V852H1034V848V853H1036V849V848H1038V851V846H1040V850V847H1042V874V849H1044V846V849H1046V846V849H1048V846V875H1050V854V844H1052V850V847H1054V872H1056V846V845H1058V849V844H1060V846V848H1062V846V843H1064V842H1066V843V842H1068V841V843H1070V850V846H1072V845V840H1074V845V841H1076V844V848H1078V844H1080V838V843H1082V842H1084V850V843H1086V838V842H1088V840H1090V842H1092V870V838H1094V837V843H1096V839H1098V838V837H1100V840V843H1102V838V843H1104V838V840H1106V842V838H1107V886V891H1106V886V891H1104V888V887H1102V888V891H1100V886V889H1098V894V889H1096V886H1094V889H1092V887H1090V891V886H1088V895V892H1086V888H1084V886H1082V888H1080V893V891H1078V888V880H1076V889V893H1074V876V895H1072V878V880H1070V876V894H1068V876V875H1066V876V879H1064V881V880H1062V886H1060V887V886H1058V888H1056V889V884H1054V889V895H1052V887V884H1050V886H1048V884V888H1046V889V886H1044V888H1042V887H1040V888H1038V895H1036V885H1034V892V884H1032V886H1030V888H1028V884H1026V886V888H1024V885V883H1022V885V884H1020V895V888H1018V887V886H1016V887H1014Z"/>
<path fill="none" stroke="#ee82ee" stroke-width="1.8" d="M1107 919.4L1210 918.4L1216.2 917.9"/>
<path fill="#ee82ee" d="M1216 893H1217V896H1218V893H1219H1220V896H1221V893H1222V894H1223V895H1224V889H1225V890H1226V892H1227V894H1228V891H1229V888H1230V889H1231V892H1232V890H1233V892H1234H1235V893H1236V891H1237V890H1238V892H1239V888H1240H1241H1242H1243V890H1244V887H1245V888H1246V889H1247V890H1248V891H1249V886H1250V891H1251V887H1252V885H1253H1254V890H1255V888H1256H1257V890H1258V887H1259V888H1260V884H1261V885H1262V884H1263V888H1264V890V919H1263V918H1262V919H1261H1260H1259V918H1258V919H1257H1256H1255H1254H1253H1252H1251H1250H1249H1248H1247H1246H1245V918H1244V919H1243H1242H1241H1240H1239H1238H1237H1236H1235H1234V918H1233V919H1232H1231H1230H1229H1228H1227H1226H1225H1224H1223H1222H1221H1220V918H1219V919H1218H1217H1216Z"/>
<path fill="none" stroke="#ee82ee" stroke-width="1.2" d="M1238 868V890.2"/>
<path fill="#ee82ee" d="M1264 860H1265V877H1266V861H1267H1268V859H1269V862H1270V861H1271V884H1272V861H1273V862H1274V858H1275V861H1276H1277V860H1278V858H1279V855H1280V860H1281V855H1282V854H1283V855H1284V856H1285V852H1286V856H1287H1288V852H1289V859H1290V849H1291V848H1292V847H1293V863H1294V845H1295V850H1296V849H1297V848H1298V847H1299H1300V850H1301V848H1302V850H1303V845H1304V848H1305V845H1306V847H1307V851H1308V850H1309H1310V848H1311V851H1312V848V847V905V900V901H1311V902H1310H1309V899H1308V903H1307V905H1306V900H1305V904H1304V905H1303V904H1302V900H1301H1300V901H1299V904H1298V906H1297V902H1296V901H1295V904H1294V903H1293V900H1292V903H1291V902H1290V905H1289V901H1288V905H1287H1286V904H1285V901H1284V902H1283V904H1282V903H1281V907H1280V906H1279V905H1278V906H1277V905H1276V903H1275V905H1274V904H1273V903H1272V907H1271V908H1270V902H1269V905H1268V904H1267V908H1266H1265V903H1264Z"/>
<path fill="none" stroke="#ee82ee" stroke-width="1.6" d="M1312.5 846.9V919.4H1330.6L1332 885.9"/>
<path fill="#ee82ee" d="M1332 882H1333V881H1334V873H1335V877H1336V885H1337V870H1338H1339V866H1340V886H1341V867H1342H1343V869H1344V868H1345V867H1346V869H1347V868H1348V866H1349V867H1350V868V910V909H1349H1348V906H1347V912H1346V911H1345H1344V912H1343V907H1342V911H1341V912H1340H1339V908H1338V907H1337V908H1336V906H1335V907H1334V909H1333V910H1332Z"/>
<path fill="#ee82ee" d="M1350 842H1351H1352V838H1353V842H1354V881H1355V840H1356V857H1357V864H1358V841H1359H1360H1361V842H1362V841H1363V866H1364V840H1365V841H1366V842H1367V840H1368V844H1369V843H1370V842H1371V841H1372V844H1373V856H1374V843H1375V842H1376V843H1377V844H1378V841H1379V881H1380V843H1381V862H1382V845H1383V869H1384V863H1385V844H1386H1387V845H1388V859H1389V844H1390V845V896V895V901H1389V898H1388V900H1387V902H1386V900H1385V902H1384V901H1383V902H1382V906H1381V897H1380V902H1379V897H1378V899H1377H1376V898H1375H1374V900H1373V904H1372V901H1371V903H1370V899H1369V901H1368V899H1367V902H1366V904H1365V902H1364V900H1363V903H1362V902H1361H1360V903H1359V902H1358V904H1357H1356H1355V901H1354V904H1353V905H1352V902H1351H1350Z"/>
<path fill="none" stroke="#ee82ee" stroke-width="1.6" d="M1390.5 846.9V919.4H1412L1414 901"/>
<path fill="#ee82ee" d="M1412 902H1413V898H1414V892H1415V888H1416V886H1417V883H1418V880H1419V875V917V916H1418V918H1417H1416H1415V916H1414V917H1413H1412Z"/>
<path fill="#ee82ee" d="M1419 839H1420V840H1421V839H1422V840H1423H1424V839H1425H1426V840H1427V841H1428V839H1429V841H1430H1431V840H1432H1433H1434V839H1435H1436H1437V840H1438V841H1439V839H1440V841V908V910H1439H1438H1437V907H1436V910H1435V908H1434V907H1433V908H1432V909H1431V911H1430V907H1429V911H1428V908H1427H1426V914H1425H1424H1423V910H1422V914H1421V909H1420V913H1419Z"/>
<path fill="#ee82ee" d="M1440 879H1441V867H1442V870H1443V868H1444V866H1445H1446V887H1447V864H1448V865H1449V868H1450V864H1451V868H1452V866H1453V862H1454H1455V861H1456V870H1457V864H1458V861H1459V860H1460V856H1461V860H1462V854H1463V857H1464H1465V854H1466V855H1467V850V908H1466V922H1465V913H1464V911H1463V912H1462V913H1461V918H1460V914H1459H1458V913H1457V911H1456V918H1455V915H1454V914H1453V913H1452H1451H1450V912H1449V916H1448V915H1447V913H1446V914H1445V915H1444V918H1443V913H1442V917H1441V914H1440Z"/>
<path fill="#ee82ee" d="M1467 840H1468V839H1469V841H1470V840H1471V841H1472V840H1473V841H1474H1475V840H1476V839H1477H1478V840H1479V841H1480V839H1481H1482H1483V840H1484H1485V841H1486V840H1487V841H1488V840H1489H1490V841H1491H1492V840H1493H1494H1495V839H1496H1497V840H1498H1499V839H1500V840H1501V839H1502V840H1503V839H1504V841H1505V839V897V898H1504H1503H1502V899H1501V897H1500V902H1499V896H1498H1497V901H1496V896H1495V900H1494V898H1493V900H1492V897H1491V898H1490V897H1489V899H1488V896H1487H1486H1485V899H1484V896H1483V899H1482V898H1481V896H1480V898H1479V895H1478V897H1477V895H1476V900H1475V896H1474V898H1473V896H1472V895H1471V897H1470V901H1469V900H1468H1467Z"/>
<path fill="#ee82ee" d="M1507 840H1508V852H1509V840H1510V864H1511V840H1512H1513V839H1514V840H1515H1516H1517V869H1518V839H1519V856H1520V867H1521V840H1522V839H1523H1524V840H1525V839H1526V840H1527H1528V839H1529H1530V840H1531V839H1532H1533H1534V841H1535V840H1536V839H1537V840H1538V854H1539V841H1540V839H1541H1542V841H1543V840H1544V839H1545V840H1546V846H1547V840H1548V839H1549H1550V840V893V898H1549V893H1548V894H1547V896H1546V895H1545V898H1544V895H1543V897H1542V896H1541V897H1540V894H1539V895H1538V894H1537V899H1536V895H1535H1534H1533V897H1532V894H1531H1530V898H1529V899H1528V895H1527V898H1526V897H1525V900H1524V897H1523V898H1522V896H1521V897H1520V898H1519V896H1518V901H1517V898H1516V899H1515V900H1514H1513V901H1512V897H1511V900H1510V902H1509V900H1508V897H1507Z"/>
<path fill="#ee82ee" d="M1550 858H1551V855H1552V843H1553V852H1554V841H1555V844H1556V850H1557V843H1558V842H1559V875H1560V838H1561V841H1562V844H1563V841H1564V844H1565V843H1566V876H1567V862H1568V841H1569V840H1570V843H1571V844H1572V842H1573V868H1574V839H1575V843H1576V842H1577V849H1578V838H1579V840H1580V839H1581V860H1582V841H1583V854H1584V847H1585V841H1586V843H1587H1588V871H1589V857H1590V861H1591V842H1592V867H1593V866H1594V841H1595V844H1596V843H1597V864H1598V862H1599V845H1600V841H1601V844H1602V869H1603V841H1604V868H1605V840H1606V853H1607V842H1608V840H1609V849H1610V840H1611V858H1612V840V890H1611V888H1610V886H1609V887H1608V893H1607V888H1606H1605V886H1604V888H1603V886H1602V888H1601H1600V892H1599V887H1598V889H1597H1596V891H1595H1594V890H1593V887H1592H1591V888H1590V891H1589V897H1588V894H1587V888H1586V893H1585V892H1584V893H1583V889H1582V890H1581V892H1580V889H1579V892H1578V890H1577V891H1576V892H1575H1574V889H1573V892H1572V893H1571V891H1570H1569V899H1568V890H1567V892H1566V895H1565V893H1564V894H1563V893H1562H1561V892H1560H1559V891H1558V892H1557V890H1556V901H1555V894H1554V891H1553V894H1552V892H1551V895H1550Z"/>
<path fill="none" stroke="#ee82ee" stroke-width="1.6" d="M1611.5 846.9V919.4H1627L1634.5 868.6"/>
</g>
<g clip-path="url(#cR_vxd)">
<path fill="#0000ff" d="M1004 1002H1006V1003H1008V1002H1010V1001H1012V1003V1004H1014V1003V1002H1016V1003V1002H1018V1004V1002H1020V1003H1022V1002H1024V1003V1004H1026V1003V1002H1028V1003H1030H1032H1034H1036V1002V1003H1038V1002V1001H1040V1002V1003H1042V1002H1044H1046V1003V1002H1048V1001V1002H1050H1052V1004H1054V1003V1004H1056V1002V1003H1058V1004H1060V1003H1062V1002V1004H1064V1002V1003H1066V1001H1068V1002V1003H1070V1002V1003H1072V1002H1074V1003V1002H1076V1004H1078V1003H1080V1002H1082V1003H1084V1001V1002H1086V1003H1088V1002V1004H1090V1002H1092V1003H1094V1004V1003H1096V1001V1003H1098V1002V1004H1100V1003H1102V1002H1104V1003V1002H1106V1003V1001H1108V1003V1010H1106H1104H1102H1100H1098H1096H1094H1092H1090H1088H1086H1084H1082H1080H1078H1076H1074H1072H1070H1068H1066H1064H1062H1060H1058H1056H1054H1052H1050H1048H1046H1044H1042H1040H1038H1036H1034H1032H1030H1028H1026H1024H1022H1020H1018H1016H1014H1012H1010H1008H1006H1004Z"/>
<path fill="none" stroke="#ff0000" stroke-width="1.2" d="M1003.5 1008.3H1107.7"/>
<path fill="#0000ff" d="M1108 1007H1109H1110H1111H1112V1008H1113V1007H1114H1115V1008H1116V1007H1117V1008H1118V1007H1119V1008H1120V1007H1121V1008H1122H1123H1124V1007H1125H1126V1008H1127V1007H1128H1129V1008H1130V1007H1131H1132H1133V1008H1134V1007H1135H1136H1137V1008H1138V1007H1139V1008H1140H1141H1142V1007H1143V1008H1144V1007H1145H1146V1008H1147H1148V1007H1149H1150V1008H1151V1007H1152H1153H1154H1155V1008H1156V1007H1157H1158H1159H1160V1008H1161V1007H1162H1163H1164H1165H1166H1167H1168V1008H1169V1007H1170H1171H1172H1173V1008H1174V1007H1175V1008H1176V1007H1177H1178H1179V1008H1180V1007H1181V1008H1182V1007H1183V1008H1184H1185H1186V1007H1187H1188V1008H1189H1190V1007H1191H1192V1008H1193V1007H1194H1195H1196H1197V1008H1198V1007H1199H1200V1008H1201V1007H1202V1008H1203V1007H1204H1205H1206V1008H1207V1007H1208H1209V1008H1210V1007H1211H1212H1213V1008H1214V1007H1215V1008H1216H1217V1007V1010H1216H1215H1214H1213H1212H1211H1210H1209H1208H1207H1206H1205H1204H1203H1202H1201H1200H1199H1198H1197H1196H1195H1194H1193H1192H1191H1190H1189H1188H1187H1186H1185H1184H1183H1182H1181H1180H1179H1178H1177H1176H1175H1174H1173H1172H1171H1170H1169H1168H1167H1166H1165H1164H1163H1162H1161H1160H1159H1158H1157H1156H1155H1154H1153H1152H1151H1150H1149H1148H1147H1146H1145H1144H1143H1142H1141H1140H1139H1138H1137H1136H1135H1134H1133H1132H1131H1130H1129H1128H1127H1126H1125H1124H1123H1122H1121H1120H1119H1118H1117H1116H1115H1114H1113H1112H1111H1110H1109H1108Z"/>
<path fill="#ff0000" d="M1222 1006H1223H1224V1004H1225H1226V1002H1227V1003H1228V1002H1229H1230H1231V1000H1232H1233V998H1234H1235V997H1236V999H1237V1000H1238V998H1239V1000H1240H1241V999H1242V998H1243V999H1244V997H1245V1000H1246H1247V999H1248H1249V1000H1250V998H1251V999H1252V1000H1253V1001H1254H1255V1000H1256H1257V1001H1258V1002H1259H1260V1000H1261V1002H1262V1008H1261H1260H1259H1258H1257H1256H1255H1254H1253H1252H1251H1250H1249H1248H1247H1246H1245H1244H1243H1242H1241H1240H1239H1238H1237H1236H1235H1234H1233H1232H1231H1230H1229H1228H1227H1226H1225H1224H1223H1222Z"/>
<path fill="#0000ff" d="M1217 1006H1218H1219V1005H1220V1006H1221H1222V1004H1223V1005H1224H1225V1004H1226V1003H1227V1004H1228V1002H1229V1003H1230V1002H1231V1004H1232V1002H1233V1003H1234H1235V1004H1236V1002H1237H1238H1239V1004H1240V1003H1241V1002H1242H1243V1004H1244V1003H1245H1246V1004H1247V1002H1248V1003H1249V1004H1250V1003H1251V1004H1252V1003H1253V1002H1254V1003H1255V1002H1256V1003H1257H1258V1002H1259V1003H1260H1261H1262H1263H1264H1265V1002H1266H1267V1003H1268V1002H1269H1270V1003H1271H1272H1273V1002H1274V1004H1275H1276H1277V1003H1278V1002H1279V1004H1280H1281V1003H1282H1283V1004H1284H1285V1003H1286H1287V1004H1288V1002H1289H1290V1004H1291V1003H1292V1004H1293V1003H1294V1004H1295V1003H1296V1002H1297V1004H1298H1299H1300V1003H1301H1302V1004H1303H1304V1003H1305V1002H1306V1004H1307V1003H1308H1309V1004H1310V1002H1311H1312H1313V1003V1010H1312H1311H1310H1309H1308H1307H1306H1305H1304H1303H1302H1301H1300H1299H1298H1297H1296H1295H1294H1293H1292H1291H1290H1289H1288H1287H1286H1285H1284H1283H1282H1281H1280H1279H1278H1277H1276H1275H1274H1273H1272H1271H1270H1269H1268H1267H1266H1265H1264H1263H1262H1261H1260H1259H1258H1257H1256H1255H1254H1253H1252H1251H1250H1249H1248H1247H1246H1245H1244H1243H1242H1241H1240H1239H1238H1237H1236H1235H1234H1233H1232H1231H1230H1229H1228H1227H1226H1225H1224H1223H1222H1221H1220H1219H1218H1217Z"/>
<path fill="none" stroke="#0000ff" stroke-width="1.3" d="M1313.4 1009.5V929.8"/>
<path fill="#0000ff" d="M1313 1008H1314V1007H1315H1316V1008H1317V1007H1318H1319H1320V1008H1321V1007H1322H1323H1324H1325H1326H1327V1010H1326H1325H1324H1323H1322H1321H1320H1319H1318H1317H1316H1315H1314H1313Z"/>
<path fill="#ff0000" d="M1340 1001H1341V1000H1342V997H1343V998H1344H1345V997H1346V993H1347H1348V992H1349V994H1350H1351H1352V995H1353V996H1354V994H1355V996H1356V995H1357V998H1358V996H1359V997H1360V999V1004H1359H1358H1357H1356H1355H1354H1353H1352H1351H1350H1349H1348H1347H1346H1345H1344H1343H1342H1341H1340Z"/>
<path fill="#0000ff" d="M1327 1006H1328H1329V1005H1330H1331V1003H1332H1333H1334V1001H1335V1000H1336V1001H1337V1000H1338H1339H1340V999H1341V997H1342H1343H1344V998H1345H1346V996H1347V998H1348V996H1349V997H1350V996H1351V997H1352H1353V999H1354V998H1355V1000H1356H1357V999H1358V1001H1359H1360H1361V1000H1362H1363V1002H1364H1365H1366H1367V1000H1368V1002H1369V1001H1370V1002H1371V1001H1372V1002H1373V1001H1374V1002H1375V1000H1376V1001H1377H1378V1000H1379V1002H1380H1381V1001H1382H1383H1384V1002H1385V1001H1386V1002H1387H1388V1001H1389H1390H1391V1002H1392V1010H1391H1390H1389H1388H1387H1386H1385H1384H1383H1382H1381H1380H1379H1378H1377H1376H1375H1374H1373H1372H1371H1370H1369H1368H1367H1366H1365H1364H1363H1362H1361H1360H1359H1358H1357H1356H1355H1354H1353H1352H1351H1350H1349H1348H1347H1346H1345H1344H1343H1342H1341H1340H1339H1338H1337H1336H1335H1334H1333H1332H1331H1330H1329H1328H1327Z"/>
<path fill="none" stroke="#0000ff" stroke-width="1.3" d="M1390.5 1009.5V987"/>
<path fill="#0000ff" d="M1392 1008V1007H1394V1008H1396V1007V1008H1398V1007V1008H1400V1007H1402H1404H1406H1408H1410V1010H1408H1406H1404H1402H1400H1398H1396H1394H1392Z"/>
<path fill="#ff0000" d="M1415 999H1416H1417V997H1418V993H1419V990H1420V989H1421H1422H1423V992H1424V990H1425V993H1426V991H1427V993H1428H1429V995H1430V993V1003H1429H1428H1427H1426H1425H1424H1423H1422H1421H1420H1419H1418H1417H1416H1415Z"/>
<path fill="#0000ff" d="M1410 1006H1411V1003H1412V1002H1413H1414V1001H1415V999H1416H1417V996H1418V995H1419V993H1420V994H1421H1422H1423V993H1424V994H1425V995H1426H1427H1428V997H1429V995H1430V997H1431H1432V998H1433H1434V999H1435V998H1436V999H1437H1438H1439V1001H1440V1000H1441V1001H1442H1443V1000H1444H1445H1446V1001H1447H1448V999H1449H1450V1000H1451H1452V999H1453V1000H1454V1001H1455V1000H1456H1457H1458H1459V1001H1460H1461H1462V1000H1463V1001H1464V1000H1465V1001H1466V999H1467H1468V1000H1469V1001H1470H1471V1000H1472H1473H1474H1475V1001H1476H1477V1000H1478H1479H1480V999H1481V1001H1482H1483H1484V1000H1485V999H1486H1487V1001H1488H1489V1000H1490H1491H1492H1493H1494H1495H1496V1001H1497H1498V1000H1499V1001H1500H1501H1502V1000H1503V1001H1504V999H1505V1000H1506V1001H1507V1000H1508H1509V1001H1510V1000H1511V1001H1512H1513V999H1514V1000H1515H1516H1517H1518V999H1519H1520V1000H1521V999H1522V1001H1523V1000H1524H1525H1526V1001H1527V1000H1528V999H1529V1001H1530V1000H1531H1532V999H1533V1001H1534V1000H1535V999H1536V1000H1537V999H1538V1000H1539V999H1540V1000H1541V1001H1542H1543V1000H1544V1001H1545H1546V1000H1547V999H1548V1000H1549V1001H1550H1551V1000H1552H1553H1554H1555V999H1556V1000H1557H1558V999H1559V1000H1560H1561H1562H1563H1564V999H1565V1000H1566H1567H1568H1569V1001H1570V999H1571V1000H1572V999H1573V1000H1574V1001H1575V1000H1576H1577V1001H1578V998H1579H1580H1581V996H1582V997H1583H1584V998H1585H1586V996H1587V997H1588V998H1589H1590V997H1591V998H1592V997H1593V996H1594V997H1595V996H1596V997H1597H1598H1599V996H1600H1601V998H1602V997H1603H1604H1605V996H1606V997H1607V998H1608V996H1609V998H1610V997H1611H1612V996V1010H1611H1610H1609H1608H1607H1606H1605H1604H1603H1602H1601H1600H1599H1598H1597H1596H1595H1594H1593H1592H1591H1590H1589H1588H1587H1586H1585H1584H1583H1582H1581H1580H1579H1578H1577H1576H1575H1574H1573H1572H1571H1570H1569H1568H1567H1566H1565H1564H1563H1562H1561H1560H1559H1558H1557H1556H1555H1554H1553H1552H1551H1550H1549H1548H1547H1546H1545H1544H1543H1542H1541H1540H1539H1538H1537H1536H1535H1534H1533H1532H1531H1530H1529H1528H1527H1526H1525H1524H1523H1522H1521H1520H1519H1518H1517H1516H1515H1514H1513H1512H1511H1510H1509H1508H1507H1506H1505H1504H1503H1502H1501H1500H1499H1498H1497H1496H1495H1494H1493H1492H1491H1490H1489H1488H1487H1486H1485H1484H1483H1482H1481H1480H1479H1478H1477H1476H1475H1474H1473H1472H1471H1470H1469H1468H1467H1466H1465H1464H1463H1462H1461H1460H1459H1458H1457H1456H1455H1454H1453H1452H1451H1450H1449H1448H1447H1446H1445H1444H1443H1442H1441H1440H1439H1438H1437H1436H1435H1434H1433H1432H1431H1430H1429H1428H1427H1426H1425H1424H1423H1422H1421H1420H1419H1418H1417H1416H1415H1414H1413H1412H1411H1410Z"/>
<path fill="#ff0000" d="M1577 1004H1578H1579H1580V1005H1581V1004H1582H1583V1003H1584V1004H1585H1586H1587V1005H1588H1589H1590V1003H1591H1592V1005H1593V1004H1594H1595V1005H1596H1597H1598V1003H1599V1004H1600V1003V1008H1599H1598H1597H1596H1595H1594H1593H1592H1591H1590H1589H1588H1587H1586H1585H1584H1583H1582H1581H1580H1579H1578H1577Z"/>
<path fill="#0000ff" d="M1612 1008H1613V1007H1614H1615H1616V1008H1617H1618H1619V1007H1620V1008H1621H1622V1007H1623V1008H1624V1007H1625V1008H1626V1007H1627V1008H1628V1007H1629H1630V1010H1629H1628H1627H1626H1625H1624H1623H1622H1621H1620H1619H1618H1617H1616H1615H1614H1613H1612Z"/>
<path fill="none" stroke="#0000ff" stroke-width="1.5" d="M1630 1008L1633 994.2H1634"/>
<path fill="none" stroke="#ff0000" stroke-width="1.2" d="M1634 1000V990"/>
</g>
<text x="1001" y="116.8" font-family='"Liberation Mono", monospace' font-size="13.4" text-anchor="end" font-weight="normal" fill="#000" stroke="#000" stroke-width="0.3">0</text>
<text x="1001" y="103.1" font-family='"Liberation Mono", monospace' font-size="13.4" text-anchor="end" font-weight="normal" fill="#000" stroke="#000" stroke-width="0.3">10000</text>
<text x="1001" y="89.4" font-family='"Liberation Mono", monospace' font-size="13.4" text-anchor="end" font-weight="normal" fill="#000" stroke="#000" stroke-width="0.3">20000</text>
<text x="1001" y="75.7" font-family='"Liberation Mono", monospace' font-size="13.4" text-anchor="end" font-weight="normal" fill="#000" stroke="#000" stroke-width="0.3">30000</text>
<text x="1001" y="62" font-family='"Liberation Mono", monospace' font-size="13.4" text-anchor="end" font-weight="normal" fill="#000" stroke="#000" stroke-width="0.3">40000</text>
<text x="1001" y="176.9" font-family='"Liberation Mono", monospace' font-size="13.3" text-anchor="end" font-weight="normal" fill="#000" stroke="#000" stroke-width="0.3">0</text>
<text x="1001" y="158.5" font-family='"Liberation Mono", monospace' font-size="13.3" text-anchor="end" font-weight="normal" fill="#000" stroke="#000" stroke-width="0.3">500</text>
<text x="1001" y="140.1" font-family='"Liberation Mono", monospace' font-size="13.3" text-anchor="end" font-weight="normal" fill="#000" stroke="#000" stroke-width="0.3">1000</text>
<text x="1001" y="121.7" font-family='"Liberation Mono", monospace' font-size="13.3" text-anchor="end" font-weight="normal" fill="#000" stroke="#000" stroke-width="0.3">1500</text>
<text x="1001" y="235.6" font-family='"Liberation Mono", monospace' font-size="13.1" text-anchor="end" font-weight="normal" fill="#000" stroke="#000" stroke-width="0.3">0</text>
<text x="1001" y="220.8" font-family='"Liberation Mono", monospace' font-size="13.1" text-anchor="end" font-weight="normal" fill="#000" stroke="#000" stroke-width="0.3">5</text>
<text x="1001" y="206.1" font-family='"Liberation Mono", monospace' font-size="13.1" text-anchor="end" font-weight="normal" fill="#000" stroke="#000" stroke-width="0.3">10</text>
<text x="1001" y="191.3" font-family='"Liberation Mono", monospace' font-size="13.1" text-anchor="end" font-weight="normal" fill="#000" stroke="#000" stroke-width="0.3">15</text>
<text x="1001" y="176.6" font-family='"Liberation Mono", monospace' font-size="13.1" text-anchor="end" font-weight="normal" fill="#000" stroke="#000" stroke-width="0.3">20</text>
<text x="1001" y="294.6" font-family='"Liberation Mono", monospace' font-size="13.5" text-anchor="end" font-weight="normal" fill="#000" stroke="#000" stroke-width="0.3">1.7</text>
<text x="1001" y="276.7" font-family='"Liberation Mono", monospace' font-size="13.5" text-anchor="end" font-weight="normal" fill="#000" stroke="#000" stroke-width="0.3">1.8</text>
<text x="1001" y="258.8" font-family='"Liberation Mono", monospace' font-size="13.5" text-anchor="end" font-weight="normal" fill="#000" stroke="#000" stroke-width="0.3">1.9</text>
<text x="1001" y="240.9" font-family='"Liberation Mono", monospace' font-size="13.5" text-anchor="end" font-weight="normal" fill="#000" stroke="#000" stroke-width="0.3">2</text>
<text x="1001" y="352" font-family='"Liberation Mono", monospace' font-size="13.5" text-anchor="end" font-weight="normal" fill="#000" stroke="#000" stroke-width="0.3">0</text>
<text x="1001" y="333.2" font-family='"Liberation Mono", monospace' font-size="13.5" text-anchor="end" font-weight="normal" fill="#000" stroke="#000" stroke-width="0.3">0.5</text>
<text x="1001" y="314.4" font-family='"Liberation Mono", monospace' font-size="13.5" text-anchor="end" font-weight="normal" fill="#000" stroke="#000" stroke-width="0.3">1</text>
<text x="1001" y="295.6" font-family='"Liberation Mono", monospace' font-size="13.5" text-anchor="end" font-weight="normal" fill="#000" stroke="#000" stroke-width="0.3">1.5</text>
<text x="1001" y="414" font-family='"Liberation Mono", monospace' font-size="12.9" text-anchor="end" font-weight="normal" fill="#000" stroke="#000" stroke-width="0.3">0</text>
<text x="1001" y="403.4" font-family='"Liberation Mono", monospace' font-size="12.9" text-anchor="end" font-weight="normal" fill="#000" stroke="#000" stroke-width="0.3">20</text>
<text x="1001" y="392.8" font-family='"Liberation Mono", monospace' font-size="12.9" text-anchor="end" font-weight="normal" fill="#000" stroke="#000" stroke-width="0.3">40</text>
<text x="1001" y="382.2" font-family='"Liberation Mono", monospace' font-size="12.9" text-anchor="end" font-weight="normal" fill="#000" stroke="#000" stroke-width="0.3">60</text>
<text x="1001" y="371.6" font-family='"Liberation Mono", monospace' font-size="12.9" text-anchor="end" font-weight="normal" fill="#000" stroke="#000" stroke-width="0.3">80</text>
<text x="1001" y="361" font-family='"Liberation Mono", monospace' font-size="12.9" text-anchor="end" font-weight="normal" fill="#000" stroke="#000" stroke-width="0.3">100</text>
<text x="1001" y="503.7" font-family='"Liberation Mono", monospace' font-size="14.8" text-anchor="end" font-weight="normal" fill="#000" stroke="#000" stroke-width="0.3">0</text>
<text x="1001" y="486.8" font-family='"Liberation Mono", monospace' font-size="14.8" text-anchor="end" font-weight="normal" fill="#000" stroke="#000" stroke-width="0.3">1000</text>
<text x="1001" y="469.9" font-family='"Liberation Mono", monospace' font-size="14.8" text-anchor="end" font-weight="normal" fill="#000" stroke="#000" stroke-width="0.3">2000</text>
<text x="1001" y="453" font-family='"Liberation Mono", monospace' font-size="14.8" text-anchor="end" font-weight="normal" fill="#000" stroke="#000" stroke-width="0.3">3000</text>
<text x="1001" y="436.1" font-family='"Liberation Mono", monospace' font-size="14.8" text-anchor="end" font-weight="normal" fill="#000" stroke="#000" stroke-width="0.3">4000</text>
<text x="1001" y="419.2" font-family='"Liberation Mono", monospace' font-size="14.8" text-anchor="end" font-weight="normal" fill="#000" stroke="#000" stroke-width="0.3">5000</text>
<text x="1001" y="588.9" font-family='"Liberation Mono", monospace' font-size="14.8" text-anchor="end" font-weight="normal" fill="#000" stroke="#000" stroke-width="0.3">0</text>
<text x="1001" y="567.9" font-family='"Liberation Mono", monospace' font-size="14.8" text-anchor="end" font-weight="normal" fill="#000" stroke="#000" stroke-width="0.3">5</text>
<text x="1001" y="546.9" font-family='"Liberation Mono", monospace' font-size="14.8" text-anchor="end" font-weight="normal" fill="#000" stroke="#000" stroke-width="0.3">10</text>
<text x="1001" y="525.9" font-family='"Liberation Mono", monospace' font-size="14.8" text-anchor="end" font-weight="normal" fill="#000" stroke="#000" stroke-width="0.3">15</text>
<text x="1001" y="504.9" font-family='"Liberation Mono", monospace' font-size="14.8" text-anchor="end" font-weight="normal" fill="#000" stroke="#000" stroke-width="0.3">20</text>
<text x="1001" y="674.3" font-family='"Liberation Mono", monospace' font-size="14.8" text-anchor="end" font-weight="normal" fill="#000" stroke="#000" stroke-width="0.3">0</text>
<text x="1001" y="657.2" font-family='"Liberation Mono", monospace' font-size="14.8" text-anchor="end" font-weight="normal" fill="#000" stroke="#000" stroke-width="0.3">1</text>
<text x="1001" y="640.1" font-family='"Liberation Mono", monospace' font-size="14.8" text-anchor="end" font-weight="normal" fill="#000" stroke="#000" stroke-width="0.3">2</text>
<text x="1001" y="623" font-family='"Liberation Mono", monospace' font-size="14.8" text-anchor="end" font-weight="normal" fill="#000" stroke="#000" stroke-width="0.3">3</text>
<text x="1001" y="605.9" font-family='"Liberation Mono", monospace' font-size="14.8" text-anchor="end" font-weight="normal" fill="#000" stroke="#000" stroke-width="0.3">4</text>
<text x="1001" y="588.8" font-family='"Liberation Mono", monospace' font-size="14.8" text-anchor="end" font-weight="normal" fill="#000" stroke="#000" stroke-width="0.3">5</text>
<text x="1001" y="759" font-family='"Liberation Mono", monospace' font-size="14.8" text-anchor="end" font-weight="normal" fill="#000" stroke="#000" stroke-width="0.3">0</text>
<text x="1001" y="737.9" font-family='"Liberation Mono", monospace' font-size="14.8" text-anchor="end" font-weight="normal" fill="#000" stroke="#000" stroke-width="0.3">1</text>
<text x="1001" y="716.8" font-family='"Liberation Mono", monospace' font-size="14.8" text-anchor="end" font-weight="normal" fill="#000" stroke="#000" stroke-width="0.3">2</text>
<text x="1001" y="695.7" font-family='"Liberation Mono", monospace' font-size="14.8" text-anchor="end" font-weight="normal" fill="#000" stroke="#000" stroke-width="0.3">3</text>
<text x="1001" y="674.6" font-family='"Liberation Mono", monospace' font-size="14.8" text-anchor="end" font-weight="normal" fill="#000" stroke="#000" stroke-width="0.3">4</text>
<text x="1001" y="845.2" font-family='"Liberation Mono", monospace' font-size="14.9" text-anchor="end" font-weight="normal" fill="#000" stroke="#000" stroke-width="0.3">0</text>
<text x="1001" y="830.9" font-family='"Liberation Mono", monospace' font-size="14.9" text-anchor="end" font-weight="normal" fill="#000" stroke="#000" stroke-width="0.3">50</text>
<text x="1001" y="816.5" font-family='"Liberation Mono", monospace' font-size="14.9" text-anchor="end" font-weight="normal" fill="#000" stroke="#000" stroke-width="0.3">100</text>
<text x="1001" y="802.2" font-family='"Liberation Mono", monospace' font-size="14.9" text-anchor="end" font-weight="normal" fill="#000" stroke="#000" stroke-width="0.3">150</text>
<text x="1001" y="787.8" font-family='"Liberation Mono", monospace' font-size="14.9" text-anchor="end" font-weight="normal" fill="#000" stroke="#000" stroke-width="0.3">200</text>
<text x="1001" y="773.5" font-family='"Liberation Mono", monospace' font-size="14.9" text-anchor="end" font-weight="normal" fill="#000" stroke="#000" stroke-width="0.3">250</text>
<text x="1001" y="759.1" font-family='"Liberation Mono", monospace' font-size="14.9" text-anchor="end" font-weight="normal" fill="#000" stroke="#000" stroke-width="0.3">300</text>
<text x="1001" y="930.5" font-family='"Liberation Mono", monospace' font-size="14.9" text-anchor="end" font-weight="normal" fill="#000" stroke="#000" stroke-width="0.3">0</text>
<text x="1001" y="913.4" font-family='"Liberation Mono", monospace' font-size="14.9" text-anchor="end" font-weight="normal" fill="#000" stroke="#000" stroke-width="0.3">10</text>
<text x="1001" y="896.3" font-family='"Liberation Mono", monospace' font-size="14.9" text-anchor="end" font-weight="normal" fill="#000" stroke="#000" stroke-width="0.3">20</text>
<text x="1001" y="879.2" font-family='"Liberation Mono", monospace' font-size="14.9" text-anchor="end" font-weight="normal" fill="#000" stroke="#000" stroke-width="0.3">30</text>
<text x="1001" y="862.1" font-family='"Liberation Mono", monospace' font-size="14.9" text-anchor="end" font-weight="normal" fill="#000" stroke="#000" stroke-width="0.3">40</text>
<text x="1001" y="845" font-family='"Liberation Mono", monospace' font-size="14.9" text-anchor="end" font-weight="normal" fill="#000" stroke="#000" stroke-width="0.3">50</text>
<text x="1001" y="1014.9" font-family='"Liberation Mono", monospace' font-size="14.8" text-anchor="end" font-weight="normal" fill="#000" stroke="#000" stroke-width="0.3">0</text>
<text x="1001" y="998.1" font-family='"Liberation Mono", monospace' font-size="14.8" text-anchor="end" font-weight="normal" fill="#000" stroke="#000" stroke-width="0.3">1000</text>
<text x="1001" y="981.3" font-family='"Liberation Mono", monospace' font-size="14.8" text-anchor="end" font-weight="normal" fill="#000" stroke="#000" stroke-width="0.3">2000</text>
<text x="1001" y="964.5" font-family='"Liberation Mono", monospace' font-size="14.8" text-anchor="end" font-weight="normal" fill="#000" stroke="#000" stroke-width="0.3">3000</text>
<text x="1001" y="947.7" font-family='"Liberation Mono", monospace' font-size="14.8" text-anchor="end" font-weight="normal" fill="#000" stroke="#000" stroke-width="0.3">4000</text>
<text x="1001" y="930.9" font-family='"Liberation Mono", monospace' font-size="14.8" text-anchor="end" font-weight="normal" fill="#000" stroke="#000" stroke-width="0.3">5000</text>
<path fill="none" stroke="#000" stroke-width="1.1" d="M1005.5 112.5v-10.5M1028.5 112.5v-3.8M1052.5 112.5v-3.8M1075.5 112.5v-10.5M1099.5 112.5v-3.8M1122.5 112.5v-3.8M1146.5 112.5v-10.5M1169.5 112.5v-3.8M1193.5 112.5v-3.8M1216.5 112.5v-10.5M1239.5 112.5v-3.8M1263.5 112.5v-3.8M1286.5 112.5v-10.5M1310.5 112.5v-3.8M1333.5 112.5v-3.8M1357.5 112.5v-10.5M1380.5 112.5v-3.8M1404.5 112.5v-3.8M1427.5 112.5v-10.5M1450.5 112.5v-3.8M1474.5 112.5v-3.8M1497.5 112.5v-10.5M1521.5 112.5v-3.8M1544.5 112.5v-3.8M1568.5 112.5v-10.5M1591.5 112.5v-3.8M1615.5 112.5v-3.8M1003.5 112.5h22M1003.5 98.5h22M1003.5 84.5h22M1003.5 71.5h22M1003.5 57.5h22M1005.5 172.5v-10.5M1028.5 172.5v-3.8M1052.5 172.5v-3.8M1075.5 172.5v-10.5M1099.5 172.5v-3.8M1122.5 172.5v-3.8M1146.5 172.5v-10.5M1169.5 172.5v-3.8M1193.5 172.5v-3.8M1216.5 172.5v-10.5M1239.5 172.5v-3.8M1263.5 172.5v-3.8M1286.5 172.5v-10.5M1310.5 172.5v-3.8M1333.5 172.5v-3.8M1357.5 172.5v-10.5M1380.5 172.5v-3.8M1404.5 172.5v-3.8M1427.5 172.5v-10.5M1450.5 172.5v-3.8M1474.5 172.5v-3.8M1497.5 172.5v-10.5M1521.5 172.5v-3.8M1544.5 172.5v-3.8M1568.5 172.5v-10.5M1591.5 172.5v-3.8M1615.5 172.5v-3.8M1003.5 172.5h22M1003.5 154.5h22M1003.5 135.5h22M1003.5 117.5h22M1005.5 231.5v-10.5M1028.5 231.5v-3.8M1052.5 231.5v-3.8M1075.5 231.5v-10.5M1099.5 231.5v-3.8M1122.5 231.5v-3.8M1146.5 231.5v-10.5M1169.5 231.5v-3.8M1193.5 231.5v-3.8M1216.5 231.5v-10.5M1239.5 231.5v-3.8M1263.5 231.5v-3.8M1286.5 231.5v-10.5M1310.5 231.5v-3.8M1333.5 231.5v-3.8M1357.5 231.5v-10.5M1380.5 231.5v-3.8M1404.5 231.5v-3.8M1427.5 231.5v-10.5M1450.5 231.5v-3.8M1474.5 231.5v-3.8M1497.5 231.5v-10.5M1521.5 231.5v-3.8M1544.5 231.5v-3.8M1568.5 231.5v-10.5M1591.5 231.5v-3.8M1615.5 231.5v-3.8M1003.5 231.5h22M1003.5 216.5h22M1003.5 201.5h22M1003.5 186.5h22M1003.5 172.5h22M1005.5 290.5v-10.5M1028.5 290.5v-3.8M1052.5 290.5v-3.8M1075.5 290.5v-10.5M1099.5 290.5v-3.8M1122.5 290.5v-3.8M1146.5 290.5v-10.5M1169.5 290.5v-3.8M1193.5 290.5v-3.8M1216.5 290.5v-10.5M1239.5 290.5v-3.8M1263.5 290.5v-3.8M1286.5 290.5v-10.5M1310.5 290.5v-3.8M1333.5 290.5v-3.8M1357.5 290.5v-10.5M1380.5 290.5v-3.8M1404.5 290.5v-3.8M1427.5 290.5v-10.5M1450.5 290.5v-3.8M1474.5 290.5v-3.8M1497.5 290.5v-10.5M1521.5 290.5v-3.8M1544.5 290.5v-3.8M1568.5 290.5v-10.5M1591.5 290.5v-3.8M1615.5 290.5v-3.8M1003.5 290.5h22M1003.5 272.5h22M1003.5 254.5h22M1003.5 236.5h22M1005.5 350.5v-10.5M1028.5 350.5v-3.8M1052.5 350.5v-3.8M1075.5 350.5v-10.5M1099.5 350.5v-3.8M1122.5 350.5v-3.8M1146.5 350.5v-10.5M1169.5 350.5v-3.8M1193.5 350.5v-3.8M1216.5 350.5v-10.5M1239.5 350.5v-3.8M1263.5 350.5v-3.8M1286.5 350.5v-10.5M1310.5 350.5v-3.8M1333.5 350.5v-3.8M1357.5 350.5v-10.5M1380.5 350.5v-3.8M1404.5 350.5v-3.8M1427.5 350.5v-10.5M1450.5 350.5v-3.8M1474.5 350.5v-3.8M1497.5 350.5v-10.5M1521.5 350.5v-3.8M1544.5 350.5v-3.8M1568.5 350.5v-10.5M1591.5 350.5v-3.8M1615.5 350.5v-3.8M1003.5 347.5h22M1003.5 328.5h22M1003.5 309.5h22M1003.5 291.5h22M1005.5 414.5v-10.5M1028.5 414.5v-3.8M1052.5 414.5v-3.8M1075.5 414.5v-10.5M1099.5 414.5v-3.8M1122.5 414.5v-3.8M1146.5 414.5v-10.5M1169.5 414.5v-3.8M1193.5 414.5v-3.8M1216.5 414.5v-10.5M1239.5 414.5v-3.8M1263.5 414.5v-3.8M1286.5 414.5v-10.5M1310.5 414.5v-3.8M1333.5 414.5v-3.8M1357.5 414.5v-10.5M1380.5 414.5v-3.8M1404.5 414.5v-3.8M1427.5 414.5v-10.5M1450.5 414.5v-3.8M1474.5 414.5v-3.8M1497.5 414.5v-10.5M1521.5 414.5v-3.8M1544.5 414.5v-3.8M1568.5 414.5v-10.5M1591.5 414.5v-3.8M1615.5 414.5v-3.8M1003.5 409.5h22M1003.5 399.5h22M1003.5 388.5h22M1003.5 377.5h22M1003.5 367.5h22M1003.5 356.5h22M1005.5 498.5v-10.5M1028.5 498.5v-3.8M1052.5 498.5v-3.8M1075.5 498.5v-10.5M1099.5 498.5v-3.8M1122.5 498.5v-3.8M1146.5 498.5v-10.5M1169.5 498.5v-3.8M1193.5 498.5v-3.8M1216.5 498.5v-10.5M1239.5 498.5v-3.8M1263.5 498.5v-3.8M1286.5 498.5v-10.5M1310.5 498.5v-3.8M1333.5 498.5v-3.8M1357.5 498.5v-10.5M1380.5 498.5v-3.8M1404.5 498.5v-3.8M1427.5 498.5v-10.5M1450.5 498.5v-3.8M1474.5 498.5v-3.8M1497.5 498.5v-10.5M1521.5 498.5v-3.8M1544.5 498.5v-3.8M1568.5 498.5v-10.5M1591.5 498.5v-3.8M1615.5 498.5v-3.8M1003.5 498.5h22M1003.5 481.5h22M1003.5 464.5h22M1003.5 448.5h22M1003.5 431.5h22M1003.5 414.5h22M1005.5 584.5v-10.5M1028.5 584.5v-3.8M1052.5 584.5v-3.8M1075.5 584.5v-10.5M1099.5 584.5v-3.8M1122.5 584.5v-3.8M1146.5 584.5v-10.5M1169.5 584.5v-3.8M1193.5 584.5v-3.8M1216.5 584.5v-10.5M1239.5 584.5v-3.8M1263.5 584.5v-3.8M1286.5 584.5v-10.5M1310.5 584.5v-3.8M1333.5 584.5v-3.8M1357.5 584.5v-10.5M1380.5 584.5v-3.8M1404.5 584.5v-3.8M1427.5 584.5v-10.5M1450.5 584.5v-3.8M1474.5 584.5v-3.8M1497.5 584.5v-10.5M1521.5 584.5v-3.8M1544.5 584.5v-3.8M1568.5 584.5v-10.5M1591.5 584.5v-3.8M1615.5 584.5v-3.8M1003.5 583.5h22M1003.5 562.5h22M1003.5 541.5h22M1003.5 520.5h22M1003.5 499.5h22M1005.5 669.5v-10.5M1028.5 669.5v-3.8M1052.5 669.5v-3.8M1075.5 669.5v-10.5M1099.5 669.5v-3.8M1122.5 669.5v-3.8M1146.5 669.5v-10.5M1169.5 669.5v-3.8M1193.5 669.5v-3.8M1216.5 669.5v-10.5M1239.5 669.5v-3.8M1263.5 669.5v-3.8M1286.5 669.5v-10.5M1310.5 669.5v-3.8M1333.5 669.5v-3.8M1357.5 669.5v-10.5M1380.5 669.5v-3.8M1404.5 669.5v-3.8M1427.5 669.5v-10.5M1450.5 669.5v-3.8M1474.5 669.5v-3.8M1497.5 669.5v-10.5M1521.5 669.5v-3.8M1544.5 669.5v-3.8M1568.5 669.5v-10.5M1591.5 669.5v-3.8M1615.5 669.5v-3.8M1003.5 669.5h22M1003.5 652.5h22M1003.5 635.5h22M1003.5 618.5h22M1003.5 600.5h22M1003.5 583.5h22M1005.5 754.5v-10.5M1028.5 754.5v-3.8M1052.5 754.5v-3.8M1075.5 754.5v-10.5M1099.5 754.5v-3.8M1122.5 754.5v-3.8M1146.5 754.5v-10.5M1169.5 754.5v-3.8M1193.5 754.5v-3.8M1216.5 754.5v-10.5M1239.5 754.5v-3.8M1263.5 754.5v-3.8M1286.5 754.5v-10.5M1310.5 754.5v-3.8M1333.5 754.5v-3.8M1357.5 754.5v-10.5M1380.5 754.5v-3.8M1404.5 754.5v-3.8M1427.5 754.5v-10.5M1450.5 754.5v-3.8M1474.5 754.5v-3.8M1497.5 754.5v-10.5M1521.5 754.5v-3.8M1544.5 754.5v-3.8M1568.5 754.5v-10.5M1591.5 754.5v-3.8M1615.5 754.5v-3.8M1003.5 754.5h22M1003.5 732.5h22M1003.5 711.5h22M1003.5 690.5h22M1003.5 669.5h22M1005.5 840.5v-10.5M1028.5 840.5v-3.8M1052.5 840.5v-3.8M1075.5 840.5v-10.5M1099.5 840.5v-3.8M1122.5 840.5v-3.8M1146.5 840.5v-10.5M1169.5 840.5v-3.8M1193.5 840.5v-3.8M1216.5 840.5v-10.5M1239.5 840.5v-3.8M1263.5 840.5v-3.8M1286.5 840.5v-10.5M1310.5 840.5v-3.8M1333.5 840.5v-3.8M1357.5 840.5v-10.5M1380.5 840.5v-3.8M1404.5 840.5v-3.8M1427.5 840.5v-10.5M1450.5 840.5v-3.8M1474.5 840.5v-3.8M1497.5 840.5v-10.5M1521.5 840.5v-3.8M1544.5 840.5v-3.8M1568.5 840.5v-10.5M1591.5 840.5v-3.8M1615.5 840.5v-3.8M1003.5 840.5h22M1003.5 825.5h22M1003.5 811.5h22M1003.5 797.5h22M1003.5 782.5h22M1003.5 768.5h22M1003.5 754.5h22M1005.5 925.5v-10.5M1028.5 925.5v-3.8M1052.5 925.5v-3.8M1075.5 925.5v-10.5M1099.5 925.5v-3.8M1122.5 925.5v-3.8M1146.5 925.5v-10.5M1169.5 925.5v-3.8M1193.5 925.5v-3.8M1216.5 925.5v-10.5M1239.5 925.5v-3.8M1263.5 925.5v-3.8M1286.5 925.5v-10.5M1310.5 925.5v-3.8M1333.5 925.5v-3.8M1357.5 925.5v-10.5M1380.5 925.5v-3.8M1404.5 925.5v-3.8M1427.5 925.5v-10.5M1450.5 925.5v-3.8M1474.5 925.5v-3.8M1497.5 925.5v-10.5M1521.5 925.5v-3.8M1544.5 925.5v-3.8M1568.5 925.5v-10.5M1591.5 925.5v-3.8M1615.5 925.5v-3.8M1003.5 925.5h22M1003.5 908.5h22M1003.5 891.5h22M1003.5 874.5h22M1003.5 857.5h22M1003.5 839.5h22M1005.5 1010.5v-10.5M1028.5 1010.5v-3.8M1052.5 1010.5v-3.8M1075.5 1010.5v-10.5M1099.5 1010.5v-3.8M1122.5 1010.5v-3.8M1146.5 1010.5v-10.5M1169.5 1010.5v-3.8M1193.5 1010.5v-3.8M1216.5 1010.5v-10.5M1239.5 1010.5v-3.8M1263.5 1010.5v-3.8M1286.5 1010.5v-10.5M1310.5 1010.5v-3.8M1333.5 1010.5v-3.8M1357.5 1010.5v-10.5M1380.5 1010.5v-3.8M1404.5 1010.5v-3.8M1427.5 1010.5v-10.5M1450.5 1010.5v-3.8M1474.5 1010.5v-3.8M1497.5 1010.5v-10.5M1521.5 1010.5v-3.8M1544.5 1010.5v-3.8M1568.5 1010.5v-10.5M1591.5 1010.5v-3.8M1615.5 1010.5v-3.8M1003.5 1009.5h22M1003.5 993.5h22M1003.5 976.5h22M1003.5 959.5h22M1003.5 942.5h22M1003.5 925.5h22"/>
<path fill="none" stroke="#000" stroke-width="1" d="M1003.5 109.5h8M1003.5 106.5h8M1003.5 103.5h8M1003.5 101.5h8M1003.5 95.5h8M1003.5 93.5h8M1003.5 90.5h8M1003.5 87.5h8M1003.5 82.5h8M1003.5 79.5h8M1003.5 76.5h8M1003.5 73.5h8M1003.5 68.5h8M1003.5 65.5h8M1003.5 62.5h8M1003.5 60.5h8M1003.5 54.5h8M1003.5 168.5h8M1003.5 165.5h8M1003.5 161.5h8M1003.5 157.5h8M1003.5 150.5h8M1003.5 146.5h8M1003.5 142.5h8M1003.5 139.5h8M1003.5 131.5h8M1003.5 128.5h8M1003.5 124.5h8M1003.5 120.5h8M1003.5 113.5h8M1003.5 228.5h8M1003.5 225.5h8M1003.5 222.5h8M1003.5 219.5h8M1003.5 213.5h8M1003.5 210.5h8M1003.5 207.5h8M1003.5 204.5h8M1003.5 198.5h8M1003.5 195.5h8M1003.5 192.5h8M1003.5 189.5h8M1003.5 183.5h8M1003.5 180.5h8M1003.5 177.5h8M1003.5 174.5h8M1003.5 286.5h8M1003.5 282.5h8M1003.5 279.5h8M1003.5 275.5h8M1003.5 268.5h8M1003.5 264.5h8M1003.5 261.5h8M1003.5 257.5h8M1003.5 250.5h8M1003.5 247.5h8M1003.5 243.5h8M1003.5 239.5h8M1003.5 232.5h8M1003.5 343.5h8M1003.5 339.5h8M1003.5 336.5h8M1003.5 332.5h8M1003.5 324.5h8M1003.5 321.5h8M1003.5 317.5h8M1003.5 313.5h8M1003.5 306.5h8M1003.5 302.5h8M1003.5 298.5h8M1003.5 294.5h8M1003.5 407.5h8M1003.5 405.5h8M1003.5 403.5h8M1003.5 401.5h8M1003.5 396.5h8M1003.5 394.5h8M1003.5 392.5h8M1003.5 390.5h8M1003.5 386.5h8M1003.5 384.5h8M1003.5 382.5h8M1003.5 379.5h8M1003.5 375.5h8M1003.5 373.5h8M1003.5 371.5h8M1003.5 369.5h8M1003.5 365.5h8M1003.5 362.5h8M1003.5 360.5h8M1003.5 358.5h8M1003.5 354.5h8M1003.5 352.5h8M1003.5 350.5h8M1003.5 411.5h8M1003.5 413.5h8M1003.5 495.5h8M1003.5 491.5h8M1003.5 488.5h8M1003.5 485.5h8M1003.5 478.5h8M1003.5 475.5h8M1003.5 471.5h8M1003.5 468.5h8M1003.5 461.5h8M1003.5 458.5h8M1003.5 454.5h8M1003.5 451.5h8M1003.5 444.5h8M1003.5 441.5h8M1003.5 437.5h8M1003.5 434.5h8M1003.5 427.5h8M1003.5 424.5h8M1003.5 420.5h8M1003.5 417.5h8M1003.5 579.5h8M1003.5 575.5h8M1003.5 571.5h8M1003.5 567.5h8M1003.5 558.5h8M1003.5 554.5h8M1003.5 550.5h8M1003.5 546.5h8M1003.5 537.5h8M1003.5 533.5h8M1003.5 529.5h8M1003.5 525.5h8M1003.5 516.5h8M1003.5 512.5h8M1003.5 508.5h8M1003.5 504.5h8M1003.5 665.5h8M1003.5 662.5h8M1003.5 659.5h8M1003.5 655.5h8M1003.5 648.5h8M1003.5 645.5h8M1003.5 641.5h8M1003.5 638.5h8M1003.5 631.5h8M1003.5 628.5h8M1003.5 624.5h8M1003.5 621.5h8M1003.5 614.5h8M1003.5 611.5h8M1003.5 607.5h8M1003.5 604.5h8M1003.5 597.5h8M1003.5 594.5h8M1003.5 590.5h8M1003.5 587.5h8M1003.5 749.5h8M1003.5 745.5h8M1003.5 741.5h8M1003.5 737.5h8M1003.5 728.5h8M1003.5 724.5h8M1003.5 720.5h8M1003.5 716.5h8M1003.5 707.5h8M1003.5 703.5h8M1003.5 699.5h8M1003.5 694.5h8M1003.5 686.5h8M1003.5 682.5h8M1003.5 678.5h8M1003.5 673.5h8M1003.5 837.5h8M1003.5 834.5h8M1003.5 831.5h8M1003.5 828.5h8M1003.5 822.5h8M1003.5 820.5h8M1003.5 817.5h8M1003.5 814.5h8M1003.5 808.5h8M1003.5 805.5h8M1003.5 802.5h8M1003.5 800.5h8M1003.5 794.5h8M1003.5 791.5h8M1003.5 788.5h8M1003.5 785.5h8M1003.5 780.5h8M1003.5 777.5h8M1003.5 774.5h8M1003.5 771.5h8M1003.5 765.5h8M1003.5 762.5h8M1003.5 760.5h8M1003.5 757.5h8M1003.5 921.5h8M1003.5 918.5h8M1003.5 915.5h8M1003.5 911.5h8M1003.5 904.5h8M1003.5 901.5h8M1003.5 898.5h8M1003.5 894.5h8M1003.5 887.5h8M1003.5 884.5h8M1003.5 880.5h8M1003.5 877.5h8M1003.5 870.5h8M1003.5 867.5h8M1003.5 863.5h8M1003.5 860.5h8M1003.5 853.5h8M1003.5 850.5h8M1003.5 846.5h8M1003.5 843.5h8M1003.5 1006.5h8M1003.5 1003.5h8M1003.5 999.5h8M1003.5 996.5h8M1003.5 989.5h8M1003.5 986.5h8M1003.5 983.5h8M1003.5 979.5h8M1003.5 972.5h8M1003.5 969.5h8M1003.5 966.5h8M1003.5 962.5h8M1003.5 956.5h8M1003.5 952.5h8M1003.5 949.5h8M1003.5 946.5h8M1003.5 939.5h8M1003.5 935.5h8M1003.5 932.5h8M1003.5 929.5h8"/>
<path fill="none" stroke="#000" stroke-width="1.2" d="M1003.5 53.5V1010.5M1636.5 53.5V1010.5M1003.5 53.5H1636.5M1003.5 414.5H1636.5"/>
</g>
<text x="55.8" y="203.5" font-family='"Liberation Mono", monospace' font-size="11.9" text-anchor="middle" font-weight="normal" fill="#000" stroke="#000" stroke-width="0.3" transform="rotate(-90 55.8 203.5)">Luminosity</text>
<text x="64" y="259.7" font-family='"Liberation Mono", monospace' font-size="11.9" text-anchor="middle" font-weight="normal" fill="#000" stroke="#000" stroke-width="0.3" transform="rotate(-90 64 259.7)">I[mA]</text>
<text x="64.5" y="317" font-family='"Liberation Mono", monospace' font-size="11.8" text-anchor="middle" font-weight="normal" fill="#000" stroke="#000" stroke-width="0.3" transform="rotate(-90 64.5 317)">Rep.</text>
<text x="80" y="317.7" font-family='"Liberation Mono", monospace' font-size="11.5" text-anchor="middle" font-weight="normal" fill="#000" stroke="#000" stroke-width="0.3" transform="rotate(-90 80 317.7)">Rate[Hz]</text>
<text x="87.4" y="372.5" font-family='"Liberation Mono", monospace' font-size="12.1" text-anchor="middle" font-weight="normal" fill="#000" stroke="#000" stroke-width="0.3" transform="rotate(-90 87.4 372.5)">Q[nC]</text>
<text x="86.6" y="428.6" font-family='"Liberation Mono", monospace' font-size="11.9" text-anchor="middle" font-weight="normal" fill="#000" stroke="#000" stroke-width="0.3" transform="rotate(-90 86.6 428.6)">[mA/s]</text>
<text x="71.1" y="484" font-family='"Liberation Mono", monospace' font-size="12.2" text-anchor="middle" font-weight="normal" fill="#000" stroke="#000" stroke-width="0.3" transform="rotate(-90 71.1 484)">[%]</text>
<text x="49.1" y="556" font-family='"Liberation Mono", monospace' font-size="13.7" text-anchor="middle" font-weight="bold" fill="#000" transform="rotate(-90 49.1 556)">ECL_BW</text>
<text x="76" y="636.6" font-family='"Liberation Mono", monospace' font-size="13.3" text-anchor="middle" font-weight="bold" fill="#000" transform="rotate(-90 76 636.6)">[ms]</text>
<text x="85.9" y="717.7" font-family='"Liberation Mono", monospace' font-size="11.9" text-anchor="middle" font-weight="normal" fill="#000" stroke="#000" stroke-width="0.3" transform="rotate(-90 85.9 717.7)">[Hz]</text>
<text x="67.2" y="798" font-family='"Liberation Mono", monospace' font-size="13.2" text-anchor="middle" font-weight="bold" fill="#000" transform="rotate(-90 67.2 798)">[uA]</text>
<text x="76" y="878" font-family='"Liberation Mono", monospace' font-size="13.3" text-anchor="middle" font-weight="bold" fill="#000" transform="rotate(-90 76 878)">[mRad/s]</text>
<text x="70.9" y="957" font-family='"Liberation Mono", monospace' font-size="11.6" text-anchor="middle" font-weight="normal" fill="#000" stroke="#000" stroke-width="0.3" transform="rotate(-90 70.9 957)">VXD</text>
<text x="37.5" y="695.7" font-family='"Liberation Mono", monospace' font-size="14.5" text-anchor="start" font-weight="normal" fill="#000" stroke="#000" stroke-width="0.3">x10</text>
<text x="63.5" y="688.7" font-family='"Liberation Mono", monospace' font-size="11" text-anchor="start" font-weight="normal" fill="#000" stroke="#000" stroke-width="0.3">6</text>
<text x="957.9" y="81.5" font-family='"Liberation Mono", monospace' font-size="12.1" text-anchor="middle" font-weight="normal" fill="#000" stroke="#000" stroke-width="0.3" transform="rotate(-90 957.9 81.5)">Luminosity</text>
<text x="965.3" y="141.7" font-family='"Liberation Mono", monospace' font-size="11.7" text-anchor="middle" font-weight="normal" fill="#000" stroke="#000" stroke-width="0.3" transform="rotate(-90 965.3 141.7)">I[mA]</text>
<text x="966.4" y="202" font-family='"Liberation Mono", monospace' font-size="12.3" text-anchor="middle" font-weight="normal" fill="#000" stroke="#000" stroke-width="0.3" transform="rotate(-90 966.4 202)">Rep.</text>
<text x="981.3" y="202.5" font-family='"Liberation Mono", monospace' font-size="11.6" text-anchor="middle" font-weight="normal" fill="#000" stroke="#000" stroke-width="0.3" transform="rotate(-90 981.3 202.5)">Rate[Hz]</text>
<text x="973.3" y="261.3" font-family='"Liberation Mono", monospace' font-size="11.6" text-anchor="middle" font-weight="normal" fill="#000" stroke="#000" stroke-width="0.3" transform="rotate(-90 973.3 261.3)">Q[nC]</text>
<text x="973" y="320.6" font-family='"Liberation Mono", monospace' font-size="12.2" text-anchor="middle" font-weight="normal" fill="#000" stroke="#000" stroke-width="0.3" transform="rotate(-90 973 320.6)">[mA/s]</text>
<text x="973.6" y="379" font-family='"Liberation Mono", monospace' font-size="12.8" text-anchor="middle" font-weight="normal" fill="#000" stroke="#000" stroke-width="0.3" transform="rotate(-90 973.6 379)">[%]</text>
<text x="960.5" y="456.4" font-family='"Liberation Mono", monospace' font-size="15.2" text-anchor="middle" font-weight="bold" fill="#000" transform="rotate(-90 960.5 456.4)">ECL_FW</text>
<text x="978.8" y="542" font-family='"Liberation Mono", monospace' font-size="15.3" text-anchor="middle" font-weight="bold" fill="#000" transform="rotate(-90 978.8 542)">[ms]</text>
<text x="975.7" y="626.8" font-family='"Liberation Mono", monospace' font-size="12" text-anchor="middle" font-weight="normal" fill="#000" stroke="#000" stroke-width="0.3" transform="rotate(-90 975.7 626.8)">Photon</text>
<text x="991.3" y="626.8" font-family='"Liberation Mono", monospace' font-size="12" text-anchor="middle" font-weight="normal" fill="#000" stroke="#000" stroke-width="0.3" transform="rotate(-90 991.3 626.8)">Rate</text>
<text x="938.9" y="603.2" font-family='"Liberation Mono", monospace' font-size="14.5" text-anchor="start" font-weight="normal" fill="#000" stroke="#000" stroke-width="0.3">x10</text>
<text x="964.9" y="596.2" font-family='"Liberation Mono", monospace' font-size="11" text-anchor="start" font-weight="normal" fill="#000" stroke="#000" stroke-width="0.3">5</text>
<text x="938.9" y="688" font-family='"Liberation Mono", monospace' font-size="14.5" text-anchor="start" font-weight="normal" fill="#000" stroke="#000" stroke-width="0.3">x10</text>
<text x="964.9" y="681" font-family='"Liberation Mono", monospace' font-size="11" text-anchor="start" font-weight="normal" fill="#000" stroke="#000" stroke-width="0.3">6</text>
<text x="987.9" y="712" font-family='"Liberation Mono", monospace' font-size="11.6" text-anchor="middle" font-weight="normal" fill="#000" stroke="#000" stroke-width="0.3" transform="rotate(-90 987.9 712)">[Hz]</text>
<text x="969.2" y="796.8" font-family='"Liberation Mono", monospace' font-size="14.8" text-anchor="middle" font-weight="bold" fill="#000" transform="rotate(-90 969.2 796.8)">[uA]</text>
<text x="978.7" y="882" font-family='"Liberation Mono", monospace' font-size="15" text-anchor="middle" font-weight="bold" fill="#000" transform="rotate(-90 978.7 882)">[mRad/s]</text>
<text x="964.4" y="966.4" font-family='"Liberation Mono", monospace' font-size="15" text-anchor="middle" font-weight="bold" fill="#000" transform="rotate(-90 964.4 966.4)">VXD</text>
<text x="84.6" y="1025.9" font-family='"Liberation Mono", monospace' font-size="20.5" text-anchor="start" font-weight="normal" fill="#000" stroke="#000" stroke-width="0.3">16</text>
<text x="108" y="1015.9" font-family='"Liberation Mono", monospace' font-size="16.5" text-anchor="start" font-weight="normal" fill="#000" stroke="#000" stroke-width="0.3">h</text>
<text x="117.8" y="1025.9" font-family='"Liberation Mono", monospace' font-size="20.5" text-anchor="start" font-weight="normal" fill="#000" stroke="#000" stroke-width="0.3">0</text>
<text x="129.6" y="1015.9" font-family='"Liberation Mono", monospace' font-size="16.5" text-anchor="start" font-weight="normal" fill="#000" stroke="#000" stroke-width="0.3">m</text>
<text x="139.7" y="1025.9" font-family='"Liberation Mono", monospace' font-size="20.5" text-anchor="start" font-weight="normal" fill="#000" stroke="#000" stroke-width="0.3">0</text>
<text x="151.9" y="1015.9" font-family='"Liberation Mono", monospace' font-size="16.5" text-anchor="start" font-weight="normal" fill="#000" stroke="#000" stroke-width="0.3">s</text>
<text x="158.7" y="1025.9" font-family='"Liberation Mono", monospace' font-size="20.5" text-anchor="start" font-weight="normal" fill="#000" stroke="#000" stroke-width="0.3">17</text>
<text x="181.8" y="1015.9" font-family='"Liberation Mono", monospace' font-size="16.5" text-anchor="start" font-weight="normal" fill="#000" stroke="#000" stroke-width="0.3">h</text>
<text x="229.4" y="1025.9" font-family='"Liberation Mono", monospace' font-size="20.5" text-anchor="start" font-weight="normal" fill="#000" stroke="#000" stroke-width="0.3">18</text>
<text x="252.9" y="1015.9" font-family='"Liberation Mono", monospace' font-size="16.5" text-anchor="start" font-weight="normal" fill="#000" stroke="#000" stroke-width="0.3">h</text>
<text x="299.7" y="1025.9" font-family='"Liberation Mono", monospace' font-size="20.5" text-anchor="start" font-weight="normal" fill="#000" stroke="#000" stroke-width="0.3">19</text>
<text x="323.3" y="1015.9" font-family='"Liberation Mono", monospace' font-size="16.5" text-anchor="start" font-weight="normal" fill="#000" stroke="#000" stroke-width="0.3">h</text>
<text x="370.1" y="1025.9" font-family='"Liberation Mono", monospace' font-size="20.5" text-anchor="start" font-weight="normal" fill="#000" stroke="#000" stroke-width="0.3">20</text>
<text x="393.6" y="1015.9" font-family='"Liberation Mono", monospace' font-size="16.5" text-anchor="start" font-weight="normal" fill="#000" stroke="#000" stroke-width="0.3">h</text>
<text x="440.4" y="1025.9" font-family='"Liberation Mono", monospace' font-size="20.5" text-anchor="start" font-weight="normal" fill="#000" stroke="#000" stroke-width="0.3">21</text>
<text x="464" y="1015.9" font-family='"Liberation Mono", monospace' font-size="16.5" text-anchor="start" font-weight="normal" fill="#000" stroke="#000" stroke-width="0.3">h</text>
<text x="510.8" y="1025.9" font-family='"Liberation Mono", monospace' font-size="20.5" text-anchor="start" font-weight="normal" fill="#000" stroke="#000" stroke-width="0.3">22</text>
<text x="534.3" y="1015.9" font-family='"Liberation Mono", monospace' font-size="16.5" text-anchor="start" font-weight="normal" fill="#000" stroke="#000" stroke-width="0.3">h</text>
<text x="581.1" y="1025.9" font-family='"Liberation Mono", monospace' font-size="20.5" text-anchor="start" font-weight="normal" fill="#000" stroke="#000" stroke-width="0.3">23</text>
<text x="604.7" y="1015.9" font-family='"Liberation Mono", monospace' font-size="16.5" text-anchor="start" font-weight="normal" fill="#000" stroke="#000" stroke-width="0.3">h</text>
<text x="651.4" y="1025.9" font-family='"Liberation Mono", monospace' font-size="20.5" text-anchor="start" font-weight="normal" fill="#000" stroke="#000" stroke-width="0.3">0</text>
<text x="663.8" y="1015.9" font-family='"Liberation Mono", monospace' font-size="16.5" text-anchor="start" font-weight="normal" fill="#000" stroke="#000" stroke-width="0.3">h</text>
<text x="673" y="1025.9" font-family='"Liberation Mono", monospace' font-size="20.5" text-anchor="start" font-weight="normal" fill="#000" stroke="#000" stroke-width="0.3">0</text>
<text x="685.4" y="1015.9" font-family='"Liberation Mono", monospace' font-size="16.5" text-anchor="start" font-weight="normal" fill="#000" stroke="#000" stroke-width="0.3">m</text>
<text x="47.2" y="1049.8" font-family='"Liberation Mono", monospace' font-size="20.5" text-anchor="start" font-weight="normal" fill="#000" stroke="#000" stroke-width="0.3">2/9/2026</text>
<text x="639.1" y="1049.8" font-family='"Liberation Mono", monospace' font-size="20.5" text-anchor="start" font-weight="normal" fill="#000" stroke="#000" stroke-width="0.3">2/10</text>
<text x="984.6" y="1036" font-family='"Liberation Mono", monospace' font-size="20.5" text-anchor="start" font-weight="normal" fill="#000" stroke="#000" stroke-width="0.3">16</text>
<text x="1008" y="1026" font-family='"Liberation Mono", monospace' font-size="16.5" text-anchor="start" font-weight="normal" fill="#000" stroke="#000" stroke-width="0.3">h</text>
<text x="1017.8" y="1036" font-family='"Liberation Mono", monospace' font-size="20.5" text-anchor="start" font-weight="normal" fill="#000" stroke="#000" stroke-width="0.3">0</text>
<text x="1029.6" y="1026" font-family='"Liberation Mono", monospace' font-size="16.5" text-anchor="start" font-weight="normal" fill="#000" stroke="#000" stroke-width="0.3">m</text>
<text x="1039.7" y="1036" font-family='"Liberation Mono", monospace' font-size="20.5" text-anchor="start" font-weight="normal" fill="#000" stroke="#000" stroke-width="0.3">0</text>
<text x="1051.9" y="1026" font-family='"Liberation Mono", monospace' font-size="16.5" text-anchor="start" font-weight="normal" fill="#000" stroke="#000" stroke-width="0.3">s</text>
<text x="1058.7" y="1036" font-family='"Liberation Mono", monospace' font-size="20.5" text-anchor="start" font-weight="normal" fill="#000" stroke="#000" stroke-width="0.3">17</text>
<text x="1081.8" y="1026" font-family='"Liberation Mono", monospace' font-size="16.5" text-anchor="start" font-weight="normal" fill="#000" stroke="#000" stroke-width="0.3">h</text>
<text x="1129.4" y="1036" font-family='"Liberation Mono", monospace' font-size="20.5" text-anchor="start" font-weight="normal" fill="#000" stroke="#000" stroke-width="0.3">18</text>
<text x="1152.9" y="1026" font-family='"Liberation Mono", monospace' font-size="16.5" text-anchor="start" font-weight="normal" fill="#000" stroke="#000" stroke-width="0.3">h</text>
<text x="1199.7" y="1036" font-family='"Liberation Mono", monospace' font-size="20.5" text-anchor="start" font-weight="normal" fill="#000" stroke="#000" stroke-width="0.3">19</text>
<text x="1223.3" y="1026" font-family='"Liberation Mono", monospace' font-size="16.5" text-anchor="start" font-weight="normal" fill="#000" stroke="#000" stroke-width="0.3">h</text>
<text x="1270.1" y="1036" font-family='"Liberation Mono", monospace' font-size="20.5" text-anchor="start" font-weight="normal" fill="#000" stroke="#000" stroke-width="0.3">20</text>
<text x="1293.6" y="1026" font-family='"Liberation Mono", monospace' font-size="16.5" text-anchor="start" font-weight="normal" fill="#000" stroke="#000" stroke-width="0.3">h</text>
<text x="1340.4" y="1036" font-family='"Liberation Mono", monospace' font-size="20.5" text-anchor="start" font-weight="normal" fill="#000" stroke="#000" stroke-width="0.3">21</text>
<text x="1364" y="1026" font-family='"Liberation Mono", monospace' font-size="16.5" text-anchor="start" font-weight="normal" fill="#000" stroke="#000" stroke-width="0.3">h</text>
<text x="1410.8" y="1036" font-family='"Liberation Mono", monospace' font-size="20.5" text-anchor="start" font-weight="normal" fill="#000" stroke="#000" stroke-width="0.3">22</text>
<text x="1434.3" y="1026" font-family='"Liberation Mono", monospace' font-size="16.5" text-anchor="start" font-weight="normal" fill="#000" stroke="#000" stroke-width="0.3">h</text>
<text x="1481.1" y="1036" font-family='"Liberation Mono", monospace' font-size="20.5" text-anchor="start" font-weight="normal" fill="#000" stroke="#000" stroke-width="0.3">23</text>
<text x="1504.7" y="1026" font-family='"Liberation Mono", monospace' font-size="16.5" text-anchor="start" font-weight="normal" fill="#000" stroke="#000" stroke-width="0.3">h</text>
<text x="1551.4" y="1036" font-family='"Liberation Mono", monospace' font-size="20.5" text-anchor="start" font-weight="normal" fill="#000" stroke="#000" stroke-width="0.3">0</text>
<text x="1563.8" y="1026" font-family='"Liberation Mono", monospace' font-size="16.5" text-anchor="start" font-weight="normal" fill="#000" stroke="#000" stroke-width="0.3">h</text>
<text x="1573" y="1036" font-family='"Liberation Mono", monospace' font-size="20.5" text-anchor="start" font-weight="normal" fill="#000" stroke="#000" stroke-width="0.3">0</text>
<text x="1585.4" y="1026" font-family='"Liberation Mono", monospace' font-size="16.5" text-anchor="start" font-weight="normal" fill="#000" stroke="#000" stroke-width="0.3">m</text>
<text x="947.2" y="1060" font-family='"Liberation Mono", monospace' font-size="20.5" text-anchor="start" font-weight="normal" fill="#000" stroke="#000" stroke-width="0.3">2/9/2026</text>
<text x="1539.1" y="1060" font-family='"Liberation Mono", monospace' font-size="20.5" text-anchor="start" font-weight="normal" fill="#000" stroke="#000" stroke-width="0.3">2/10</text>
<rect x="795.5" y="248.5" width="85" height="46" fill="none" stroke="#000" stroke-width="1.1"/>
<rect x="881" y="250" width="1.2" height="46" fill="#000"/>
<rect x="797" y="295" width="85" height="1.2" fill="#000"/>
<line x1="802.6" y1="262.2" x2="842.6" y2="262.2" stroke="#ff0000" stroke-width="1.4"/>
<text x="846.6" y="267.2" font-family='"Liberation Mono", monospace' font-size="15" text-anchor="start" font-weight="normal" fill="#000" stroke="#000" stroke-width="0.3">LER</text>
<line x1="802.6" y1="280.4" x2="842.6" y2="280.4" stroke="#0000ff" stroke-width="1.4"/>
<text x="846.6" y="285.4" font-family='"Liberation Mono", monospace' font-size="15" text-anchor="start" font-weight="normal" fill="#000" stroke="#000" stroke-width="0.3">HER</text>
<rect x="780.5" y="300.5" width="100" height="40" fill="none" stroke="#000" stroke-width="1.1"/>
<rect x="881" y="302" width="1.2" height="40" fill="#000"/>
<rect x="782" y="341" width="100" height="1.2" fill="#000"/>
<line x1="787.5" y1="319.3" x2="827.5" y2="319.3" stroke="#ff2a9a" stroke-width="1.4"/>
<text x="833" y="328" font-family='"Liberation Sans", sans-serif' font-size="24.6" textLength="41" lengthAdjust="spacingAndGlyphs">LER</text>
<rect x="733.5" y="361.5" width="147" height="46" fill="none" stroke="#000" stroke-width="1.1"/>
<rect x="881" y="363" width="1.2" height="46" fill="#000"/>
<rect x="735" y="408" width="147" height="1.2" fill="#000"/>
<circle cx="741.5" cy="375.5" r="2.3" fill="#3f5fcf"/>
<text x="765.5" y="380.5" font-family='"Liberation Mono", monospace' font-size="15" text-anchor="start" font-weight="normal" fill="#000" stroke="#000" stroke-width="0.3">QMD11P_1(nC)</text>
<circle cx="741.5" cy="393.4" r="2.3" fill="#00cc00"/>
<text x="765.5" y="398.4" font-family='"Liberation Mono", monospace' font-size="15" text-anchor="start" font-weight="normal" fill="#000" stroke="#000" stroke-width="0.3">QMD11P_2(nC)</text>
<rect x="769.5" y="417.5" width="111" height="29" fill="none" stroke="#000" stroke-width="1.1"/>
<rect x="881" y="419" width="1.2" height="29" fill="#000"/>
<rect x="771" y="447" width="111" height="1.2" fill="#000"/>
<circle cx="777.3" cy="431.5" r="2.3" fill="#a020f0"/>
<text x="801.9" y="436.5" font-family='"Liberation Mono", monospace' font-size="15" text-anchor="start" font-weight="normal" fill="#000" stroke="#000" stroke-width="0.3">Inj.Rate</text>
<rect x="724.5" y="473.5" width="156" height="65" fill="none" stroke="#000" stroke-width="1.1"/>
<rect x="881" y="475" width="1.2" height="65" fill="#000"/>
<rect x="726" y="539" width="156" height="1.2" fill="#000"/>
<circle cx="732.6" cy="486.9" r="2.3" fill="#000"/>
<text x="756.3" y="491.9" font-family='"Liberation Mono", monospace' font-size="15" text-anchor="start" font-weight="normal" fill="#000" stroke="#000" stroke-width="0.3">Inj.Eff(BCM1)</text>
<circle cx="732.6" cy="504.5" r="2.3" fill="#808080"/>
<text x="756.3" y="509.5" font-family='"Liberation Mono", monospace' font-size="15" text-anchor="start" font-weight="normal" fill="#000" stroke="#000" stroke-width="0.3">Inj.Eff(BCM2)</text>
<text x="756.3" y="527.5" font-family='"Liberation Mono", monospace' font-size="15" text-anchor="start" font-weight="normal" fill="#000" stroke="#000" stroke-width="0.3">Inj.Eff</text>
<rect x="768.5" y="533.5" width="112" height="28" fill="none" stroke="#000" stroke-width="1.1"/>
<rect x="881" y="535" width="1.2" height="28" fill="#000"/>
<rect x="770" y="562" width="112" height="1.2" fill="#000"/>
<line x1="775.3" y1="547.4" x2="815.3" y2="547.4" stroke="#008a44" stroke-width="1.4"/>
<text x="819.9" y="552.4" font-family='"Liberation Mono", monospace' font-size="15" text-anchor="start" font-weight="normal" fill="#000" stroke="#000" stroke-width="0.3">ECL_BW</text>
<rect x="750.5" y="604.5" width="130" height="46" fill="none" stroke="#000" stroke-width="1.1"/>
<rect x="881" y="606" width="1.2" height="46" fill="#000"/>
<rect x="752" y="651" width="130" height="1.2" fill="#000"/>
<line x1="757" y1="627.1" x2="797" y2="627.1" stroke="#f5603c" stroke-width="1.4"/>
<text x="801.4" y="623.5" font-family='"Liberation Mono", monospace' font-size="15" text-anchor="start" font-weight="normal" fill="#000" stroke="#000" stroke-width="0.3">ECL BG</text>
<text x="801.4" y="641" font-family='"Liberation Mono", monospace' font-size="15" text-anchor="start" font-weight="normal" fill="#000" stroke="#000" stroke-width="0.3">Duration</text>
<rect x="750.5" y="693.5" width="131" height="28" fill="none" stroke="#000" stroke-width="1.1"/>
<rect x="882" y="695" width="1.2" height="28" fill="#000"/>
<rect x="752" y="722" width="131" height="1.2" fill="#000"/>
<line x1="757.1" y1="707.7" x2="797.1" y2="707.7" stroke="#4878f0" stroke-width="1.4"/>
<text x="801" y="712.7" font-family='"Liberation Mono", monospace' font-size="15" text-anchor="start" font-weight="normal" fill="#000" stroke="#000" stroke-width="0.3">TOP [Hz]</text>
<rect x="768.5" y="775.5" width="113" height="45" fill="none" stroke="#000" stroke-width="1.1"/>
<rect x="882" y="777" width="1.2" height="45" fill="#000"/>
<rect x="770" y="821" width="113" height="1.2" fill="#000"/>
<line x1="775.2" y1="787.9" x2="815.2" y2="787.9" stroke="#00cc00" stroke-width="1.4"/>
<text x="819.4" y="792.9" font-family='"Liberation Mono", monospace' font-size="15" text-anchor="start" font-weight="normal" fill="#000" stroke="#000" stroke-width="0.3">CDC</text>
<line x1="775.2" y1="806.6" x2="815.2" y2="806.6" stroke="#008000" stroke-width="1.4"/>
<text x="819.4" y="811.6" font-family='"Liberation Mono", monospace' font-size="15" text-anchor="start" font-weight="normal" fill="#000" stroke="#000" stroke-width="0.3">CDC_av</text>
<rect x="759.5" y="854.5" width="122" height="28" fill="none" stroke="#000" stroke-width="1.1"/>
<rect x="882" y="856" width="1.2" height="28" fill="#000"/>
<rect x="761" y="883" width="122" height="1.2" fill="#000"/>
<line x1="766.2" y1="868.4" x2="806.2" y2="868.4" stroke="#ee82ee" stroke-width="1.4"/>
<text x="810.3" y="873.4" font-family='"Liberation Mono", monospace' font-size="15" text-anchor="start" font-weight="normal" fill="#000" stroke="#000" stroke-width="0.3">Diamond</text>
<rect x="741.5" y="934.5" width="140" height="46" fill="none" stroke="#000" stroke-width="1.1"/>
<rect x="882" y="936" width="1.2" height="46" fill="#000"/>
<rect x="743" y="981" width="140" height="1.2" fill="#000"/>
<line x1="748.1" y1="948.3" x2="788.1" y2="948.3" stroke="#0000ff" stroke-width="1.4"/>
<text x="792" y="953.3" font-family='"Liberation Mono", monospace' font-size="15" text-anchor="start" font-weight="normal" fill="#000" stroke="#000" stroke-width="0.3">VXD_FW225</text>
<line x1="748.1" y1="966.4" x2="788.1" y2="966.4" stroke="#ff0000" stroke-width="1.4"/>
<text x="792" y="971.4" font-family='"Liberation Mono", monospace' font-size="15" text-anchor="start" font-weight="normal" fill="#000" stroke="#000" stroke-width="0.3">VXD_FW135</text>
<rect x="1697.5" y="128.5" width="86" height="47" fill="none" stroke="#000" stroke-width="1.1"/>
<rect x="1784" y="130" width="1.2" height="47" fill="#000"/>
<rect x="1699" y="176" width="86" height="1.2" fill="#000"/>
<line x1="1704.5" y1="142.5" x2="1744.5" y2="142.5" stroke="#ff0000" stroke-width="1.4"/>
<text x="1748.5" y="147.5" font-family='"Liberation Mono", monospace' font-size="15" text-anchor="start" font-weight="normal" fill="#000" stroke="#000" stroke-width="0.3">LER</text>
<line x1="1704.5" y1="160.7" x2="1744.5" y2="160.7" stroke="#0000ff" stroke-width="1.4"/>
<text x="1748.5" y="165.7" font-family='"Liberation Mono", monospace' font-size="15" text-anchor="start" font-weight="normal" fill="#000" stroke="#000" stroke-width="0.3">HER</text>
<rect x="1682.5" y="183.5" width="101" height="40" fill="none" stroke="#000" stroke-width="1.1"/>
<rect x="1784" y="185" width="1.2" height="40" fill="#000"/>
<rect x="1684" y="224" width="101" height="1.2" fill="#000"/>
<line x1="1688.8" y1="202.5" x2="1728.8" y2="202.5" stroke="#3399ff" stroke-width="1.4"/>
<text x="1734.6" y="210.8" font-family='"Liberation Sans", sans-serif' font-size="24.8" textLength="41.5" lengthAdjust="spacingAndGlyphs">HER</text>
<rect x="1644.5" y="247.5" width="139" height="46" fill="none" stroke="#000" stroke-width="1.1"/>
<rect x="1784" y="249" width="1.2" height="46" fill="#000"/>
<rect x="1646" y="294" width="139" height="1.2" fill="#000"/>
<circle cx="1652.6" cy="261.1" r="2.3" fill="#3f5fcf"/>
<text x="1676.6" y="266.1" font-family='"Liberation Mono", monospace' font-size="15" text-anchor="start" font-weight="normal" fill="#000" stroke="#000" stroke-width="0.3">QMD8E_1(nC)</text>
<circle cx="1652.6" cy="279" r="2.3" fill="#00cc00"/>
<text x="1676.6" y="284" font-family='"Liberation Mono", monospace' font-size="15" text-anchor="start" font-weight="normal" fill="#000" stroke="#000" stroke-width="0.3">QMD8E_2(nC)</text>
<rect x="1671.5" y="307.5" width="112" height="29" fill="none" stroke="#000" stroke-width="1.1"/>
<rect x="1784" y="309" width="1.2" height="29" fill="#000"/>
<rect x="1673" y="337" width="112" height="1.2" fill="#000"/>
<circle cx="1679.2" cy="321.9" r="2.3" fill="#a020f0"/>
<text x="1703.8" y="326.9" font-family='"Liberation Mono", monospace' font-size="15" text-anchor="start" font-weight="normal" fill="#000" stroke="#000" stroke-width="0.3">Inj.Rate</text>
<rect x="1626.5" y="366.5" width="157" height="64" fill="none" stroke="#000" stroke-width="1.1"/>
<rect x="1784" y="368" width="1.2" height="64" fill="#000"/>
<rect x="1628" y="431" width="157" height="1.2" fill="#000"/>
<circle cx="1634.4" cy="379.9" r="2.3" fill="#000"/>
<text x="1659" y="384.9" font-family='"Liberation Mono", monospace' font-size="15" text-anchor="start" font-weight="normal" fill="#000" stroke="#000" stroke-width="0.3">Inj.Eff(BCM1)</text>
<circle cx="1634.4" cy="397.5" r="2.3" fill="#808080"/>
<text x="1659" y="402.5" font-family='"Liberation Mono", monospace' font-size="15" text-anchor="start" font-weight="normal" fill="#000" stroke="#000" stroke-width="0.3">Inj.Eff(BCM2)</text>
<text x="1659" y="420.5" font-family='"Liberation Mono", monospace' font-size="15" text-anchor="start" font-weight="normal" fill="#000" stroke="#000" stroke-width="0.3">Inj.Eff</text>
<rect x="1670.5" y="431.5" width="113" height="28" fill="none" stroke="#000" stroke-width="1.1"/>
<rect x="1784" y="433" width="1.2" height="28" fill="#000"/>
<rect x="1672" y="460" width="113" height="1.2" fill="#000"/>
<line x1="1677.6" y1="445.1" x2="1717.6" y2="445.1" stroke="#008a44" stroke-width="1.4"/>
<text x="1722.2" y="450.1" font-family='"Liberation Mono", monospace' font-size="15" text-anchor="start" font-weight="normal" fill="#000" stroke="#000" stroke-width="0.3">ECL_FW</text>
<rect x="1652.5" y="506.5" width="131" height="46" fill="none" stroke="#000" stroke-width="1.1"/>
<rect x="1784" y="508" width="1.2" height="46" fill="#000"/>
<rect x="1654" y="553" width="131" height="1.2" fill="#000"/>
<line x1="1658.6" y1="529.4" x2="1698.6" y2="529.4" stroke="#f5603c" stroke-width="1.4"/>
<text x="1703.3" y="525.5" font-family='"Liberation Mono", monospace' font-size="15" text-anchor="start" font-weight="normal" fill="#000" stroke="#000" stroke-width="0.3">ECL BG</text>
<text x="1703.3" y="543" font-family='"Liberation Mono", monospace' font-size="15" text-anchor="start" font-weight="normal" fill="#000" stroke="#000" stroke-width="0.3">Duration</text>
<rect x="1679.5" y="600.5" width="104" height="46" fill="none" stroke="#000" stroke-width="1.1"/>
<rect x="1784" y="602" width="1.2" height="46" fill="#000"/>
<rect x="1681" y="647" width="104" height="1.2" fill="#000"/>
<line x1="1686.5" y1="614.1" x2="1726.5" y2="614.1" stroke="#ffa500" stroke-width="1.4"/>
<text x="1730.5" y="619.1" font-family='"Liberation Mono", monospace' font-size="15" text-anchor="start" font-weight="normal" fill="#000" stroke="#000" stroke-width="0.3">SR_FW</text>
<line x1="1686.5" y1="632.1" x2="1726.5" y2="632.1" stroke="#ff0000" stroke-width="1.4"/>
<text x="1730.5" y="637.1" font-family='"Liberation Mono", monospace' font-size="15" text-anchor="start" font-weight="normal" fill="#000" stroke="#000" stroke-width="0.3">SR_BW</text>
<rect x="1652.5" y="685.5" width="131" height="28" fill="none" stroke="#000" stroke-width="1.1"/>
<rect x="1784" y="687" width="1.2" height="28" fill="#000"/>
<rect x="1654" y="714" width="131" height="1.2" fill="#000"/>
<line x1="1659.3" y1="699.8" x2="1699.3" y2="699.8" stroke="#4878f0" stroke-width="1.4"/>
<text x="1703.2" y="704.8" font-family='"Liberation Mono", monospace' font-size="15" text-anchor="start" font-weight="normal" fill="#000" stroke="#000" stroke-width="0.3">TOP [Hz]</text>
<rect x="1670.5" y="770.5" width="112" height="47" fill="none" stroke="#000" stroke-width="1.1"/>
<rect x="1783" y="772" width="1.2" height="47" fill="#000"/>
<rect x="1672" y="818" width="112" height="1.2" fill="#000"/>
<line x1="1677.2" y1="783.5" x2="1717.2" y2="783.5" stroke="#00cc00" stroke-width="1.4"/>
<text x="1721.4" y="788.5" font-family='"Liberation Mono", monospace' font-size="15" text-anchor="start" font-weight="normal" fill="#000" stroke="#000" stroke-width="0.3">CDC</text>
<line x1="1677.2" y1="802.2" x2="1717.2" y2="802.2" stroke="#008000" stroke-width="1.4"/>
<text x="1721.4" y="807.2" font-family='"Liberation Mono", monospace' font-size="15" text-anchor="start" font-weight="normal" fill="#000" stroke="#000" stroke-width="0.3">CDC_av</text>
<rect x="1661.5" y="856.5" width="121" height="29" fill="none" stroke="#000" stroke-width="1.1"/>
<rect x="1783" y="858" width="1.2" height="29" fill="#000"/>
<rect x="1663" y="886" width="121" height="1.2" fill="#000"/>
<line x1="1668.1" y1="870" x2="1708.1" y2="870" stroke="#ee82ee" stroke-width="1.4"/>
<text x="1712.2" y="875" font-family='"Liberation Mono", monospace' font-size="15" text-anchor="start" font-weight="normal" fill="#000" stroke="#000" stroke-width="0.3">Diamond</text>
<rect x="1643.5" y="941.5" width="139" height="46" fill="none" stroke="#000" stroke-width="1.1"/>
<rect x="1783" y="943" width="1.2" height="46" fill="#000"/>
<rect x="1645" y="988" width="139" height="1.2" fill="#000"/>
<line x1="1650.2" y1="955" x2="1690.2" y2="955" stroke="#ff0000" stroke-width="1.4"/>
<text x="1694.1" y="960" font-family='"Liberation Mono", monospace' font-size="15" text-anchor="start" font-weight="normal" fill="#000" stroke="#000" stroke-width="0.3">VXD_BW180</text>
<line x1="1650.2" y1="973.1" x2="1690.2" y2="973.1" stroke="#0000ff" stroke-width="1.4"/>
<text x="1694.1" y="978.1" font-family='"Liberation Mono", monospace' font-size="15" text-anchor="start" font-weight="normal" fill="#000" stroke="#000" stroke-width="0.3">VXD_BW270</text>
<rect x="0" y="0" width="1806" height="1" fill="#808080"/>
<rect x="0" y="0" width="1" height="1062" fill="#808080"/>
<rect x="902" y="2" width="2" height="1060" fill="#e6e6e6"/>
<rect x="1804" y="2" width="1.5" height="1060" fill="#e6e6e6"/>
</svg>
</body></html>
